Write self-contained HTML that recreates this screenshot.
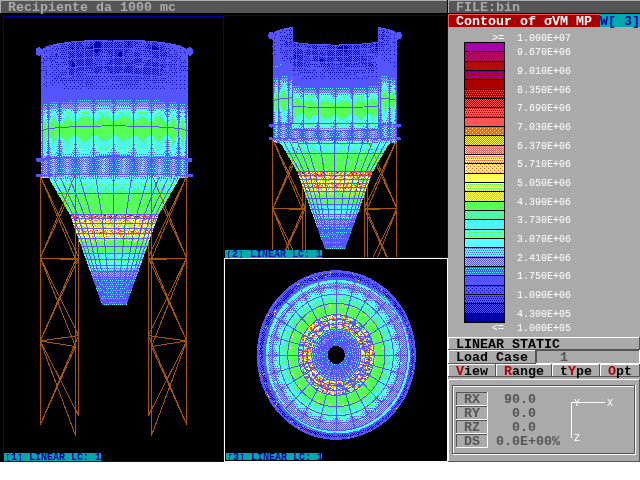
<!DOCTYPE html>
<html lang="it"><head><meta charset="utf-8"><title>Recipiente da 1000 mc</title>
<style>
html,body{margin:0;padding:0;background:#fff}
#s{position:relative;width:640px;height:480px;overflow:hidden;background:#fff}
#s svg{position:absolute;left:0;top:0}
.t,.q{will-change:transform}
.t{position:absolute;font:bold 13.3333px/14px "Liberation Mono",monospace;white-space:pre;letter-spacing:0}
.q{position:absolute;font:10px/8px "Liberation Mono",monospace;white-space:pre}
.v b{font-size:7.5px;display:inline-block;width:6px;text-align:center;position:relative;top:-1px}
.v{height:7px;padding-top:1px;overflow:hidden;font-weight:bold}
</style></head><body>
<div id="s">
<svg width="640" height="480" viewBox="0 0 640 480" shape-rendering="crispEdges">
<defs>
<pattern id="p1" width="4" height="4" patternUnits="userSpaceOnUse"><rect width="4" height="4" fill="#aa00aa"/></pattern>
<pattern id="p2" width="4" height="4" patternUnits="userSpaceOnUse"><rect width="4" height="4" fill="#aa00aa"/><path d="M0 0h1v1h-1zM2 2h1v1h-1z" fill="#aa0000"/></pattern>
<pattern id="p3" width="2" height="2" patternUnits="userSpaceOnUse"><rect width="2" height="2" fill="#aa00aa"/><rect width="1" height="1" fill="#aa0000"/><rect x="1" y="1" width="1" height="1" fill="#aa0000"/></pattern>
<pattern id="p4" width="4" height="4" patternUnits="userSpaceOnUse"><rect width="4" height="4" fill="#aa0000"/><path d="M0 0h1v1h-1zM2 0h1v1h-1zM1 2h1v1h-1zM3 2h1v1h-1z" fill="#aa00aa"/></pattern>
<pattern id="p5" width="4" height="4" patternUnits="userSpaceOnUse"><rect width="4" height="4" fill="#aa0000"/></pattern>
<pattern id="p6" width="4" height="4" patternUnits="userSpaceOnUse"><rect width="4" height="4" fill="#aa0000"/><path d="M0 0h1v1h-1zM2 0h1v1h-1zM1 2h1v1h-1zM3 2h1v1h-1z" fill="#ff5555"/></pattern>
<pattern id="p7" width="2" height="2" patternUnits="userSpaceOnUse"><rect width="2" height="2" fill="#aa0000"/><rect width="1" height="1" fill="#ff5555"/><rect x="1" y="1" width="1" height="1" fill="#ff5555"/></pattern>
<pattern id="p8" width="4" height="4" patternUnits="userSpaceOnUse"><rect width="4" height="4" fill="#ff5555"/><path d="M0 0h1v1h-1zM2 0h1v1h-1zM1 2h1v1h-1zM3 2h1v1h-1z" fill="#aa0000"/></pattern>
<pattern id="p9" width="4" height="4" patternUnits="userSpaceOnUse"><rect width="4" height="4" fill="#ff5555"/></pattern>
<pattern id="p10" width="4" height="4" patternUnits="userSpaceOnUse"><rect width="4" height="4" fill="#ff5555"/><path d="M0 0h1v1h-1zM2 2h1v1h-1z" fill="#ffff55"/></pattern>
<pattern id="p11" width="2" height="2" patternUnits="userSpaceOnUse"><rect width="2" height="2" fill="#ff5555"/><rect width="1" height="1" fill="#ffff55"/><rect x="1" y="1" width="1" height="1" fill="#ffff55"/></pattern>
<pattern id="p12" width="2" height="2" patternUnits="userSpaceOnUse"><rect width="2" height="2" fill="#ffff55"/><rect width="1" height="1" fill="#ff5555"/><rect x="1" y="1" width="1" height="1" fill="#ff5555"/></pattern>
<pattern id="p13" width="4" height="4" patternUnits="userSpaceOnUse"><rect width="4" height="4" fill="#ffff55"/><path d="M0 0h1v1h-1zM2 0h1v1h-1zM1 2h1v1h-1zM3 2h1v1h-1z" fill="#ff5555"/></pattern>
<pattern id="p14" width="4" height="4" patternUnits="userSpaceOnUse"><rect width="4" height="4" fill="#ffff55"/><path d="M0 0h1v1h-1zM2 2h1v1h-1z" fill="#ff5555"/></pattern>
<pattern id="p15" width="4" height="4" patternUnits="userSpaceOnUse"><rect width="4" height="4" fill="#ffff55"/></pattern>
<pattern id="p16" width="4" height="4" patternUnits="userSpaceOnUse"><rect width="4" height="4" fill="#ffff55"/><path d="M0 0h1v1h-1zM2 0h1v1h-1zM1 2h1v1h-1zM3 2h1v1h-1z" fill="#55ff55"/></pattern>
<pattern id="p17" width="2" height="2" patternUnits="userSpaceOnUse"><rect width="2" height="2" fill="#55ff55"/><rect width="1" height="1" fill="#ffff55"/><rect x="1" y="1" width="1" height="1" fill="#ffff55"/></pattern>
<pattern id="p18" width="4" height="4" patternUnits="userSpaceOnUse"><rect width="4" height="4" fill="#55ff55"/></pattern>
<pattern id="p19" width="4" height="4" patternUnits="userSpaceOnUse"><rect width="4" height="4" fill="#55ff55"/><path d="M0 0h1v1h-1zM2 2h1v1h-1z" fill="#55ffff"/></pattern>
<pattern id="p20" width="2" height="2" patternUnits="userSpaceOnUse"><rect width="2" height="2" fill="#55ff55"/><rect width="1" height="1" fill="#55ffff"/><rect x="1" y="1" width="1" height="1" fill="#55ffff"/></pattern>
<pattern id="p21" width="4" height="4" patternUnits="userSpaceOnUse"><rect width="4" height="4" fill="#55ffff"/><path d="M0 0h1v1h-1zM2 0h1v1h-1zM1 2h1v1h-1zM3 2h1v1h-1z" fill="#55ff55"/></pattern>
<pattern id="p22" width="4" height="4" patternUnits="userSpaceOnUse"><rect width="4" height="4" fill="#55ffff"/></pattern>
<pattern id="p23" width="4" height="4" patternUnits="userSpaceOnUse"><rect width="4" height="4" fill="#55ffff"/><path d="M0 0h1v1h-1zM2 0h1v1h-1zM1 2h1v1h-1zM3 2h1v1h-1z" fill="#5555ff"/></pattern>
<pattern id="p24" width="2" height="2" patternUnits="userSpaceOnUse"><rect width="2" height="2" fill="#55ffff"/><rect width="1" height="1" fill="#5555ff"/><rect x="1" y="1" width="1" height="1" fill="#5555ff"/></pattern>
<pattern id="p25" width="4" height="4" patternUnits="userSpaceOnUse"><rect width="4" height="4" fill="#5555ff"/><path d="M0 0h1v1h-1zM2 0h1v1h-1zM1 2h1v1h-1zM3 2h1v1h-1z" fill="#55ffff"/></pattern>
<pattern id="p26" width="4" height="4" patternUnits="userSpaceOnUse"><rect width="4" height="4" fill="#5555ff"/></pattern>
<pattern id="p27" width="4" height="4" patternUnits="userSpaceOnUse"><rect width="4" height="4" fill="#5555ff"/><path d="M0 0h1v1h-1zM2 2h1v1h-1z" fill="#0000aa"/></pattern>
<pattern id="p28" width="4" height="4" patternUnits="userSpaceOnUse"><rect width="4" height="4" fill="#5555ff"/><path d="M0 0h1v1h-1zM2 0h1v1h-1zM1 2h1v1h-1zM3 2h1v1h-1z" fill="#0000aa"/></pattern>
<pattern id="p29" width="2" height="2" patternUnits="userSpaceOnUse"><rect width="2" height="2" fill="#0000aa"/><rect width="1" height="1" fill="#5555ff"/><rect x="1" y="1" width="1" height="1" fill="#5555ff"/></pattern>
<pattern id="p30" width="4" height="4" patternUnits="userSpaceOnUse"><rect width="4" height="4" fill="#0000aa"/></pattern>
</defs>
<rect x="0" y="0" width="448" height="462" fill="#000000"/>
<rect x="0" y="0" width="447" height="13" fill="#555555"/>
<rect x="0" y="0" width="447" height="1" fill="#aaaaaa"/>
<rect x="0" y="0" width="1" height="13" fill="#aaaaaa"/>
<rect x="447" y="0" width="1" height="13" fill="#000000"/>
<rect x="448" y="0" width="192" height="13" fill="#555555"/>
<rect x="448" y="0" width="192" height="1" fill="#aaaaaa"/>
<rect x="448" y="0" width="1" height="13" fill="#aaaaaa"/>
<rect x="448" y="13" width="192" height="1" fill="#000000"/>
<rect x="448" y="14" width="152" height="13" fill="#aa0000"/>
<rect x="448" y="14" width="152" height="1" fill="#ff5555"/>
<rect x="448" y="14" width="1" height="13" fill="#ff5555"/>
<rect x="600" y="14" width="40" height="13" fill="#00aaaa"/>
<rect x="448" y="27" width="192" height="310" fill="#aaaaaa"/>
<!--models-->
<clipPath id="c1"><rect x="4" y="17" width="219" height="444"/></clipPath><g clip-path="url(#c1)">
<path d="M78.6 176.0L78.6 415.6M60.0 259.0L78.6 259.0M40.3 341.0L78.6 335.6M40.3 176.0L78.6 257.0M78.6 176.0L40.3 258.0M40.3 258.0L78.6 335.6M78.6 258.0L40.3 341.0M40.3 341.0L78.6 415.6M78.6 335.6L40.3 424.7M148.4 176.0L148.4 415.6M167.0 259.0L148.4 259.0M186.7 341.0L148.4 335.6M186.7 176.0L148.4 257.0M148.4 176.0L186.7 258.0M186.7 258.0L148.4 335.6M148.4 258.0L186.7 341.0M186.7 341.0L148.4 415.6M148.4 335.6L186.7 424.7" fill="none" stroke="#aa5500" stroke-width="1"/>
<path fill="url(#p3)" d="M0 0m114 216h2v1h-2z"/>
<path fill="url(#p5)" d="M0 0m104 215h2v1h-2zm26 0h2v1h-2z"/>
<path fill="url(#p6)" d="M0 0m156 214h2v1h-2zm-86 1h2v1h-2zm24 1h2v1h-2zm16 0h2v1h-2zm24 0h4v1h-4zm-58 1h2v1h-2zm56 14h2v1h-2z"/>
<path fill="url(#p7)" d="M0 0m116 215h2v1h-2zm-44 1h2v1h-2zm14 0h2v1h-2zm10 0h2v1h-2zm4 0h2v1h-2zm8 0h2v1h-2zm18 0h2v1h-2zm18 0h2v1h-2zm-42 1h2v1h-2zm8 0h2v1h-2zm-38 1h2v1h-2zm4 0h2v1h-2zm66 0h2v1h-2zm-28 1h2v1h-2zm32 11h2v1h-2z"/>
<path fill="url(#p8)" d="M0 0m72 214h2v1h-2zm80 0h2v1h-2zm-62 1h2v1h-2zm38 0h2v2h-2zm12 0h2v1h-2zm-58 1h2v1h-2zm56 0h2v1h-2zm18 0h2v1h-2zm-58 1h2v1h-2zm6 0h2v2h-2zm32 0h4v1h-4zm10 0h2v1h-2zm-54 1h2v1h-2zm20 0h2v1h-2zm26 0h2v1h-2zm-62 2h2v1h-2zm20 10h2v1h-2zm-18 1h2v1h-2zm52 0h2v1h-2zm14 0h2v1h-2zm-44 1h2v1h-2z"/>
<path fill="url(#p9)" d="M0 0m76 214h2v1h-2zm22 0h2v1h-2zm36 0h2v1h-2zm20 0h2v1h-2zm-66 1h2v1h-2zm4 0h2v1h-2zm4 0h2v1h-2zm4 0h2v1h-2zm38 0h2v1h-2zm-48 1h2v1h-2zm14 0h2v1h-2zm14 0h2v1h-2zm28 0h4v1h-4zm-54 1h2v1h-2zm22 0h2v1h-2zm8 0h2v1h-2zm-22 1h2v1h-2zm26 0h2v1h-2zm4 0h2v1h-2zm16 0h2v1h-2zm-72 1h2v1h-2zm70 0h2v1h-2zm-18 1h2v1h-2zm18 9h2v1h-2zm-42 1h2v1h-2zm18 0h2v1h-2zm-28 2h2v1h-2z"/>
<path fill="url(#p10)" d="M0 0m78 214h4v1h-4zm48 0h2v1h-2zm6 0h2v2h-2zm10 0h2v1h-2zm-70 1h2v1h-2zm4 0h2v1h-2zm4 0h2v1h-2zm30 0h2v1h-2zm10 0h2v1h-2zm34 0h2v1h-2zm-83 1h1v1h-1zm13 0h2v1h-2zm38 0h2v1h-2zm18 0h2v1h-2zm10 0h2v1h-2zm-62 1h2v1h-2zm6 0h2v1h-2zm14 0h2v1h-2zm4 0h2v1h-2zm4 0h2v1h-2zm8 0h2v1h-2zm10 0h2v1h-2zm14 0h2v1h-2zm-62 1h2v1h-2zm10 0h2v1h-2zm14 0h2v2h-2zm26 0h2v1h-2zm16 0h2v1h-2zm4 0h1v1h-1zm-58 1h2v1h-2zm4 0h2v1h-2zm52 0h2v1h-2zm-60 1h2v1h-2zm20 0h2v1h-2zm-36 8h2v1h-2zm6 0h2v1h-2zm8 0h2v1h-2zm26 1h2v1h-2zm22 0h2v1h-2zm-54 1h2v1h-2zm8 0h2v1h-2zm-10 1h2v1h-2zm20 0h2v1h-2zm6 0h2v1h-2zm10 0h4v1h-4zm-38 1h2v1h-2zm22 1h2v1h-2zm40 0h2v1h-2zm-24 1h2v1h-2zm14 0h2v1h-2z"/>
<path fill="url(#p11)" d="M0 0m74 214h2v1h-2zm36 0h4v1h-4zm10 0h4v1h-4zm24 0h2v1h-2zm-66 1h2v1h-2zm20 0h2v2h-2zm10 0h2v1h-2zm16 0h2v2h-2zm12 0h2v1h-2zm16 0h2v1h-2zm-72 1h2v1h-2zm8 0h2v1h-2zm14 0h2v1h-2zm4 0h2v1h-2zm6 0h2v1h-2zm8 0h2v1h-2zm12 0h2v1h-2zm-61 1h1v1h-1zm7 0h2v1h-2zm4 0h2v1h-2zm8 0h2v1h-2zm36 0h2v1h-2zm4 0h2v1h-2zm10 0h2v2h-2zm4 0h2v1h-2zm6 0h2v2h-2zm-52 1h2v1h-2zm8 0h2v1h-2zm8 0h4v1h-4zm14 0h2v1h-2zm4 0h2v1h-2zm-56 1h2v1h-2zm10 0h2v1h-2zm6 0h2v1h-2zm26 0h2v1h-2zm8 0h2v1h-2zm10 0h2v1h-2zm10 0h4v1h-4zm-68 1h2v1h-2zm10 0h2v1h-2zm16 0h2v1h-2zm28 0h2v1h-2zm22 0h2v1h-2zm-70 1h2v1h-2zm28 0h2v1h-2zm38 0h2v1h-2zm-72 1h2v1h-2zm-2 6h2v1h-2zm10 0h2v1h-2zm20 0h2v1h-2zm20 0h2v1h-2zm20 0h2v1h-2zm-30 1h2v1h-2zm-36 1h2v1h-2zm24 0h4v1h-4zm6 0h2v1h-2zm22 0h2v1h-2zm8 0h2v1h-2zm8 0h2v2h-2zm-62 1h2v1h-2zm6 0h2v1h-2zm36 0h2v1h-2zm-44 1h2v1h-2zm46 0h2v1h-2zm12 0h2v1h-2zm8 0h2v1h-2zm-50 1h2v1h-2zm30 1h2v1h-2zm14 0h2v1h-2zm6 0h2v1h-2zm-36 1h2v1h-2z"/>
<path fill="url(#p12)" d="M0 0m94 214h4v1h-4zm10 0h2v1h-2zm4 0h2v1h-2zm16 0h2v1h-2zm6 0h2v1h-2zm8 0h2v1h-2zm8 0h2v1h-2zm-64 1h4v1h-4zm20 0h2v1h-2zm12 0h2v1h-2zm8 0h2v1h-2zm20 0h4v1h-4zm6 0h2v1h-2zm-72 1h2v1h-2zm16 0h2v1h-2zm24 0h2v1h-2zm14 0h2v1h-2zm22 0h4v1h-4zm-78 1h2v1h-2zm32 0h2v1h-2zm12 0h4v1h-4zm10 0h2v1h-2zm14 0h2v1h-2zm-60 1h2v1h-2zm8 0h2v3h-2zm4 0h2v1h-2zm28 0h4v1h-4zm12 0h2v1h-2zm-56 1h4v1h-4zm6 0h2v2h-2zm20 0h2v1h-2zm48 0h2v1h-2zm4 0h1v1h-1zm-82 1h2v1h-2zm22 0h2v1h-2zm24 0h2v1h-2zm22 0h2v1h-2zm-20 1h2v1h-2zm16 0h2v1h-2zm-48 1h2v1h-2zm40 0h2v1h-2zm-22 1h2v1h-2zm8 5h4v1h-4zm24 0h2v1h-2zm4 0h2v1h-2zm6 0h2v1h-2zm-72 1h4v1h-4zm22 0h4v1h-4zm28 0h2v1h-2zm-44 1h2v1h-2zm6 0h4v1h-4zm22 0h4v1h-4zm6 0h2v3h-2zm16 0h2v2h-2zm18 0h1v2h-1zm-70 1h2v1h-2zm6 0h2v2h-2zm26 0h2v3h-2zm-36 1h2v1h-2zm24 0h2v1h-2zm26 0h2v1h-2zm10 0h4v1h-4zm10 1h2v2h-2zm-70 1h2v1h-2zm32 0h2v1h-2zm12 0h2v1h-2zm6 0h2v1h-2zm10 0h2v1h-2zm12 2h1v1h-1z"/>
<path fill="url(#p13)" d="M0 0m70 214h2v1h-2zm14 0h2v1h-2zm4 0h4v1h-4zm14 0h2v1h-2zm14 0h2v1h-2zm12 0h2v1h-2zm20 0h2v1h-2zm10 0h1v1h-1zm-72 1h2v1h-2zm20 0h2v1h-2zm20 0h2v1h-2zm24 0h2v1h-2zm6 0h2v1h-2zm-82 1h2v1h-2zm68 0h2v1h-2zm-70 1h2v1h-2zm8 0h2v1h-2zm4 0h2v2h-2zm12 0h2v1h-2zm4 0h2v1h-2zm32 0h2v1h-2zm22 0h2v2h-2zm-83 1h1v1h-1zm3 0h2v1h-2zm44 0h2v1h-2zm26 0h2v1h-2zm-38 1h2v1h-2zm6 0h2v1h-2zm12 0h2v2h-2zm4 0h4v1h-4zm22 0h2v1h-2zm-50 1h2v1h-2zm8 0h4v1h-4zm8 0h2v1h-2zm12 0h2v1h-2zm16 0h2v1h-2zm-72 1h4v1h-4zm16 0h2v1h-2zm10 0h2v1h-2zm16 0h4v1h-4zm20 0h4v1h-4zm6 0h2v1h-2zm8 0h2v1h-2zm-48 1h2v1h-2zm4 0h2v1h-2zm16 0h2v1h-2zm24 0h4v1h-4zm6 0h2v1h-2zm4 0h2v1h-2zm-70 1h2v1h-2zm18 0h2v1h-2zm-29 1h1v1h-1zm43 0h2v1h-2zm-26 1h2v1h-2zm62 0h2v1h-2zm-50 1h2v1h-2zm-22 1h2v1h-2zm14 0h2v1h-2zm20 0h2v1h-2zm12 0h2v1h-2zm-51 1h1v1h-1zm23 0h2v1h-2zm4 0h2v1h-2zm22 0h2v1h-2zm4 0h2v1h-2zm-52 1h2v3h-2zm8 0h2v1h-2zm8 0h4v1h-4zm12 0h2v1h-2zm26 0h2v1h-2zm16 0h2v1h-2zm4 0h3v1h-3zm-42 1h2v2h-2zm8 0h2v1h-2zm8 0h2v1h-2zm4 0h2v1h-2zm8 0h2v3h-2zm14 0h2v1h-2zm-56 1h2v1h-2zm4 0h2v1h-2zm14 0h2v2h-2zm28 0h4v1h-4zm-34 1h2v1h-2zm10 0h2v1h-2zm30 0h2v2h-2zm-66 1h6v1h-6zm10 0h2v1h-2zm6 0h4v1h-4zm32 0h2v1h-2zm4 0h2v2h-2zm18 0h2v1h-2zm-73 1h1v1h-1zm21 0h2v1h-2zm4 0h2v1h-2zm10 0h2v1h-2zm4 0h4v1h-4zm-22 1h2v1h-2zm44 0h2v1h-2zm-32 1h2v1h-2zm26 0h2v1h-2z"/>
<path fill="url(#p14)" d="M0 0m100 214h2v1h-2zm6 0h2v1h-2zm-32 1h2v1h-2zm20 0h2v1h-2zm-16 1h2v1h-2zm74 1h2v1h-2zm4 0h2v1h-2zm-78 1h2v1h-2zm10 0h2v1h-2zm14 0h2v1h-2zm6 0h2v1h-2zm-36 1h2v2h-2zm10 0h2v3h-2zm14 0h2v1h-2zm4 0h2v1h-2zm16 0h2v1h-2zm24 0h2v2h-2zm-18 1h2v1h-2zm8 0h2v1h-2zm4 0h2v1h-2zm16 0h4v1h-4zm-74 1h2v1h-2zm14 0h4v1h-4zm20 0h2v1h-2zm18 0h6v1h-6zm-46 1h4v1h-4zm26 0h4v1h-4zm16 0h2v2h-2zm16 0h2v1h-2zm-67 1h1v1h-1zm39 0h4v1h-4zm6 0h2v1h-2zm12 0h2v1h-2zm12 0h2v1h-2zm-62 1h2v1h-2zm18 0h2v2h-2zm8 0h2v2h-2zm16 0h2v1h-2zm12 0h2v1h-2zm6 0h2v1h-2zm8 0h2v1h-2zm6 0h1v1h-1zm-72 1h2v1h-2zm6 0h2v1h-2zm4 0h2v1h-2zm18 0h2v1h-2zm32 0h2v2h-2zm-68 1h2v1h-2zm44 0h2v1h-2zm-28 1h2v1h-2zm8 0h2v1h-2zm14 0h2v1h-2zm12 0h2v1h-2zm-28 1h2v1h-2zm12 0h2v1h-2zm12 0h2v1h-2zm12 0h4v1h-4zm-57 1h1v1h-1zm31 0h4v1h-4zm14 0h8v1h-8zm12 0h2v1h-2zm-36 2h2v1h-2zm10 0h2v1h-2zm18 0h4v1h-4zm22 0h2v1h-2zm-60 1h2v1h-2zm8 0h4v1h-4zm16 0h2v1h-2zm22 0h4v1h-4zm16 0h2v1h-2zm-22 1h2v2h-2zm14 0h2v1h-2zm-60 1h2v1h-2zm4 0h2v1h-2zm4 0h2v1h-2zm4 0h2v1h-2zm4 0h2v1h-2zm10 0h2v1h-2zm-26 1h4v1h-4zm10 0h4v1h-4zm20 0h2v1h-2zm40 0h1v1h-1zm-60 1h6v1h-6zm30 0h2v1h-2zm10 0h2v1h-2zm-12 1h2v1h-2z"/>
<path fill="url(#p15)" d="M0 0m112 215h2v1h-2zm22 0h2v1h-2zm-48 2h2v1h-2zm22 2h2v1h-2zm24 0h2v1h-2zm6 0h2v1h-2zm-46 1h2v1h-2zm10 0h2v1h-2zm4 0h2v1h-2zm30 0h4v1h-4zm-42 1h2v1h-2zm10 0h2v1h-2zm16 0h2v1h-2zm4 0h2v1h-2zm-51 1h1v1h-1zm7 0h2v1h-2zm6 0h4v2h-4zm8 0h6v1h-6zm12 0h2v1h-2zm8 0h4v1h-4zm8 0h2v1h-2zm10 0h6v1h-6zm20 0h2v1h-2zm-56 1h4v1h-4zm14 0h2v1h-2zm6 0h2v1h-2zm18 0h2v1h-2zm4 0h2v1h-2zm6 0h2v1h-2zm4 0h2v1h-2zm-74 1h2v2h-2zm4 0h2v2h-2zm4 0h2v1h-2zm4 0h2v1h-2zm6 0h2v1h-2zm32 0h2v1h-2zm8 0h2v1h-2zm4 0h2v1h-2zm6 0h4v1h-4zm-40 1h2v1h-2zm28 0h2v1h-2zm18 0h2v1h-2zm-68 1h2v1h-2zm4 0h2v1h-2zm16 0h2v1h-2zm6 0h4v1h-4zm10 0h2v1h-2zm4 0h2v1h-2zm6 0h2v1h-2zm6 0h4v1h-4zm12 0h2v1h-2zm-70 1h2v1h-2zm12 0h2v1h-2zm6 0h2v1h-2zm14 0h2v1h-2zm16 0h2v1h-2zm6 0h2v1h-2zm10 0h2v1h-2zm10 0h2v1h-2zm4 0h2v2h-2zm-72 1h2v1h-2zm14 0h2v1h-2zm10 0h2v1h-2zm26 0h2v1h-2zm6 0h2v1h-2zm6 0h2v2h-2zm-56 1h6v1h-6zm12 0h2v1h-2zm14 0h2v1h-2zm-24 1h2v1h-2zm12 0h2v1h-2zm30 0h2v1h-2zm-14 1h2v1h-2zm-40 1h2v1h-2zm14 0h2v1h-2zm18 0h2v1h-2zm14 0h2v1h-2zm4 0h2v1h-2zm-24 1h2v1h-2zm4 0h6v1h-6zm18 0h2v1h-2zm12 0h2v2h-2zm-42 1h2v1h-2zm14 0h2v1h-2zm6 0h2v1h-2zm32 0h2v1h-2zm-69 1h1v1h-1zm7 0h2v1h-2zm14 0h12v1h-12zm20 0h2v1h-2zm4 0h2v2h-2zm10 0h2v1h-2zm10 0h4v1h-4zm6 0h2v1h-2zm-60 1h2v2h-2zm16 0h2v1h-2zm6 0h2v2h-2zm6 0h2v1h-2zm24 0h4v1h-4zm-58 1h4v1h-4zm12 0h4v1h-4zm6 0h2v1h-2zm20 0h2v1h-2zm20 0h2v1h-2zm6 0h2v1h-2zm-62 1h2v1h-2zm20 0h2v1h-2zm8 0h2v1h-2zm6 0h2v1h-2z"/>
<path fill="url(#p16)" d="M0 0m86 214h2v1h-2zm50 0h2v1h-2zm-16 4h2v1h-2zm-26 1h2v1h-2zm28 0h2v1h-2zm12 0h2v1h-2zm8 0h2v1h-2zm-62 1h2v2h-2zm6 0h2v1h-2zm70 0h1v1h-1zm-54 1h2v2h-2zm6 0h2v1h-2zm10 0h2v2h-2zm24 0h6v1h-6zm10 0h2v1h-2zm-76 1h2v1h-2zm16 0h2v1h-2zm50 0h2v1h-2zm6 0h2v1h-2zm-68 1h2v1h-2zm10 0h4v1h-4zm16 0h2v1h-2zm16 0h2v1h-2zm6 0h2v1h-2zm4 0h2v1h-2zm18 0h4v1h-4zm-56 1h2v1h-2zm6 0h2v2h-2zm4 0h2v3h-2zm4 0h2v1h-2zm4 0h4v1h-4zm8 0h2v1h-2zm6 0h2v1h-2zm26 0h2v1h-2zm-68 1h2v1h-2zm12 0h2v1h-2zm18 0h6v1h-6zm8 0h2v1h-2zm4 0h4v1h-4zm10 0h2v1h-2zm8 0h4v1h-4zm10 0h1v1h-1zm-78 1h2v2h-2zm12 0h6v1h-6zm8 0h4v1h-4zm34 0h2v1h-2zm6 0h4v1h-4zm16 0h2v1h-2zm-70 1h2v1h-2zm26 0h4v1h-4zm12 0h2v1h-2zm26 0h2v1h-2zm4 0h2v1h-2zm-50 1h2v1h-2zm14 0h2v2h-2zm24 0h2v2h-2zm10 0h2v1h-2zm-66 1h2v1h-2zm14 0h2v1h-2zm14 0h2v1h-2zm-32 1h2v1h-2zm44 0h2v1h-2zm20 0h2v1h-2zm-62 1h2v1h-2zm20 0h2v1h-2zm50 0h2v1h-2zm-6 1h2v1h-2zm-66 1h2v1h-2zm14 0h4v1h-4zm20 0h2v1h-2zm-30 1h2v1h-2zm8 0h2v1h-2zm14 0h2v1h-2zm-26 1h2v1h-2zm18 0h2v1h-2zm28 0h2v1h-2zm4 0h4v1h-4zm6 0h2v1h-2zm6 0h2v1h-2zm6 0h2v1h-2zm-68 1h8v1h-8zm20 0h2v4h-2zm10 0h2v1h-2zm4 0h4v2h-4zm6 0h2v1h-2zm8 0h4v1h-4zm8 0h4v1h-4zm10 0h6v1h-6zm-58 1h2v1h-2zm4 0h2v1h-2zm12 0h2v1h-2zm26 0h2v1h-2zm6 0h6v1h-6zm-54 1h2v1h-2zm10 0h6v1h-6zm18 0h2v1h-2zm8 0h2v1h-2zm4 0h2v1h-2zm14 0h2v1h-2zm4 0h2v1h-2zm8 0h4v1h-4zm-40 1h2v1h-2zm6 0h2v1h-2zm32 0h2v1h-2zm4 0h2v1h-2zm-69 1h1v1h-1zm23 0h2v1h-2zm28 0h2v1h-2z"/>
<path fill="url(#p17)" d="M0 0m69 213h1v1h-1zm5 0h2v1h-2zm6 0h4v1h-4zm8 0h4v1h-4zm8 0h2v1h-2zm6 0h8v1h-8zm12 0h2v1h-2zm8 0h2v1h-2zm8 0h2v1h-2zm4 0h4v1h-4zm10 0h2v1h-2zm4 0h4v1h-4zm10 0h1v1h-1zm-66 1h2v1h-2zm26 0h2v2h-2zm22 0h2v1h-2zm10 0h2v1h-2zm-70 4h2v1h-2zm68 0h2v1h-2zm-28 1h2v1h-2zm-22 1h2v1h-2zm48 0h4v1h-4zm-68 1h2v1h-2zm8 0h2v1h-2zm14 0h2v1h-2zm6 0h2v1h-2zm20 0h2v3h-2zm-14 1h2v1h-2zm26 0h2v1h-2zm-62 1h2v1h-2zm18 0h2v1h-2zm6 0h2v1h-2zm20 0h2v1h-2zm16 0h2v1h-2zm10 0h2v2h-2zm8 0h1v1h-1zm-70 1h2v1h-2zm4 0h4v1h-4zm8 0h2v1h-2zm14 0h2v1h-2zm8 0h2v1h-2zm10 0h2v1h-2zm10 0h2v1h-2zm-62 1h2v1h-2zm4 0h2v1h-2zm6 0h2v1h-2zm22 0h2v1h-2zm12 0h2v1h-2zm4 0h2v2h-2zm26 0h2v2h-2zm-72 1h2v1h-2zm16 0h2v1h-2zm16 0h6v1h-6zm30 0h2v1h-2zm6 0h2v1h-2zm-58 1h2v1h-2zm8 0h2v1h-2zm4 0h4v1h-4zm18 0h2v1h-2zm16 0h4v1h-4zm8 0h4v1h-4zm-60 1h2v1h-2zm8 0h2v1h-2zm32 0h2v1h-2zm26 1h2v1h-2zm-66 1h2v1h-2zm16 0h2v1h-2zm40 0h2v1h-2zm6 0h2v1h-2zm-54 1h2v1h-2zm-10 1h2v1h-2zm40 0h2v1h-2zm4 0h2v1h-2zm-38 1h4v1h-4zm30 0h4v1h-4zm6 0h2v1h-2zm8 0h2v1h-2zm4 0h2v1h-2zm4 0h2v1h-2zm-52 1h2v3h-2zm14 0h2v1h-2zm40 0h4v1h-4zm-28 1h2v1h-2zm4 0h2v1h-2zm4 0h2v1h-2zm6 0h2v1h-2zm10 0h2v1h-2zm-34 1h2v1h-2zm-24 1h4v1h-4zm14 0h2v1h-2zm12 0h2v1h-2zm4 0h2v1h-2zm8 0h2v1h-2zm8 0h2v1h-2zm6 0h2v1h-2zm18 0h2v1h-2zm-70 1h2v1h-2zm4 0h2v1h-2zm4 0h2v1h-2zm10 0h2v3h-2zm14 0h2v1h-2zm4 0h2v1h-2zm10 0h10v1h-10zm12 0h2v1h-2zm6 0h4v1h-4zm-62 1h6v1h-6zm10 0h2v1h-2zm10 0h6v1h-6zm8 0h4v1h-4zm6 0h8v1h-8zm12 0h2v1h-2zm8 0h4v3h-4zm8 0h2v2h-2zm4 0h2v1h-2zm-64 1h2v1h-2zm4 0h2v1h-2zm6 0h2v1h-2zm8 0h2v1h-2zm4 0h2v1h-2zm4 0h2v1h-2zm6 0h2v1h-2zm10 0h2v1h-2zm4 0h2v1h-2zm20 0h1v1h-1zm-69 1h1v1h-1zm5 0h2v1h-2zm6 0h4v1h-4zm12 0h4v1h-4zm8 0h4v1h-4zm8 0h2v1h-2zm10 0h4v1h-4zm16 0h2v1h-2zm-52 1h2v1h-2z"/>
<path fill="url(#p18)" d="M0 0m101 117h5v1h-5zm20 0h5v1h-5zm-54 1h2v1h-2zm15 0h6v1h-6zm18 0h8v1h-8zm20 0h7v1h-7zm20 0h5v1h-5zm18 0h3v1h-3zm-93 1h5v1h-5zm16 0h8v1h-8zm18 0h10v1h-10zm19 0h11v1h-11zm20 0h9v1h-9zm19 0h5v1h-5zm15 0h1v1h-1zm-120 1h3v1h-3zm13 0h6v1h-6zm14 0h12v1h-12zm18 0h14v1h-14zm19 0h15v1h-15zm21 0h11v1h-11zm19 0h6v1h-6zm16 0h3v1h-3zm-128 1h2v3h-2zm8 0h4v2h-4zm12 0h8v1h-8zm13 0h16v1h-16zm17 0h39v1h-39zm40 0h16v1h-16zm20 0h9v1h-9zm17 0h4v2h-4zm11 0h1v1h-1zm-119 1h12v1h-12zm13 0h88v1h-88zm105 0h3v3h-3zm-130 1h6v1h-6zm11 0h103v1h-103zm108 0h6v1h-6zm-126 1h3v1h-3zm7 0h7v1h-7zm10 0h106v1h-106zm108 0h8v1h-8zm-126 1h4v1h-4zm7 0h127v1h-127zm130 0h5v1h-5zm-137 1h5v1h-5zm6 0h136v1h-136zm138 0h1v2h-1zm-144 1h143v1h-143zm-2 1h147v6h-147zm0 6h7v1h-7zm8 0h9v1h-9zm12 0h32v1h-32zm33 0h19v1h-19zm21 0h18v1h-18zm19 0h32v1h-32zm35 0h9v1h-9zm10 0h9v1h-9zm-138 1h6v1h-6zm9 0h7v1h-7zm13 0h10v1h-10zm14 0h14v1h-14zm20 0h13v1h-13zm20 0h14v1h-14zm19 0h14v1h-14zm18 0h11v1h-11zm16 0h7v1h-7zm10 0h8v1h-8zm-139 1h1v1h-1zm2 0h4v1h-4zm8 0h6v1h-6zm13 0h8v1h-8zm15 0h10v1h-10zm20 0h10v1h-10zm20 0h10v1h-10zm19 0h10v1h-10zm17 0h8v1h-8zm16 0h5v1h-5zm10 0h4v1h-4zm6 0h1v3h-1zm-144 1h3v1h-3zm9 0h4v2h-4zm13 0h6v1h-6zm16 0h7v1h-7zm19 0h7v1h-7zm20 0h7v1h-7zm19 0h7v1h-7zm17 0h7v1h-7zm15 0h4v1h-4zm10 0h3v2h-3zm-137 1h2v4h-2zm21 0h5v1h-5zm17 0h5v1h-5zm19 0h5v1h-5zm20 0h5v1h-5zm19 0h5v1h-5zm17 0h5v1h-5zm15 0h3v2h-3zm-120 1h3v1h-3zm14 0h3v1h-3zm92 0h3v1h-3zm24 0h2v2h-2zm-129 1h2v1h-2zm119 0h2v1h-2zm10 1h1v1h-1zm-122 51h1v1h-1zm7 0h1v1h-1zm10 0h2v1h-2zm13 0h2v1h-2zm15 0h2v1h-2zm15 0h3v1h-3zm15 0h2v1h-2zm13 0h3v1h-3zm11 0h2v1h-2zm8 0h1v1h-1zm-107 1h2v1h-2zm6 0h3v1h-3zm10 0h5v1h-5zm13 0h5v1h-5zm14 0h6v1h-6zm16 0h5v1h-5zm15 0h5v1h-5zm13 0h4v1h-4zm11 0h3v1h-3zm8 0h2v1h-2zm-108 1h1v1h-1zm2 0h3v1h-3zm6 0h5v1h-5zm9 0h7v1h-7zm13 0h8v1h-8zm14 0h9v1h-9zm15 0h9v1h-9zm15 0h8v1h-8zm13 0h7v1h-7zm12 0h5v1h-5zm8 0h3v1h-3zm-105 1h4v1h-4zm5 0h7v1h-7zm9 0h10v1h-10zm12 0h11v1h-11zm14 0h12v1h-12zm15 0h12v1h-12zm15 0h11v1h-11zm14 0h9v1h-9zm11 0h7v1h-7zm9 0h4v1h-4zm5 0h1v1h-1zm-110 1h110v1h-110zm1 1h109v1h-109zm1 1h107v1h-107zm0 1h106v1h-106zm1 1h105v1h-105zm0 1h104v1h-104zm1 1h103v1h-103zm0 1h102v1h-102zm1 1h100v1h-100zm1 1h99v1h-99zm0 1h98v1h-98zm1 1h97v1h-97zm0 1h96v1h-96zm1 1h95v1h-95zm0 1h94v1h-94zm1 1h92v1h-92zm1 1h91v1h-91zm1 1h4v1h-4zm6 0h4v1h-4zm8 0h4v1h-4zm8 0h4v1h-4zm6 0h4v1h-4zm12 0h4v1h-4zm6 0h6v1h-6zm8 0h6v1h-6zm8 0h2v1h-2zm6 0h6v1h-6zm8 0h2v1h-2zm6 0h6v1h-6zm-70 1h2v1h-2zm6 5h2v1h-2zm8 2h2v1h-2zm-22 1h2v1h-2zm54 0h2v1h-2zm-46 1h2v1h-2zm22 0h2v1h-2zm36 0h2v1h-2zm-38 1h2v1h-2zm48 0h2v1h-2zm-56 1h2v1h-2zm18 0h2v1h-2zm20 0h4v1h-4zm6 0h4v1h-4zm-56 1h2v1h-2zm4 0h2v1h-2zm42 0h2v1h-2zm20 0h2v1h-2zm-64 1h2v1h-2zm32 0h2v1h-2zm16 0h2v1h-2zm8 0h2v1h-2zm-6 2h2v1h-2zm-8 1h2v1h-2zm12 1h2v1h-2zm-34 1h2v1h-2zm-27 1h1v1h-1zm43 0h2v1h-2zm4 1h2v1h-2zm-36 1h2v1h-2zm8 1h2v1h-2zm4 0h2v1h-2zm24 0h2v1h-2zm14 0h2v1h-2zm-32 1h2v2h-2zm16 0h2v2h-2zm4 0h2v1h-2zm6 0h2v1h-2zm10 0h4v1h-4zm-54 1h2v3h-2zm12 0h2v1h-2zm40 0h2v1h-2zm-61 1h1v1h-1zm13 0h2v1h-2zm30 0h4v1h-4zm6 0h4v1h-4zm10 0h4v1h-4zm-58 1h2v1h-2zm4 0h2v1h-2zm10 0h2v1h-2zm4 0h2v1h-2zm8 0h2v1h-2zm6 0h2v1h-2zm4 0h8v1h-8zm10 0h2v1h-2zm6 0h2v1h-2zm8 0h2v1h-2zm4 0h4v1h-4zm-64 1h4v1h-4zm6 0h4v1h-4zm8 0h8v1h-8zm12 0h4v1h-4zm8 0h4v1h-4zm6 0h8v1h-8zm18 0h6v1h-6zm8 0h3v1h-3zm-66 1h12v1h-12zm14 0h55v1h-55zm-14 1h68v1h-68zm1 1h67v2h-67zm0 2h66v1h-66zm1 1h65v2h-65zm0 2h64v1h-64zm1 1h63v1h-63z"/>
<path fill="url(#p19)" d="M0 0m101 115h5v1h-5zm20 0h5v1h-5zm-39 1h6v1h-6zm18 0h8v1h-8zm20 0h7v1h-7zm20 0h5v1h-5zm18 0h2v1h-2zm-93 1h5v1h-5zm16 0h8v1h-8zm18 0h2v1h-2zm7 0h3v1h-3zm13 0h2v1h-2zm7 0h3v1h-3zm12 0h9v1h-9zm19 0h5v1h-5zm-105 1h3v1h-3zm13 0h2v1h-2zm4 0h2v1h-2zm10 0h3v1h-3zm9 0h2v1h-2zm9 0h3v1h-3zm11 0h2v1h-2zm9 0h3v1h-3zm10 0h3v1h-3zm10 0h3v1h-3zm8 0h3v1h-3zm11 0h2v1h-2zm5 0h1v1h-1zm11 0h3v1h-3zm-128 1h2v2h-2zm8 0h4v1h-4zm12 0h1v2h-1zm6 0h2v1h-2zm8 0h3v1h-3zm11 0h2v1h-2zm7 0h3v1h-3zm13 0h3v1h-3zm7 0h2v1h-2zm13 0h3v1h-3zm7 0h2v1h-2zm11 0h2v1h-2zm8 0h2v1h-2zm7 0h1v1h-1zm9 0h1v2h-1zm2 0h2v1h-2zm9 0h1v1h-1zm-127 1h1v1h-1zm16 0h2v1h-2zm6 0h2v1h-2zm14 0h6v1h-6zm20 0h5v1h-5zm20 0h6v1h-6zm17 0h2v1h-2zm5 0h3v1h-3zm9 0h2v1h-2zm19 0h3v1h-3zm-118 1h1v1h-1zm9 0h5v1h-5zm21 0h1v1h-1zm40 0h1v1h-1zm17 0h4v1h-4zm13 0h1v1h-1zm12 0h1v2h-1zm6 0h1v1h-1zm2 0h1v1h-1zm-132 1h1v1h-1zm5 0h1v1h-1zm6 0h1v1h-1zm13 0h1v1h-1zm89 0h1v1h-1zm6 0h1v1h-1zm-124 1h1v1h-1zm11 0h1v1h-1zm4 0h1v1h-1zm104 0h2v1h-2zm4 0h1v1h-1zm7 0h1v1h-1zm-133 1h1v1h-1zm7 0h1v1h-1zm8 0h3v1h-3zm109 0h2v1h-2zm13 0h1v1h-1zm4 0h1v1h-1zm-135 1h1v1h-1zm128 0h1v1h-1zm2 0h1v1h-1zm8 0h1v1h-1zm-139 1h1v1h-1zm137 0h1v1h-1zm-144 1h2v1h-2zm145 0h1v1h-1zm-138 7h1v1h-1zm10 0h3v1h-3zm35 0h1v1h-1zm20 0h2v1h-2zm20 0h1v1h-1zm33 0h3v1h-3zm12 0h1v1h-1zm-131 1h1v1h-1zm2 0h1v1h-1zm8 0h1v1h-1zm4 0h2v1h-2zm12 0h4v1h-4zm18 0h6v1h-6zm19 0h7v1h-7zm21 0h5v1h-5zm19 0h4v1h-4zm15 0h1v1h-1zm4 0h1v1h-1zm8 0h1v1h-1zm2 0h1v1h-1zm-137 1h1v1h-1zm8 0h1v1h-1zm12 0h2v1h-2zm10 0h2v1h-2zm5 0h2v1h-2zm12 0h3v1h-3zm7 0h3v1h-3zm13 0h2v1h-2zm7 0h3v1h-3zm13 0h2v1h-2zm7 0h2v1h-2zm12 0h2v1h-2zm5 0h2v1h-2zm10 0h2v1h-2zm7 0h1v2h-1zm6 0h1v1h-1zm4 0h1v1h-1zm5 0h2v1h-2zm-139 1h1v1h-1zm5 0h1v2h-1zm5 0h1v1h-1zm7 0h2v1h-2zm8 0h1v1h-1zm7 0h3v1h-3zm10 0h2v1h-2zm9 0h3v1h-3zm10 0h3v1h-3zm11 0h2v1h-2zm9 0h3v1h-3zm10 0h2v1h-2zm9 0h3v1h-3zm9 0h1v1h-1zm8 0h1v1h-1zm12 0h1v2h-1zm9 0h1v1h-1zm-141 1h1v1h-1zm21 0h1v1h-1zm6 0h1v1h-1zm9 0h3v1h-3zm8 0h2v1h-2zm11 0h3v1h-3zm8 0h3v1h-3zm13 0h2v1h-2zm7 0h3v1h-3zm12 0h2v1h-2zm7 0h3v1h-3zm11 0h1v1h-1zm6 0h1v1h-1zm9 0h1v3h-1zm-116 1h1v2h-1zm9 0h2v1h-2zm5 0h2v1h-2zm11 0h9v1h-9zm19 0h9v1h-9zm20 0h9v1h-9zm20 0h8v1h-8zm17 0h2v1h-2zm5 0h2v1h-2zm20 0h1v3h-1zm6 0h1v1h-1zm-135 1h1v1h-1zm13 0h5v2h-5zm16 0h7v1h-7zm19 0h7v1h-7zm20 0h7v1h-7zm19 0h7v1h-7zm18 0h5v2h-5zm17 0h1v1h-1zm-122 1h3v2h-3zm30 0h5v1h-5zm19 0h5v1h-5zm20 0h6v1h-6zm19 0h5v1h-5zm32 0h3v3h-3zm11 0h1v1h-1zm-139 1h2v3h-2zm22 0h3v1h-3zm17 0h4v1h-4zm58 0h4v1h-4zm17 0h4v1h-4zm24 0h2v2h-2zm-129 1h2v1h-2zm129 1h1v1h-1zm-125 43h1v1h-1zm7 0h2v1h-2zm11 0h2v1h-2zm14 0h2v1h-2zm15 0h3v1h-3zm17 0h2v1h-2zm15 0h3v1h-3zm14 0h2v1h-2zm12 0h1v1h-1zm8 0h1v1h-1zm-113 1h2v1h-2zm7 0h3v1h-3zm10 0h5v1h-5zm14 0h5v1h-5zm15 0h5v1h-5zm16 0h6v1h-6zm16 0h4v1h-4zm14 0h4v1h-4zm12 0h2v1h-2zm8 0h1v1h-1zm-114 1h1v1h-1zm3 0h2v1h-2zm6 0h4v1h-4zm10 0h6v1h-6zm13 0h7v1h-7zm15 0h8v1h-8zm16 0h8v1h-8zm15 0h8v1h-8zm14 0h7v1h-7zm12 0h5v1h-5zm9 0h2v1h-2zm-110 1h3v1h-3zm5 0h7v1h-7zm10 0h9v1h-9zm13 0h10v1h-10zm14 0h12v1h-12zm16 0h11v1h-11zm16 0h10v1h-10zm14 0h9v1h-9zm12 0h6v1h-6zm8 0h5v1h-5zm6 0h1v1h-1zm-114 1h13v1h-13zm14 0h57v1h-57zm58 0h13v1h-13zm14 0h28v1h-28zm-87 1h3v1h-3zm4 0h6v1h-6zm7 0h9v1h-9zm11 0h11v1h-11zm13 0h13v1h-13zm15 0h13v1h-13zm16 0h12v1h-12zm14 0h11v1h-11zm14 0h8v1h-8zm10 0h6v1h-6zm7 0h3v2h-3zm-110 1h2v1h-2zm4 0h4v1h-4zm7 0h7v1h-7zm12 0h8v1h-8zm13 0h9v1h-9zm15 0h10v1h-10zm15 0h10v1h-10zm15 0h8v1h-8zm12 0h7v1h-7zm10 0h5v1h-5zm-102 1h1v2h-1zm4 0h3v1h-3zm8 0h4v1h-4zm11 0h6v1h-6zm14 0h6v1h-6zm15 0h6v1h-6zm15 0h6v1h-6zm14 0h5v1h-5zm12 0h5v1h-5zm10 0h3v1h-3zm6 0h2v1h-2zm-104 1h1v1h-1zm8 0h2v1h-2zm12 0h2v1h-2zm13 0h3v1h-3zm15 0h3v1h-3zm15 0h3v1h-3zm14 0h3v1h-3zm12 0h2v1h-2zm9 0h2v1h-2zm6 0h1v1h-1zm-54 19h2v1h-2zm4 6h2v1h-2zm36 1h2v1h-2zm-80 2h2v1h-2zm4 0h2v1h-2zm-2 1h2v1h-2zm54 0h2v1h-2zm-8 2h2v1h-2zm-18 1h2v1h-2zm-16 1h2v1h-2zm24 0h2v1h-2zm24 1h2v1h-2zm-38 3h2v1h-2zm4 6h2v1h-2zm-16 1h2v1h-2zm8 0h2v1h-2zm38 0h2v1h-2zm-42 1h2v1h-2zm20 0h2v1h-2zm22 1h2v1h-2zm-49 10h62v2h-62zm1 2h61v1h-61z"/>
<path fill="url(#p20)" d="M0 0m101 112h5v1h-5zm20 0h5v1h-5zm-39 1h6v1h-6zm17 0h9v1h-9zm20 0h9v1h-9zm20 0h7v1h-7zm19 0h1v1h-1zm-93 1h5v1h-5zm15 0h9v1h-9zm18 0h12v1h-12zm20 0h11v1h-11zm20 0h9v1h-9zm19 0h5v1h-5zm-105 1h3v1h-3zm13 0h6v1h-6zm14 0h11v1h-11zm18 0h4v1h-4zm9 0h5v1h-5zm11 0h4v1h-4zm9 0h4v1h-4zm11 0h11v1h-11zm19 0h7v1h-7zm16 0h3v1h-3zm-128 1h2v3h-2zm8 0h4v2h-4zm12 0h8v1h-8zm14 0h4v1h-4zm10 0h3v1h-3zm8 0h4v1h-4zm12 0h4v1h-4zm8 0h4v1h-4zm11 0h4v1h-4zm9 0h4v1h-4zm9 0h4v1h-4zm10 0h3v1h-3zm5 0h3v1h-3zm11 0h4v2h-4zm11 0h1v1h-1zm-119 1h2v2h-2zm7 0h3v1h-3zm7 0h4v1h-4zm12 0h3v1h-3zm6 0h4v1h-4zm14 0h4v1h-4zm6 0h4v1h-4zm14 0h3v1h-3zm6 0h3v1h-3zm12 0h3v1h-3zm7 0h3v1h-3zm8 0h2v2h-2zm19 0h3v2h-3zm-130 1h1v4h-1zm4 0h1v1h-1zm16 0h3v1h-3zm6 0h2v1h-2zm13 0h3v1h-3zm4 0h3v1h-3zm16 0h7v1h-7zm20 0h7v1h-7zm18 0h3v1h-3zm5 0h3v1h-3zm18 0h1v1h-1zm4 0h1v3h-1zm-119 1h1v2h-1zm7 0h1v1h-1zm9 0h3v1h-3zm4 0h2v1h-2zm15 0h5v1h-5zm21 0h4v1h-4zm20 0h4v1h-4zm17 0h6v1h-6zm14 0h2v1h-2zm7 0h1v2h-1zm11 0h1v1h-1zm2 0h1v1h-1zm-121 1h2v1h-2zm11 0h4v1h-4zm77 0h3v1h-3zm14 0h1v1h-1zm-118 1h1v2h-1zm10 0h2v1h-2zm5 0h2v1h-2zm103 0h2v1h-2zm5 0h2v1h-2zm-126 1h1v2h-1zm7 0h1v2h-1zm7 0h2v1h-2zm3 0h2v1h-2zm105 0h2v1h-2zm3 0h2v1h-2zm8 0h1v1h-1zm4 0h1v2h-1zm4 0h1v2h-1zm3 0h1v3h-1zm-129 1h3v1h-3zm109 0h2v1h-2zm10 0h1v2h-1zm-130 1h1v1h-1zm2 0h1v1h-1zm130 0h1v1h-1zm-138 1h1v1h-1zm6 0h2v1h-2zm131 0h1v1h-1zm7 0h1v1h-1zm-144 1h2v1h-2zm145 0h1v1h-1zm-138 9h1v1h-1zm10 0h3v1h-3zm108 0h3v1h-3zm12 0h1v1h-1zm-131 1h1v1h-1zm2 0h1v1h-1zm8 0h2v1h-2zm4 0h1v1h-1zm13 0h3v1h-3zm18 0h4v1h-4zm19 0h5v1h-5zm20 0h5v1h-5zm19 0h3v1h-3zm15 0h2v1h-2zm3 0h2v1h-2zm9 0h1v1h-1zm2 0h1v1h-1zm-138 1h2v1h-2zm9 0h1v2h-1zm7 0h1v1h-1zm5 0h1v1h-1zm10 0h3v1h-3zm4 0h2v1h-2zm14 0h7v1h-7zm20 0h3v1h-3zm4 0h4v1h-4zm16 0h7v1h-7zm19 0h6v1h-6zm15 0h2v1h-2zm5 0h1v1h-1zm7 0h1v2h-1zm4 0h1v2h-1zm5 0h2v1h-2zm-144 1h1v1h-1zm5 0h1v3h-1zm10 0h1v3h-1zm6 0h2v1h-2zm9 0h3v1h-3zm5 0h3v1h-3zm13 0h4v1h-4zm6 0h3v1h-3zm14 0h4v1h-4zm6 0h4v1h-4zm14 0h4v1h-4zm6 0h3v1h-3zm13 0h3v1h-3zm4 0h4v1h-4zm11 0h2v1h-2zm7 0h1v3h-1zm14 0h1v3h-1zm-141 1h1v2h-1zm8 0h1v4h-1zm12 0h1v1h-1zm8 0h2v1h-2zm6 0h3v1h-3zm12 0h3v1h-3zm6 0h4v1h-4zm13 0h4v1h-4zm8 0h3v1h-3zm12 0h4v1h-4zm7 0h4v1h-4zm12 0h3v1h-3zm6 0h3v1h-3zm10 0h1v1h-1zm12 0h1v5h-1zm-112 1h2v2h-2zm7 0h3v2h-3zm7 0h4v1h-4zm11 0h3v1h-3zm8 0h4v1h-4zm11 0h4v1h-4zm9 0h4v1h-4zm11 0h4v2h-4zm9 0h3v1h-3zm10 0h4v1h-4zm8 0h3v2h-3zm8 0h2v3h-2zm25 0h1v4h-1zm-132 1h2v1h-2zm23 0h4v1h-4zm9 0h4v2h-4zm10 0h4v1h-4zm9 0h5v1h-5zm11 0h4v1h-4zm19 0h4v1h-4zm9 0h4v2h-4zm26 0h1v3h-1zm-116 1h1v2h-1zm9 0h2v1h-2zm5 0h3v1h-3zm9 0h5v1h-5zm19 0h13v1h-13zm20 0h13v1h-13zm20 0h4v1h-4zm18 0h3v1h-3zm26 0h1v3h-1zm-130 1h2v1h-2zm13 0h8v1h-8zm15 0h11v2h-11zm19 0h12v1h-12zm20 0h12v1h-12zm19 0h11v1h-11zm18 0h8v2h-8zm-103 1h4v4h-4zm12 0h7v2h-7zm34 0h11v1h-11zm20 0h11v1h-11zm20 0h10v1h-10zm33 0h4v3h-4zm12 0h1v1h-1zm-139 1h2v6h-2zm36 0h9v2h-9zm19 0h10v1h-10zm20 0h10v1h-10zm19 0h9v1h-9zm18 0h7v2h-7zm25 0h3v3h-3zm-116 1h6v1h-6zm34 0h9v1h-9zm21 0h8v1h-8zm19 0h8v1h-8zm-74 1h5v2h-5zm16 0h7v1h-7zm19 0h7v1h-7zm20 0h7v1h-7zm19 0h7v1h-7zm18 0h5v2h-5zm15 0h3v3h-3zm-120 1h3v2h-3zm30 0h5v1h-5zm19 0h5v1h-5zm20 0h5v1h-5zm19 0h5v1h-5zm42 0h2v2h-2zm-116 1h3v1h-3zm92 0h3v1h-3zm24 1h1v1h-1zm-126 34h1v1h-1zm6 0h2v1h-2zm12 0h2v1h-2zm14 0h3v1h-3zm16 0h3v1h-3zm16 0h4v1h-4zm16 0h4v1h-4zm15 0h3v1h-3zm12 0h2v1h-2zm8 0h1v1h-1zm-116 1h3v1h-3zm7 0h4v1h-4zm10 0h7v1h-7zm14 0h7v1h-7zm15 0h9v1h-9zm17 0h8v1h-8zm16 0h8v1h-8zm15 0h6v1h-6zm12 0h5v1h-5zm9 0h3v1h-3zm-115 1h4v1h-4zm6 0h7v1h-7zm10 0h10v1h-10zm13 0h12v1h-12zm15 0h13v1h-13zm17 0h13v1h-13zm16 0h11v1h-11zm14 0h11v1h-11zm13 0h8v1h-8zm9 0h5v1h-5zm6 0h1v1h-1zm-120 1h3v1h-3zm4 0h6v1h-6zm8 0h9v1h-9zm11 0h12v1h-12zm14 0h13v1h-13zm16 0h14v1h-14zm16 0h13v1h-13zm16 0h11v1h-11zm13 0h10v1h-10zm11 0h7v1h-7zm8 0h3v1h-3zm-116 1h2v1h-2zm4 0h5v1h-5zm8 0h7v1h-7zm12 0h9v1h-9zm14 0h10v1h-10zm15 0h11v1h-11zm17 0h10v1h-10zm14 0h10v1h-10zm14 0h8v1h-8zm10 0h6v1h-6zm7 0h4v1h-4zm-114 1h2v2h-2zm4 0h4v1h-4zm8 0h6v1h-6zm12 0h7v1h-7zm14 0h8v1h-8zm16 0h8v1h-8zm16 0h7v1h-7zm15 0h6v1h-6zm13 0h5v1h-5zm10 0h4v1h-4zm6 0h3v1h-3zm-109 1h2v1h-2zm9 0h3v1h-3zm12 0h4v1h-4zm14 0h4v1h-4zm16 0h4v1h-4zm15 0h5v1h-5zm15 0h4v1h-4zm13 0h3v1h-3zm9 0h2v1h-2zm7 0h1v1h-1zm-114 1h1v1h-1zm14 0h1v1h-1zm58 0h1v1h-1zm14 0h1v1h-1zm3 24h2v1h-2zm-68 12h2v1h-2zm52 0h2v1h-2zm8 13h2v1h-2zm-54 14h60v2h-60zm1 2h59v1h-59zm0 1h58v1h-58zm1 1h57v1h-57z"/>
<path fill="url(#p21)" d="M0 0m82 111h5v1h-5zm18 0h8v1h-8zm20 0h8v1h-8zm20 0h5v1h-5zm-74 1h4v1h-4zm14 0h9v1h-9zm18 0h3v1h-3zm8 0h4v1h-4zm12 0h3v1h-3zm8 0h3v1h-3zm12 0h9v1h-9zm19 0h5v1h-5zm-104 1h2v1h-2zm12 0h6v1h-6zm14 0h3v1h-3zm9 0h2v1h-2zm9 0h2v1h-2zm11 0h2v1h-2zm9 0h2v1h-2zm11 0h2v1h-2zm9 0h2v1h-2zm9 0h2v1h-2zm10 0h2v1h-2zm3 0h4v1h-4zm13 0h2v1h-2zm-120 1h4v1h-4zm12 0h1v1h-1zm6 0h2v1h-2zm8 0h2v1h-2zm11 0h2v1h-2zm7 0h2v1h-2zm14 0h1v1h-1zm6 0h2v1h-2zm13 0h2v1h-2zm7 0h2v1h-2zm11 0h2v1h-2zm8 0h2v1h-2zm7 0h1v1h-1zm9 0h4v1h-4zm-127 1h2v1h-2zm11 0h1v1h-1zm8 0h2v1h-2zm8 0h2v1h-2zm7 0h1v1h-1zm12 0h2v1h-2zm5 0h2v1h-2zm16 0h1v1h-1zm4 0h2v1h-2zm15 0h2v1h-2zm5 0h2v1h-2zm13 0h1v1h-1zm6 0h2v1h-2zm9 0h1v2h-1zm8 0h1v1h-1zm10 0h3v1h-3zm-130 1h1v2h-1zm12 0h1v1h-1zm9 0h1v1h-1zm5 0h1v1h-1zm14 0h2v1h-2zm4 0h1v1h-1zm17 0h1v1h-1zm3 0h1v1h-1zm16 0h2v1h-2zm4 0h1v1h-1zm14 0h1v1h-1zm4 0h2v1h-2zm17 0h1v3h-1zm5 0h1v2h-1zm6 0h1v1h-1zm2 0h1v1h-1zm-127 1h1v2h-1zm17 0h1v1h-1zm3 0h1v2h-1zm16 0h3v1h-3zm21 0h2v1h-2zm19 0h3v1h-3zm18 0h1v1h-1zm2 0h2v1h-2zm12 0h1v2h-1zm-102 1h1v2h-1zm12 0h1v1h-1zm19 0h1v1h-1zm58 0h2v1h-2zm-105 1h1v2h-1zm29 0h1v1h-1zm-32 1h1v2h-1zm14 0h1v1h-1zm4 0h1v1h-1zm104 0h1v1h-1zm4 0h1v1h-1zm7 0h1v2h-1zm8 0h1v2h-1zm3 0h1v2h-1zm-137 1h1v1h-1zm116 0h1v1h-1zm14 0h1v1h-1zm-13 1h1v1h-1zm-118 1h1v1h-1zm-1 1h1v1h-1zm130 0h1v1h-1zm7 0h1v1h-1zm-143 1h1v1h-1zm144 0h1v1h-1zm-138 11h1v1h-1zm12 0h1v1h-1zm107 0h1v1h-1zm11 0h1v1h-1zm-131 1h1v1h-1zm2 0h1v1h-1zm12 0h1v1h-1zm14 0h1v1h-1zm38 0h1v1h-1zm64 0h1v1h-1zm-135 1h1v1h-1zm15 0h1v1h-1zm17 0h2v1h-2zm19 0h2v1h-2zm20 0h2v1h-2zm20 0h2v1h-2zm18 0h1v1h-1zm14 0h1v1h-1zm4 0h1v1h-1zm16 0h1v1h-1zm-135 1h1v1h-1zm12 0h1v3h-1zm11 0h2v1h-2zm3 0h1v2h-1zm16 0h1v1h-1zm2 0h1v1h-1zm18 0h1v1h-1zm2 0h2v1h-2zm18 0h1v1h-1zm2 0h1v1h-1zm16 0h1v2h-1zm2 0h1v1h-1zm12 0h1v4h-1zm12 0h1v1h-1zm4 0h1v2h-1zm-107 1h1v2h-1zm18 0h2v1h-2zm3 0h2v1h-2zm17 0h2v1h-2zm4 0h1v1h-1zm16 0h2v1h-2zm3 0h2v1h-2zm18 0h2v1h-2zm-109 1h1v3h-1zm3 0h1v4h-1zm31 0h1v2h-1zm14 0h1v2h-1zm4 0h2v2h-2zm16 0h1v1h-1zm4 0h2v1h-2zm16 0h1v1h-1zm4 0h1v1h-1zm14 0h1v2h-1zm4 0h1v1h-1zm17 0h1v5h-1zm14 0h1v3h-1zm-128 1h1v4h-1zm7 0h1v4h-1zm9 0h1v2h-1zm38 0h2v1h-2zm6 0h1v1h-1zm14 0h2v1h-2zm5 0h2v1h-2zm18 0h2v1h-2zm-76 1h2v1h-2zm13 0h2v1h-2zm6 0h2v2h-2zm14 0h1v1h-1zm6 0h2v1h-2zm14 0h1v1h-1zm6 0h1v1h-1zm12 0h2v1h-2zm6 0h1v2h-1zm9 0h1v4h-1zm-112 1h1v4h-1zm20 0h2v2h-2zm7 0h1v1h-1zm12 0h1v1h-1zm19 0h2v2h-2zm8 0h1v1h-1zm12 0h2v2h-2zm7 0h2v2h-2zm12 0h1v1h-1zm27 0h1v5h-1zm12 0h1v4h-1zm-109 1h2v2h-2zm11 0h2v2h-2zm8 0h2v2h-2zm20 0h2v1h-2zm30 0h2v2h-2zm7 0h2v1h-2zm-91 1h2v1h-2zm8 0h1v1h-1zm37 0h2v1h-2zm9 0h3v1h-3zm11 0h2v1h-2zm9 0h2v2h-2zm18 0h1v1h-1zm-91 1h1v2h-1zm6 0h2v2h-2zm9 0h2v1h-2zm9 0h2v1h-2zm9 0h3v1h-3zm10 0h3v1h-3zm11 0h2v1h-2zm9 0h3v1h-3zm19 0h2v1h-2zm9 0h2v2h-2zm7 0h2v1h-2zm9 0h1v3h-1zm-116 1h1v2h-1zm24 0h3v1h-3zm8 0h3v1h-3zm11 0h3v1h-3zm8 0h4v1h-4zm12 0h3v1h-3zm8 0h4v1h-4zm11 0h3v1h-3zm8 0h3v1h-3zm17 0h1v1h-1zm19 0h1v3h-1zm-117 1h2v1h-2zm5 0h2v1h-2zm11 0h9v1h-9zm19 0h9v1h-9zm20 0h9v1h-9zm19 0h9v1h-9zm18 0h2v1h-2zm5 0h2v1h-2zm-109 1h4v1h-4zm13 0h5v1h-5zm16 0h7v1h-7zm20 0h6v1h-6zm20 0h6v1h-6zm19 0h6v1h-6zm17 0h5v1h-5zm14 0h4v1h-4zm12 0h1v1h-1zm-139 1h2v2h-2zm8 0h3v1h-3zm14 0h3v1h-3zm92 0h3v1h-3zm14 0h3v1h-3zm9 0h3v1h-3zm1 1h2v1h-2zm-128 29h1v1h-1zm7 0h2v1h-2zm12 0h2v1h-2zm14 0h3v1h-3zm16 0h4v1h-4zm18 0h3v1h-3zm16 0h3v1h-3zm15 0h3v1h-3zm12 0h2v1h-2zm9 0h1v1h-1zm-122 1h1v1h-1zm3 0h2v1h-2zm6 0h5v1h-5zm11 0h7v1h-7zm14 0h8v1h-8zm16 0h9v1h-9zm17 0h9v1h-9zm17 0h7v1h-7zm15 0h6v1h-6zm12 0h5v1h-5zm9 0h3v1h-3zm-119 1h1v1h-1zm2 0h4v1h-4zm5 0h8v1h-8zm10 0h11v1h-11zm14 0h12v1h-12zm16 0h13v1h-13zm17 0h13v1h-13zm16 0h12v1h-12zm15 0h11v1h-11zm13 0h8v1h-8zm10 0h5v1h-5zm6 0h1v1h-1zm-124 1h4v1h-4zm5 0h5v1h-5zm7 0h10v1h-10zm12 0h12v1h-12zm15 0h13v1h-13zm16 0h13v1h-13zm17 0h12v1h-12zm16 0h11v1h-11zm14 0h9v1h-9zm11 0h6v1h-6zm7 0h4v1h-4zm-119 1h2v1h-2zm5 0h4v1h-4zm8 0h6v1h-6zm13 0h7v1h-7zm14 0h8v1h-8zm17 0h8v1h-8zm16 0h8v1h-8zm16 0h7v1h-7zm13 0h6v1h-6zm11 0h4v1h-4zm7 0h2v1h-2zm-119 1h1v1h-1zm5 0h2v1h-2zm9 0h3v1h-3zm13 0h3v1h-3zm15 0h3v1h-3zm16 0h4v1h-4zm17 0h3v1h-3zm14 0h3v1h-3zm14 0h2v1h-2zm10 0h1v1h-1zm6 0h1v1h-1zm-61 34h2v1h-2zm-2 8h2v1h-2zm-24 31h57v1h-57zm0 1h56v1h-56zm1 1h55v1h-55z"/>
<path fill="url(#p22)" d="M0 0m100 109h8v1h-8zm20 0h7v1h-7zm21 0h1v1h-1zm-74 1h3v1h-3zm13 0h10v1h-10zm18 0h12v1h-12zm20 0h12v1h-12zm19 0h10v1h-10zm20 0h4v1h-4zm-93 1h8v1h-8zm15 0h3v1h-3zm8 0h4v1h-4zm10 0h3v1h-3zm11 0h3v1h-3zm9 0h3v1h-3zm11 0h3v1h-3zm9 0h3v1h-3zm8 0h3v1h-3zm10 0h8v1h-8zm17 0h1v1h-1zm-120 1h4v1h-4zm12 0h2v1h-2zm6 0h3v1h-3zm8 0h2v1h-2zm11 0h2v1h-2zm7 0h2v1h-2zm14 0h1v1h-1zm6 0h2v1h-2zm13 0h2v1h-2zm7 0h2v1h-2zm11 0h2v1h-2zm7 0h3v1h-3zm8 0h2v1h-2zm9 0h4v1h-4zm-127 1h2v2h-2zm8 0h1v1h-1zm3 0h1v1h-1zm8 0h2v1h-2zm8 0h2v1h-2zm7 0h1v1h-1zm12 0h2v1h-2zm5 0h2v1h-2zm15 0h2v1h-2zm5 0h2v1h-2zm15 0h2v1h-2zm5 0h2v1h-2zm13 0h2v1h-2zm6 0h2v1h-2zm9 0h1v2h-1zm8 0h1v1h-1zm3 0h2v1h-2zm7 0h3v2h-3zm-130 1h1v2h-1zm5 0h1v3h-1zm7 0h1v1h-1zm9 0h2v1h-2zm5 0h1v1h-1zm14 0h2v1h-2zm4 0h1v1h-1zm16 0h2v1h-2zm4 0h1v1h-1zm16 0h2v1h-2zm4 0h1v1h-1zm14 0h1v1h-1zm4 0h2v1h-2zm17 0h1v2h-1zm5 0h1v2h-1zm-113 1h1v3h-1zm11 0h1v1h-1zm3 0h2v1h-2zm16 0h1v1h-1zm2 0h1v1h-1zm18 0h3v1h-3zm20 0h1v1h-1zm2 0h1v1h-1zm15 0h2v1h-2zm3 0h2v1h-2zm12 0h1v2h-1zm-118 1h1v3h-1zm27 0h2v1h-2zm3 0h1v1h-1zm17 0h2v1h-2zm20 0h2v1h-2zm20 0h2v1h-2zm17 0h1v1h-1zm2 0h1v1h-1zm-109 1h1v3h-1zm31 0h2v1h-2zm77 0h1v1h-1zm25 0h1v3h-1zm8 0h1v3h-1zm3 0h1v3h-1zm-137 1h1v3h-1zm7 0h1v2h-1zm18 0h1v1h-1zm90 0h1v2h-1zm4 0h1v2h-1zm11 0h1v3h-1zm-119 1h1v1h-1zm105 1h1v1h-1zm-108 1h1v1h-1zm2 0h1v1h-1zm107 0h2v1h-2zm-118 1h1v1h-1zm10 0h1v1h-1zm118 0h1v1h-1zm-130 1h1v1h-1zm131 0h2v1h-2zm-137 1h2v1h-2zm18 12h1v1h-1zm-11 1h1v1h-1zm10 0h1v1h-1zm2 0h1v1h-1zm106 0h1v1h-1zm2 0h1v1h-1zm11 0h1v1h-1zm-132 1h1v1h-1zm2 0h1v1h-1zm12 0h1v2h-1zm116 0h1v1h-1zm9 0h1v1h-1zm-145 1h1v1h-1zm16 0h1v4h-1zm18 0h1v1h-1zm18 0h1v2h-1zm20 0h1v1h-1zm20 0h1v2h-1zm18 0h1v2h-1zm14 0h1v2h-1zm4 0h1v4h-1zm-119 1h1v5h-1zm24 0h2v1h-2zm39 0h2v1h-2zm63 0h1v6h-1zm-102 1h1v1h-1zm2 0h1v3h-1zm16 0h3v1h-3zm20 0h3v1h-3zm20 0h3v1h-3zm18 0h1v3h-1zm2 0h1v2h-1zm28 0h1v5h-1zm-118 1h1v5h-1zm11 0h2v1h-2zm19 0h1v2h-1zm2 0h1v1h-1zm18 0h1v1h-1zm2 0h2v1h-2zm18 0h1v1h-1zm2 0h1v1h-1zm-61 1h1v3h-1zm21 0h2v1h-2zm17 0h2v2h-2zm4 0h1v1h-1zm16 0h2v2h-2zm3 0h2v1h-2zm18 0h2v1h-2zm12 0h1v5h-1zm-121 1h1v7h-1zm34 0h1v3h-1zm14 0h2v1h-2zm4 0h1v1h-1zm20 0h2v2h-2zm20 0h1v2h-1zm14 0h2v1h-2zm4 0h1v2h-1zm31 0h1v6h-1zm-138 1h1v6h-1zm45 0h1v2h-1zm4 0h2v2h-2zm16 0h1v1h-1zm20 0h1v1h-1zm18 0h1v2h-1zm-93 1h1v5h-1zm16 0h2v1h-2zm38 0h2v2h-2zm6 0h1v1h-1zm14 0h2v2h-2zm5 0h2v2h-2zm18 0h2v2h-2zm17 0h1v5h-1zm-107 1h1v3h-1zm9 0h1v2h-1zm5 0h2v2h-2zm13 0h2v2h-2zm6 0h1v1h-1zm20 0h2v2h-2zm32 0h2v2h-2zm-97 1h1v4h-1zm45 0h2v1h-2zm14 0h1v1h-1zm20 0h1v1h-1zm6 0h1v1h-1zm18 0h1v1h-1zm9 0h2v1h-2zm24 0h1v5h-1zm-116 1h2v1h-2zm7 0h2v1h-2zm11 0h2v1h-2zm7 0h3v1h-3zm12 0h3v1h-3zm9 0h2v1h-2zm11 0h3v1h-3zm8 0h2v1h-2zm11 0h2v1h-2zm7 0h2v1h-2zm9 0h1v1h-1zm12 0h1v3h-1zm-112 1h2v1h-2zm7 0h3v1h-3zm8 0h3v1h-3zm10 0h3v1h-3zm9 0h4v1h-4zm10 0h3v1h-3zm10 0h4v1h-4zm10 0h3v1h-3zm10 0h3v1h-3zm9 0h3v1h-3zm8 0h3v1h-3zm8 0h2v1h-2zm-107 1h1v1h-1zm8 0h3v1h-3zm6 0h3v1h-3zm10 0h11v1h-11zm19 0h12v1h-12zm20 0h12v1h-12zm19 0h11v1h-11zm18 0h3v1h-3zm6 0h3v1h-3zm10 0h1v1h-1zm-120 1h5v1h-5zm13 0h7v1h-7zm16 0h9v1h-9zm19 0h9v1h-9zm20 0h9v1h-9zm19 0h9v1h-9zm18 0h7v1h-7zm15 0h5v1h-5zm10 0h1v1h-1zm-137 1h2v2h-2zm8 0h4v1h-4zm13 0h5v1h-5zm92 0h5v1h-5zm14 0h4v1h-4zm10 0h3v1h-3zm-128 1h2v1h-2zm120 0h1v1h-1zm9 0h2v1h-2zm0 23h1v1h-1zm-130 1h1v1h-1zm8 0h1v1h-1zm12 0h2v1h-2zm15 0h2v1h-2zm16 0h3v1h-3zm18 0h3v1h-3zm17 0h3v1h-3zm15 0h3v1h-3zm13 0h1v1h-1zm8 0h1v1h-1zm-122 1h3v1h-3zm7 0h5v1h-5zm11 0h7v1h-7zm14 0h8v1h-8zm17 0h8v1h-8zm17 0h9v1h-9zm17 0h8v1h-8zm16 0h7v1h-7zm13 0h5v1h-5zm9 0h3v1h-3zm-123 1h1v1h-1zm2 0h4v1h-4zm6 0h8v1h-8zm10 0h11v1h-11zm14 0h13v1h-13zm16 0h14v1h-14zm17 0h15v1h-15zm18 0h12v1h-12zm15 0h11v1h-11zm14 0h8v1h-8zm9 0h5v1h-5zm6 0h1v1h-1zm-126 1h3v1h-3zm4 0h6v1h-6zm8 0h10v1h-10zm12 0h12v1h-12zm15 0h13v1h-13zm17 0h14v1h-14zm17 0h13v1h-13zm16 0h12v1h-12zm15 0h9v1h-9zm11 0h7v1h-7zm8 0h4v1h-4zm-122 1h2v1h-2zm4 0h4v1h-4zm9 0h6v1h-6zm13 0h7v1h-7zm15 0h8v1h-8zm17 0h8v1h-8zm17 0h8v1h-8zm15 0h8v1h-8zm14 0h6v1h-6zm11 0h4v1h-4zm7 0h3v1h-3zm-121 1h1v1h-1zm5 0h1v1h-1zm9 0h2v1h-2zm13 0h3v1h-3zm15 0h4v1h-4zm17 0h4v1h-4zm17 0h3v1h-3zm15 0h3v1h-3zm14 0h2v1h-2zm10 0h2v1h-2zm7 0h1v1h-1zm-73 48h2v1h-2zm40 2h2v1h-2zm-55 29h55v1h-55zm0 1h54v1h-54zm1 1h53v1h-53zm0 1h52v2h-52z"/>
<path fill="url(#p23)" d="M0 0m98 106h12v1h-12zm20 0h12v1h-12zm-39 1h11v1h-11zm18 0h14v1h-14zm20 0h13v1h-13zm20 0h11v1h-11zm18 0h1v1h-1zm-92 1h10v2h-10zm15 0h13v1h-13zm18 0h15v1h-15zm20 0h15v1h-15zm20 0h13v1h-13zm18 0h10v1h-10zm-103 1h6v1h-6zm27 0h14v1h-14zm18 0h4v1h-4zm12 0h4v1h-4zm8 0h4v1h-4zm11 0h5v1h-5zm9 0h5v1h-5zm6 0h7v1h-7zm12 0h11v1h-11zm16 0h7v2h-7zm-124 1h1v1h-1zm4 0h7v2h-7zm12 0h5v1h-5zm8 0h4v1h-4zm7 0h3v1h-3zm13 0h2v1h-2zm5 0h3v1h-3zm15 0h2v1h-2zm5 0h3v1h-3zm15 0h2v1h-2zm5 0h2v2h-2zm12 0h3v1h-3zm6 0h4v1h-4zm8 0h4v1h-4zm19 0h3v1h-3zm-137 1h4v2h-4zm19 0h2v2h-2zm10 0h2v1h-2zm5 0h2v1h-2zm14 0h2v2h-2zm4 0h2v1h-2zm16 0h2v2h-2zm4 0h2v1h-2zm16 0h2v2h-2zm17 0h2v1h-2zm5 0h2v1h-2zm10 0h2v1h-2zm7 0h2v1h-2zm3 0h4v1h-4zm7 0h5v2h-5zm-130 1h2v2h-2zm6 0h2v2h-2zm17 0h1v1h-1zm3 0h2v2h-2zm18 0h2v1h-2zm20 0h2v1h-2zm20 0h2v1h-2zm15 0h2v1h-2zm3 0h2v2h-2zm12 0h1v2h-1zm6 0h1v1h-1zm5 0h2v1h-2zm12 0h1v5h-1zm-144 1h1v4h-1zm3 0h1v3h-1zm16 0h1v2h-1zm11 0h2v1h-2zm19 0h3v1h-3zm20 0h3v1h-3zm20 0h3v1h-3zm18 0h1v2h-1zm19 0h2v1h-2zm7 0h1v4h-1zm4 0h1v5h-1zm4 0h1v4h-1zm-134 1h1v4h-1zm7 0h1v4h-1zm17 0h1v1h-1zm2 0h1v1h-1zm17 0h2v1h-2zm20 0h2v1h-2zm20 0h2v1h-2zm19 0h1v1h-1zm12 0h2v1h-2zm5 0h1v4h-1zm-108 1h1v4h-1zm13 0h2v1h-2zm19 0h1v1h-1zm40 0h1v1h-1zm18 0h1v2h-1zm14 0h1v3h-1zm-90 1h1v1h-1zm91 2h1v2h-1zm2 0h1v2h-1zm-110 1h1v2h-1zm2 0h1v2h-1zm-11 1h1v2h-1zm118 0h2v1h-2zm10 0h1v2h-1zm-130 1h1v1h-1zm12 0h1v1h-1zm-18 1h1v1h-1zm6 0h2v1h-2zm131 0h2v1h-2zm7 0h1v2h-1zm-144 1h2v1h-2zm7 0h1v1h-1zm138 1h1v1h-1zm-127 13h1v1h-1zm108 0h1v1h-1zm11 0h1v1h-1zm-130 1h1v1h-1zm10 0h1v3h-1zm2 0h1v2h-1zm106 0h3v1h-3zm12 0h2v1h-2zm-136 1h1v1h-1zm5 0h1v1h-1zm2 0h1v3h-1zm117 0h1v2h-1zm2 0h1v2h-1zm9 0h1v3h-1zm8 0h2v1h-2zm-144 1h2v1h-2zm19 0h2v1h-2zm125 0h1v1h-1zm-144 1h1v2h-1zm20 0h1v6h-1zm14 0h1v2h-1zm76 0h1v3h-1zm14 0h2v1h-2zm-72 1h1v2h-1zm20 0h1v1h-1zm20 0h1v2h-1zm32 0h1v7h-1zm-108 1h1v8h-1zm17 0h2v1h-2zm39 0h2v2h-2zm56 0h1v8h-1zm-95 1h3v1h-3zm19 0h2v1h-2zm40 0h2v1h-2zm18 0h2v1h-2zm-101 1h1v8h-1zm24 0h1v2h-1zm2 0h1v4h-1zm16 0h3v2h-3zm20 0h3v1h-3zm20 0h3v3h-3zm18 0h3v1h-3zm-38 1h4v2h-4zm38 0h1v3h-1zm2 0h1v2h-1zm24 0h1v7h-1zm4 0h1v8h-1zm-119 1h2v1h-2zm12 0h2v3h-2zm19 0h1v2h-1zm2 0h2v3h-2zm-32 1h1v4h-1zm49 0h2v2h-2zm3 0h2v1h-2zm17 0h2v2h-2zm3 0h2v2h-2zm18 0h2v3h-2zm-76 1h2v2h-2zm15 0h2v2h-2zm23 0h3v1h-3zm35 0h2v2h-2zm15 0h2v1h-2zm-91 1h1v1h-1zm22 0h2v1h-2zm15 0h3v1h-3zm5 0h2v1h-2zm15 0h3v1h-3zm5 0h2v2h-2zm29 0h1v2h-1zm20 0h1v5h-1zm-141 1h1v4h-1zm3 0h1v4h-1zm10 0h2v2h-2zm16 0h2v1h-2zm5 0h2v1h-2zm13 0h2v1h-2zm5 0h3v1h-3zm15 0h2v1h-2zm5 0h3v1h-3zm15 0h2v1h-2zm18 0h2v1h-2zm5 0h2v1h-2zm16 0h2v1h-2zm-107 1h2v1h-2zm9 0h3v1h-3zm6 0h3v1h-3zm12 0h3v1h-3zm6 0h4v1h-4zm13 0h4v1h-4zm8 0h3v1h-3zm12 0h4v1h-4zm7 0h3v1h-3zm12 0h3v1h-3zm6 0h3v1h-3zm10 0h2v1h-2zm7 0h1v2h-1zm-120 1h2v1h-2zm6 0h1v1h-1zm6 0h3v1h-3zm8 0h3v1h-3zm7 0h15v1h-15zm19 0h15v2h-15zm20 0h15v1h-15zm20 0h14v1h-14zm17 0h4v1h-4zm9 0h3v1h-3zm13 0h2v1h-2zm12 0h1v5h-1zm-137 1h3v1h-3zm5 0h2v1h-2zm7 0h11v2h-11zm16 0h13v2h-13zm39 0h14v1h-14zm19 0h13v1h-13zm18 0h11v2h-11zm16 0h3v1h-3zm4 0h3v1h-3zm6 0h2v1h-2zm-137 1h4v2h-4zm7 0h7v2h-7zm47 0h2v1h-2zm40 0h12v1h-12zm33 0h7v2h-7zm10 0h5v2h-5zm-137 2h2v1h-2zm24 0h1v10h-1zm17 0h1v5h-1zm19 0h2v8h-2zm20 0h2v11h-2zm19 0h1v4h-1zm17 0h1v8h-1zm25 0h1v1h-1zm-131 1h1v10h-1zm120 0h1v13h-1zm9 1h1v17h-1zm-40 2h2v6h-2zm-58 1h2v3h-2zm-1 3h3v8h-3zm19 0h3v8h-3zm57 0h2v4h-2zm-92 2h2v1h-2zm74 0h3v6h-3zm-88 1h2v5h-2zm13 0h3v5h-3zm56 0h3v4h-3zm36 1h3v4h-3zm14 2h2v2h-2zm-49 1h2v1h-2zm-70 1h1v1h-1zm14 0h1v2h-1zm17 0h1v2h-1zm19 0h1v2h-1zm20 0h1v2h-1zm19 0h1v2h-1zm17 0h1v2h-1zm14 0h1v2h-1zm-120 2h2v1h-2zm12 0h5v1h-5zm16 0h7v1h-7zm18 0h9v1h-9zm20 0h9v1h-9zm20 0h7v1h-7zm18 0h5v1h-5zm15 0h2v1h-2zm-128 1h2v1h-2zm8 0h1v1h-1zm8 0h1v1h-1zm11 0h3v1h-3zm16 0h2v1h-2zm16 0h3v1h-3zm18 0h3v1h-3zm17 0h3v1h-3zm16 0h2v1h-2zm12 0h2v1h-2zm9 0h1v1h-1zm6 0h3v1h-3zm-140 1h8v1h-8zm10 0h3v1h-3zm6 0h7v1h-7zm11 0h9v1h-9zm15 0h10v1h-10zm16 0h11v1h-11zm18 0h11v1h-11zm18 0h9v1h-9zm15 0h9v1h-9zm14 0h6v1h-6zm9 0h4v1h-4zm6 0h3v1h-3zm4 0h3v1h-3zm4 0h1v1h-1zm-138 1h3v1h-3zm4 0h7v1h-7zm8 0h11v1h-11zm13 0h13v1h-13zm15 0h14v1h-14zm17 0h15v1h-15zm18 0h14v1h-14zm17 0h12v1h-12zm15 0h10v1h-10zm11 0h7v1h-7zm8 0h4v1h-4zm-125 1h2v1h-2zm5 0h4v1h-4zm9 0h6v1h-6zm13 0h7v1h-7zm15 0h9v1h-9zm17 0h9v1h-9zm18 0h8v1h-8zm16 0h8v1h-8zm15 0h6v1h-6zm11 0h4v1h-4zm7 0h3v1h-3zm-125 1h1v1h-1zm5 0h2v1h-2zm10 0h2v1h-2zm13 0h3v1h-3zm16 0h3v1h-3zm17 0h3v1h-3zm18 0h3v1h-3zm15 0h3v1h-3zm14 0h3v1h-3zm11 0h1v1h-1zm6 0h1v1h-1zm-87 87h51v1h-51zm0 1h50v2h-50zm1 2h49v1h-49zm0 1h48v1h-48z"/>
<path fill="url(#p24)" d="M0 0m79 103h11v1h-11zm18 0h14v1h-14zm20 0h13v1h-13zm20 0h11v1h-11zm-73 1h9v1h-9zm14 0h14v1h-14zm18 0h16v1h-16zm20 0h16v1h-16zm20 0h13v1h-13zm18 0h10v1h-10zm-100 1h3v1h-3zm8 0h12v2h-12zm15 0h15v1h-15zm18 0h18v1h-18zm20 0h17v1h-17zm20 0h15v2h-15zm18 0h12v2h-12zm17 0h4v1h-4zm-120 1h8v3h-8zm27 0h16v1h-16zm17 0h4v1h-4zm16 0h3v1h-3zm5 0h3v1h-3zm15 0h3v2h-3zm39 0h8v3h-8zm11 0h1v1h-1zm-136 1h3v1h-3zm18 0h13v1h-13zm14 0h3v1h-3zm14 0h3v1h-3zm4 0h3v1h-3zm17 0h2v1h-2zm3 0h3v1h-3zm20 0h3v1h-3zm14 0h3v1h-3zm4 0h3v1h-3zm4 0h10v1h-10zm24 0h5v3h-5zm-137 1h4v2h-4zm18 0h2v2h-2zm12 0h2v2h-2zm3 0h2v2h-2zm15 0h2v1h-2zm3 0h2v1h-2zm17 0h5v1h-5zm20 0h2v1h-2zm3 0h2v1h-2zm15 0h2v2h-2zm3 0h2v2h-2zm12 0h2v1h-2zm-114 1h1v1h-1zm7 0h1v3h-1zm35 0h4v1h-4zm20 0h4v1h-4zm20 0h4v1h-4zm33 0h1v4h-1zm4 0h1v4h-1zm18 0h1v3h-1zm-144 1h3v1h-3zm18 0h1v4h-1zm13 0h1v2h-1zm2 0h1v2h-1zm16 0h3v1h-3zm20 0h3v1h-3zm20 0h3v1h-3zm18 0h1v1h-1zm2 0h1v1h-1zm25 0h1v10h-1zm6 0h2v1h-2zm-90 1h2v1h-2zm20 0h2v1h-2zm20 0h2v1h-2zm17 0h3v1h-3zm-101 1h1v8h-1zm25 0h2v1h-2zm19 0h1v1h-1zm20 0h1v1h-1zm20 0h1v1h-1zm18 0h1v3h-1zm-93 1h1v6h-1zm17 0h1v2h-1zm90 0h2v1h-2zm3 0h1v5h-1zm-108 1h2v1h-2zm106 0h1v4h-1zm-125 1h1v4h-1zm19 0h1v4h-1zm-13 2h1v4h-1zm138 0h1v4h-1zm-18 1h1v2h-1zm12 0h1v2h-1zm-138 1h2v3h-2zm18 0h1v2h-1zm119 1h2v2h-2zm-130 1h1v1h-1zm137 0h2v1h-2zm-143 1h1v1h-1zm144 0h1v2h-1zm-127 16h1v3h-1zm-11 1h1v1h-1zm119 0h1v2h-1zm11 0h2v2h-2zm-131 1h2v1h-2zm139 0h1v1h-1zm-144 1h1v2h-1zm5 0h1v8h-1zm11 0h1v11h-1zm2 0h1v7h-1zm107 0h2v1h-2zm12 0h1v4h-1zm6 0h2v2h-2zm-136 1h1v14h-1zm117 0h1v8h-1zm2 0h1v10h-1zm9 0h1v15h-1zm-136 1h2v3h-2zm144 0h1v9h-1zm-110 2h1v5h-1zm-34 1h1v9h-1zm110 0h1v5h-1zm-58 1h1v3h-1zm-33 1h2v2h-2zm53 0h1v2h-1zm20 0h1v2h-1zm-72 2h1v6h-1zm13 0h2v1h-2zm19 0h2v1h-2zm20 0h2v1h-2zm20 0h2v1h-2zm32 0h2v1h-2zm-91 1h3v1h-3zm18 0h3v2h-3zm20 0h3v1h-3zm20 0h3v2h-3zm18 0h3v1h-3zm15 0h1v5h-1zm-91 1h1v1h-1zm2 0h1v2h-1zm36 0h4v1h-4zm38 0h1v2h-1zm2 0h1v2h-1zm17 0h1v4h-1zm-112 1h1v4h-1zm16 0h2v3h-2zm19 0h1v1h-1zm2 0h2v2h-2zm17 0h5v1h-5zm20 0h5v1h-5zm-55 1h2v2h-2zm15 0h2v2h-2zm20 0h6v1h-6zm20 0h2v1h-2zm3 0h2v1h-2zm15 0h2v2h-2zm3 0h2v2h-2zm-58 1h3v1h-3zm6 0h7v1h-7zm20 0h7v1h-7zm10 0h3v1h-3zm4 0h3v1h-3zm-70 1h7v1h-7zm17 0h8v1h-8zm18 0h9v1h-9zm20 0h9v1h-9zm20 0h8v1h-8zm17 0h7v1h-7zm-111 1h1v1h-1zm6 0h5v1h-5zm13 0h3v8h-3zm4 0h3v8h-3zm12 0h4v8h-4zm5 0h4v5h-4zm14 0h4v8h-4zm6 0h3v1h-3zm14 0h4v11h-4zm6 0h3v1h-3zm13 0h4v10h-4zm5 0h4v4h-4zm13 0h3v9h-3zm4 0h3v6h-3zm11 0h5v1h-5zm10 0h3v2h-3zm-137 1h2v2h-2zm7 0h2v16h-2zm3 0h2v1h-2zm51 0h4v15h-4zm20 0h4v15h-4zm46 0h2v5h-2zm3 0h2v17h-2zm-120 1h3v9h-3zm127 0h1v16h-1zm2 0h1v11h-1zm4 0h1v17h-1zm-143 1h3v8h-3zm100 1h3v12h-3zm-58 1h3v11h-3zm74 1h4v2h-4zm10 0h3v8h-3zm-107 2h4v3h-4zm5 0h4v2h-4zm12 0h3v8h-3zm19 0h3v3h-3zm62 0h3v8h-3zm-6 1h4v3h-4zm-86 1h3v6h-3zm69 0h3v6h-3zm-95 1h4v8h-4zm12 0h2v5h-2zm8 0h3v5h-3zm35 0h4v5h-4zm21 0h3v4h-3zm36 1h3v4h-3zm28 1h2v6h-2zm-13 1h2v2h-2zm-52 1h5v2h-5zm-64 1h3v1h-3zm9 0h4v2h-4zm5 0h4v2h-4zm12 0h4v1h-4zm5 0h4v1h-4zm13 0h5v1h-5zm6 0h5v1h-5zm20 0h5v1h-5zm14 0h4v1h-4zm5 0h4v1h-4zm12 0h4v2h-4zm5 0h4v2h-4zm10 0h3v2h-3zm-119 1h6v1h-6zm28 0h5v1h-5zm6 0h5v1h-5zm12 0h6v1h-6zm7 0h6v1h-6zm13 0h6v1h-6zm7 0h6v1h-6zm13 0h5v1h-5zm6 0h5v1h-5zm-93 1h3v1h-3zm5 0h4v1h-4zm5 0h5v1h-5zm10 0h11v1h-11zm18 0h11v1h-11zm20 0h11v1h-11zm20 0h11v1h-11zm18 0h11v1h-11zm16 0h5v1h-5zm6 0h4v1h-4zm6 0h3v1h-3zm6 0h2v1h-2zm-139 1h3v1h-3zm5 0h3v1h-3zm4 0h2v1h-2zm3 0h2v1h-2zm3 0h4v1h-4zm5 0h3v1h-3zm6 0h4v1h-4zm7 0h4v1h-4zm7 0h6v1h-6zm8 0h5v1h-5zm9 0h5v1h-5zm8 0h6v1h-6zm10 0h5v1h-5zm8 0h6v1h-6zm9 0h5v1h-5zm8 0h5v1h-5zm8 0h5v1h-5zm7 0h4v1h-4zm7 0h3v1h-3zm5 0h3v1h-3zm5 0h2v1h-2zm3 0h2v1h-2zm3 0h2v1h-2zm5 0h4v1h-4zm-135 1h2v1h-2zm5 0h3v1h-3zm10 0h4v1h-4zm13 0h6v1h-6zm16 0h6v1h-6zm17 0h7v1h-7zm18 0h7v1h-7zm16 0h6v1h-6zm15 0h5v1h-5zm11 0h3v1h-3zm7 0h2v1h-2zm9 0h1v1h-1zm-95 95h47v2h-47zm0 2h46v1h-46zm1 1h45v2h-45zm0 2h44v1h-44zm1 1h43v1h-43z"/>
<path fill="url(#p25)" d="M0 0m88 99h2v1h-2zm9 0h13v1h-13zm20 0h13v1h-13zm20 0h3v1h-3zm-68 1h3v1h-3zm9 0h14v1h-14zm18 0h16v1h-16zm20 0h16v1h-16zm20 0h13v1h-13zm18 0h5v1h-5zm-92 1h12v1h-12zm15 0h16v1h-16zm18 0h18v1h-18zm20 0h18v1h-18zm20 0h15v1h-15zm18 0h12v1h-12zm-102 1h7v1h-7zm11 0h13v1h-13zm14 0h17v1h-17zm18 0h19v1h-19zm20 0h19v1h-19zm20 0h17v1h-17zm18 0h13v1h-13zm17 0h8v3h-8zm-123 1h1v1h-1zm4 0h8v2h-8zm11 0h14v1h-14zm15 0h3v1h-3zm14 0h3v1h-3zm4 0h3v1h-3zm17 0h6v1h-6zm19 0h7v1h-7zm18 0h3v1h-3zm4 0h14v1h-14zm28 0h3v1h-3zm-137 1h4v3h-4zm18 0h3v1h-3zm12 0h2v1h-2zm3 0h2v1h-2zm16 0h4v1h-4zm20 0h4v1h-4zm20 0h4v1h-4zm17 0h2v1h-2zm3 0h2v1h-2zm12 0h2v1h-2zm16 0h5v2h-5zm-131 1h5v1h-5zm8 0h2v1h-2zm4 0h1v2h-1zm13 0h1v2h-1zm2 0h1v2h-1zm16 0h3v1h-3zm21 0h2v2h-2zm19 0h3v1h-3zm18 0h1v1h-1zm2 0h1v1h-1zm13 0h1v1h-1zm4 0h1v1h-1zm5 0h4v1h-4zm13 0h1v4h-1zm-138 1h1v6h-1zm9 0h1v7h-1zm35 0h1v3h-1zm40 0h2v1h-2zm17 0h3v1h-3zm15 0h2v1h-2zm3 0h1v7h-1zm9 0h1v4h-1zm4 0h4v1h-4zm-138 1h1v1h-1zm4 0h1v10h-1zm13 0h2v1h-2zm15 0h1v5h-1zm38 0h1v1h-1zm20 0h1v2h-1zm18 0h1v4h-1zm15 0h1v6h-1zm-125 1h1v2h-1zm19 0h1v6h-1zm125 0h1v9h-1zm-6 1h1v8h-1zm-138 1h2v5h-2zm126 4h1v4h-1zm-125 1h1v4h-1zm17 1h1v3h-1zm-11 1h1v4h-1zm130 0h2v1h-2zm8 0h1v4h-1zm-8 1h1v2h-1zm-130 23h1v6h-1zm11 0h1v5h-1zm119 0h1v4h-1zm-11 1h1v8h-1zm19 1h1v9h-1zm-8 2h2v3h-2zm-136 1h1v9h-1zm137 2h1v9h-1zm-132 1h1v8h-1zm13 1h1v6h-1zm106 1h1v5h-1zm-108 1h1v4h-1zm17 0h1v4h-1zm76 0h1v4h-1zm17 0h1v4h-1zm17 0h1v6h-1zm-92 1h1v3h-1zm40 1h1v2h-1zm-92 1h2v3h-2zm58 0h1v1h-1zm8 0h13v1h-13zm20 0h3v1h-3zm-78 1h1v1h-1zm9 0h6v1h-6zm13 0h10v1h-10zm18 0h10v1h-10zm19 0h11v1h-11zm20 0h11v1h-11zm19 0h9v1h-9zm16 0h7v1h-7zm-117 1h5v1h-5zm10 0h3v2h-3zm4 0h4v1h-4zm11 0h3v5h-3zm6 0h3v10h-3zm12 0h3v6h-3zm6 0h4v11h-4zm13 0h4v1h-4zm7 0h4v15h-4zm13 0h4v1h-4zm7 0h3v15h-3zm12 0h3v8h-3zm6 0h3v6h-3zm10 0h4v1h-4zm5 0h3v6h-3zm8 0h5v1h-5zm-135 1h3v10h-3zm5 0h2v2h-2zm3 0h2v15h-2zm12 0h3v5h-3zm48 0h3v3h-3zm20 0h3v5h-3zm34 0h3v2h-3zm13 0h2v15h-2zm3 0h2v15h-2zm5 0h4v1h-4zm-127 1h2v15h-2zm127 0h2v11h-2zm-137 1h1v13h-1zm116 0h4v3h-4zm-54 1h4v12h-4zm-38 1h4v3h-4zm-11 1h4v2h-4zm29 0h4v10h-4zm40 0h4v10h-4zm23 0h4v3h-4zm12 0h3v11h-3zm4 0h2v11h-2zm-108 2h3v9h-3zm12 0h3v8h-3zm75 0h4v8h-4zm5 1h3v7h-3zm-76 1h4v6h-4zm-35 1h2v8h-2zm54 0h3v3h-3zm90 2h2v6h-2zm-91 1h4v2h-4zm20 1h4v1h-4zm20 0h4v1h-4zm-87 1h4v2h-4zm25 0h8v1h-8zm17 0h9v1h-9zm20 0h9v1h-9zm20 0h9v1h-9zm18 0h8v1h-8zm29 0h5v2h-5zm-119 1h6v1h-6zm15 0h7v1h-7zm18 0h7v1h-7zm20 0h7v1h-7zm20 0h7v1h-7zm18 0h7v1h-7zm16 0h6v1h-6zm-117 1h3v1h-3zm12 0h1v1h-1zm108 0h1v1h-1zm10 0h3v1h-3zm-128 1h1v1h-1zm6 0h1v1h-1zm9 0h3v1h-3zm14 0h3v1h-3zm16 0h4v1h-4zm18 0h4v1h-4zm18 0h3v1h-3zm16 0h3v1h-3zm14 0h3v1h-3zm11 0h2v1h-2zm7 0h1v1h-1zm-85 103h42v2h-42zm1 2h41v1h-41zm0 1h40v2h-40zm1 2h39v1h-39zm0 1h38v1h-38zm1 1h37v2h-37zm0 2h36v1h-36zm1 1h35v2h-35zm0 2h34v1h-34zm1 1h33v1h-33zm0 1h32v2h-32zm1 2h31v1h-31zm0 1h30v2h-30zm1 2h29v1h-29zm0 1h28v1h-28zm1 1h27v2h-27zm0 2h26v1h-26zm1 1h25v2h-25z"/>
<path fill="url(#p26)" d="M0 0m88 41h1v1h-1zm86 4h4v1h-4zm-127 1h3v1h-3zm127 0h5v1h-5zm-129 1h6v1h-6zm129 0h6v1h-6zm-131 1h9v1h-9zm130 0h7v1h-7zm-128 1h6v1h-6zm131 0h2v1h-2zm-128 1h1v1h-1zm130 28h7v1h-7zm5 1h2v1h-2zm-81 4h5v1h-5zm65 0h3v1h-3zm-112 1h9v1h-9zm44 0h11v1h-11zm65 0h7v1h-7zm-111 1h10v1h-10zm47 0h11v1h-11zm65 0h6v1h-6zm-116 1h14v1h-14zm117 0h5v2h-5zm-121 1h17v1h-17zm-3 1h20v1h-20zm125 0h4v1h-4zm-126 1h16v1h-16zm40 0h67v1h-67zm91 0h2v1h-2zm-131 1h139v1h-139zm142 0h2v1h-2zm-142 1h144v1h-144zm1 1h144v1h-144zm-1 1h147v6h-147zm0 6h47v1h-47zm49 0h7v1h-7zm20 0h7v1h-7zm20 0h7v1h-7zm10 0h48v1h-48zm-99 1h28v1h-28zm31 0h6v1h-6zm20 0h4v1h-4zm20 0h4v1h-4zm20 0h4v1h-4zm17 0h5v1h-5zm10 0h29v1h-29zm-118 1h21v1h-21zm33 0h3v1h-3zm19 0h2v1h-2zm20 0h2v1h-2zm20 0h2v1h-2zm17 0h3v1h-3zm15 0h23v1h-23zm-124 1h10v1h-10zm17 0h4v1h-4zm17 0h1v5h-1zm18 0h1v2h-1zm20 0h1v1h-1zm20 0h1v1h-1zm18 0h1v4h-1zm14 0h4v1h-4zm12 0h11v1h-11zm-136 1h5v1h-5zm6 0h3v2h-3zm11 0h3v2h-3zm108 0h3v3h-3zm11 0h3v2h-3zm6 0h5v1h-5zm-142 1h2v4h-2zm144 0h3v1h-3zm-138 1h2v2h-2zm12 0h2v2h-2zm119 0h2v4h-2zm7 0h2v3h-2zm-18 1h1v8h-1zm-119 1h1v10h-1zm11 0h1v9h-1zm-17 1h1v2h-1zm144 0h1v9h-1zm-8 1h1v8h-1zm-119 37h1v10h-1zm-11 1h1v10h-1zm130 1h1v9h-1zm-11 2h1v6h-1zm19 2h1v6h-1zm-127 5h1v1h-1zm15 0h3v5h-3zm18 0h3v6h-3zm20 0h3v4h-3zm20 0h3v6h-3zm18 0h3v6h-3zm17 0h1v1h-1zm-119 1h1v15h-1zm11 0h2v5h-2zm107 0h2v2h-2zm12 0h1v15h-1zm8 1h1v11h-1zm-19 1h1v14h-1zm-54 1h2v11h-2zm-38 1h2v5h-2zm-16 1h1v11h-1zm34 0h2v8h-2zm40 0h2v9h-2zm17 0h2v2h-2zm1 2h1v8h-1zm-76 2h1v6h-1zm18 4h1v2h-1zm20 1h1v1h-1zm20 0h1v1h-1z"/>
<path fill="url(#p27)" d="M0 0m84 41h4v1h-4zm5 0h2v1h-2zm53 0h6v1h-6zm-57 1h6v1h-6zm57 0h5v1h-5zm-82 1h2v1h-2zm27 0h2v1h-2zm57 0h1v1h-1zm21 0h3v1h-3zm-110 1h4v1h-4zm111 0h8v1h-8zm-115 1h6v1h-6zm116 0h7v2h-7zm-117 1h6v1h-6zm129 0h2v1h-2zm-128 1h4v1h-4zm117 0h6v1h-6zm12 0h4v1h-4zm-128 1h3v1h-3zm115 0h6v1h-6zm13 0h6v1h-6zm-139 1h4v1h-4zm10 0h3v1h-3zm117 0h8v1h-8zm10 0h9v1h-9zm-137 1h7v1h-7zm8 0h5v1h-5zm121 0h18v1h-18zm-129 1h12v1h-12zm132 0h15v1h-15zm-132 1h11v1h-11zm135 0h12v1h-12zm-135 1h9v1h-9zm63 0h1v1h-1zm75 0h9v1h-9zm-138 1h5v1h-5zm62 0h3v5h-3zm77 0h8v2h-8zm-139 1h3v1h-3zm0 1h2v1h-2zm140 0h7v3h-7zm-140 1h1v1h-1zm62 2h2v2h-2zm79 0h6v2h-6zm-17 1h4v1h-4zm19 1h4v1h-4zm2 1h2v1h-2zm-138 1h4v1h-4zm13 0h4v1h-4zm126 0h1v1h-1zm-141 1h9v1h-9zm13 0h7v1h-7zm-14 1h10v1h-10zm13 0h8v1h-8zm117 0h4v1h-4zm-130 1h11v1h-11zm12 0h9v1h-9zm117 0h5v2h-5zm-129 1h21v1h-21zm0 1h20v2h-20zm130 0h3v1h-3zm-129 2h18v1h-18zm1 1h15v1h-15zm2 1h13v1h-13zm55 0h1v1h-1zm64 0h3v2h-3zm-122 1h15v1h-15zm57 0h3v2h-3zm-62 1h19v1h-19zm127 0h20v2h-20zm-127 1h18v1h-18zm61 0h5v1h-5zm-61 1h17v1h-17zm59 0h7v1h-7zm69 0h19v2h-19zm-128 1h15v1h-15zm55 0h12v1h-12zm-55 1h14v1h-14zm53 0h16v1h-16zm75 0h9v1h-9zm16 0h3v2h-3zm-144 1h16v1h-16zm52 0h19v1h-19zm74 0h16v1h-16zm-126 1h20v1h-20zm52 0h21v1h-21zm71 0h24v1h-24zm-123 1h40v1h-40zm51 0h24v1h-24zm49 0h6v1h-6zm21 0h26v1h-26zm-121 1h43v1h-43zm51 0h26v1h-26zm47 0h11v1h-11zm18 0h31v1h-31zm-116 1h44v1h-44zm51 0h10v1h-10zm15 0h12v1h-12zm31 0h29v1h-29zm32 0h18v1h-18zm-128 1h13v1h-13zm22 0h22v1h-22zm27 0h8v1h-8zm19 0h10v1h-10zm27 0h27v1h-27zm34 0h5v1h-5zm6 0h11v1h-11zm-136 1h12v1h-12zm22 0h25v1h-25zm26 0h11v1h-11zm22 0h24v1h-24zm26 0h28v1h-28zm34 0h17v4h-17zm-130 1h8v1h-8zm22 0h73v1h-73zm74 0h29v1h-29zm-96 1h4v1h-4zm21 0h104v1h-104zm-21 1h1v1h-1zm21 0h105v1h-105zm-5 1h24v1h-24zm91 0h24v1h-24zm26 0h14v1h-14zm6 1h3v1h-3zm5 0h3v2h-3zm-144 2h1v1h-1zm145 0h2v1h-2z"/>
<path fill="url(#p28)" d="M0 0m92 40h3v1h-3zm8 0h37v1h-37zm-23 1h7v1h-7zm14 0h3v1h-3zm11 0h10v1h-10zm11 0h11v1h-11zm23 0h6v1h-6zm12 0h4v1h-4zm-81 1h9v1h-9zm15 0h3v1h-3zm9 0h2v1h-2zm13 0h5v1h-5zm11 0h8v1h-8zm22 0h5v1h-5zm10 0h14v1h-14zm-85 1h9v1h-9zm20 0h5v1h-5zm7 0h3v1h-3zm30 0h2v1h-2zm18 0h7v1h-7zm8 0h6v1h-6zm12 0h8v1h-8zm-98 1h9v1h-9zm24 0h8v1h-8zm54 0h12v1h-12zm24 0h5v1h-5zm-104 1h10v1h-10zm28 0h4v1h-4zm51 0h11v1h-11zm26 0h5v1h-5zm-106 1h10v1h-10zm24 0h1v1h-1zm54 0h12v1h-12zm29 0h4v1h-4zm-108 1h11v2h-11zm24 0h3v1h-3zm54 0h12v1h-12zm30 0h5v1h-5zm-85 1h5v3h-5zm53 0h13v1h-13zm32 0h4v1h-4zm-109 1h12v1h-12zm76 0h15v1h-15zm34 0h4v1h-4zm-110 1h13v1h-13zm50 0h1v1h-1zm24 0h18v1h-18zm36 0h6v1h-6zm-111 1h14v1h-14zm26 0h3v2h-3zm24 0h5v1h-5zm24 0h20v1h-20zm38 0h8v1h-8zm-113 1h16v1h-16zm49 0h8v1h-8zm25 0h8v1h-8zm13 0h9v1h-9zm27 0h10v1h-10zm-116 1h6v1h-6zm7 0h11v1h-11zm43 0h4v1h-4zm5 0h5v1h-5zm21 0h7v4h-7zm14 0h10v1h-10zm28 0h11v1h-11zm-122 1h9v1h-9zm12 0h13v1h-13zm27 0h4v1h-4zm15 0h3v1h-3zm6 0h5v5h-5zm34 0h13v2h-13zm31 0h9v1h-9zm-127 1h12v1h-12zm13 0h12v1h-12zm42 0h4v2h-4zm69 0h12v1h-12zm-125 1h25v1h-25zm98 0h11v2h-11zm24 0h16v1h-16zm-123 1h26v1h-26zm56 0h5v1h-5zm27 0h8v3h-8zm35 0h21v1h-21zm-119 1h26v4h-26zm54 0h8v1h-8zm46 0h10v1h-10zm13 0h27v1h-27zm-61 1h10v2h-10zm12 0h6v2h-6zm36 0h9v1h-9zm13 0h28v1h-28zm-30 1h9v1h-9zm18 0h7v1h-7zm11 0h12v1h-12zm16 0h13v1h-13zm-76 1h17v1h-17zm33 0h6v1h-6zm16 0h6v1h-6zm12 0h30v1h-30zm-113 1h27v1h-27zm53 0h15v1h-15zm47 0h6v1h-6zm14 0h31v1h-31zm-114 1h7v1h-7zm11 0h9v1h-9zm13 0h3v1h-3zm30 0h13v1h-13zm41 0h10v1h-10zm23 0h28v1h-28zm-118 1h5v1h-5zm14 0h4v1h-4zm11 0h2v1h-2zm30 0h2v1h-2zm39 0h9v1h-9zm27 0h26v1h-26zm-121 1h4v5h-4zm14 0h3v1h-3zm11 0h3v3h-3zm69 0h8v1h-8zm29 0h11v1h-11zm15 0h9v1h-9zm-123 1h1v1h-1zm78 0h9v1h-9zm32 0h8v1h-8zm13 0h5v1h-5zm6 0h3v1h-3zm-50 1h7v1h-7zm30 0h9v1h-9zm14 0h9v1h-9zm-114 1h4v2h-4zm70 0h5v1h-5zm29 0h11v1h-11zm14 0h10v1h-10zm-94 1h7v1h-7zm17 0h7v1h-7zm63 0h24v1h-24zm-123 1h5v1h-5zm23 0h5v1h-5zm15 0h14v1h-14zm21 0h9v1h-9zm20 0h1v1h-1zm43 0h25v1h-25zm-122 1h6v1h-6zm21 0h7v1h-7zm15 0h17v1h-17zm22 0h11v1h-11zm20 0h5v1h-5zm43 0h26v1h-26zm-121 1h8v1h-8zm21 0h6v1h-6zm13 0h19v1h-19zm24 0h5v1h-5zm6 0h6v1h-6zm13 0h11v1h-11zm43 0h7v4h-7zm10 0h17v2h-17zm-130 1h5v1h-5zm20 0h8v1h-8zm13 0h22v1h-22zm23 0h6v1h-6zm9 0h6v1h-6zm10 0h15v1h-15zm-56 1h43v1h-43zm46 0h30v1h-30zm-47 1h43v1h-43zm48 0h36v1h-36zm-49 1h42v1h-42zm49 0h42v1h-42zm53 0h9v1h-9zm-104 1h40v1h-40zm52 0h61v1h-61zm-53 1h39v1h-39zm55 0h59v1h-59zm-53 1h36v1h-36zm55 0h55v1h-55zm-51 1h32v1h-32zm53 0h50v1h-50zm-33 1h11v1h-11zm35 0h25v1h-25zm31 0h15v1h-15zm-63 1h8v1h-8zm34 0h21v1h-21zm32 0h7v1h-7zm-65 1h7v1h-7zm34 0h19v1h-19zm-78 1h1v1h-1zm45 0h5v1h-5zm34 0h17v1h-17zm56 0h1v1h-1zm-88 1h1v1h-1zm47 0h2v1h-2zm1 1h1v1h-1z"/>
<path fill="url(#p29)" d="M0 0m95 40h5v1h-5zm-1 1h2v1h-2zm3 0h5v1h-5zm15 0h1v1h-1zm12 0h12v1h-12zm-48 1h6v1h-6zm17 0h2v1h-2zm6 0h5v1h-5zm10 0h6v1h-6zm14 0h5v1h-5zm7 0h7v1h-7zm-59 1h11v1h-11zm21 0h3v1h-3zm8 0h19v1h-19zm21 0h7v1h-7zm8 0h8v2h-8zm22 0h6v1h-6zm-83 1h15v1h-15zm23 0h3v1h-3zm10 0h27v1h-27zm48 0h12v1h-12zm-82 1h18v1h-18zm22 0h4v1h-4zm12 0h35v1h-35zm46 0h15v1h-15zm-81 1h14v1h-14zm15 0h11v1h-11zm20 0h33v1h-33zm45 0h5v1h-5zm10 0h7v1h-7zm-90 1h6v1h-6zm7 0h6v1h-6zm9 0h9v1h-9zm19 0h32v1h-32zm44 0h5v1h-5zm12 0h6v1h-6zm-91 1h5v1h-5zm7 0h5v1h-5zm10 0h4v1h-4zm18 0h30v1h-30zm43 0h5v1h-5zm15 0h4v1h-4zm-93 1h12v1h-12zm17 0h5v1h-5zm17 0h30v1h-30zm45 0h5v1h-5zm13 0h6v1h-6zm-91 1h11v1h-11zm16 0h8v1h-8zm16 0h5v1h-5zm6 0h23v1h-23zm41 0h6v1h-6zm9 0h9v1h-9zm-88 1h12v1h-12zm15 0h11v1h-11zm16 0h5v1h-5zm10 0h19v1h-19zm39 0h18v1h-18zm-79 1h11v1h-11zm14 0h13v1h-13zm15 0h4v1h-4zm12 0h11v1h-11zm12 0h5v1h-5zm13 0h5v1h-5zm14 0h18v1h-18zm-92 1h1v1h-1zm12 0h28v1h-28zm29 0h3v1h-3zm13 0h8v1h-8zm12 0h4v3h-4zm11 0h7v3h-7zm17 0h18v1h-18zm-95 1h3v1h-3zm16 0h14v1h-14zm18 0h11v1h-11zm22 0h6v1h-6zm42 0h18v1h-18zm-97 1h1v1h-1zm13 0h30v1h-30zm42 0h7v1h-7zm42 0h15v1h-15zm-85 1h31v1h-31zm43 0h9v1h-9zm10 0h5v1h-5zm12 0h8v4h-8zm19 0h13v1h-13zm-84 1h30v1h-30zm43 0h14v3h-14zm41 0h8v1h-8zm-85 1h28v1h-28zm84 0h3v1h-3zm-84 1h26v2h-26zm83 0h4v1h-4zm-39 1h13v1h-13zm22 0h9v1h-9zm16 0h4v1h-4zm-82 1h5v1h-5zm6 0h20v1h-20zm37 0h16v1h-16zm22 0h10v1h-10zm16 0h6v1h-6zm-80 1h4v3h-4zm6 0h20v1h-20zm35 0h32v1h-32zm38 0h8v1h-8zm-73 1h21v1h-21zm34 0h28v1h-28zm38 0h13v1h-13zm-71 1h21v1h-21zm23 0h37v1h-37zm46 0h18v1h-18zm-75 1h3v3h-3zm7 0h59v1h-59zm67 0h21v1h-21zm-67 1h52v1h-52zm53 0h5v1h-5zm14 0h23v1h-23zm41 0h1v1h-1zm-110 1h61v1h-61zm68 0h23v1h-23zm-73 1h66v1h-66zm71 0h24v1h-24zm-71 1h15v1h-15zm22 0h10v1h-10zm17 0h56v1h-56zm-39 1h10v1h-10zm24 0h7v1h-7zm16 0h11v1h-11zm12 0h42v1h-42zm-52 1h8v1h-8zm25 0h5v2h-5zm16 0h9v1h-9zm14 0h38v1h-38zm-56 1h7v1h-7zm43 0h7v1h-7zm18 0h32v1h-32zm-60 1h5v1h-5zm27 0h1v1h-1zm16 0h4v1h-4zm19 0h30v1h-30zm5 1h25v1h-25zm7 1h18v1h-18zm6 1h11v1h-11z"/>
<path fill="url(#p30)" d="M0 0m96 41h1v1h-1zm-1 1h4v1h-4zm33 0h2v1h-2zm-33 1h5v1h-5zm33 0h1v2h-1zm-34 1h7v1h-7zm-1 1h8v1h-8zm-1 1h9v1h-9zm59 0h5v1h-5zm-79 1h1v1h-1zm19 0h10v1h-10zm59 0h7v1h-7zm-79 1h2v1h-2zm16 0h14v1h-14zm62 0h10v1h-10zm-61 1h12v1h-12zm62 0h8v1h-8zm-59 1h8v1h-8zm61 0h3v1h-3zm-59 1h5v1h-5zm2 1h2v1h-2zm25 0h1v1h-1zm-24 1h1v1h-1zm22 0h4v1h-4zm-1 1h5v1h-5zm1 1h4v1h-4zm2 1h1v1h-1zm-48 5h1v1h-1zm0 1h2v2h-2zm0 2h3v1h-3zm0 1h4v2h-4zm56 1h1v1h-1zm-56 1h2v1h-2z"/>
<path d="M40.8 51.0L46.9 46.6L53.0 44.9L59.1 43.7L65.2 42.8L71.4 42.0L77.5 41.5L83.6 41.0L89.8 40.6L95.9 40.3L102.0 40.1L108.1 40.0L114.2 40.0L120.4 40.0L126.5 40.1L132.6 40.3L138.8 40.6L144.9 41.0L151.0 41.5L157.1 42.0L163.2 42.8L169.4 43.7L175.5 44.9L181.6 46.6L187.8 51.0" fill="none" stroke="#5555ff" stroke-width="1" />
<path d="M40.8 131.0L46.9 129.0L53.0 128.2L59.1 127.6L65.2 127.2L71.4 126.9L77.5 126.6L83.6 126.4L89.8 126.2L95.9 126.1L102.0 126.0L108.1 125.9L114.2 125.9L120.4 125.9L126.5 126.0L132.6 126.1L138.8 126.2L144.9 126.4L151.0 126.6L157.1 126.9L163.2 127.2L169.4 127.6L175.5 128.2L181.6 129.0L187.8 131.0" fill="none" stroke="#5555ff" stroke-width="1" />
<path d="M40.8 160.0L46.9 158.8L53.0 158.4L59.1 158.0L65.2 157.8L71.4 157.6L77.5 157.4L83.6 157.3L89.8 157.2L95.9 157.1L102.0 157.1L108.1 157.1L114.2 157.0L120.4 157.1L126.5 157.1L132.6 157.1L138.8 157.2L144.9 157.3L151.0 157.4L157.1 157.6L163.2 157.8L169.4 158.0L175.5 158.4L181.6 158.8L187.8 160.0" fill="none" stroke="#5555ff" stroke-width="1" />
<path d="M40.8 176.0L46.9 175.3L53.0 175.0L59.1 174.8L65.2 174.7L71.4 174.6L77.5 174.5L83.6 174.4L89.8 174.3L95.9 174.3L102.0 174.2L108.1 174.2L114.2 174.2L120.4 174.2L126.5 174.2L132.6 174.3L138.8 174.3L144.9 174.4L151.0 174.5L157.1 174.6L163.2 174.7L169.4 174.8L175.5 175.0L181.6 175.3L187.8 176.0" fill="none" stroke="#5555ff" stroke-width="1" />
<path d="M40.8 59.0L46.9 54.8L53.0 53.2L59.1 52.1L65.2 51.2L71.4 50.5L77.5 50.0L83.6 49.5L89.8 49.2L95.9 48.9L102.0 48.7L108.1 48.6L114.2 48.6L120.4 48.6L126.5 48.7L132.6 48.9L138.8 49.2L144.9 49.5L151.0 50.0L157.1 50.5L163.2 51.2L169.4 52.1L175.5 53.2L181.6 54.8L187.8 59.0" fill="none" stroke="#5555ff" stroke-width="1" />
<path d="M40.8 67.0L46.9 63.1L53.0 61.6L59.1 60.5L65.2 59.7L71.4 59.0L77.5 58.5L83.6 58.1L89.8 57.7L95.9 57.5L102.0 57.3L108.1 57.2L114.2 57.2L120.4 57.2L126.5 57.3L132.6 57.5L138.8 57.7L144.9 58.1L151.0 58.5L157.1 59.0L163.2 59.7L169.4 60.5L175.5 61.6L181.6 63.1L187.8 67.0" fill="none" stroke="#5555ff" stroke-width="1" />
<path d="M40.8 75.0L46.9 71.3L53.0 69.9L59.1 68.9L65.2 68.1L71.4 67.5L77.5 67.0L83.6 66.6L89.8 66.3L95.9 66.0L102.0 65.9L108.1 65.8L114.2 65.8L120.4 65.8L126.5 65.9L132.6 66.0L138.8 66.3L144.9 66.6L151.0 67.0L157.1 67.5L163.2 68.1L169.4 68.9L175.5 69.9L181.6 71.3L187.8 75.0" fill="none" stroke="#5555ff" stroke-width="1" />
<path d="M40.8 83.0L46.9 79.5L53.0 78.2L59.1 77.3L65.2 76.5L71.4 76.0L77.5 75.5L83.6 75.1L89.8 74.8L95.9 74.6L102.0 74.5L108.1 74.4L114.2 74.3L120.4 74.4L126.5 74.5L132.6 74.6L138.8 74.8L144.9 75.1L151.0 75.5L157.1 76.0L163.2 76.5L169.4 77.3L175.5 78.2L181.6 79.5L187.8 83.0" fill="none" stroke="#5555ff" stroke-width="1" />
<path d="M40.8 91.0L46.9 87.8L53.0 86.5L59.1 85.7L65.2 85.0L71.4 84.4L77.5 84.0L83.6 83.7L89.8 83.4L95.9 83.2L102.0 83.0L108.1 83.0L114.2 82.9L120.4 83.0L126.5 83.0L132.6 83.2L138.8 83.4L144.9 83.7L151.0 84.0L157.1 84.4L163.2 85.0L169.4 85.7L175.5 86.5L181.6 87.8L187.8 91.0" fill="none" stroke="#5555ff" stroke-width="1" />
<path d="M36.2 160.0L42.8 158.7L49.2 158.3L55.8 157.9L62.2 157.7L68.8 157.4L75.2 157.3L81.8 157.1L88.2 157.0L94.8 157.0L101.2 156.9L107.8 156.9L114.2 156.9L120.8 156.9L127.2 156.9L133.8 157.0L140.2 157.0L146.8 157.1L153.2 157.3L159.8 157.4L166.2 157.7L172.8 157.9L179.2 158.3L185.8 158.7L192.2 160.0" fill="none" stroke="#5555ff" stroke-width="1" />
<path d="M36.2 176.0L42.8 175.2L49.2 175.0L55.8 174.8L62.2 174.6L68.8 174.5L75.2 174.4L81.8 174.3L88.2 174.2L94.8 174.2L101.2 174.1L107.8 174.1L114.2 174.1L120.8 174.1L127.2 174.1L133.8 174.2L140.2 174.2L146.8 174.3L153.2 174.4L159.8 174.5L166.2 174.6L172.8 174.8L179.2 175.0L185.8 175.2L192.2 176.0" fill="none" stroke="#5555ff" stroke-width="1" />
<path d="M53.3 178.0L73.1 214.8L102.8 304.5" fill="none" stroke="#5555ff" stroke-width="1" />
<path d="M60.5 178.0L77.9 214.8L104.2 304.5" fill="none" stroke="#5555ff" stroke-width="1" />
<path d="M69.7 178.0L84.1 214.8L105.9 304.5" fill="none" stroke="#5555ff" stroke-width="1" />
<path d="M79.7 178.0L90.9 214.8L107.8 304.5" fill="none" stroke="#5555ff" stroke-width="1" />
<path d="M95.8 178.0L101.8 214.8L110.8 304.5" fill="none" stroke="#5555ff" stroke-width="1" />
<path d="M113.9 178.0L114.0 214.8L114.2 304.5" fill="none" stroke="#5555ff" stroke-width="1" />
<path d="M131.6 178.0L126.0 214.8L117.5 304.5" fill="none" stroke="#5555ff" stroke-width="1" />
<path d="M147.5 178.0L136.7 214.8L120.5 304.5" fill="none" stroke="#5555ff" stroke-width="1" />
<path d="M158.8 178.0L144.4 214.8L122.6 304.5" fill="none" stroke="#5555ff" stroke-width="1" />
<path d="M168.0 178.0L150.6 214.8L124.3 304.5" fill="none" stroke="#5555ff" stroke-width="1" />
<path d="M175.2 178.0L155.4 214.8L125.7 304.5" fill="none" stroke="#5555ff" stroke-width="1" />
<path d="M42.0 49.0L42.0 175.7M48.1 46.2L48.1 175.2M59.5 43.6L59.5 174.8M75.5 41.6L75.5 174.5M93.6 40.4L93.6 174.3M113.8 40.0L113.8 174.2M133.7 40.4L133.7 174.3M151.5 41.5L151.5 174.5M167.6 43.4L167.6 174.8M178.9 45.8L178.9 175.2M186.3 48.8L186.3 175.6M45.0 47.3L45.0 94.4M53.8 44.7L53.8 92.7M67.5 42.5L67.5 91.1M84.6 40.9L84.6 90.0M103.7 40.1L103.7 89.5M123.8 40.1L123.8 89.4M142.6 40.8L142.6 90.0M159.6 42.3L159.6 91.0M173.3 44.4L173.3 92.5M182.6 46.9L182.6 94.2M57.4 193.0L171.1 193.0M69.5 214.0L159.0 214.0M71.3 218.5L157.2 218.5M72.9 223.0L155.6 223.0M74.7 228.0L153.8 228.0M76.4 233.0L152.1 233.0M78.2 238.0L150.3 238.0M81.1 246.0L147.4 246.0M83.6 253.0L144.9 253.0M85.7 259.0L142.8 259.0M87.9 265.0L140.6 265.0M90.0 271.0L138.5 271.0M92.1 277.0L136.4 277.0M94.3 283.0L134.2 283.0M96.4 289.0L132.1 289.0M98.6 295.0L129.9 295.0M100.3 300.0L128.2 300.0" fill="none" stroke="#5555ff" stroke-width="1"/>
<ellipse cx="38.8" cy="51.5" rx="3.2" ry="4.2" fill="#5555ff"/>
<ellipse cx="39.2" cy="160.0" rx="3.4" ry="2.2" fill="#5555ff"/>
<ellipse cx="38.8" cy="175.5" rx="3.2" ry="2.0" fill="#5555ff"/>
<ellipse cx="189.8" cy="51.5" rx="3.2" ry="4.2" fill="#5555ff"/>
<ellipse cx="189.2" cy="160.0" rx="3.4" ry="2.2" fill="#5555ff"/>
<ellipse cx="189.8" cy="175.5" rx="3.2" ry="2.0" fill="#5555ff"/>
<path d="M40.3 176.0L40.3 424.7M75.5 174.0L75.5 435.6M40.3 258.0L78.6 258.0M40.3 341.0L75.5 346.5M40.3 176.0L75.5 259.0M75.5 174.0L40.3 258.0M40.3 258.0L75.5 346.5M75.5 260.0L40.3 341.0M40.3 341.0L75.5 435.6M75.5 346.5L40.3 424.7M186.7 176.0L186.7 424.7M151.5 174.0L151.5 435.6M186.7 258.0L148.4 258.0M186.7 341.0L151.5 346.5M186.7 176.0L151.5 259.0M151.5 174.0L186.7 258.0M186.7 258.0L151.5 346.5M151.5 260.0L186.7 341.0M186.7 341.0L151.5 435.6M151.5 346.5L186.7 424.7" fill="none" stroke="#aa5500" stroke-width="1"/>
</g>
<clipPath id="c2"><rect x="224" y="16" width="223" height="241"/></clipPath><g clip-path="url(#c2)">
<path d="M305.2 139.3L305.2 342.5M289.4 209.7L305.2 209.7M272.7 279.2L305.2 274.6M272.7 139.3L305.2 208.0M305.2 139.3L272.7 208.8M272.7 208.8L305.2 274.6M305.2 208.8L272.7 279.2M272.7 279.2L305.2 342.5M305.2 274.6L272.7 350.2M364.4 139.3L364.4 342.5M380.2 209.7L364.4 209.7M396.9 279.2L364.4 274.6M396.9 139.3L364.4 208.0M364.4 139.3L396.9 208.8M396.9 208.8L364.4 274.6M364.4 208.8L396.9 279.2M396.9 279.2L364.4 342.5M364.4 274.6L396.9 350.2M272.7 139.3L272.7 350.2M302.6 137.6L302.6 359.4M272.7 208.8L305.2 208.8M272.7 279.2L302.6 283.9M272.7 139.3L302.6 209.7M302.6 137.6L272.7 208.8M272.7 208.8L302.6 283.9M302.6 210.5L272.7 279.2M272.7 279.2L302.6 359.4M302.6 283.9L272.7 350.2M396.9 139.3L396.9 350.2M367.0 137.6L367.0 359.4M396.9 208.8L364.4 208.8M396.9 279.2L367.0 283.9M396.9 139.3L367.0 209.7M367.0 137.6L396.9 208.8M396.9 208.8L367.0 283.9M367.0 210.5L396.9 279.2M396.9 279.2L367.0 359.4M367.0 283.9L396.9 350.2" fill="none" stroke="#aa5500" stroke-width="1"/>
<path fill="url(#p5)" d="M0 0m314 173h2v1h-2zm54 1h2v1h-2zm-56 1h2v1h-2z"/>
<path fill="url(#p6)" d="M0 0m302 173h2v1h-2zm50 1h2v1h-2zm6 10h2v1h-2zm-24 1h2v1h-2z"/>
<path fill="url(#p7)" d="M0 0m322 172h2v1h-2zm14 0h2v1h-2zm14 0h2v1h-2zm-42 1h2v1h-2zm48 0h2v1h-2zm0 2h2v1h-2zm-22 1h2v1h-2zm36 0h1v1h-1zm-26 12h2v1h-2z"/>
<path fill="url(#p8)" d="M0 0m302 172h2v1h-2zm58 0h2v1h-2zm-10 1h2v1h-2zm12 0h2v1h-2zm-46 1h2v1h-2zm4 0h2v1h-2zm4 0h2v1h-2zm36 0h2v1h-2zm-38 1h2v1h-2zm4 10h2v1h-2zm34 1h2v1h-2z"/>
<path fill="url(#p9)" d="M0 0m320 172h2v1h-2zm32 0h4v1h-4zm14 0h2v1h-2zm4 0h2v1h-2zm-72 1h2v1h-2zm18 0h2v1h-2zm6 0h2v1h-2zm8 0h2v1h-2zm14 0h2v1h-2zm24 0h4v1h-4zm-64 1h2v1h-2zm8 0h2v1h-2zm36 0h2v1h-2zm-20 1h4v1h-4zm12 0h2v1h-2zm14 0h2v1h-2zm14 1h2v1h-2zm-28 1h2v1h-2zm2 6h2v1h-2zm-6 1h2v1h-2zm-18 1h2v1h-2zm28 0h2v1h-2zm-10 1h2v1h-2zm-30 1h2v1h-2zm40 0h2v1h-2z"/>
<path fill="url(#p10)" d="M0 0m298 172h2v1h-2zm28 0h2v1h-2zm18 0h2v1h-2zm14 0h2v1h-2zm-58 1h2v1h-2zm10 0h2v1h-2zm24 0h4v1h-4zm6 0h2v1h-2zm-42 1h2v1h-2zm28 0h2v1h-2zm4 0h2v1h-2zm20 0h2v1h-2zm4 0h2v1h-2zm10 0h2v1h-2zm-64 1h4v1h-4zm8 0h2v1h-2zm6 0h2v2h-2zm6 0h2v1h-2zm-2 1h2v1h-2zm22 0h2v1h-2zm16 1h2v1h-2zm10 1h2v1h-2zm-48 5h2v1h-2zm28 1h2v1h-2zm-42 1h2v1h-2zm50 0h4v1h-4zm-48 1h2v1h-2zm48 0h2v1h-2zm12 0h1v1h-1zm-63 1h1v1h-1zm25 0h2v1h-2z"/>
<path fill="url(#p11)" d="M0 0m304 172h2v1h-2zm12 0h2v1h-2zm14 0h2v1h-2zm34 0h2v1h-2zm-58 1h2v1h-2zm26 0h2v2h-2zm14 0h2v1h-2zm6 0h2v1h-2zm-30 1h2v1h-2zm16 0h2v2h-2zm6 0h4v1h-4zm14 0h2v1h-2zm-52 1h2v1h-2zm4 0h2v1h-2zm16 0h2v1h-2zm8 0h2v1h-2zm18 0h2v1h-2zm14 0h2v1h-2zm-10 1h2v1h-2zm-2 1h2v2h-2zm4 0h2v1h-2zm12 0h1v1h-1zm-6 1h2v1h-2zm-60 5h2v1h-2zm24 0h2v1h-2zm22 0h2v1h-2zm14 0h2v1h-2zm-62 1h2v1h-2zm12 0h2v2h-2zm4 0h2v1h-2zm34 0h2v2h-2zm-46 1h2v1h-2zm16 0h2v1h-2zm14 0h2v1h-2zm4 0h2v1h-2zm24 0h2v1h-2zm-54 1h2v1h-2zm18 0h2v1h-2zm14 0h2v1h-2zm-30 1h2v1h-2zm8 0h2v1h-2zm6 0h2v1h-2zm4 0h2v1h-2zm24 0h2v1h-2zm12 0h1v1h-1zm-58 1h2v1h-2zm2 1h2v1h-2zm18 0h2v1h-2zm34 1h2v1h-2z"/>
<path fill="url(#p12)" d="M0 0m338 171h2v2h-2zm30 0h2v1h-2zm-56 1h2v1h-2zm30 0h2v1h-2zm-22 1h2v1h-2zm8 0h2v1h-2zm20 0h2v1h-2zm16 0h4v1h-4zm-58 1h2v1h-2zm4 0h2v1h-2zm24 0h2v1h-2zm6 0h2v1h-2zm16 0h2v1h-2zm14 0h2v1h-2zm-34 1h2v1h-2zm14 0h2v1h-2zm12 0h2v2h-2zm6 0h3v1h-3zm-46 1h2v1h-2zm8 0h4v1h-4zm12 0h2v1h-2zm-18 1h2v1h-2zm6 0h2v1h-2zm28 1h2v1h-2zm-40 1h2v1h-2zm30 3h2v1h-2zm-47 1h1v1h-1zm5 0h2v1h-2zm16 0h2v1h-2zm16 0h2v2h-2zm20 0h2v1h-2zm-46 1h2v2h-2zm12 0h2v1h-2zm4 0h2v1h-2zm-8 1h2v1h-2zm30 0h2v2h-2zm10 0h4v1h-4zm6 0h2v1h-2zm-54 1h8v1h-8zm44 0h2v1h-2zm-48 1h2v1h-2zm10 0h2v2h-2zm14 0h2v1h-2zm6 0h2v1h-2zm4 0h4v1h-4zm10 0h2v1h-2zm-4 1h2v1h-2zm-28 1h2v1h-2zm30 0h2v1h-2zm-6 1h2v1h-2z"/>
<path fill="url(#p13)" d="M0 0m298 171h2v1h-2zm50 0h2v1h-2zm-40 1h2v1h-2zm16 0h2v1h-2zm10 0h2v1h-2zm22 0h2v1h-2zm12 0h2v1h-2zm-56 1h2v1h-2zm26 0h2v1h-2zm20 0h4v1h-4zm-30 1h2v1h-2zm38 0h2v1h-2zm-50 1h4v1h-4zm8 0h2v2h-2zm20 0h2v1h-2zm14 0h2v1h-2zm-58 1h2v1h-2zm4 0h4v1h-4zm6 0h2v1h-2zm6 0h2v1h-2zm34 0h2v2h-2zm-40 1h4v1h-4zm50 0h4v1h-4zm6 0h4v1h-4zm-54 1h2v1h-2zm10 0h2v1h-2zm10 0h2v1h-2zm10 0h4v1h-4zm18 0h2v1h-2zm-30 1h2v1h-2zm14 0h4v1h-4zm18 0h2v1h-2zm-34 1h2v2h-2zm2 2h2v1h-2zm-20 1h2v1h-2zm20 0h8v1h-8zm26 0h2v1h-2zm12 0h1v1h-1zm-48 1h2v1h-2zm12 0h2v1h-2zm12 0h2v1h-2zm16 0h4v1h-4zm6 0h2v1h-2zm-50 1h2v1h-2zm8 0h2v1h-2zm18 0h2v1h-2zm-18 1h4v1h-4zm10 0h2v1h-2zm10 0h2v1h-2zm14 0h2v1h-2zm-18 1h2v1h-2zm20 0h4v1h-4zm-40 1h2v1h-2zm12 0h2v1h-2zm34 0h1v1h-1zm-48 1h2v1h-2zm24 0h2v1h-2zm6 0h2v1h-2zm-42 1h2v1h-2zm48 0h2v1h-2z"/>
<path fill="url(#p14)" d="M0 0m302 171h2v1h-2zm10 0h2v1h-2zm14 0h2v1h-2zm30 0h4v1h-4zm10 0h2v1h-2zm-60 1h2v1h-2zm12 0h2v1h-2zm-14 1h2v1h-2zm38 0h2v1h-2zm-34 1h2v1h-2zm10 0h2v1h-2zm18 0h2v1h-2zm26 0h2v1h-2zm-20 1h2v1h-2zm4 0h2v1h-2zm-38 1h2v1h-2zm12 0h2v1h-2zm16 0h2v1h-2zm10 0h4v1h-4zm14 0h2v1h-2zm6 0h2v1h-2zm-66 1h2v3h-2zm6 0h2v1h-2zm8 0h2v3h-2zm18 0h2v1h-2zm10 0h8v1h-8zm-32 1h2v1h-2zm20 0h2v1h-2zm10 0h2v1h-2zm28 0h2v2h-2zm-60 1h2v1h-2zm16 0h2v1h-2zm14 0h2v1h-2zm18 0h2v1h-2zm8 0h2v1h-2zm-58 1h4v1h-4zm34 0h2v1h-2zm10 0h2v1h-2zm-48 1h2v1h-2zm28 0h2v1h-2zm-24 1h2v1h-2zm38 0h2v1h-2zm8 0h2v1h-2zm4 0h2v1h-2zm4 0h2v1h-2zm-52 1h2v1h-2zm4 0h4v1h-4zm36 0h2v1h-2zm4 0h4v1h-4zm8 0h4v1h-4zm-44 1h2v1h-2zm24 0h4v1h-4zm10 0h2v1h-2zm-48 1h2v1h-2zm6 0h2v1h-2zm22 0h2v1h-2zm14 0h2v1h-2zm4 0h2v1h-2zm10 0h2v1h-2zm-36 1h2v1h-2zm24 0h2v1h-2zm-42 1h2v1h-2zm60 0h2v1h-2zm-50 1h4v2h-4zm16 0h2v1h-2zm6 0h2v1h-2zm4 0h2v1h-2zm6 0h2v2h-2zm4 0h2v1h-2zm6 0h2v1h-2zm4 0h2v1h-2zm-52 1h2v1h-2zm16 0h4v1h-4zm14 0h2v1h-2zm18 0h4v1h-4zm-30 1h4v1h-4zm24 0h4v1h-4zm10 0h2v1h-2zm4 0h2v1h-2zm-36 1h2v1h-2zm36 1h1v1h-1z"/>
<path fill="url(#p15)" d="M0 0m297 171h1v1h-1zm13 0h2v2h-2zm4 0h2v2h-2zm14 0h6v1h-6zm34 0h4v1h-4zm10 0h1v1h-1zm-72 1h2v1h-2zm28 0h2v1h-2zm20 0h2v1h-2zm-30 1h2v1h-2zm6 0h4v1h-4zm30 0h2v1h-2zm-54 1h4v1h-4zm-1 1h1v3h-1zm5 0h2v1h-2zm28 0h2v1h-2zm16 0h2v1h-2zm16 0h2v1h-2zm-62 1h2v1h-2zm10 0h2v1h-2zm14 0h4v1h-4zm26 0h2v2h-2zm6 0h2v1h-2zm-56 1h4v1h-4zm16 0h4v1h-4zm16 0h4v1h-4zm-32 1h6v1h-6zm16 0h2v1h-2zm6 0h4v1h-4zm10 0h2v1h-2zm12 0h4v1h-4zm-44 1h2v1h-2zm10 0h2v1h-2zm4 0h2v1h-2zm16 0h2v1h-2zm4 0h2v2h-2zm4 0h2v1h-2zm8 0h2v1h-2zm4 0h4v1h-4zm-42 1h4v1h-4zm8 0h4v1h-4zm12 0h4v1h-4zm12 0h2v1h-2zm4 0h2v1h-2zm8 0h4v1h-4zm-53 1h1v1h-1zm3 0h4v1h-4zm8 0h2v1h-2zm6 0h2v1h-2zm4 0h2v1h-2zm22 0h2v1h-2zm4 0h2v1h-2zm8 0h2v1h-2zm8 0h2v2h-2zm-62 1h4v1h-4zm18 0h2v1h-2zm4 0h6v1h-6zm12 0h2v1h-2zm4 0h4v1h-4zm-24 1h2v1h-2zm30 0h2v1h-2zm20 0h2v1h-2zm-62 1h2v1h-2zm30 0h2v1h-2zm30 0h2v1h-2zm-36 1h2v1h-2zm-24 1h2v1h-2zm16 0h2v1h-2zm18 0h4v1h-4zm14 0h2v1h-2zm-38 1h2v1h-2zm22 0h2v1h-2zm12 0h4v1h-4zm8 0h4v1h-4zm-53 1h5v1h-5zm7 0h2v1h-2zm12 0h2v1h-2zm12 0h2v1h-2zm20 0h2v1h-2zm-18 1h2v1h-2zm8 0h2v1h-2zm8 0h2v1h-2zm-44 1h2v1h-2zm4 0h8v1h-8zm46 0h2v1h-2zm-48 1h2v1h-2zm8 0h4v1h-4zm6 0h2v1h-2zm16 0h2v1h-2zm6 0h2v1h-2zm14 0h2v1h-2zm-10 1h2v1h-2z"/>
<path fill="url(#p16)" d="M0 0m300 171h2v1h-2zm6 0h4v1h-4zm12 0h2v1h-2zm4 0h4v1h-4zm12 0h4v1h-4zm6 0h8v1h-8zm10 0h6v1h-6zm10 0h2v1h-2zm-14 1h2v1h-2zm-32 2h2v1h-2zm46 1h2v1h-2zm-22 1h2v2h-2zm-22 1h2v1h-2zm4 1h2v1h-2zm16 0h4v1h-4zm14 0h2v2h-2zm6 0h2v1h-2zm-52 1h4v1h-4zm6 0h2v1h-2zm18 0h2v1h-2zm6 0h2v2h-2zm26 0h2v1h-2zm6 0h2v1h-2zm-66 1h4v1h-4zm22 0h6v1h-6zm22 0h2v1h-2zm18 0h6v1h-6zm-54 1h2v2h-2zm8 0h2v2h-2zm8 0h4v1h-4zm8 0h2v1h-2zm6 0h2v2h-2zm4 0h2v1h-2zm4 0h2v2h-2zm4 0h2v1h-2zm4 0h2v1h-2zm14 0h1v2h-1zm-56 1h2v1h-2zm10 0h2v1h-2zm36 0h2v1h-2zm-56 1h2v1h-2zm18 0h2v1h-2zm4 0h4v1h-4zm16 0h2v1h-2zm-32 1h4v1h-4zm14 0h2v1h-2zm4 0h2v1h-2zm22 0h2v1h-2zm8 0h2v1h-2zm-46 1h2v1h-2zm-7 1h1v1h-1zm27 0h2v1h-2zm18 0h2v1h-2zm16 0h2v1h-2zm-54 1h2v1h-2zm2 1h2v2h-2zm14 0h2v1h-2zm-22 1h2v1h-2zm18 0h2v1h-2zm8 0h2v2h-2zm10 0h2v1h-2zm20 0h4v1h-4zm-40 1h2v1h-2zm18 0h4v1h-4zm-22 1h2v1h-2zm6 0h2v1h-2zm4 0h2v1h-2zm6 0h2v1h-2zm10 0h4v1h-4zm6 0h2v1h-2zm4 0h2v1h-2zm6 0h2v1h-2zm-50 1h2v1h-2zm4 0h8v1h-8zm12 0h2v1h-2zm16 0h2v1h-2zm6 0h4v1h-4zm6 0h4v1h-4zm8 0h4v1h-4zm-50 1h2v1h-2zm4 0h2v1h-2zm8 0h2v1h-2zm22 0h2v1h-2zm16 0h2v1h-2zm-12 1h2v1h-2zm8 0h2v1h-2z"/>
<path fill="url(#p17)" d="M0 0m304 171h2v1h-2zm16 0h2v1h-2zm50 0h2v1h-2zm-28 3h2v1h-2zm2 2h2v1h-2zm10 0h2v1h-2zm10 0h2v1h-2zm-38 1h4v1h-4zm2 1h2v1h-2zm-2 1h2v1h-2zm16 0h2v1h-2zm16 0h2v1h-2zm-42 1h2v1h-2zm22 0h2v1h-2zm10 0h2v1h-2zm20 0h2v1h-2zm-58 1h2v2h-2zm10 0h2v1h-2zm14 0h4v1h-4zm6 0h2v1h-2zm12 0h2v1h-2zm6 0h2v1h-2zm4 0h2v1h-2zm4 0h2v1h-2zm-65 1h1v1h-1zm13 0h2v1h-2zm4 0h2v1h-2zm-12 2h2v1h-2zm24 0h2v1h-2zm2 1h2v2h-2zm6 0h2v1h-2zm-30 1h2v1h-2zm54 0h2v1h-2zm-38 1h2v2h-2zm14 1h2v1h-2zm14 0h2v1h-2zm6 0h2v1h-2zm-52 1h2v1h-2zm26 0h2v1h-2zm32 0h2v1h-2zm-54 1h2v1h-2zm12 0h4v1h-4zm10 0h4v1h-4zm10 0h2v1h-2zm6 0h2v1h-2zm-44 1h4v1h-4zm30 0h6v1h-6zm28 0h4v1h-4zm-56 1h2v1h-2zm14 0h2v1h-2zm6 0h2v1h-2zm4 0h2v1h-2zm4 0h2v1h-2zm8 0h2v1h-2zm14 0h4v1h-4zm-44 1h2v2h-2zm4 0h6v1h-6zm10 0h8v1h-8zm12 0h6v1h-6zm16 0h2v1h-2zm8 0h2v1h-2zm-57 1h3v1h-3zm13 0h2v2h-2zm4 0h2v1h-2zm8 0h4v1h-4zm12 0h2v1h-2zm4 0h2v2h-2zm4 0h4v1h-4zm10 0h2v1h-2zm-36 1h2v1h-2z"/>
<path fill="url(#p18)" d="M0 0m283 91h2v1h-2zm101 0h2v2h-2zm-108 1h1v3h-1zm6 0h3v1h-3zm110 0h2v3h-2zm-110 1h4v2h-4zm101 0h4v1h-4zm-92 1h1v1h-1zm91 0h5v1h-5zm-107 1h3v2h-3zm6 0h7v1h-7zm8 0h3v1h-3zm89 0h2v1h-2zm3 0h7v1h-7zm10 0h3v1h-3zm-111 1h12v1h-12zm98 0h11v1h-11zm13 0h4v1h-4zm-116 1h17v1h-17zm103 0h17v1h-17zm-105 1h19v3h-19zm105 0h19v4h-19zm-85 2h4v1h-4zm78 0h4v1h-4zm-98 1h25v1h-25zm34 0h5v1h-5zm17 0h4v1h-4zm17 0h4v1h-4zm16 0h5v1h-5zm14 0h5v1h-5zm-98 1h27v1h-27zm32 0h9v1h-9zm17 0h8v1h-8zm17 0h8v1h-8zm16 0h9v1h-9zm14 0h28v1h-28zm-96 1h15v1h-15zm16 0h27v1h-27zm31 0h12v1h-12zm17 0h12v1h-12zm16 0h27v1h-27zm28 0h16v1h-16zm-108 1h5v1h-5zm7 0h7v1h-7zm11 0h87v1h-87zm91 0h6v1h-6zm9 0h6v1h-6zm-117 1h4v1h-4zm7 0h5v1h-5zm11 0h86v7h-86zm91 0h5v1h-5zm8 0h4v1h-4zm5 0h1v1h-1zm-121 1h3v1h-3zm7 0h4v1h-4zm101 0h4v1h-4zm9 0h3v1h-3zm-117 1h2v1h-2zm7 0h3v1h-3zm102 0h2v2h-2zm8 0h2v3h-2zm-116 1h1v2h-1zm7 0h2v1h-2zm9 4h85v1h-85zm1 1h7v1h-7zm11 0h62v1h-62zm65 0h7v1h-7zm-76 1h5v1h-5zm12 0h10v1h-10zm15 0h13v1h-13zm16 0h13v1h-13zm18 0h9v1h-9zm17 0h5v1h-5zm-77 1h3v1h-3zm13 0h6v1h-6zm15 0h8v1h-8zm17 0h8v1h-8zm17 0h6v1h-6zm16 0h3v1h-3zm-64 1h4v1h-4zm15 0h6v1h-6zm17 0h6v1h-6zm17 0h4v1h-4zm-68 37h1v1h-1zm5 0h2v1h-2zm9 0h2v1h-2zm11 0h3v1h-3zm13 0h3v1h-3zm13 0h3v1h-3zm12 0h3v1h-3zm12 0h2v1h-2zm9 0h2v1h-2zm6 0h1v1h-1zm-90 1h2v1h-2zm5 0h3v1h-3zm8 0h5v1h-5zm11 0h5v1h-5zm12 0h6v1h-6zm13 0h6v1h-6zm13 0h5v1h-5zm11 0h5v1h-5zm10 0h3v1h-3zm6 0h2v1h-2zm-89 1h3v1h-3zm5 0h5v1h-5zm7 0h8v1h-8zm11 0h8v1h-8zm12 0h9v1h-9zm13 0h9v1h-9zm12 0h8v1h-8zm11 0h8v1h-8zm10 0h5v1h-5zm7 0h4v1h-4zm-89 1h22v1h-22zm23 0h71v1h-71zm-22 1h92v1h-92zm1 1h90v2h-90zm1 2h88v2h-88zm1 2h86v2h-86zm1 2h84v1h-84zm1 1h82v2h-82zm1 2h80v2h-80zm1 2h78v2h-78zm20 2h2v1h-2zm16 1h2v1h-2zm8 0h2v1h-2zm22 0h2v1h-2zm-54 5h2v2h-2zm56 0h2v1h-2zm-48 1h2v1h-2zm46 0h2v1h-2zm-40 1h2v1h-2zm-18 1h2v1h-2zm48 0h2v1h-2zm6 0h4v1h-4zm-44 1h2v1h-2zm46 0h2v1h-2zm-28 1h2v1h-2zm18 0h2v1h-2zm12 0h2v1h-2zm4 0h2v1h-2zm-22 1h2v1h-2zm10 1h2v1h-2zm-20 3h2v1h-2zm28 1h2v1h-2zm-28 1h2v1h-2zm20 0h2v1h-2zm-50 1h2v1h-2zm32 0h2v1h-2zm20 0h2v1h-2zm-42 1h2v1h-2zm16 0h2v1h-2zm20 0h2v1h-2zm4 0h4v1h-4zm-44 1h2v1h-2zm12 0h2v1h-2zm6 0h2v1h-2zm8 0h4v1h-4zm8 0h2v1h-2zm-39 1h1v1h-1zm3 0h2v1h-2zm16 0h2v1h-2zm10 0h4v1h-4zm12 0h8v1h-8zm-38 1h4v1h-4zm6 0h4v1h-4zm6 0h2v1h-2zm4 0h6v1h-6zm10 0h8v1h-8zm10 0h2v1h-2zm10 0h2v1h-2zm4 0h2v1h-2zm4 0h3v1h-3zm-56 1h12v1h-12zm14 0h4v1h-4zm6 0h20v1h-20zm22 0h16v1h-16zm-42 1h58v2h-58zm1 2h56v2h-56zm1 2h54v3h-54z"/>
<path fill="url(#p19)" d="M0 0m384 89h1v1h-1zm-101 1h2v1h-2zm101 0h2v1h-2zm-108 1h1v1h-1zm6 0h1v1h-1zm101 0h1v2h-1zm3 0h1v2h-1zm6 0h2v1h-2zm-107 1h1v1h-1zm-10 1h1v2h-1zm16 0h1v1h-1zm91 0h1v1h-1zm-105 1h1v1h-1zm4 0h1v1h-1zm5 0h1v1h-1zm4 0h1v1h-1zm88 0h1v1h-1zm3 0h1v1h-1zm6 0h1v1h-1zm4 0h1v1h-1zm-111 1h1v1h-1zm8 0h1v1h-1zm92 0h1v1h-1zm14 0h1v1h-1zm-116 1h2v1h-2zm112 0h1v1h-1zm-116 1h1v1h-1zm121 0h2v1h-2zm-101 1h3v1h-3zm78 0h3v1h-3zm-79 1h5v1h-5zm15 0h4v1h-4zm49 0h4v1h-4zm14 0h5v1h-5zm-79 1h1v1h-1zm5 0h2v1h-2zm9 0h7v1h-7zm17 0h6v1h-6zm17 0h6v1h-6zm16 0h7v1h-7zm14 0h1v1h-1zm5 0h2v1h-2zm-77 1h2v1h-2zm7 0h2v1h-2zm7 0h2v1h-2zm9 0h3v1h-3zm7 0h3v1h-3zm11 0h2v1h-2zm6 0h3v1h-3zm10 0h2v1h-2zm7 0h2v1h-2zm7 0h2v1h-2zm7 0h2v1h-2zm-76 1h2v1h-2zm3 0h2v1h-2zm11 0h2v1h-2zm6 0h2v1h-2zm10 0h2v1h-2zm7 0h2v1h-2zm10 0h2v1h-2zm6 0h2v1h-2zm11 0h2v1h-2zm3 0h2v1h-2zm-79 1h1v1h-1zm28 0h4v1h-4zm16 0h5v1h-5zm17 0h4v1h-4zm31 0h1v1h-1zm-102 1h2v1h-2zm9 0h1v1h-1zm2 0h2v1h-2zm89 0h1v1h-1zm3 0h1v1h-1zm7 0h1v1h-1zm2 0h1v1h-1zm-117 1h1v1h-1zm7 0h1v1h-1zm6 0h1v1h-1zm5 0h1v1h-1zm91 0h1v1h-1zm13 0h1v1h-1zm-114 1h1v1h-1zm110 0h1v1h-1zm-114 1h1v1h-1zm8 0h1v1h-1zm98 0h1v2h-1zm3 0h1v2h-1zm8 0h1v1h-1zm-119 1h1v2h-1zm7 0h1v1h-1zm0 1h3v2h-3zm102 0h2v3h-2zm-108 1h1v3h-1zm116 0h2v3h-2zm-109 1h2v1h-2zm94 1h1v1h-1zm-85 1h1v2h-1zm8 0h4v1h-4zm66 0h3v1h-3zm10 0h1v2h-1zm-78 1h2v1h-2zm6 0h1v1h-1zm11 0h5v1h-5zm18 0h3v1h-3zm16 0h5v1h-5zm14 0h2v1h-2zm6 0h2v1h-2zm-76 1h1v1h-1zm4 0h2v1h-2zm8 0h2v1h-2zm8 0h2v1h-2zm7 0h2v1h-2zm10 0h3v1h-3zm6 0h3v1h-3zm11 0h2v1h-2zm7 0h2v1h-2zm8 0h2v1h-2zm8 0h2v1h-2zm5 0h1v1h-1zm-82 1h5v1h-5zm13 0h2v1h-2zm6 0h2v1h-2zm9 0h2v1h-2zm8 0h2v1h-2zm9 0h2v1h-2zm8 0h2v1h-2zm9 0h2v1h-2zm6 0h2v1h-2zm10 0h5v1h-5zm-77 1h3v2h-3zm13 0h6v1h-6zm15 0h8v1h-8zm17 0h8v1h-8zm17 0h6v1h-6zm15 0h4v1h-4zm-64 1h5v1h-5zm16 0h6v1h-6zm17 0h6v1h-6zm17 0h4v2h-4zm15 0h3v1h-3zm-64 1h3v1h-3zm16 0h4v1h-4zm17 0h4v1h-4zm-39 29h1v1h-1zm25 0h1v1h-1zm14 0h1v1h-1zm25 0h1v1h-1zm-79 1h1v1h-1zm5 0h2v1h-2zm9 0h3v1h-3zm12 0h3v1h-3zm13 0h3v1h-3zm14 0h3v1h-3zm13 0h3v1h-3zm12 0h3v1h-3zm10 0h2v1h-2zm6 0h2v1h-2zm-94 1h2v1h-2zm5 0h4v1h-4zm9 0h5v1h-5zm11 0h6v1h-6zm13 0h6v1h-6zm13 0h7v1h-7zm14 0h5v1h-5zm11 0h5v1h-5zm10 0h4v1h-4zm7 0h3v1h-3zm-93 1h3v1h-3zm5 0h5v1h-5zm8 0h7v1h-7zm11 0h8v1h-8zm12 0h10v1h-10zm14 0h9v1h-9zm13 0h8v1h-8zm12 0h7v1h-7zm10 0h5v1h-5zm7 0h4v1h-4zm-93 1h12v1h-12zm13 0h71v1h-71zm72 0h13v1h-13zm-84 1h2v2h-2zm3 0h4v1h-4zm6 0h7v1h-7zm9 0h9v1h-9zm12 0h10v1h-10zm13 0h10v1h-10zm13 0h9v1h-9zm12 0h9v1h-9zm11 0h7v1h-7zm9 0h4v1h-4zm5 0h3v2h-3zm-89 1h3v1h-3zm6 0h5v1h-5zm10 0h6v1h-6zm11 0h7v1h-7zm13 0h7v1h-7zm13 0h7v1h-7zm12 0h6v1h-6zm11 0h5v1h-5zm8 0h3v1h-3zm-87 1h1v1h-1zm4 0h2v1h-2zm7 0h2v1h-2zm10 0h3v1h-3zm11 0h4v1h-4zm13 0h4v1h-4zm13 0h3v1h-3zm11 0h3v1h-3zm11 0h2v1h-2zm7 0h2v1h-2zm6 0h1v1h-1zm-71 1h1v1h-1zm12 21h2v1h-2zm30 1h2v1h-2zm-32 1h2v1h-2zm-6 1h2v1h-2zm40 2h2v1h-2zm-38 5h2v1h-2zm6 0h2v1h-2zm6 1h2v1h-2zm14 0h2v1h-2zm22 0h2v1h-2zm-56 3h2v1h-2zm4 0h2v1h-2zm-7 1h1v1h-1zm27 0h2v1h-2zm-26 1h2v1h-2zm50 0h4v1h-4zm8 0h1v1h-1zm-55 10h52v3h-52z"/>
<path fill="url(#p20)" d="M0 0m283 87h2v1h-2zm101 0h2v1h-2zm-108 1h1v2h-1zm6 0h3v1h-3zm101 0h4v1h-4zm9 0h2v3h-2zm-110 1h4v1h-4zm101 0h1v2h-1zm2 0h2v1h-2zm-110 1h2v1h-2zm7 0h1v1h-1zm3 0h1v2h-1zm101 0h1v1h-1zm-111 1h1v2h-1zm6 0h1v3h-1zm10 0h1v1h-1zm91 0h1v2h-1zm-105 1h1v2h-1zm9 0h1v1h-1zm4 0h2v1h-2zm88 0h1v1h-1zm9 0h1v2h-1zm4 0h1v2h-1zm-105 1h2v1h-2zm3 0h2v1h-2zm89 0h2v1h-2zm3 0h1v1h-1zm13 0h1v2h-1zm-114 1h1v1h-1zm7 0h3v1h-3zm92 0h2v1h-2zm9 0h1v2h-1zm-110 1h2v1h-2zm112 0h1v1h-1zm-116 1h1v1h-1zm19 0h4v1h-4zm79 0h4v1h-4zm17 0h1v1h-1zm6 0h2v1h-2zm-122 1h1v1h-1zm19 0h6v1h-6zm15 0h5v1h-5zm17 0h4v1h-4zm17 0h4v1h-4zm16 0h5v1h-5zm13 0h6v1h-6zm-78 1h2v1h-2zm5 0h2v1h-2zm8 0h9v1h-9zm17 0h8v1h-8zm17 0h8v1h-8zm16 0h9v1h-9zm14 0h3v1h-3zm6 0h2v1h-2zm-83 1h1v1h-1zm6 0h2v1h-2zm6 0h4v1h-4zm8 0h3v1h-3zm9 0h10v1h-10zm17 0h11v1h-11zm16 0h3v1h-3zm7 0h4v1h-4zm8 0h2v1h-2zm7 0h1v1h-1zm-77 1h2v1h-2zm4 0h3v1h-3zm10 0h3v1h-3zm6 0h4v1h-4zm10 0h3v1h-3zm8 0h3v1h-3zm9 0h4v1h-4zm7 0h3v1h-3zm10 0h3v1h-3zm5 0h2v1h-2zm9 0h1v1h-1zm-77 1h5v1h-5zm14 0h3v1h-3zm4 0h3v1h-3zm13 0h3v1h-3zm4 0h4v1h-4zm13 0h3v1h-3zm4 0h3v1h-3zm12 0h5v1h-5zm-62 1h1v1h-1zm14 0h4v1h-4zm16 0h5v1h-5zm17 0h4v1h-4zm17 0h1v1h-1zm-78 2h1v1h-1zm91 0h2v1h-2zm10 0h1v1h-1zm-111 1h2v1h-2zm9 0h1v1h-1zm2 0h2v1h-2zm89 0h2v1h-2zm3 0h1v1h-1zm7 0h1v1h-1zm2 0h1v1h-1zm-117 1h2v1h-2zm7 0h1v1h-1zm6 0h1v2h-1zm4 0h2v1h-2zm88 0h1v1h-1zm4 0h1v3h-1zm5 0h1v2h-1zm8 0h2v1h-2zm-121 1h1v1h-1zm7 0h1v3h-1zm10 0h1v2h-1zm100 0h1v3h-1zm5 0h1v1h-1zm-119 1h1v3h-1zm8 0h1v4h-1zm109 0h1v2h-1zm-11 1h1v3h-1zm3 0h1v3h-1zm-111 1h1v3h-1zm7 1h1v1h-1zm0 1h4v2h-4zm101 0h4v3h-4zm-108 1h2v2h-2zm102 0h1v2h-1zm15 0h2v5h-2zm-110 1h3v3h-3zm18 0h4v1h-4zm65 0h4v1h-4zm-89 1h1v3h-1zm16 0h1v2h-1zm7 0h2v1h-2zm4 0h2v1h-2zm12 0h5v1h-5zm18 0h3v1h-3zm16 0h5v1h-5zm15 0h2v1h-2zm3 0h3v1h-3zm9 0h2v1h-2zm8 0h2v2h-2zm-86 1h2v1h-2zm5 0h3v1h-3zm11 0h3v1h-3zm4 0h3v1h-3zm13 0h3v1h-3zm4 0h3v1h-3zm13 0h3v1h-3zm4 0h3v1h-3zm11 0h3v1h-3zm5 0h3v1h-3zm8 0h1v1h-1zm-93 1h1v1h-1zm9 0h2v2h-2zm5 0h3v1h-3zm7 0h3v2h-3zm9 0h3v1h-3zm6 0h3v1h-3zm11 0h3v1h-3zm6 0h3v1h-3zm11 0h3v1h-3zm6 0h3v1h-3zm9 0h3v1h-3zm7 0h2v1h-2zm6 0h2v2h-2zm-78 1h2v1h-2zm15 0h4v1h-4zm8 0h3v1h-3zm9 0h4v1h-4zm8 0h3v1h-3zm9 0h3v1h-3zm7 0h4v1h-4zm8 0h3v2h-3zm8 0h3v1h-3zm-76 1h6v1h-6zm12 0h3v1h-3zm6 0h4v1h-4zm9 0h4v1h-4zm8 0h4v1h-4zm9 0h4v1h-4zm8 0h4v1h-4zm9 0h3v1h-3zm16 0h6v2h-6zm-77 1h5v3h-5zm12 0h10v1h-10zm16 0h10v2h-10zm17 0h10v2h-10zm16 0h10v1h-10zm-48 1h8v1h-8zm49 0h8v1h-8zm16 0h5v1h-5zm-64 1h6v2h-6zm15 0h8v1h-8zm17 0h8v1h-8zm17 0h6v2h-6zm15 0h4v1h-4zm-77 1h3v1h-3zm29 0h6v1h-6zm17 0h6v1h-6zm32 0h3v1h-3zm-48 1h4v1h-4zm17 0h4v1h-4zm-56 22h1v1h-1zm6 0h2v1h-2zm10 0h2v1h-2zm11 0h3v1h-3zm14 0h3v1h-3zm14 0h3v1h-3zm14 0h3v1h-3zm12 0h2v1h-2zm10 0h2v1h-2zm7 0h1v1h-1zm-98 1h2v1h-2zm5 0h5v1h-5zm9 0h6v1h-6zm12 0h7v1h-7zm13 0h7v1h-7zm14 0h8v1h-8zm14 0h6v1h-6zm12 0h6v1h-6zm10 0h5v1h-5zm8 0h3v1h-3zm4 0h1v1h-1zm-102 1h12v1h-12zm13 0h5v1h-5zm6 0h4v1h-4zm6 0h11v1h-11zm12 0h6v1h-6zm7 0h6v1h-6zm7 0h6v1h-6zm7 0h6v1h-6zm7 0h11v1h-11zm13 0h4v1h-4zm5 0h5v1h-5zm6 0h13v1h-13zm-89 1h3v1h-3zm4 0h4v1h-4zm6 0h7v1h-7zm10 0h9v1h-9zm12 0h10v1h-10zm13 0h11v1h-11zm14 0h10v1h-10zm13 0h9v1h-9zm12 0h7v1h-7zm9 0h4v1h-4zm6 0h3v1h-3zm-98 1h2v1h-2zm4 0h3v1h-3zm7 0h5v1h-5zm10 0h6v1h-6zm12 0h7v1h-7zm13 0h7v1h-7zm14 0h7v1h-7zm12 0h6v1h-6zm11 0h5v1h-5zm9 0h3v1h-3zm6 0h2v1h-2zm-97 1h1v1h-1zm4 0h2v1h-2zm7 0h3v1h-3zm10 0h4v1h-4zm12 0h4v1h-4zm14 0h4v1h-4zm13 0h4v1h-4zm12 0h4v1h-4zm11 0h3v1h-3zm8 0h2v1h-2zm6 0h1v1h-1zm-85 1h1v1h-1zm72 0h1v1h-1zm-36 30h2v1h-2zm12 8h2v1h-2zm-36 16h50v3h-50z"/>
<path fill="url(#p21)" d="M0 0m283 86h2v1h-2zm101 0h2v1h-2zm-108 1h1v1h-1zm6 0h1v1h-1zm3 0h1v2h-1zm98 0h1v1h-1zm3 0h1v1h-1zm6 0h2v1h-2zm-117 2h1v1h-1zm16 0h1v2h-1zm91 0h1v2h-1zm-105 1h1v2h-1zm4 0h1v1h-1zm5 0h1v2h-1zm101 0h1v2h-1zm4 0h1v2h-1zm-10 2h1v1h-1zm13 0h1v1h-1zm-14 1h1v1h-1zm10 1h1v1h-1zm-116 1h1v1h-1zm19 0h5v1h-5zm78 0h5v1h-5zm18 0h1v1h-1zm-116 1h1v1h-1zm19 0h1v1h-1zm5 0h2v1h-2zm9 0h7v1h-7zm18 0h4v1h-4zm17 0h5v1h-5zm15 0h7v1h-7zm14 0h2v1h-2zm6 0h1v2h-1zm-78 1h2v1h-2zm7 0h2v1h-2zm7 0h3v1h-3zm9 0h3v1h-3zm7 0h3v1h-3zm10 0h3v1h-3zm7 0h3v1h-3zm9 0h3v1h-3zm8 0h2v1h-2zm7 0h1v1h-1zm-70 1h1v1h-1zm5 0h1v1h-1zm10 0h1v1h-1zm6 0h2v1h-2zm10 0h2v1h-2zm7 0h2v1h-2zm10 0h2v1h-2zm7 0h1v1h-1zm10 0h1v1h-1zm4 0h1v2h-1zm9 0h1v2h-1zm-77 1h1v1h-1zm3 0h1v1h-1zm12 0h1v1h-1zm4 0h2v1h-2zm12 0h2v1h-2zm5 0h2v1h-2zm13 0h1v1h-1zm4 0h1v1h-1zm12 0h1v1h-1zm-64 1h2v1h-2zm15 0h1v1h-1zm2 0h1v1h-1zm14 0h2v1h-2zm3 0h2v1h-2zm15 0h1v1h-1zm2 0h1v1h-1zm14 0h2v1h-2zm-49 1h1v1h-1zm17 0h1v1h-1zm17 0h1v1h-1zm-63 4h1v1h-1zm92 0h1v1h-1zm9 0h1v1h-1zm-111 1h1v1h-1zm9 0h1v1h-1zm94 0h1v1h-1zm7 0h1v1h-1zm2 0h1v1h-1zm-117 1h1v1h-1zm17 0h1v1h-1zm-4 1h1v2h-1zm101 0h1v3h-1zm-96 1h1v3h-1zm91 0h1v3h-1zm-101 1h1v3h-1zm110 0h1v4h-1zm3 0h1v2h-1zm-117 1h1v3h-1zm8 3h1v3h-1zm-10 1h1v3h-1zm26 0h2v1h-2zm65 0h1v1h-1zm17 0h1v2h-1zm3 0h1v2h-1zm-86 1h2v1h-2zm17 0h1v1h-1zm17 0h1v1h-1zm17 0h1v1h-1zm15 0h2v1h-2zm11 0h1v2h-1zm-95 1h1v1h-1zm2 0h1v1h-1zm16 0h1v1h-1zm3 0h1v2h-1zm13 0h1v2h-1zm2 0h1v1h-1zm15 0h3v1h-3zm17 0h1v1h-1zm2 0h1v2h-1zm13 0h1v1h-1zm2 0h2v1h-2zm16 0h4v1h-4zm-108 1h2v1h-2zm7 0h3v1h-3zm17 0h1v2h-1zm19 0h2v1h-2zm15 0h1v1h-1zm2 0h2v1h-2zm14 0h2v1h-2zm15 0h2v1h-2zm4 0h1v1h-1zm16 0h2v1h-2zm8 0h2v2h-2zm-116 1h1v1h-1zm16 0h1v4h-1zm12 0h1v2h-1zm11 0h1v2h-1zm4 0h1v1h-1zm13 0h1v1h-1zm4 0h1v1h-1zm13 0h1v1h-1zm4 0h1v2h-1zm11 0h1v2h-1zm4 0h2v1h-2zm8 0h1v3h-1zm-78 1h2v2h-2zm21 0h2v1h-2zm12 0h2v1h-2zm5 0h2v1h-2zm12 0h2v1h-2zm21 0h1v1h-1zm-65 1h2v1h-2zm10 0h1v1h-1zm6 0h1v1h-1zm11 0h1v1h-1zm6 0h1v1h-1zm11 0h1v1h-1zm6 0h1v1h-1zm9 0h1v1h-1zm6 0h2v2h-2zm-71 1h1v1h-1zm7 0h2v2h-2zm8 0h2v2h-2zm7 0h2v1h-2zm10 0h2v1h-2zm7 0h2v1h-2zm10 0h2v1h-2zm7 0h2v2h-2zm8 0h2v2h-2zm13 0h2v1h-2zm-82 1h1v1h-1zm4 0h2v1h-2zm24 0h2v1h-2zm8 0h3v1h-3zm9 0h2v1h-2zm8 0h2v1h-2zm24 0h2v1h-2zm5 0h1v1h-1zm-82 1h5v1h-5zm13 0h8v1h-8zm15 0h3v1h-3zm7 0h3v1h-3zm10 0h3v1h-3zm7 0h3v1h-3zm10 0h8v1h-8zm16 0h4v1h-4zm-63 1h5v1h-5zm15 0h7v1h-7zm16 0h8v1h-8zm17 0h5v1h-5zm-66 18h1v1h-1zm10 0h1v1h-1zm78 0h1v1h-1zm-94 1h1v1h-1zm5 0h4v1h-4zm10 0h4v1h-4zm12 0h5v1h-5zm13 0h6v1h-6zm15 0h6v1h-6zm14 0h5v1h-5zm13 0h4v1h-4zm10 0h4v1h-4zm8 0h2v1h-2zm4 0h1v1h-1zm-106 1h1v1h-1zm2 0h3v1h-3zm4 0h6v1h-6zm9 0h9v1h-9zm12 0h9v1h-9zm13 0h11v1h-11zm15 0h10v1h-10zm14 0h9v1h-9zm12 0h9v1h-9zm11 0h7v1h-7zm8 0h4v1h-4zm5 0h1v1h-1zm-104 1h2v2h-2zm3 0h5v1h-5zm7 0h8v1h-8zm10 0h9v1h-9zm12 0h11v1h-11zm14 0h11v1h-11zm14 0h11v1h-11zm14 0h9v1h-9zm11 0h8v1h-8zm10 0h5v1h-5zm6 0h3v1h-3zm-97 1h3v1h-3zm8 0h4v1h-4zm10 0h6v1h-6zm13 0h6v1h-6zm13 0h7v1h-7zm15 0h6v1h-6zm12 0h6v1h-6zm12 0h4v1h-4zm9 0h3v1h-3zm6 0h1v1h-1zm-89 1h1v1h-1zm11 0h2v1h-2zm13 0h1v1h-1zm14 0h1v1h-1zm14 0h1v1h-1zm12 0h2v1h-2zm12 0h1v1h-1zm-61 61h48v3h-48z"/>
<path fill="url(#p22)" d="M0 0m284 84h1v1h-1zm100 0h2v1h-2zm-102 1h4v1h-4zm101 0h4v1h-4zm-107 1h1v1h-1zm6 0h1v1h-1zm3 0h1v1h-1zm6 0h1v3h-1zm92 0h1v1h-1zm3 0h1v1h-1zm6 0h2v1h-2zm-117 1h1v2h-1zm2 0h1v3h-1zm4 0h1v3h-1zm101 0h1v2h-1zm-96 1h1v2h-1zm101 0h1v2h-1zm4 0h1v2h-1zm3 1h1v3h-1zm-104 1h1v2h-1zm88 0h1v2h-1zm3 1h1v1h-1zm-101 1h1v2h-1zm7 0h1v1h-1zm2 0h1v1h-1zm90 0h1v1h-1zm-91 1h1v1h-1zm5 0h3v1h-3zm81 0h1v1h-1zm14 0h1v1h-1zm-114 1h1v1h-1zm4 0h2v1h-2zm14 0h7v1h-7zm16 0h2v1h-2zm52 0h1v1h-1zm10 0h7v1h-7zm19 0h1v1h-1zm-97 1h1v1h-1zm6 0h2v1h-2zm7 0h9v1h-9zm17 0h8v1h-8zm17 0h8v1h-8zm16 0h9v1h-9zm14 0h2v1h-2zm7 0h1v1h-1zm19 0h2v1h-2zm-96 1h1v1h-1zm5 0h2v1h-2zm9 0h2v1h-2zm7 0h4v1h-4zm8 0h4v1h-4zm10 0h3v1h-3zm8 0h3v1h-3zm8 0h2v1h-2zm9 0h2v1h-2zm6 0h1v1h-1zm8 0h1v2h-1zm-77 1h1v2h-1zm3 0h2v1h-2zm12 0h1v1h-1zm4 0h2v1h-2zm12 0h1v1h-1zm6 0h1v1h-1zm11 0h2v1h-2zm5 0h1v1h-1zm11 0h1v1h-1zm4 0h1v1h-1zm-65 1h1v1h-1zm12 0h2v1h-2zm4 0h1v1h-1zm13 0h1v1h-1zm4 0h1v1h-1zm13 0h1v1h-1zm3 0h2v1h-2zm13 0h1v1h-1zm2 0h1v1h-1zm-66 1h2v1h-2zm15 0h1v1h-1zm2 0h1v1h-1zm15 0h1v1h-1zm2 0h1v1h-1zm15 0h1v1h-1zm2 0h1v1h-1zm14 0h2v1h-2zm-49 1h1v1h-1zm17 0h1v1h-1zm17 0h1v1h-1zm-72 6h1v1h-1zm10 0h1v1h-1zm90 0h2v1h-2zm10 0h1v1h-1zm-109 1h1v2h-1zm7 0h1v1h-1zm91 0h1v3h-1zm3 0h1v2h-1zm7 0h1v1h-1zm2 0h1v1h-1zm5 0h1v1h-1zm-121 1h1v1h-1zm16 0h1v2h-1zm106 0h1v1h-1zm-110 2h1v6h-1zm101 1h1v6h-1zm-96 1h1v6h-1zm91 0h1v6h-1zm12 0h1v6h-1zm-113 1h1v5h-1zm-4 1h1v5h-1zm114 0h1v5h-1zm-89 2h1v1h-1zm-17 1h1v2h-1zm16 0h2v1h-2zm16 0h1v2h-1zm34 0h1v2h-1zm15 0h1v1h-1zm-66 1h2v1h-2zm34 0h1v1h-1zm33 0h1v2h-1zm10 0h1v5h-1zm6 0h1v1h-1zm3 0h1v1h-1zm-111 1h1v1h-1zm7 0h4v1h-4zm18 0h1v3h-1zm3 0h1v3h-1zm13 0h1v2h-1zm2 0h1v2h-1zm15 0h3v1h-3zm17 0h1v2h-1zm2 0h1v2h-1zm13 0h1v2h-1zm18 0h4v1h-4zm-108 1h2v1h-2zm7 0h3v1h-3zm51 0h1v1h-1zm2 0h1v1h-1zm33 0h1v3h-1zm16 0h2v1h-2zm8 0h2v2h-2zm-116 1h1v1h-1zm39 0h2v1h-2zm3 0h2v1h-2zm14 0h2v1h-2zm4 0h1v2h-1zm13 0h2v1h-2zm3 0h2v1h-2zm12 0h2v1h-2zm-65 1h1v2h-1zm5 0h1v2h-1zm11 0h1v2h-1zm4 0h1v1h-1zm13 0h1v2h-1zm17 0h1v1h-1zm4 0h1v2h-1zm11 0h1v2h-1zm-72 1h1v2h-1zm27 0h2v1h-2zm17 0h2v1h-2zm12 0h2v2h-2zm20 0h2v1h-2zm8 0h1v1h-1zm-78 1h2v1h-2zm6 0h2v1h-2zm10 0h2v1h-2zm6 0h1v1h-1zm11 0h2v1h-2zm6 0h1v1h-1zm16 0h2v1h-2zm10 0h2v1h-2zm6 0h2v1h-2zm6 0h2v1h-2zm-83 1h7v1h-7zm13 0h3v1h-3zm8 0h2v1h-2zm7 0h3v1h-3zm10 0h2v1h-2zm7 0h2v1h-2zm10 0h2v1h-2zm7 0h2v1h-2zm7 0h3v1h-3zm8 0h7v1h-7zm-75 1h4v1h-4zm11 0h9v1h-9zm16 0h10v1h-10zm17 0h10v1h-10zm16 0h9v1h-9zm17 0h4v1h-4zm-63 1h4v1h-4zm14 0h8v1h-8zm17 0h8v1h-8zm17 0h5v1h-5zm-67 14h1v1h-1zm10 0h2v1h-2zm12 0h3v1h-3zm15 0h3v1h-3zm15 0h3v1h-3zm14 0h3v1h-3zm13 0h2v1h-2zm10 0h2v1h-2zm8 0h1v1h-1zm-106 1h1v1h-1zm2 0h3v1h-3zm6 0h5v1h-5zm9 0h7v1h-7zm12 0h8v1h-8zm14 0h9v1h-9zm15 0h8v1h-8zm14 0h8v1h-8zm13 0h7v1h-7zm11 0h5v1h-5zm8 0h3v1h-3zm5 0h1v1h-1zm-108 1h5v1h-5zm6 0h3v1h-3zm4 0h9v1h-9zm10 0h5v1h-5zm6 0h12v1h-12zm13 0h14v1h-14zm15 0h14v1h-14zm15 0h12v1h-12zm13 0h15v1h-15zm16 0h3v1h-3zm4 0h6v1h-6zm-102 1h3v1h-3zm4 0h4v1h-4zm8 0h6v1h-6zm10 0h8v1h-8zm13 0h8v1h-8zm14 0h9v1h-9zm15 0h8v1h-8zm13 0h8v1h-8zm12 0h6v1h-6zm10 0h4v1h-4zm6 0h2v1h-2zm-103 1h1v1h-1zm4 0h1v1h-1zm7 0h3v1h-3zm12 0h3v1h-3zm12 0h4v1h-4zm15 0h4v1h-4zm14 0h4v1h-4zm13 0h3v1h-3zm12 0h2v1h-2zm9 0h1v1h-1zm5 0h1v1h-1zm-74 67h46v2h-46zm1 2h44v2h-44z"/>
<path fill="url(#p23)" d="M0 0m291 81h1v5h-1zm-9 1h5v1h-5zm100 0h6v2h-6zm-105 1h1v1h-1zm4 0h6v1h-6zm110 0h2v1h-2zm-116 1h3v2h-3zm6 0h3v1h-3zm4 0h2v1h-2zm97 0h2v1h-2zm4 0h2v1h-2zm5 0h4v2h-4zm-110 1h1v2h-1zm5 0h1v3h-1zm96 0h1v2h-1zm5 0h1v3h-1zm-112 1h1v1h-1zm2 0h1v1h-1zm13 0h1v4h-1zm101 0h1v2h-1zm3 0h1v3h-1zm-16 1h1v3h-1zm3 1h1v3h-1zm-101 1h1v3h-1zm7 0h1v3h-1zm2 1h1v2h-1zm90 0h1v1h-1zm-87 1h4v1h-4zm82 0h3v1h-3zm5 0h2v1h-2zm9 0h1v2h-1zm-114 1h1v2h-1zm14 0h1v1h-1zm4 0h8v1h-8zm13 0h6v1h-6zm54 0h5v1h-5zm10 0h9v1h-9zm11 0h1v1h-1zm10 0h1v2h-1zm-112 1h2v1h-2zm14 0h1v1h-1zm4 0h4v1h-4zm8 0h11v1h-11zm16 0h11v1h-11zm18 0h11v1h-11zm16 0h10v1h-10zm15 0h5v1h-5zm6 0h3v1h-3zm21 0h1v1h-1zm-97 1h2v1h-2zm5 0h4v1h-4zm6 0h6v1h-6zm10 0h12v1h-12zm17 0h12v1h-12zm16 0h7v1h-7zm8 0h4v1h-4zm7 0h2v1h-2zm9 0h1v2h-1zm18 0h2v1h-2zm-122 1h1v1h-1zm27 0h1v1h-1zm3 0h2v1h-2zm11 0h2v1h-2zm5 0h3v1h-3zm11 0h3v1h-3zm6 0h3v1h-3zm11 0h3v1h-3zm6 0h2v1h-2zm11 0h2v1h-2zm4 0h1v1h-1zm-68 1h2v1h-2zm3 0h1v1h-1zm12 0h2v1h-2zm3 0h2v1h-2zm14 0h2v2h-2zm4 0h2v1h-2zm13 0h2v1h-2zm3 0h2v1h-2zm13 0h1v1h-1zm2 0h2v1h-2zm-66 1h2v2h-2zm15 0h1v1h-1zm2 0h1v1h-1zm17 0h2v1h-2zm15 0h1v1h-1zm2 0h1v1h-1zm13 0h3v1h-3zm-48 1h2v1h-2zm16 0h3v1h-3zm17 0h2v1h-2zm16 0h1v1h-1zm-49 1h1v1h-1zm17 0h1v1h-1zm17 0h1v1h-1zm-63 7h1v1h-1zm-10 1h2v1h-2zm11 0h1v2h-1zm90 0h2v1h-2zm-106 1h1v1h-1zm14 0h1v4h-1zm92 0h1v1h-1zm9 0h1v3h-1zm2 0h1v1h-1zm5 0h1v1h-1zm-121 1h1v4h-1zm6 0h1v6h-1zm101 0h1v6h-1zm15 0h1v2h-1zm-106 1h1v7h-1zm88 0h1v7h-1zm-92 6h1v4h-1zm101 1h1v3h-1zm-106 1h1v3h-1zm10 0h1v5h-1zm11 0h1v1h-1zm64 0h1v2h-1zm16 0h1v2h-1zm12 0h1v4h-1zm-117 1h1v3h-1zm24 0h2v3h-2zm16 0h1v3h-1zm34 0h1v3h-1zm40 0h1v3h-1zm-106 1h2v1h-2zm49 0h1v1h-1zm32 0h2v2h-2zm16 0h2v1h-2zm4 0h2v1h-2zm-111 1h1v1h-1zm6 0h6v2h-6zm53 0h2v1h-2zm48 0h6v2h-6zm-107 1h3v1h-3zm25 0h4v1h-4zm16 0h3v1h-3zm17 0h3v2h-3zm17 0h3v1h-3zm15 0h3v1h-3zm26 0h4v1h-4zm-116 1h2v1h-2zm25 0h2v1h-2zm3 0h1v2h-1zm13 0h1v2h-1zm2 0h1v1h-1zm32 0h1v2h-1zm2 0h1v2h-1zm13 0h1v2h-1zm2 0h1v1h-1zm10 0h1v2h-1zm16 0h2v1h-2zm-110 1h1v14h-1zm17 0h1v1h-1zm18 0h2v2h-2zm15 0h1v1h-1zm2 0h2v2h-2zm32 0h2v1h-2zm-91 1h1v13h-1zm23 0h2v1h-2zm4 0h2v1h-2zm12 0h2v1h-2zm17 0h2v1h-2zm17 0h2v1h-2zm3 0h2v1h-2zm12 0h2v1h-2zm4 0h1v1h-1zm8 0h2v1h-2zm-84 1h2v1h-2zm6 0h3v1h-3zm6 0h1v1h-1zm10 0h2v1h-2zm5 0h2v1h-2zm12 0h3v1h-3zm5 0h2v1h-2zm12 0h2v1h-2zm5 0h1v1h-1zm10 0h2v1h-2zm5 0h3v1h-3zm7 0h3v1h-3zm-83 1h8v1h-8zm12 0h4v1h-4zm8 0h4v1h-4zm7 0h3v1h-3zm11 0h3v1h-3zm6 0h3v1h-3zm11 0h3v1h-3zm6 0h3v1h-3zm8 0h4v1h-4zm7 0h10v1h-10zm17 0h1v2h-1zm-91 1h6v1h-6zm10 0h12v1h-12zm16 0h13v1h-13zm17 0h12v2h-12zm16 0h11v1h-11zm16 0h7v1h-7zm-55 1h1v1h-1zm6 0h12v1h-12zm34 0h2v1h-2zm30 0h2v8h-2zm-89 1h1v8h-1zm14 0h1v1h-1zm64 0h1v9h-1zm-64 1h2v8h-2zm16 0h2v8h-2zm17 0h2v8h-2zm16 0h2v8h-2zm34 5h1v1h-1zm-7 1h1v1h-1zm-91 1h2v1h-2zm-18 1h1v1h-1zm13 0h1v1h-1zm10 0h1v1h-1zm13 0h1v1h-1zm15 0h1v1h-1zm15 0h1v1h-1zm14 0h1v1h-1zm13 0h1v1h-1zm10 0h1v1h-1zm7 0h1v1h-1zm6 0h2v1h-2zm-118 1h6v1h-6zm7 0h3v1h-3zm6 0h5v1h-5zm9 0h7v1h-7zm13 0h7v1h-7zm14 0h8v1h-8zm15 0h9v1h-9zm15 0h7v1h-7zm13 0h7v1h-7zm11 0h5v1h-5zm8 0h3v1h-3zm5 0h5v1h-5zm-115 1h2v1h-2zm5 0h9v1h-9zm10 0h9v1h-9zm11 0h10v1h-10zm13 0h12v1h-12zm15 0h12v1h-12zm15 0h11v1h-11zm14 0h10v1h-10zm12 0h8v1h-8zm10 0h6v1h-6zm7 0h3v1h-3zm5 0h2v1h-2zm4 0h1v1h-1zm-121 1h3v1h-3zm6 0h1v1h-1zm4 0h3v1h-3zm8 0h4v1h-4zm11 0h5v1h-5zm13 0h6v1h-6zm15 0h6v1h-6zm14 0h6v1h-6zm14 0h5v1h-5zm12 0h4v1h-4zm9 0h3v1h-3zm6 0h2v1h-2zm4 0h4v1h-4zm-111 1h1v1h-1zm6 0h1v1h-1zm20 0h1v1h-1zm13 0h1v1h-1zm15 0h1v1h-1zm15 0h1v1h-1zm13 0h1v1h-1zm20 0h1v1h-1zm7 0h1v1h-1zm-76 73h44v1h-44zm1 1h42v3h-42zm1 3h40v1h-40z"/>
<path fill="url(#p24)" d="M0 0m291 78h1v2h-1zm-9 1h5v1h-5zm100 0h6v2h-6zm-105 1h1v1h-1zm4 0h6v1h-6zm9 0h2v1h-2zm101 0h2v1h-2zm-116 1h3v2h-3zm5 0h7v1h-7zm10 0h1v5h-1zm88 0h1v6h-1zm3 0h7v1h-7zm10 0h4v2h-4zm-111 1h2v1h-2zm7 0h1v7h-1zm94 0h1v6h-1zm7 0h1v9h-1zm-113 1h2v1h-2zm5 0h1v6h-1zm113 0h2v1h-2zm-119 1h1v8h-1zm15 2h1v4h-1zm90 1h1v2h-1zm11 0h1v5h-1zm6 0h1v4h-1zm-104 1h2v1h-2zm84 0h2v1h-2zm-84 1h8v1h-8zm13 0h1v1h-1zm64 0h9v1h-9zm10 0h2v1h-2zm-101 1h1v1h-1zm10 0h1v2h-1zm4 0h9v1h-9zm12 0h11v1h-11zm16 0h11v1h-11zm18 0h11v1h-11zm16 0h11v1h-11zm14 0h10v1h-10zm12 0h1v1h-1zm-102 1h2v2h-2zm18 0h5v1h-5zm7 0h13v1h-13zm16 0h14v1h-14zm18 0h13v1h-13zm16 0h13v1h-13zm15 0h6v1h-6zm9 0h1v1h-1zm18 0h2v2h-2zm-122 1h1v3h-1zm27 0h2v1h-2zm3 0h2v1h-2zm8 0h6v1h-6zm7 0h16v1h-16zm18 0h15v1h-15zm16 0h7v1h-7zm12 0h2v2h-2zm3 0h2v2h-2zm22 0h1v2h-1zm-89 1h4v1h-4zm15 0h2v1h-2zm3 0h2v2h-2zm13 0h3v1h-3zm4 0h3v1h-3zm14 0h2v2h-2zm3 0h2v1h-2zm43 0h1v1h-1zm-94 1h3v1h-3zm15 0h1v1h-1zm16 0h2v1h-2zm3 0h2v1h-2zm17 0h1v1h-1zm13 0h3v1h-3zm-64 1h2v1h-2zm15 0h3v1h-3zm17 0h3v1h-3zm17 0h3v1h-3zm16 0h2v1h-2zm-64 1h1v1h-1zm15 0h1v2h-1zm17 0h2v1h-2zm17 0h1v2h-1zm15 0h1v1h-1zm-32 1h1v1h-1zm-46 10h1v2h-1zm101 0h1v2h-1zm-111 1h2v3h-2zm102 0h1v1h-1zm-107 1h1v4h-1zm15 0h2v1h-2zm91 0h2v3h-2zm11 0h1v9h-1zm5 0h1v2h-1zm-106 1h1v7h-1zm-11 1h1v2h-1zm110 0h1v12h-1zm7 0h2v4h-2zm-108 1h1v11h-1zm92 0h1v5h-1zm-105 1h1v11h-1zm6 2h1v8h-1zm101 0h1v8h-1zm15 0h1v7h-1zm-106 2h1v6h-1zm88 0h1v6h-1zm-96 6h4v1h-4zm20 0h1v1h-1zm15 0h1v3h-1zm34 0h1v3h-1zm15 0h1v2h-1zm17 0h4v4h-4zm9 0h1v1h-1zm-117 1h3v1h-3zm6 0h2v14h-2zm3 0h2v14h-2zm17 0h2v2h-2zm33 0h1v2h-1zm57 0h3v7h-3zm-116 1h1v13h-1zm2 0h1v13h-1zm89 0h2v1h-2zm-65 1h3v1h-3zm15 0h3v1h-3zm18 0h2v1h-2zm16 0h3v1h-3zm15 0h3v1h-3zm-65 1h4v1h-4zm16 0h1v2h-1zm2 0h1v1h-1zm15 0h3v1h-3zm17 0h1v1h-1zm2 0h1v2h-1zm13 0h1v1h-1zm2 0h1v1h-1zm16 0h2v2h-2zm3 0h1v7h-1zm-93 1h1v1h-1zm7 0h2v1h-2zm3 0h1v1h-1zm15 0h2v2h-2zm15 0h1v1h-1zm2 0h2v2h-2zm14 0h2v2h-2zm15 0h2v1h-2zm3 0h2v1h-2zm-75 1h6v1h-6zm15 0h6v1h-6zm8 0h2v1h-2zm17 0h2v1h-2zm20 0h2v1h-2zm4 0h6v1h-6zm14 0h7v1h-7zm13 0h1v7h-1zm-91 1h3v8h-3zm4 0h3v10h-3zm10 0h3v9h-3zm4 0h3v1h-3zm12 0h8v1h-8zm17 0h8v1h-8zm17 0h7v1h-7zm14 0h3v10h-3zm4 0h3v9h-3zm-63 1h2v1h-2zm11 0h3v8h-3zm5 0h3v8h-3zm12 0h3v8h-3zm5 0h3v8h-3zm11 0h3v8h-3zm5 0h3v8h-3zm31 0h4v5h-4zm-80 1h3v7h-3zm75 2h2v4h-2zm-4 2h2v1h-2zm9 0h1v1h-1zm2 0h2v1h-2zm-11 1h3v1h-3zm9 0h4v2h-4zm-116 1h3v1h-3zm6 0h5v1h-5zm10 0h3v1h-3zm91 0h6v1h-6zm-108 1h2v1h-2zm3 0h3v1h-3zm4 0h3v1h-3zm6 0h2v1h-2zm3 0h2v1h-2zm10 0h4v1h-4zm8 0h4v1h-4zm5 0h4v1h-4zm9 0h5v1h-5zm6 0h4v1h-4zm9 0h5v1h-5zm6 0h4v1h-4zm9 0h4v1h-4zm5 0h4v1h-4zm8 0h4v1h-4zm12 0h2v1h-2zm3 0h2v1h-2zm5 0h1v1h-1zm2 0h1v1h-1zm3 0h2v1h-2zm4 0h1v1h-1zm2 0h1v1h-1zm-123 1h1v1h-1zm7 0h1v1h-1zm4 0h3v1h-3zm8 0h4v1h-4zm11 0h6v1h-6zm13 0h7v1h-7zm15 0h7v1h-7zm16 0h6v1h-6zm13 0h6v1h-6zm13 0h4v1h-4zm9 0h3v1h-3zm6 0h2v1h-2zm7 0h2v1h-2zm-122 1h2v1h-2zm4 0h1v1h-1zm114 0h1v1h-1zm3 0h2v1h-2zm-116 1h2v1h-2zm112 0h1v1h-1zm-75 79h40v2h-40zm1 2h38v3h-38z"/>
<path fill="url(#p25)" d="M0 0m280 63h1v1h-1zm-4 1h5v1h-5zm-3 1h9v1h-9zm0 1h6v1h-6zm0 1h3v1h-3zm0 1h1v1h-1zm18 7h1v2h-1zm-9 1h5v1h-5zm100 0h6v1h-6zm-105 1h1v1h-1zm4 0h6v1h-6zm9 0h2v1h-2zm88 0h1v3h-1zm3 0h7v1h-7zm10 0h2v1h-2zm-116 1h3v2h-3zm5 0h8v1h-8zm10 0h1v2h-1zm91 0h8v1h-8zm10 0h4v2h-4zm-111 1h2v1h-2zm7 0h1v3h-1zm94 0h1v2h-1zm7 0h1v3h-1zm-114 1h3v1h-3zm6 0h1v1h-1zm9 0h1v6h-1zm89 0h2v1h-2zm12 0h1v7h-1zm3 0h2v1h-2zm-119 1h1v3h-1zm105 0h1v3h-1zm17 0h1v2h-1zm-118 1h1v4h-1zm117 1h2v4h-2zm-122 1h1v8h-1zm106 0h2v3h-2zm-101 2h2v4h-2zm14 0h8v1h-8zm77 0h9v1h-9zm-81 1h1v3h-1zm4 0h9v1h-9zm12 0h11v1h-11zm17 0h3v1h-3zm25 0h2v1h-2zm8 0h11v1h-11zm14 0h10v1h-10zm12 0h1v2h-1zm15 0h1v4h-1zm-101 1h8v1h-8zm9 0h13v1h-13zm16 0h14v1h-14zm17 0h14v1h-14zm17 0h13v1h-13zm14 0h9v1h-9zm-67 1h5v1h-5zm6 0h11v1h-11zm12 0h16v1h-16zm17 0h16v1h-16zm17 0h14v1h-14zm15 0h2v1h-2zm22 0h1v3h-1zm-110 1h1v1h-1zm22 0h3v1h-3zm14 0h2v1h-2zm3 0h2v1h-2zm13 0h3v1h-3zm4 0h3v1h-3zm14 0h2v1h-2zm3 0h2v1h-2zm13 0h3v1h-3zm-64 1h2v1h-2zm15 0h1v1h-1zm2 0h1v1h-1zm15 0h4v1h-4zm17 0h1v1h-1zm2 0h1v1h-1zm14 0h2v1h-2zm-64 1h1v1h-1zm15 0h1v3h-1zm17 0h2v1h-2zm17 0h1v3h-1zm15 0h1v2h-1zm-32 1h1v2h-1zm55 16h1v6h-1zm-101 1h1v6h-1zm-9 1h1v2h-1zm101 1h1v5h-1zm-107 1h1v11h-1zm5 0h2v7h-2zm117 2h1v7h-1zm-106 2h1v6h-1zm90 0h2v3h-2zm11 1h1v5h-1zm-112 2h1v3h-1zm101 0h1v3h-1zm16 2h2v2h-2zm-118 1h5v1h-5zm9 0h6v1h-6zm92 0h5v1h-5zm9 0h5v1h-5zm-114 1h2v15h-2zm5 0h1v6h-1zm2 0h1v6h-1zm6 0h2v13h-2zm4 0h2v2h-2zm88 0h1v4h-1zm3 0h2v12h-2zm6 0h2v10h-2zm3 0h1v13h-1zm4 0h3v7h-3zm-105 2h3v2h-3zm28 1h1v3h-1zm34 0h1v3h-1zm15 0h1v2h-1zm-77 1h4v1h-4zm13 0h1v1h-1zm32 0h1v2h-1zm42 0h3v1h-3zm-87 1h3v8h-3zm9 0h9v1h-9zm15 0h1v1h-1zm49 0h8v1h-8zm15 0h2v3h-2zm-99 1h3v9h-3zm21 0h2v9h-2zm4 0h3v9h-3zm10 0h4v1h-4zm5 0h4v1h-4zm12 0h9v1h-9zm17 0h4v1h-4zm5 0h4v1h-4zm11 0h2v1h-2zm5 0h2v2h-2zm-55 1h3v1h-3zm6 0h3v5h-3zm11 0h3v3h-3zm6 0h3v8h-3zm11 0h3v5h-3zm6 0h2v2h-2zm10 0h3v8h-3zm32 0h2v8h-2zm-81 1h2v2h-2zm53 0h3v7h-3zm10 0h3v5h-3zm-25 1h3v6h-3zm-38 1h3v5h-3zm16 0h4v5h-4zm58 0h1v3h-1zm-70 2h4v3h-4zm29 0h4v3h-4zm34 0h1v1h-1zm-95 1h6v1h-6zm91 0h5v2h-5zm11 0h3v2h-3zm-102 1h5v1h-5zm-13 1h1v1h-1zm7 0h1v1h-1zm4 0h3v1h-3zm8 0h4v1h-4zm12 0h4v1h-4zm13 0h5v1h-5zm15 0h5v1h-5zm15 0h5v1h-5zm14 0h4v1h-4zm12 0h4v1h-4zm9 0h3v1h-3zm6 0h2v1h-2zm7 0h1v1h-1zm-117 2h2v1h-2zm112 0h1v1h-1zm-73 85h36v2h-36zm1 2h34v3h-34zm1 3h32v3h-32zm1 3h30v3h-30zm1 3h28v3h-28zm1 3h26v2h-26zm1 2h24v3h-24zm1 3h22v3h-22zm1 3h20v1h-20z"/>
<path fill="url(#p26)" d="M0 0m392 31h1v1h-1zm-14 27h1v1h-1zm-100 1h4v1h-4zm100 0h2v1h-2zm-102 1h7v1h-7zm102 0h3v2h-3zm-105 1h10v1h-10zm0 1h11v1h-11zm105 0h4v1h-4zm-105 1h7v1h-7zm8 0h4v2h-4zm97 0h5v1h-5zm-105 1h3v1h-3zm106 0h10v1h-10zm-97 1h4v1h-4zm102 0h6v1h-6zm-105 1h13v1h-13zm99 0h13v1h-13zm-102 1h16v1h-16zm102 0h16v1h-16zm-104 1h18v1h-18zm104 0h18v1h-18zm-105 1h19v6h-19zm105 0h19v5h-19zm-82 5h1v1h-1zm80 0h21v1h-21zm-103 1h18v1h-18zm19 0h7v1h-7zm83 0h22v1h-22zm-102 1h9v1h-9zm14 0h4v1h-4zm12 0h4v1h-4zm79 0h4v1h-4zm10 0h9v1h-9zm-115 1h4v1h-4zm5 0h3v1h-3zm9 0h3v1h-3zm5 0h2v1h-2zm28 0h21v1h-21zm56 0h2v1h-2zm3 0h2v3h-2zm9 0h3v1h-3zm5 0h4v1h-4zm-120 1h2v2h-2zm5 0h2v4h-2zm10 0h2v2h-2zm4 0h9v1h-9zm77 0h9v1h-9zm20 0h2v2h-2zm6 0h2v3h-2zm-103 1h25v1h-25zm61 0h25v1h-25zm-80 1h1v4h-1zm15 0h1v7h-1zm4 0h86v6h-86zm88 0h1v4h-1zm9 0h1v9h-1zm6 1h1v2h-1zm-116 1h1v4h-1zm21 4h69v1h-69zm1 1h3v1h-3zm14 0h6v1h-6zm9 0h22v1h-22zm24 0h6v1h-6zm17 0h3v1h-3zm-63 1h1v1h-1zm14 0h3v1h-3zm17 0h3v1h-3zm17 0h3v1h-3zm16 0h1v2h-1zm-49 1h1v3h-1zm17 0h1v2h-1zm17 0h1v3h-1zm38 26h1v8h-1zm-101 1h1v7h-1zm-9 4h1v3h-1zm101 0h1v3h-1zm-101 4h1v6h-1zm9 0h2v2h-2zm91 0h2v8h-2zm10 0h1v13h-1zm-101 2h1v11h-1zm13 4h2v9h-2zm16 0h1v1h-1zm34 0h1v1h-1zm14 0h3v1h-3zm-49 1h3v3h-3zm17 0h3v3h-3zm17 0h3v2h-3zm16 0h2v1h-2zm0 1h1v7h-1zm14 0h1v5h-1zm-30 1h2v3h-2zm-33 1h2v2h-2zm17 0h2v5h-2zm-17 2h1v3h-1zm34 0h1v3h-1z"/>
<path fill="url(#p27)" d="M0 0m286 28h3v1h-3zm-4 1h6v1h-6zm-3 1h10v1h-10zm109 0h3v1h-3zm-110 1h10v1h-10zm110 0h4v1h-4zm5 0h1v1h-1zm-115 1h9v1h-9zm110 0h7v1h-7zm-110 1h8v1h-8zm110 0h9v4h-9zm-111 1h7v1h-7zm-4 1h9v1h-9zm0 1h6v1h-6zm0 1h7v1h-7zm116 0h8v4h-8zm-116 1h8v3h-8zm0 3h9v3h-9zm118 0h6v1h-6zm3 1h3v1h-3zm-5 1h8v1h-8zm-116 1h8v3h-8zm115 0h9v1h-9zm-1 1h10v2h-10zm-114 2h7v1h-7zm113 0h11v1h-11zm-113 1h6v2h-6zm10 0h7v1h-7zm102 0h12v2h-12zm-98 1h2v1h-2zm-14 1h7v1h-7zm111 0h13v1h-13zm-111 1h8v2h-8zm110 0h14v1h-14zm-1 1h15v1h-15zm-109 1h9v2h-9zm108 0h16v1h-16zm-13 1h1v1h-1zm10 0h19v4h-19zm-105 1h10v1h-10zm0 1h11v1h-11zm0 1h12v1h-12zm0 1h13v1h-13zm102 0h3v2h-3zm4 0h18v1h-18zm-106 1h5v1h-5zm9 0h5v1h-5zm98 0h16v1h-16zm-107 1h3v1h-3zm10 0h5v2h-5zm91 0h4v1h-4zm7 0h15v2h-15zm-6 1h3v1h-3zm-91 1h4v1h-4zm6 0h2v1h-2zm86 0h2v1h-2zm6 0h15v1h-15zm-97 1h7v2h-7zm92 0h1v1h-1zm6 0h14v1h-14zm-5 1h1v1h-1zm11 0h8v1h-8zm-103 1h6v1h-6zm26 0h1v1h-1zm66 0h6v1h-6zm12 0h7v1h-7zm-79 1h5v1h-5zm80 0h6v1h-6zm-79 1h4v1h-4zm82 0h3v1h-3zm-82 1h7v1h-7zm84 0h1v1h-1zm-83 1h9v1h-9zm64 0h1v1h-1zm-83 1h3v1h-3zm20 0h10v1h-10zm61 0h3v1h-3zm-83 1h7v1h-7zm22 0h11v1h-11zm53 0h11v1h-11zm-75 1h8v1h-8zm22 0h12v1h-12zm38 0h1v1h-1zm12 0h14v1h-14zm-72 1h9v1h-9zm21 0h15v1h-15zm19 0h6v1h-6zm20 0h5v1h-5zm10 0h16v1h-16zm-70 1h4v1h-4zm5 0h7v1h-7zm11 0h34v1h-34zm41 0h27v1h-27zm-50 1h69v1h-69zm70 0h6v1h-6zm-77 1h7v1h-7zm11 0h64v1h-64zm66 0h9v1h-9zm-75 1h26v1h-26zm47 0h35v1h-35zm-40 1h68v1h-68zm16 1h36v1h-36z"/>
<path fill="url(#p28)" d="M0 0m289 28h3v1h-3zm89 0h6v1h-6zm-90 1h4v1h-4zm90 0h10v1h-10zm-89 1h3v1h-3zm89 0h6v2h-6zm7 0h3v7h-3zm-109 1h2v1h-2zm12 0h4v1h-4zm-13 1h3v1h-3zm12 0h5v1h-5zm91 0h5v1h-5zm-105 1h5v1h-5zm13 0h6v1h-6zm92 0h3v1h-3zm-105 1h4v1h-4zm11 0h8v1h-8zm-2 1h10v1h-10zm-3 1h13v1h-13zm1 1h12v1h-12zm104 0h5v1h-5zm-103 1h9v1h-9zm102 0h6v2h-6zm-102 1h7v1h-7zm0 1h6v1h-6zm101 0h7v1h-7zm-100 1h4v1h-4zm100 0h9v1h-9zm-100 1h3v1h-3zm100 0h12v1h-12zm-100 1h4v1h-4zm14 0h6v1h-6zm72 0h4v1h-4zm14 0h7v1h-7zm-101 1h6v1h-6zm17 0h13v1h-13zm66 0h6v1h-6zm18 0h6v1h-6zm-101 1h10v1h-10zm18 0h10v1h-10zm19 0h8v1h-8zm49 0h2v1h-2zm15 0h5v1h-5zm-101 1h12v1h-12zm19 0h8v2h-8zm18 0h6v1h-6zm50 0h1v1h-1zm13 0h6v1h-6zm-101 1h14v1h-14zm37 0h8v1h-8zm64 0h5v1h-5zm-102 1h4v1h-4zm11 0h4v1h-4zm11 0h7v2h-7zm15 0h10v2h-10zm36 0h10v1h-10zm29 0h4v1h-4zm-102 1h8v1h-8zm10 0h4v1h-4zm67 0h13v1h-13zm24 0h5v1h-5zm-100 1h12v1h-12zm22 0h6v1h-6zm15 0h9v1h-9zm42 0h11v1h-11zm20 0h5v1h-5zm-98 1h11v2h-11zm22 0h5v1h-5zm15 0h7v1h-7zm42 0h11v1h-11zm18 0h5v1h-5zm-75 1h4v2h-4zm16 0h5v1h-5zm41 0h13v1h-13zm18 0h4v1h-4zm-96 1h9v1h-9zm78 0h21v1h-21zm-78 1h8v1h-8zm22 0h3v1h-3zm56 0h8v1h-8zm9 0h9v1h-9zm-86 1h9v1h-9zm21 0h4v1h-4zm57 0h17v1h-17zm-77 1h8v1h-8zm20 0h6v1h-6zm58 0h16v1h-16zm-77 1h7v1h-7zm19 0h9v1h-9zm60 0h14v1h-14zm-78 1h6v1h-6zm17 0h11v2h-11zm32 0h2v1h-2zm30 0h10v1h-10zm-78 1h5v1h-5zm47 0h4v1h-4zm33 0h8v1h-8zm29 0h1v3h-1zm-108 1h4v2h-4zm15 0h12v1h-12zm30 0h6v2h-6zm35 0h6v1h-6zm-64 1h11v1h-11zm65 0h6v1h-6zm-81 1h2v1h-2zm17 0h11v1h-11zm29 0h5v1h-5zm36 0h6v1h-6zm-65 1h12v1h-12zm28 0h7v1h-7zm38 0h6v1h-6zm-66 1h15v1h-15zm26 0h10v1h-10zm23 0h10v1h-10zm18 0h6v1h-6zm-67 1h7v1h-7zm8 0h14v1h-14zm17 0h13v1h-13zm19 0h16v1h-16zm24 0h5v1h-5zm-81 1h8v1h-8zm14 0h5v1h-5zm10 0h50v1h-50zm58 0h4v1h-4zm-82 1h10v1h-10zm13 0h7v2h-7zm11 0h51v1h-51zm54 0h8v1h-8zm-78 1h11v1h-11zm27 0h59v1h-59zm-27 1h12v1h-12zm13 0h8v1h-8zm17 0h55v1h-55zm-30 1h2v1h-2zm5 0h7v1h-7zm8 0h9v1h-9zm19 0h51v1h-51zm-25 1h15v1h-15zm26 0h42v1h-42zm-25 1h14v1h-14zm26 0h26v1h-26zm27 0h11v1h-11zm-52 1h12v1h-12zm27 0h4v1h-4zm10 0h14v1h-14zm19 0h5v1h-5zm-53 1h4v1h-4zm38 0h7v1h-7zm26 1h1v1h-1zm-1 1h2v1h-2z"/>
<path fill="url(#p29)" d="M0 0m384 30h1v2h-1zm-1 2h2v1h-2zm-2 1h4v1h-4zm-3 1h7v3h-7zm0 3h6v1h-6zm-88 1h2v1h-2zm88 0h5v2h-5zm-90 1h4v1h-4zm-1 1h5v1h-5zm91 0h4v2h-4zm-92 1h6v1h-6zm-1 1h9v1h-9zm91 0h6v1h-6zm-90 1h10v1h-10zm86 0h10v1h-10zm-85 1h11v1h-11zm24 0h4v1h-4zm44 0h9v1h-9zm15 0h6v1h-6zm7 0h5v2h-5zm-86 1h8v1h-8zm18 0h9v1h-9zm17 0h41v1h-41zm43 0h7v1h-7zm-76 1h7v1h-7zm15 0h10v1h-10zm16 0h17v1h-17zm24 0h20v1h-20zm21 0h6v1h-6zm8 0h4v2h-4zm-83 1h6v1h-6zm14 0h9v1h-9zm17 0h14v1h-14zm23 0h26v1h-26zm-54 1h7v1h-7zm14 0h8v2h-8zm18 0h12v1h-12zm22 0h4v1h-4zm14 0h11v1h-11zm16 0h3v1h-3zm-85 1h8v1h-8zm33 0h13v1h-13zm22 0h8v1h-8zm21 0h7v1h-7zm8 0h3v1h-3zm-85 1h10v1h-10zm16 0h9v1h-9zm18 0h14v1h-14zm22 0h11v1h-11zm22 0h9v1h-9zm-78 1h11v1h-11zm16 0h10v1h-10zm17 0h17v1h-17zm22 0h13v1h-13zm24 0h7v1h-7zm-79 1h4v1h-4zm5 0h6v1h-6zm10 0h12v1h-12zm17 0h36v1h-36zm49 0h5v1h-5zm-82 1h4v1h-4zm7 0h5v1h-5zm9 0h53v2h-53zm-17 1h3v1h-3zm8 0h6v3h-6zm-6 1h2v1h-2zm16 0h53v1h-53zm-16 1h3v2h-3zm18 0h52v1h-52zm-13 1h7v1h-7zm16 0h51v1h-51zm-21 1h4v1h-4zm5 0h6v1h-6zm17 0h21v1h-21zm23 0h28v1h-28zm-45 1h11v2h-11zm22 0h6v1h-6zm8 0h12v1h-12zm16 0h29v1h-29zm-23 1h4v1h-4zm8 0h10v1h-10zm16 0h29v1h-29zm-47 1h12v1h-12zm23 0h5v1h-5zm6 0h12v1h-12zm18 0h30v1h-30zm-47 1h13v4h-13zm24 0h18v1h-18zm23 0h31v1h-31zm-22 1h16v1h-16zm23 0h31v1h-31zm-20 1h11v1h-11zm21 0h13v1h-13zm23 0h8v1h-8zm-37 1h3v1h-3zm16 0h6v1h-6zm22 0h8v1h-8zm-65 1h6v1h-6zm66 0h8v1h-8zm-64 1h3v1h-3zm65 0h3v1h-3zm-64 1h2v1h-2zm1 1h1v2h-1z"/>
<path fill="url(#p30)" d="M0 0m376 44h1v2h-1zm-35 2h7v1h-7zm34 0h2v1h-2zm-36 1h9v1h-9zm35 0h3v1h-3zm-36 1h10v1h-10zm35 0h5v1h-5zm-34 1h9v1h-9zm37 0h1v1h-1zm-36 1h8v1h-8zm2 1h5v1h-5zm-46 1h1v1h-1zm-1 1h3v1h-3zm-2 1h5v1h-5zm1 1h4v1h-4zm1 1h3v1h-3zm0 1h2v1h-2zm1 1h1v1h-1zm24 1h2v1h-2zm-1 1h4v1h-4zm1 1h1v1h-1z"/>
<path d="M292.0 42.2L295.6 42.7L299.2 43.2L302.8 43.6L306.3 43.9L309.9 44.2L313.5 44.4L317.1 44.6L320.7 44.7L324.3 44.9L327.8 44.9L331.4 45.0L335.0 45.0L338.6 45.0L342.2 44.9L345.7 44.9L349.3 44.7L352.9 44.6L356.5 44.4L360.1 44.2L363.7 43.9L367.2 43.6L370.8 43.2L374.4 42.7L378.0 42.2" fill="none" stroke="#5555ff" stroke-width="1" />
<path d="M272.7 35.0L273.5 33.3L274.3 32.6L275.1 32.1L275.9 31.7L276.7 31.3L277.5 31.0L278.3 30.7L279.1 30.4L279.9 30.1L280.7 29.9L281.6 29.6L282.4 29.4L283.2 29.2L284.0 29.0L284.8 28.8L285.6 28.6L286.4 28.5L287.2 28.3L288.0 28.1L288.8 28.0L289.6 27.8L290.4 27.7L291.2 27.6L292.0 27.4" fill="none" stroke="#5555ff" stroke-width="1" />
<path d="M378.0 27.4L378.8 27.6L379.6 27.7L380.4 27.8L381.2 28.0L382.0 28.1L382.8 28.3L383.6 28.5L384.4 28.6L385.2 28.8L386.0 29.0L386.8 29.2L387.6 29.4L388.4 29.6L389.3 29.9L390.1 30.1L390.9 30.4L391.7 30.7L392.5 31.0L393.3 31.3L394.1 31.7L394.9 32.1L395.7 32.6L396.5 33.3L397.3 35.0" fill="none" stroke="#5555ff" stroke-width="1" />
<path d="M292.0 105.9L295.6 106.2L299.2 106.5L302.8 106.8L306.3 107.0L309.9 107.2L313.5 107.3L317.1 107.4L320.7 107.5L324.3 107.6L327.8 107.7L331.4 107.7L335.0 107.7L338.6 107.7L342.2 107.7L345.7 107.6L349.3 107.5L352.9 107.4L356.5 107.3L360.1 107.2L363.7 107.0L367.2 106.8L370.8 106.5L374.4 106.2L378.0 105.9" fill="none" stroke="#5555ff" stroke-width="1" />
<path d="M272.7 101.1L273.5 100.4L274.3 100.1L275.1 99.9L275.9 99.7L276.7 99.5L277.5 99.4L278.3 99.2L279.1 99.1L279.9 99.0L280.7 98.9L281.6 98.8L282.4 98.7L283.2 98.6L284.0 98.5L284.8 98.4L285.6 98.3L286.4 98.3L287.2 98.2L288.0 98.1L288.8 98.0L289.6 98.0L290.4 97.9L291.2 97.9L292.0 97.8" fill="none" stroke="#5555ff" stroke-width="1" />
<path d="M378.0 97.8L378.8 97.9L379.6 97.9L380.4 98.0L381.2 98.0L382.0 98.1L382.8 98.2L383.6 98.3L384.4 98.3L385.2 98.4L386.0 98.5L386.8 98.6L387.6 98.7L388.4 98.8L389.3 98.9L390.1 99.0L390.9 99.1L391.7 99.2L392.5 99.4L393.3 99.5L394.1 99.7L394.9 99.9L395.7 100.1L396.5 100.4L397.3 101.1" fill="none" stroke="#5555ff" stroke-width="1" />
<path d="M292.0 129.6L295.6 129.8L299.2 130.1L302.8 130.3L306.3 130.4L309.9 130.6L313.5 130.7L317.1 130.8L320.7 130.9L324.3 130.9L327.8 131.0L331.4 131.0L335.0 131.0L338.6 131.0L342.2 131.0L345.7 130.9L349.3 130.9L352.9 130.8L356.5 130.7L360.1 130.6L363.7 130.4L367.2 130.3L370.8 130.1L374.4 129.8L378.0 129.6" fill="none" stroke="#5555ff" stroke-width="1" />
<path d="M272.7 125.7L273.5 125.3L274.3 125.2L275.1 125.1L275.9 125.0L276.7 124.9L277.5 124.8L278.3 124.7L279.1 124.6L279.9 124.6L280.7 124.5L281.6 124.5L282.4 124.4L283.2 124.4L284.0 124.3L284.8 124.3L285.6 124.2L286.4 124.2L287.2 124.2L288.0 124.1L288.8 124.1L289.6 124.1L290.4 124.0L291.2 124.0L292.0 124.0" fill="none" stroke="#5555ff" stroke-width="1" />
<path d="M378.0 124.0L378.8 124.0L379.6 124.0L380.4 124.1L381.2 124.1L382.0 124.1L382.8 124.2L383.6 124.2L384.4 124.2L385.2 124.3L386.0 124.3L386.8 124.4L387.6 124.4L388.4 124.5L389.3 124.5L390.1 124.6L390.9 124.6L391.7 124.7L392.5 124.8L393.3 124.9L394.1 125.0L394.9 125.1L395.7 125.2L396.5 125.3L397.3 125.7" fill="none" stroke="#5555ff" stroke-width="1" />
<path d="M292.0 142.6L295.6 142.9L299.2 143.1L302.8 143.2L306.3 143.4L309.9 143.5L313.5 143.6L317.1 143.7L320.7 143.8L324.3 143.8L327.8 143.9L331.4 143.9L335.0 143.9L338.6 143.9L342.2 143.9L345.7 143.8L349.3 143.8L352.9 143.7L356.5 143.6L360.1 143.5L363.7 143.4L367.2 143.2L370.8 143.1L374.4 142.9L378.0 142.6" fill="none" stroke="#5555ff" stroke-width="1" />
<path d="M272.7 139.3L273.5 139.1L274.3 139.0L275.1 139.0L275.9 138.9L276.7 138.9L277.5 138.8L278.3 138.8L279.1 138.7L279.9 138.7L280.7 138.7L281.6 138.7L282.4 138.6L283.2 138.6L284.0 138.6L284.8 138.6L285.6 138.5L286.4 138.5L287.2 138.5L288.0 138.5L288.8 138.5L289.6 138.4L290.4 138.4L291.2 138.4L292.0 138.4" fill="none" stroke="#5555ff" stroke-width="1" />
<path d="M378.0 138.4L378.8 138.4L379.6 138.4L380.4 138.4L381.2 138.5L382.0 138.5L382.8 138.5L383.6 138.5L384.4 138.5L385.2 138.6L386.0 138.6L386.8 138.6L387.6 138.6L388.4 138.7L389.3 138.7L390.1 138.7L390.9 138.7L391.7 138.8L392.5 138.8L393.3 138.9L394.1 138.9L394.9 139.0L395.7 139.0L396.5 139.1L397.3 139.3" fill="none" stroke="#5555ff" stroke-width="1" />
<path d="M292.0 47.1L295.6 47.6L299.2 48.1L302.8 48.4L306.3 48.7L309.9 49.0L313.5 49.2L317.1 49.4L320.7 49.6L324.3 49.7L327.8 49.8L331.4 49.8L335.0 49.8L338.6 49.8L342.2 49.8L345.7 49.7L349.3 49.6L352.9 49.4L356.5 49.2L360.1 49.0L363.7 48.7L367.2 48.4L370.8 48.1L374.4 47.6L378.0 47.1" fill="none" stroke="#5555ff" stroke-width="1" />
<path d="M272.7 40.1L273.5 38.5L274.3 37.8L275.1 37.3L275.9 36.9L276.7 36.6L277.5 36.2L278.3 35.9L279.1 35.7L279.9 35.4L280.7 35.2L281.6 35.0L282.4 34.7L283.2 34.5L284.0 34.4L284.8 34.2L285.6 34.0L286.4 33.8L287.2 33.7L288.0 33.5L288.8 33.4L289.6 33.2L290.4 33.1L291.2 33.0L292.0 32.9" fill="none" stroke="#5555ff" stroke-width="1" />
<path d="M378.0 32.9L378.8 33.0L379.6 33.1L380.4 33.2L381.2 33.4L382.0 33.5L382.8 33.7L383.6 33.8L384.4 34.0L385.2 34.2L386.0 34.4L386.8 34.5L387.6 34.7L388.4 35.0L389.3 35.2L390.1 35.4L390.9 35.7L391.7 35.9L392.5 36.2L393.3 36.6L394.1 36.9L394.9 37.3L395.7 37.8L396.5 38.5L397.3 40.1" fill="none" stroke="#5555ff" stroke-width="1" />
<path d="M292.0 53.7L295.6 54.1L299.2 54.6L302.8 54.9L306.3 55.2L309.9 55.5L313.5 55.7L317.1 55.9L320.7 56.0L324.3 56.1L327.8 56.2L331.4 56.2L335.0 56.3L338.6 56.2L342.2 56.2L345.7 56.1L349.3 56.0L352.9 55.9L356.5 55.7L360.1 55.5L363.7 55.2L367.2 54.9L370.8 54.6L374.4 54.1L378.0 53.7" fill="none" stroke="#5555ff" stroke-width="1" />
<path d="M272.7 46.9L273.5 45.4L274.3 44.7L275.1 44.3L275.9 43.9L276.7 43.5L277.5 43.2L278.3 43.0L279.1 42.7L279.9 42.5L280.7 42.3L281.6 42.0L282.4 41.8L283.2 41.7L284.0 41.5L284.8 41.3L285.6 41.2L286.4 41.0L287.2 40.8L288.0 40.7L288.8 40.6L289.6 40.4L290.4 40.3L291.2 40.2L292.0 40.1" fill="none" stroke="#5555ff" stroke-width="1" />
<path d="M378.0 40.1L378.8 40.2L379.6 40.3L380.4 40.4L381.2 40.6L382.0 40.7L382.8 40.8L383.6 41.0L384.4 41.2L385.2 41.3L386.0 41.5L386.8 41.7L387.6 41.8L388.4 42.0L389.3 42.3L390.1 42.5L390.9 42.7L391.7 43.0L392.5 43.2L393.3 43.5L394.1 43.9L394.9 44.3L395.7 44.7L396.5 45.4L397.3 46.9" fill="none" stroke="#5555ff" stroke-width="1" />
<path d="M292.0 60.2L295.6 60.7L299.2 61.0L302.8 61.4L306.3 61.7L309.9 61.9L313.5 62.1L317.1 62.3L320.7 62.4L324.3 62.6L327.8 62.6L331.4 62.7L335.0 62.7L338.6 62.7L342.2 62.6L345.7 62.6L349.3 62.4L352.9 62.3L356.5 62.1L360.1 61.9L363.7 61.7L367.2 61.4L370.8 61.0L374.4 60.7L378.0 60.2" fill="none" stroke="#5555ff" stroke-width="1" />
<path d="M272.7 53.7L273.5 52.2L274.3 51.7L275.1 51.2L275.9 50.9L276.7 50.5L277.5 50.3L278.3 50.0L279.1 49.8L279.9 49.5L280.7 49.3L281.6 49.1L282.4 48.9L283.2 48.8L284.0 48.6L284.8 48.4L285.6 48.3L286.4 48.2L287.2 48.0L288.0 47.9L288.8 47.8L289.6 47.6L290.4 47.5L291.2 47.4L292.0 47.3" fill="none" stroke="#5555ff" stroke-width="1" />
<path d="M378.0 47.3L378.8 47.4L379.6 47.5L380.4 47.6L381.2 47.8L382.0 47.9L382.8 48.0L383.6 48.2L384.4 48.3L385.2 48.4L386.0 48.6L386.8 48.8L387.6 48.9L388.4 49.1L389.3 49.3L390.1 49.5L390.9 49.8L391.7 50.0L392.5 50.3L393.3 50.5L394.1 50.9L394.9 51.2L395.7 51.7L396.5 52.2L397.3 53.7" fill="none" stroke="#5555ff" stroke-width="1" />
<path d="M292.0 66.7L295.6 67.2L299.2 67.5L302.8 67.9L306.3 68.1L309.9 68.4L313.5 68.6L317.1 68.8L320.7 68.9L324.3 69.0L327.8 69.1L331.4 69.1L335.0 69.1L338.6 69.1L342.2 69.1L345.7 69.0L349.3 68.9L352.9 68.8L356.5 68.6L360.1 68.4L363.7 68.1L367.2 67.9L370.8 67.5L374.4 67.2L378.0 66.7" fill="none" stroke="#5555ff" stroke-width="1" />
<path d="M272.7 60.4L273.5 59.1L274.3 58.6L275.1 58.2L275.9 57.8L276.7 57.5L277.5 57.3L278.3 57.0L279.1 56.8L279.9 56.6L280.7 56.4L281.6 56.2L282.4 56.1L283.2 55.9L284.0 55.7L284.8 55.6L285.6 55.4L286.4 55.3L287.2 55.2L288.0 55.1L288.8 54.9L289.6 54.8L290.4 54.7L291.2 54.6L292.0 54.5" fill="none" stroke="#5555ff" stroke-width="1" />
<path d="M378.0 54.5L378.8 54.6L379.6 54.7L380.4 54.8L381.2 54.9L382.0 55.1L382.8 55.2L383.6 55.3L384.4 55.4L385.2 55.6L386.0 55.7L386.8 55.9L387.6 56.1L388.4 56.2L389.3 56.4L390.1 56.6L390.9 56.8L391.7 57.0L392.5 57.3L393.3 57.5L394.1 57.8L394.9 58.2L395.7 58.6L396.5 59.1L397.3 60.4" fill="none" stroke="#5555ff" stroke-width="1" />
<path d="M292.0 73.3L295.6 73.7L299.2 74.0L302.8 74.4L306.3 74.6L309.9 74.8L313.5 75.0L317.1 75.2L320.7 75.3L324.3 75.4L327.8 75.5L331.4 75.5L335.0 75.6L338.6 75.5L342.2 75.5L345.7 75.4L349.3 75.3L352.9 75.2L356.5 75.0L360.1 74.8L363.7 74.6L367.2 74.4L370.8 74.0L374.4 73.7L378.0 73.3" fill="none" stroke="#5555ff" stroke-width="1" />
<path d="M272.7 67.2L273.5 66.0L274.3 65.5L275.1 65.1L275.9 64.8L276.7 64.5L277.5 64.3L278.3 64.1L279.1 63.9L279.9 63.7L280.7 63.5L281.6 63.3L282.4 63.2L283.2 63.0L284.0 62.9L284.8 62.7L285.6 62.6L286.4 62.5L287.2 62.3L288.0 62.2L288.8 62.1L289.6 62.0L290.4 61.9L291.2 61.8L292.0 61.7" fill="none" stroke="#5555ff" stroke-width="1" />
<path d="M378.0 61.7L378.8 61.8L379.6 61.9L380.4 62.0L381.2 62.1L382.0 62.2L382.8 62.3L383.6 62.5L384.4 62.6L385.2 62.7L386.0 62.9L386.8 63.0L387.6 63.2L388.4 63.3L389.3 63.5L390.1 63.7L390.9 63.9L391.7 64.1L392.5 64.3L393.3 64.5L394.1 64.8L394.9 65.1L395.7 65.5L396.5 66.0L397.3 67.2" fill="none" stroke="#5555ff" stroke-width="1" />
<path d="M268.9 125.7L274.4 124.7L279.9 124.3L285.4 124.0L290.9 123.8L296.4 123.6L301.9 123.5L307.5 123.4L313.0 123.3L318.5 123.2L324.0 123.2L329.5 123.1L335.0 123.1L340.5 123.1L346.0 123.2L351.5 123.2L357.0 123.3L362.5 123.4L368.1 123.5L373.6 123.6L379.1 123.8L384.6 124.0L390.1 124.3L395.6 124.7L401.1 125.7" fill="none" stroke="#5555ff" stroke-width="1" />
<path d="M268.9 139.3L274.4 138.8L279.9 138.6L285.4 138.4L290.9 138.3L296.4 138.2L301.9 138.1L307.5 138.1L313.0 138.0L318.5 138.0L324.0 138.0L329.5 138.0L335.0 138.0L340.5 138.0L346.0 138.0L351.5 138.0L357.0 138.0L362.5 138.1L368.1 138.1L373.6 138.2L379.1 138.3L384.6 138.4L390.1 138.6L395.6 138.8L401.1 139.3" fill="none" stroke="#5555ff" stroke-width="1" />
<path d="M283.4 141.0L300.1 172.2L325.3 248.3" fill="none" stroke="#5555ff" stroke-width="1" />
<path d="M289.5 141.0L304.2 172.2L326.5 248.3" fill="none" stroke="#5555ff" stroke-width="1" />
<path d="M297.2 141.0L309.5 172.2L327.9 248.3" fill="none" stroke="#5555ff" stroke-width="1" />
<path d="M305.7 141.0L315.2 172.2L329.5 248.3" fill="none" stroke="#5555ff" stroke-width="1" />
<path d="M319.4 141.0L324.4 172.2L332.1 248.3" fill="none" stroke="#5555ff" stroke-width="1" />
<path d="M334.7 141.0L334.8 172.2L334.9 248.3" fill="none" stroke="#5555ff" stroke-width="1" />
<path d="M349.7 141.0L345.0 172.2L337.8 248.3" fill="none" stroke="#5555ff" stroke-width="1" />
<path d="M363.1 141.0L354.0 172.2L340.3 248.3" fill="none" stroke="#5555ff" stroke-width="1" />
<path d="M372.8 141.0L360.5 172.2L342.1 248.3" fill="none" stroke="#5555ff" stroke-width="1" />
<path d="M380.5 141.0L365.8 172.2L343.5 248.3" fill="none" stroke="#5555ff" stroke-width="1" />
<path d="M386.6 141.0L369.9 172.2L344.7 248.3" fill="none" stroke="#5555ff" stroke-width="1" />
<path d="M273.8 33.1L273.8 139.1M278.9 30.4L278.9 138.8M288.6 28.0L288.6 138.5M367.8 43.5L367.8 143.2M352.5 44.6L352.5 143.7M335.4 45.0L335.4 143.9M318.5 44.6L318.5 143.7M303.4 43.6L303.4 143.3M380.2 27.8L380.2 138.4M389.8 30.0L389.8 138.7M396.1 32.9L396.1 139.0M276.3 31.5L276.3 69.9M283.8 29.1L283.8 68.2M374.6 42.7L374.6 78.5M360.2 44.2L360.2 79.7M343.9 44.9L343.9 80.3M326.9 44.9L326.9 80.3M311.0 44.2L311.0 79.8M296.6 42.9L296.6 78.7M385.0 28.8L385.0 68.0M392.9 31.2L392.9 69.7M292.0 27.4L292.0 124.0M378.0 27.4L378.0 124.0M286.8 153.7L383.2 153.7M297.1 171.5L372.9 171.5M298.6 175.3L371.4 175.3M299.9 179.2L370.1 179.2M301.4 183.4L368.6 183.4M303.0 187.6L367.0 187.6M304.5 191.9L365.5 191.9M306.9 198.7L363.1 198.7M309.0 204.6L361.0 204.6M310.8 209.7L359.2 209.7M312.6 214.8L357.4 214.8M314.4 219.9L355.6 219.9M316.3 224.9L353.7 224.9M318.1 230.0L351.9 230.0M319.9 235.1L350.1 235.1M321.7 240.2L348.3 240.2M323.2 244.5L346.8 244.5" fill="none" stroke="#5555ff" stroke-width="1"/>
<ellipse cx="271.0" cy="35.5" rx="2.7" ry="3.6" fill="#5555ff"/>
<ellipse cx="271.5" cy="125.7" rx="2.9" ry="1.9" fill="#5555ff"/>
<ellipse cx="271.0" cy="138.9" rx="2.7" ry="1.7" fill="#5555ff"/>
<ellipse cx="399.0" cy="35.5" rx="2.7" ry="3.6" fill="#5555ff"/>
<ellipse cx="398.5" cy="125.7" rx="2.9" ry="1.9" fill="#5555ff"/>
<ellipse cx="399.0" cy="138.9" rx="2.7" ry="1.7" fill="#5555ff"/>
<path d="M367.0 137.6L396.9 208.8M302.6 137.6L272.7 208.8" fill="none" stroke="#aa5500" stroke-width="1" stroke-dasharray="1.5 1.5"/>
</g>
<clipPath id="c3"><rect x="225" y="259" width="222" height="202"/></clipPath><g clip-path="url(#c3)">
<path fill="url(#p6)" d="M0 0m310 347h1v1h-1zm-4 9h1v1h-1zm62 3h1v1h-1zm-6 19h2v1h-2zm-9 3h1v1h-1z"/>
<path fill="url(#p7)" d="M0 0m328 320h2v1h-2zm34 23h2v1h-2zm-51 4h1v1h-1zm-4 9h1v1h-1zm-4 1h1v1h-1zm66 2h1v1h-1zm-66 10h1v1h-1zm7 1h2v1h-2zm42 11h1v1h-1z"/>
<path fill="url(#p8)" d="M0 0m316 325h2v1h-2zm8 1h2v1h-2zm28 0h2v1h-2zm-42 3h2v1h-2zm2 2h2v1h-2zm54 15h1v1h-1zm-65 6h1v1h-1zm67 0h2v1h-2zm-66 5h1v1h-1zm6 5h2v1h-2zm54 6h2v1h-2zm-60 1h1v1h-1zm49 7h1v1h-1zm-31 4h2v1h-2zm34 1h2v1h-2zm-28 6h2v1h-2z"/>
<path fill="url(#p9)" d="M0 0m338 319h2v1h-2zm18 4h1v1h-1zm-8 1h2v1h-2zm0 4h2v1h-2zm-36 2h2v1h-2zm48 0h2v1h-2zm4 4h1v1h-1zm2 3h2v1h-2zm-6 2h2v1h-2zm2 1h2v1h-2zm5 6h1v1h-1zm3 0h1v1h-1zm-6 2h2v1h-2zm-54 1h1v1h-1zm53 0h1v1h-1zm3 2h2v2h-2zm-66 1h1v1h-1zm70 5h2v1h-2zm-2 7h2v1h-2zm-66 2h2v1h-2zm6 10h2v1h-2zm52 2h1v1h-1zm-16 5h2v1h-2zm8 0h2v1h-2zm-5 1h1v1h-1zm-23 1h2v1h-2zm30 1h2v1h-2zm-8 1h2v1h-2zm-25 2h1v1h-1zm27 1h2v1h-2z"/>
<path fill="url(#p10)" d="M0 0m339 271h1v1h-1zm0 3h1v2h-1zm14 1h1v1h-1zm-16 2h1v1h-1zm-20 1h1v1h-1zm38 0h1v1h-1zm16 4h1v1h-1zm4 2h1v1h-1zm6 6h1v1h-1zm10 11h1v1h-1zm-121 8h1v1h-1zm131 2h1v1h-1zm-127 1h1v1h-1zm-6 2h1v1h-1zm6 0h1v1h-1zm62 3h1v1h-1zm-4 1h2v1h-2zm71 0h1v1h-1zm-81 4h2v1h-2zm35 1h1v1h-1zm-5 1h2v1h-2zm-34 1h2v1h-2zm22 3h2v1h-2zm18 0h1v1h-1zm47 0h1v1h-1zm-57 1h2v1h-2zm6 0h2v1h-2zm8 0h2v1h-2zm47 0h1v1h-1zm-95 1h2v1h-2zm38 0h2v1h-2zm-89 1h1v1h-1zm91 1h2v1h-2zm6 0h2v1h-2zm46 0h1v2h-1zm-41 2h1v1h-1zm-1 1h2v1h-2zm-103 1h1v1h-1zm97 0h2v1h-2zm-50 1h2v1h-2zm56 0h1v1h-1zm-59 1h1v1h-1zm53 0h2v1h-2zm6 0h2v1h-2zm6 1h1v1h-1zm40 0h1v1h-1zm-44 1h2v1h-2zm42 2h1v1h-1zm-98 1h2v1h-2zm54 0h2v1h-2zm-58 1h2v1h-2zm56 0h2v1h-2zm6 0h3v1h-3zm-66 1h2v1h-2zm111 0h1v1h-1zm-42 1h1v1h-1zm-3 1h1v1h-1zm43 0h1v1h-1zm-149 2h1v1h-1zm46 0h2v1h-2zm54 0h1v1h-1zm-58 1h2v1h-2zm1 2h1v1h-1zm5 1h1v1h-1zm56 1h2v1h-2zm-60 1h2v1h-2zm60 3h2v1h-2zm-61 3h1v1h-1zm59 3h2v1h-2zm2 2h2v1h-2zm-105 2h1v1h-1zm103 0h1v1h-1zm-4 5h2v1h-2zm-52 2h2v1h-2zm8 0h2v1h-2zm-54 1h1v1h-1zm94 0h2v1h-2zm-45 1h1v1h-1zm9 1h1v1h-1zm41 0h1v1h-1zm-45 1h2v1h-2zm-4 1h2v1h-2zm44 0h2v1h-2zm-34 2h2v1h-2zm4 1h1v1h-1zm14 0h2v1h-2zm-6 1h2v1h-2zm12 0h1v1h-1zm2 0h2v1h-2zm-32 1h4v1h-4zm14 1h2v1h-2zm-8 2h4v1h-4zm26 0h2v1h-2zm-28 1h1v1h-1zm7 2h1v1h-1zm-57 1h1v1h-1zm4 9h1v1h-1zm2 2h1v2h-1zm120 5h1v1h-1zm-113 2h1v1h-1zm102 4h1v1h-1zm-99 1h1v1h-1zm95 2h1v2h-1zm-84 3h1v1h-1zm3 7h1v1h-1zm67 0h1v1h-1zm-63 3h1v1h-1zm9 0h1v1h-1zm5 1h1v1h-1zm23 2h1v1h-1zm8 1h1v1h-1zm-28 1h1v1h-1zm26 2h1v1h-1z"/>
<path fill="url(#p11)" d="M0 0m337 317h1v1h-1zm5 0h2v2h-2zm-12 1h2v1h-2zm-8 3h2v1h-2zm20 0h4v1h-4zm10 0h1v1h-1zm-18 1h2v1h-2zm-14 1h4v1h-4zm18 0h2v1h-2zm22 2h1v1h-1zm-45 1h1v1h-1zm25 0h2v1h-2zm14 0h2v1h-2zm-30 1h2v2h-2zm19 0h1v1h-1zm-32 1h1v1h-1zm7 0h2v1h-2zm41 0h1v1h-1zm-50 1h1v1h-1zm7 0h2v1h-2zm34 1h2v1h-2zm15 7h1v1h-1zm3 0h1v1h-1zm-64 1h1v1h-1zm3 0h1v1h-1zm59 0h2v1h-2zm-7 1h1v1h-1zm-56 1h3v1h-3zm9 0h1v2h-1zm-4 1h2v1h-2zm-7 1h1v1h-1zm69 1h1v1h-1zm-11 1h1v1h-1zm12 0h1v1h-1zm-65 1h4v1h-4zm60 0h2v1h-2zm-58 1h2v1h-2zm61 1h1v1h-1zm-8 1h1v1h-1zm-50 1h1v1h-1zm-3 2h2v1h-2zm-4 1h1v1h-1zm2 0h2v1h-2zm4 2h1v1h-1zm54 1h2v1h-2zm-1 1h1v1h-1zm-62 1h1v1h-1zm2 1h3v1h-3zm59 1h2v1h-2zm-56 1h2v1h-2zm60 0h1v1h-1zm-62 1h1v1h-1zm56 0h1v1h-1zm2 0h2v1h-2zm6 0h2v1h-2zm-64 1h2v1h-2zm6 1h1v1h-1zm-7 1h1v1h-1zm5 4h1v1h-1zm51 0h1v1h-1zm6 0h1v1h-1zm-3 2h2v1h-2zm-48 3h2v1h-2zm36 3h1v1h-1zm-40 1h1v1h-1zm11 1h1v1h-1zm30 0h1v1h-1zm1 1h2v1h-2zm6 0h2v1h-2zm-36 1h2v1h-2zm40 0h1v1h-1zm-49 1h3v1h-3zm7 0h2v1h-2zm7 2h1v1h-1zm7 0h1v1h-1zm-18 1h2v1h-2zm3 0h1v1h-1zm3 0h2v1h-2zm4 0h2v1h-2zm18 0h2v1h-2zm-12 1h2v1h-2zm18 0h2v1h-2zm8 0h1v1h-1zm-33 1h1v1h-1zm-10 1h1v1h-1zm15 0h2v1h-2zm12 0h1v1h-1zm-10 1h2v1h-2zm24 0h1v1h-1zm-14 1h2v1h-2zm-16 2h1v1h-1zm8 0h2v1h-2zm6 0h2v1h-2zm-12 1h2v1h-2z"/>
<path fill="url(#p12)" d="M0 0m332 315h2v3h-2zm2 3h2v1h-2zm-2 1h4v1h-4zm12 1h2v1h-2zm9 1h1v1h-1zm-11 1h2v1h-2zm12 0h1v1h-1zm-20 1h2v2h-2zm-19 1h1v1h-1zm27 0h2v1h-2zm-28 1h2v1h-2zm8 0h2v1h-2zm22 0h2v1h-2zm14 0h2v1h-2zm-44 1h1v1h-1zm12 0h2v1h-2zm4 1h2v1h-2zm12 0h1v1h-1zm10 0h4v1h-4zm-42 1h1v1h-1zm-2 1h1v1h-1zm42 0h2v1h-2zm-34 1h2v1h-2zm40 0h2v1h-2zm2 1h2v1h-2zm-40 1h2v1h-2zm34 1h2v1h-2zm-36 2h1v1h-1zm-4 1h3v1h-3zm57 1h1v1h-1zm-63 1h1v1h-1zm6 1h2v1h-2zm46 0h1v1h-1zm-56 1h1v1h-1zm11 0h1v1h-1zm53 2h2v2h-2zm-64 1h2v1h-2zm10 0h1v1h-1zm59 0h1v1h-1zm-6 3h1v1h-1zm-3 1h2v1h-2zm-52 1h1v1h-1zm60 0h1v1h-1zm-66 1h2v1h-2zm2 1h2v1h-2zm4 0h1v1h-1zm1 3h1v1h-1zm57 0h2v1h-2zm-66 1h2v1h-2zm8 1h1v1h-1zm60 0h2v1h-2zm-66 1h2v1h-2zm58 0h1v1h-1zm-62 1h1v1h-1zm2 1h1v1h-1zm68 0h1v1h-1zm0 1h3v1h-3zm-8 1h2v1h-2zm5 0h1v1h-1zm-56 3h1v1h-1zm55 0h1v1h-1zm-64 1h1v1h-1zm8 0h1v1h-1zm-5 2h1v1h-1zm-4 1h1v1h-1zm3 0h2v1h-2zm4 0h2v1h-2zm54 0h2v1h-2zm-53 1h1v1h-1zm1 1h2v1h-2zm47 0h1v1h-1zm5 0h2v1h-2zm6 1h1v2h-1zm-9 1h1v1h-1zm-43 1h1v1h-1zm44 0h2v1h-2zm4 0h2v2h-2zm-56 1h2v1h-2zm47 0h1v1h-1zm-45 1h2v1h-2zm56 0h1v1h-1zm-6 2h2v2h-2zm-44 1h4v1h-4zm-4 1h2v1h-2zm38 0h1v1h-1zm6 0h2v2h-2zm-42 1h2v1h-2zm6 0h1v1h-1zm43 1h1v1h-1zm-51 1h1v1h-1zm10 0h2v1h-2zm42 0h1v1h-1zm-44 1h2v1h-2zm8 0h2v1h-2zm12 0h2v1h-2zm-25 1h1v1h-1zm20 0h1v1h-1zm15 0h2v1h-2zm-32 1h1v1h-1zm12 0h2v1h-2zm-4 1h2v1h-2zm12 0h2v1h-2zm6 0h2v1h-2zm15 0h1v1h-1zm-39 1h2v1h-2zm4 0h1v1h-1zm4 0h2v1h-2zm24 0h2v1h-2zm-14 1h2v1h-2zm5 0h1v1h-1zm5 0h2v1h-2zm-22 1h2v1h-2zm-2 1h2v1h-2zm2 1h2v1h-2zm16 1h2v1h-2zm-12 1h2v1h-2zm10 0h2v1h-2zm-7 2h1v1h-1z"/>
<path fill="url(#p13)" d="M0 0m328 316h2v1h-2zm0 2h2v1h-2zm-2 1h4v1h-4zm24 0h1v2h-1zm-24 1h2v1h-2zm4 1h2v1h-2zm4 0h2v1h-2zm4 0h2v1h-2zm-19 1h1v1h-1zm7 0h2v2h-2zm29 0h1v1h-1zm-39 1h2v2h-2zm24 0h2v1h-2zm-26 1h1v1h-1zm-2 1h2v1h-2zm18 0h2v1h-2zm8 0h2v1h-2zm18 0h1v1h-1zm5 0h1v1h-1zm-41 1h2v1h-2zm27 2h1v1h-1zm-33 1h2v1h-2zm4 0h2v1h-2zm-8 1h2v1h-2zm12 0h2v1h-2zm25 0h1v1h-1zm2 0h1v1h-1zm-42 1h1v1h-1zm53 0h1v1h-1zm-44 1h2v1h-2zm2 1h1v2h-1zm39 0h1v1h-1zm5 1h1v1h-1zm-45 1h1v1h-1zm38 0h1v1h-1zm-50 1h1v1h-1zm10 0h2v1h-2zm-1 1h1v1h-1zm-9 2h1v1h-1zm9 0h1v1h-1zm54 0h1v1h-1zm-62 2h2v1h-2zm7 0h1v1h-1zm-3 1h2v1h-2zm52 0h2v1h-2zm-56 1h2v1h-2zm62 0h2v1h-2zm-7 2h1v1h-1zm7 0h2v1h-2zm-64 1h2v2h-2zm60 0h1v1h-1zm-63 1h1v1h-1zm63 0h2v1h-2zm-58 1h2v1h-2zm54 0h1v1h-1zm6 0h2v1h-2zm5 0h1v1h-1zm-60 2h1v1h-1zm51 0h2v1h-2zm1 1h1v2h-1zm5 0h4v1h-4zm-66 1h2v1h-2zm59 0h1v1h-1zm-62 1h1v1h-1zm2 0h1v1h-1zm65 0h2v1h-2zm-55 1h1v1h-1zm53 0h2v1h-2zm2 1h2v1h-2zm-2 2h2v1h-2zm-63 1h1v1h-1zm5 0h2v1h-2zm65 0h1v1h-1zm-68 1h1v1h-1zm8 1h1v1h-1zm53 0h2v1h-2zm4 0h2v1h-2zm2 2h1v1h-1zm-3 1h1v1h-1zm-56 1h1v1h-1zm51 0h2v1h-2zm4 0h2v1h-2zm-62 2h1v1h-1zm-1 1h1v1h-1zm63 0h1v1h-1zm-54 1h1v2h-1zm46 0h1v1h-1zm2 1h2v1h-2zm9 1h1v2h-1zm-57 1h2v1h-2zm46 0h1v1h-1zm8 0h2v1h-2zm-49 1h1v1h-1zm40 0h1v1h-1zm-47 1h2v1h-2zm44 0h1v1h-1zm13 1h1v1h-1zm-60 1h1v1h-1zm49 0h2v1h-2zm-42 1h2v1h-2zm42 1h2v1h-2zm-49 1h1v2h-1zm11 0h2v1h-2zm36 0h2v1h-2zm4 0h2v1h-2zm-49 1h1v1h-1zm9 0h1v1h-1zm3 0h1v1h-1zm-3 1h2v1h-2zm-8 1h2v1h-2zm16 0h1v1h-1zm2 0h1v1h-1zm32 0h1v1h-1zm-34 1h2v1h-2zm4 0h2v1h-2zm18 0h2v2h-2zm4 0h2v1h-2zm-38 1h1v1h-1zm4 0h2v1h-2zm6 1h2v1h-2zm22 1h2v1h-2zm-29 1h1v2h-1zm9 0h2v1h-2zm6 0h4v1h-4zm-18 1h1v1h-1zm9 0h1v1h-1zm11 2h2v1h-2zm16 0h2v1h-2zm-22 1h4v1h-4zm10 1h2v1h-2zm-12 1h2v2h-2zm8 0h6v1h-6zm6 1h2v1h-2zm-8 1h1v1h-1z"/>
<path fill="url(#p14)" d="M0 0m342 315h1v1h-1zm-4 1h2v1h-2zm6 0h2v1h-2zm-15 1h1v1h-1zm11 0h2v1h-2zm-19 1h1v1h-1zm23 0h1v1h-1zm-8 1h2v1h-2zm12 0h2v1h-2zm3 0h1v2h-1zm-21 1h2v1h-2zm8 0h2v1h-2zm8 0h2v1h-2zm10 1h1v1h-1zm-38 1h1v1h-1zm18 0h2v1h-2zm-6 1h2v1h-2zm-12 1h4v1h-4zm6 0h2v1h-2zm6 0h1v1h-1zm14 0h4v1h-4zm16 0h1v1h-1zm-24 1h2v1h-2zm18 0h2v1h-2zm3 0h1v1h-1zm-25 1h1v1h-1zm6 0h2v1h-2zm4 0h2v1h-2zm-26 1h4v1h-4zm24 0h2v1h-2zm6 0h4v1h-4zm14 0h2v1h-2zm-47 1h1v1h-1zm33 0h1v1h-1zm-34 1h2v1h-2zm12 0h1v1h-1zm4 0h1v1h-1zm32 0h2v1h-2zm4 0h1v1h-1zm-56 1h2v1h-2zm10 0h2v1h-2zm8 0h1v1h-1zm19 0h2v1h-2zm3 0h1v1h-1zm7 0h1v1h-1zm-49 1h1v1h-1zm41 0h1v1h-1zm7 0h2v1h-2zm7 0h1v1h-1zm-49 2h2v2h-2zm7 0h1v3h-1zm37 0h1v1h-1zm2 0h2v1h-2zm8 0h1v1h-1zm-50 1h2v1h-2zm47 0h1v1h-1zm-9 1h1v1h-1zm4 0h2v1h-2zm-54 1h1v1h-1zm13 0h1v1h-1zm-2 1h1v1h-1zm-11 2h1v1h-1zm11 0h1v1h-1zm49 0h2v1h-2zm5 0h1v1h-1zm-68 1h1v1h-1zm58 0h1v2h-1zm-49 1h2v1h-2zm-10 1h1v1h-1zm13 1h1v1h-1zm59 2h1v2h-1zm-73 1h1v1h-1zm1 1h1v1h-1zm60 0h1v1h-1zm-49 1h1v1h-1zm-9 1h2v1h-2zm6 1h2v1h-2zm-9 1h1v1h-1zm63 0h1v2h-1zm-54 1h2v1h-2zm62 0h1v1h-1zm2 0h1v1h-1zm-72 1h1v1h-1zm-1 1h1v1h-1zm5 0h2v1h-2zm-3 1h1v1h-1zm7 0h2v1h-2zm3 0h1v1h-1zm61 0h1v1h-1zm-72 1h2v1h-2zm10 0h1v1h-1zm51 0h1v1h-1zm-53 1h1v1h-1zm-8 1h1v1h-1zm8 0h2v1h-2zm-6 1h1v1h-1zm71 0h1v1h-1zm-65 1h2v2h-2zm-7 1h1v1h-1zm63 0h2v1h-2zm-3 1h1v1h-1zm10 0h1v1h-1zm-65 2h1v1h-1zm-5 1h1v1h-1zm9 0h1v1h-1zm51 0h1v2h-1zm-51 1h2v1h-2zm-10 1h1v1h-1zm2 0h1v1h-1zm65 0h2v1h-2zm-54 1h1v2h-1zm53 0h2v1h-2zm4 0h1v1h-1zm-62 1h2v1h-2zm-7 1h1v1h-1zm13 0h1v1h-1zm50 1h1v1h-1zm-54 1h2v1h-2zm46 0h1v1h-1zm1 1h1v1h-1zm5 0h1v1h-1zm-54 1h2v1h-2zm-2 1h1v1h-1zm14 0h1v1h-1zm38 1h2v1h-2zm8 0h1v1h-1zm-60 2h1v1h-1zm10 0h1v1h-1zm-8 1h1v1h-1zm11 0h1v1h-1zm6 0h1v1h-1zm33 1h4v1h-4zm-34 1h2v2h-2zm3 0h1v1h-1zm2 0h5v1h-5zm7 0h2v1h-2zm25 0h1v1h-1zm-45 1h4v1h-4zm16 0h2v1h-2zm6 0h2v1h-2zm-16 1h2v1h-2zm38 0h1v1h-1zm-18 1h2v1h-2zm12 0h2v1h-2zm-41 1h1v1h-1zm15 0h2v1h-2zm-12 1h1v2h-1zm32 0h2v1h-2zm-28 1h3v1h-3zm34 0h2v2h-2zm3 1h1v1h-1zm-34 1h1v1h-1zm2 1h1v1h-1zm19 0h2v2h-2zm8 0h1v1h-1zm-24 1h4v1h-4zm8 0h2v1h-2zm-12 1h2v1h-2z"/>
<path fill="url(#p15)" d="M0 0m330 272h1v1h-1zm-8 2h1v1h-1zm7 1h1v1h-1zm-4 1h1v1h-1zm-17 1h1v1h-1zm51 0h1v1h-1zm-46 1h1v1h-1zm45 2h1v1h-1zm-53 3h1v1h-1zm-7 1h1v1h-1zm83 4h1v1h-1zm3 8h1v1h-1zm-109 6h1v1h-1zm120 5h1v1h-1zm-120 3h1v1h-1zm-1 1h2v1h-2zm-6 4h1v1h-1zm70 0h2v1h-2zm5 0h2v1h-2zm-21 2h2v1h-2zm6 0h1v1h-1zm2 0h2v1h-2zm71 0h1v1h-1zm-81 1h1v1h-1zm5 0h1v1h-1zm20 0h1v1h-1zm-24 2h3v1h-3zm4 0h1v1h-1zm-8 1h3v1h-3zm11 0h2v2h-2zm8 0h2v1h-2zm4 0h2v1h-2zm6 0h2v1h-2zm2 1h2v1h-2zm-37 2h1v1h-1zm17 0h2v1h-2zm3 0h3v1h-3zm7 0h2v1h-2zm18 0h1v1h-1zm-22 1h2v1h-2zm-23 1h1v1h-1zm22 0h1v1h-1zm3 0h2v1h-2zm8 0h2v1h-2zm4 0h2v1h-2zm-83 1h1v1h-1zm55 0h2v1h-2zm30 0h2v1h-2zm59 0h1v1h-1zm-142 1h1v1h-1zm45 0h1v1h-1zm2 0h4v1h-4zm14 0h2v1h-2zm6 0h2v1h-2zm-27 1h1v1h-1zm18 0h1v2h-1zm4 0h1v1h-1zm14 0h1v1h-1zm13 0h2v1h-2zm-2 1h1v1h-1zm8 0h1v1h-1zm4 0h1v1h-1zm-2 1h2v1h-2zm-44 1h1v1h-1zm36 0h2v1h-2zm6 0h2v1h-2zm5 0h1v2h-1zm-62 1h1v1h-1zm46 0h1v2h-1zm-44 1h1v1h-1zm49 0h4v1h-4zm10 0h1v1h-1zm-52 1h2v1h-2zm48 0h2v1h-2zm45 0h1v1h-1zm-97 1h2v1h-2zm-45 1h1v1h-1zm40 0h1v1h-1zm2 0h1v1h-1zm9 0h1v1h-1zm46 0h2v1h-2zm8 0h1v1h-1zm-14 1h1v1h-1zm-46 1h2v2h-2zm61 0h1v1h-1zm-13 1h1v1h-1zm-94 1h1v1h-1zm36 0h1v1h-1zm8 1h2v1h-2zm53 0h1v1h-1zm11 1h1v1h-1zm-12 2h1v1h-1zm10 2h3v1h-3zm2 1h1v2h-1zm-60 1h1v1h-1zm56 0h2v1h-2zm-7 1h1v2h-1zm9 0h1v1h-1zm39 0h1v1h-1zm-37 1h1v1h-1zm-62 1h1v1h-1zm61 0h1v1h-1zm2 0h1v1h-1zm-75 1h1v1h-1zm6 0h2v1h-2zm57 0h1v1h-1zm9 0h1v2h-1zm-62 1h2v1h-2zm105 0h1v1h-1zm-153 1h1v1h-1zm38 0h1v2h-1zm2 0h1v1h-1zm4 0h2v1h-2zm69 0h1v1h-1zm-7 1h2v1h-2zm4 0h1v1h-1zm-61 1h1v1h-1zm52 0h1v1h-1zm2 0h1v1h-1zm9 0h1v1h-1zm-74 1h1v1h-1zm6 1h2v2h-2zm61 0h1v1h-1zm8 1h1v1h-1zm-73 1h1v1h-1zm70 0h1v1h-1zm2 0h1v2h-1zm-73 1h1v1h-1zm61 0h1v1h-1zm-54 1h2v1h-2zm55 0h1v1h-1zm-54 1h1v1h-1zm-7 1h1v1h-1zm11 0h1v1h-1zm2 0h1v1h-1zm47 0h1v2h-1zm50 0h2v1h-2zm-52 2h1v1h-1zm11 0h1v1h-1zm-68 1h1v1h-1zm5 0h2v1h-2zm65 0h1v1h-1zm-66 2h1v1h-1zm7 0h2v1h-2zm45 0h1v1h-1zm-47 1h2v1h-2zm4 0h1v1h-1zm2 0h1v1h-1zm39 0h1v1h-1zm10 0h1v1h-1zm47 0h1v1h-1zm-103 1h1v1h-1zm3 0h3v1h-3zm4 1h1v1h-1zm40 0h1v1h-1zm7 0h1v1h-1zm-100 1h1v1h-1zm51 0h2v2h-2zm92 0h1v1h-1zm-101 1h1v1h-1zm6 0h1v1h-1zm7 0h1v1h-1zm34 0h1v1h-1zm1 1h1v1h-1zm14 0h1v1h-1zm-55 1h2v1h-2zm5 1h1v1h-1zm49 0h1v1h-1zm-60 1h1v1h-1zm6 0h2v1h-2zm10 0h1v1h-1zm26 0h2v1h-2zm14 0h2v1h-2zm-48 1h2v1h-2zm14 0h1v1h-1zm2 0h1v1h-1zm8 1h4v1h-4zm8 0h2v1h-2zm12 0h2v1h-2zm-24 1h4v1h-4zm8 0h2v2h-2zm-77 1h1v1h-1zm55 0h2v1h-2zm38 0h2v1h-2zm3 0h1v1h-1zm-49 2h1v1h-1zm32 1h2v2h-2zm6 0h2v1h-2zm9 0h1v1h-1zm48 1h1v1h-1zm-73 1h2v1h-2zm12 0h2v1h-2zm-76 1h1v1h-1zm47 0h3v1h-3zm5 0h1v1h-1zm4 0h2v1h-2zm10 0h2v1h-2zm19 0h1v1h-1zm-36 1h1v1h-1zm5 0h1v1h-1zm8 0h2v1h-2zm21 0h1v1h-1zm48 0h1v1h-1zm-80 1h1v1h-1zm29 0h1v2h-1zm-83 3h1v1h-1zm1 2h1v1h-1zm9 5h1v1h-1zm-2 4h1v1h-1zm115 4h1v1h-1zm-100 12h1v1h-1zm13 5h1v1h-1zm-5 1h1v1h-1zm7 0h1v1h-1zm3 1h1v1h-1zm49 5h1v1h-1zm-9 4h1v1h-1z"/>
<path fill="url(#p16)" d="M0 0m336 314h2v1h-2zm-8 1h2v1h-2zm17 0h1v1h-1zm-21 1h4v1h-4zm12 0h2v1h-2zm6 0h2v1h-2zm-21 1h1v1h-1zm23 0h1v1h-1zm6 0h1v1h-1zm-26 1h1v1h-1zm28 0h1v1h-1zm-34 1h1v1h-1zm34 0h2v1h-2zm-32 1h1v1h-1zm4 0h1v1h-1zm32 0h1v1h-1zm-41 1h2v1h-2zm17 0h2v1h-2zm25 0h1v1h-1zm-32 1h1v1h-1zm33 0h1v1h-1zm-46 1h1v1h-1zm40 0h1v1h-1zm5 1h1v1h-1zm4 0h1v1h-1zm-21 1h2v1h-2zm10 0h2v1h-2zm-41 1h2v1h-2zm37 0h2v1h-2zm-37 1h1v1h-1zm3 0h2v1h-2zm44 0h2v1h-2zm-49 1h1v1h-1zm23 0h2v1h-2zm34 0h1v1h-1zm-37 1h1v2h-1zm15 0h1v1h-1zm10 0h2v1h-2zm13 0h1v1h-1zm-21 1h1v1h-1zm19 0h3v1h-3zm-40 1h2v1h-2zm23 0h1v1h-1zm6 0h2v1h-2zm-31 1h2v1h-2zm37 0h2v1h-2zm-54 1h1v1h-1zm46 0h1v1h-1zm10 0h5v1h-5zm-57 1h4v1h-4zm50 0h1v1h-1zm14 0h2v1h-2zm-57 1h2v1h-2zm58 0h1v1h-1zm-60 1h2v1h-2zm-4 1h1v1h-1zm2 0h1v1h-1zm6 0h2v1h-2zm5 0h1v1h-1zm38 0h1v1h-1zm2 0h1v1h-1zm-56 1h1v1h-1zm69 0h1v1h-1zm-13 1h1v2h-1zm3 1h2v1h-2zm4 0h2v1h-2zm7 0h1v1h-1zm-68 1h1v1h-1zm55 0h1v1h-1zm4 0h2v1h-2zm-2 1h1v1h-1zm4 0h2v1h-2zm-63 1h1v1h-1zm3 0h2v1h-2zm54 0h1v2h-1zm-59 2h1v1h-1zm13 0h1v1h-1zm58 0h1v1h-1zm-60 1h1v1h-1zm51 0h1v1h-1zm7 0h2v1h-2zm5 0h1v4h-1zm-74 1h1v1h-1zm13 1h1v1h-1zm-14 1h1v1h-1zm63 0h1v1h-1zm10 1h1v1h-1zm-73 1h1v1h-1zm3 0h1v1h-1zm10 0h1v1h-1zm62 0h1v1h-1zm-10 2h1v2h-1zm8 0h1v2h-1zm3 0h1v1h-1zm-76 1h1v1h-1zm63 0h1v1h-1zm7 0h2v1h-2zm-66 1h2v1h-2zm9 1h1v1h-1zm60 0h1v1h-1zm-72 1h1v1h-1zm11 0h1v1h-1zm52 0h1v1h-1zm11 0h1v1h-1zm-63 2h1v1h-1zm54 0h1v1h-1zm7 2h1v1h-1zm2 0h1v2h-1zm-71 1h2v1h-2zm58 1h1v1h-1zm10 0h1v1h-1zm-58 1h1v1h-1zm-6 1h2v1h-2zm6 1h1v1h-1zm-12 2h1v1h-1zm14 0h1v1h-1zm43 0h1v1h-1zm-56 1h1v1h-1zm3 0h2v1h-2zm52 0h1v3h-1zm-52 1h1v1h-1zm11 0h1v3h-1zm-14 1h1v1h-1zm59 0h2v1h-2zm10 0h1v2h-1zm-68 1h1v1h-1zm6 0h1v1h-1zm47 0h1v1h-1zm-50 1h1v1h-1zm12 0h1v1h-1zm1 1h1v1h-1zm50 0h1v1h-1zm-65 1h2v1h-2zm7 0h1v1h-1zm9 0h1v1h-1zm36 0h1v1h-1zm4 0h1v1h-1zm-41 1h1v1h-1zm2 0h1v1h-1zm2 0h1v3h-1zm30 0h1v1h-1zm10 0h2v1h-2zm6 0h1v1h-1zm-10 1h2v1h-2zm6 0h1v1h-1zm-59 1h1v1h-1zm19 0h1v1h-1zm23 0h1v1h-1zm5 0h2v1h-2zm-29 1h1v1h-1zm23 0h2v1h-2zm-17 1h1v1h-1zm2 0h1v1h-1zm13 0h1v1h-1zm8 0h2v1h-2zm-45 1h1v1h-1zm58 0h1v1h-1zm-9 3h2v1h-2zm-22 1h2v1h-2zm26 0h1v1h-1zm-4 1h1v1h-1zm-43 1h1v1h-1zm2 1h1v1h-1zm4 0h1v1h-1zm33 0h2v1h-2zm-36 1h1v1h-1zm24 0h2v1h-2zm4 0h2v1h-2zm4 0h2v1h-2zm-30 1h1v1h-1zm36 0h1v1h-1zm-35 1h2v1h-2zm32 0h2v1h-2zm-28 1h1v1h-1zm10 0h1v1h-1zm11 0h1v1h-1zm4 0h2v1h-2zm3 0h1v1h-1zm-19 1h2v1h-2zm-5 1h1v1h-1zm2 0h1v1h-1zm15 0h1v1h-1z"/>
<path fill="url(#p17)" d="M0 0m329 304h2v2h-2zm13 0h2v1h-2zm0 1h1v2h-1zm-12 1h1v1h-1zm-12 1h1v1h-1zm36 0h1v2h-1zm-37 1h2v1h-2zm1 1h1v1h-1zm-11 5h1v2h-1zm22 0h3v1h-3zm5 0h2v1h-2zm4 0h2v1h-2zm4 0h1v1h-1zm22 0h2v2h-2zm-39 1h3v1h-3zm5 0h2v1h-2zm16 0h1v1h-1zm-23 1h1v1h-1zm25 0h2v1h-2zm-28 1h1v1h-1zm7 0h1v1h-1zm11 0h2v1h-2zm7 0h1v1h-1zm6 0h1v1h-1zm-33 1h2v1h-2zm28 0h2v1h-2zm4 0h2v1h-2zm3 0h1v1h-1zm-36 1h1v1h-1zm3 0h2v1h-2zm35 0h1v1h-1zm-40 1h2v1h-2zm33 0h1v1h-1zm6 0h2v1h-2zm-40 1h1v1h-1zm44 0h1v1h-1zm-45 1h1v1h-1zm11 0h1v1h-1zm35 0h1v1h-1zm-61 1h1v1h-1zm13 0h1v1h-1zm3 0h2v1h-2zm39 0h1v1h-1zm5 0h3v1h-3zm15 0h2v2h-2zm-75 1h2v1h-2zm12 0h1v1h-1zm2 0h2v1h-2zm-3 1h1v1h-1zm53 0h1v1h-1zm-54 1h1v2h-1zm4 0h2v1h-2zm18 0h2v1h-2zm32 0h2v1h-2zm2 1h1v1h-1zm-56 1h2v1h-2zm28 0h2v1h-2zm9 0h1v1h-1zm20 0h1v1h-1zm-59 1h1v1h-1zm35 0h1v1h-1zm3 0h1v1h-1zm22 0h1v1h-1zm-61 1h3v1h-3zm0 1h1v1h-1zm20 0h1v1h-1zm23 0h1v1h-1zm14 0h2v1h-2zm5 0h1v1h-1zm-63 1h1v1h-1zm5 0h1v1h-1zm14 0h1v1h-1zm26 0h1v1h-1zm2 0h1v1h-1zm17 0h1v1h-1zm-65 1h1v1h-1zm3 0h2v1h-2zm15 0h1v1h-1zm44 0h1v1h-1zm-73 1h1v1h-1zm22 0h2v1h-2zm6 0h1v1h-1zm32 0h1v1h-1zm3 0h1v1h-1zm14 0h1v2h-1zm-77 1h2v2h-2zm10 0h2v1h-2zm77 0h2v2h-2zm-77 1h1v1h-1zm4 0h2v1h-2zm64 0h1v1h-1zm-69 1h2v1h-2zm55 0h1v1h-1zm-54 1h2v1h-2zm53 0h1v1h-1zm16 0h1v1h-1zm-71 2h1v1h-1zm7 0h1v1h-1zm-5 1h1v1h-1zm2 0h2v1h-2zm68 0h1v2h-1zm-73 1h1v1h-1zm15 0h1v1h-1zm43 0h2v1h-2zm-58 1h2v1h-2zm0 1h1v1h-1zm13 0h1v1h-1zm61 0h1v2h-1zm-14 1h1v1h-1zm12 0h1v1h-1zm-59 1h1v2h-1zm47 0h2v1h-2zm-70 1h1v1h-1zm9 0h1v1h-1zm85 0h1v1h-1zm-95 1h3v1h-3zm10 0h2v1h-2zm84 0h2v1h-2zm-8 1h1v4h-1zm-62 1h1v1h-1zm-12 1h1v1h-1zm11 1h1v1h-1zm49 0h1v1h-1zm2 1h1v2h-1zm-1 2h1v1h-1zm2 0h1v1h-1zm11 0h1v6h-1zm-2 1h1v1h-1zm-74 1h1v1h-1zm13 0h1v1h-1zm57 0h2v1h-2zm-58 1h1v1h-1zm54 0h2v1h-2zm-66 1h1v1h-1zm14 0h1v1h-1zm49 0h1v1h-1zm-60 1h1v1h-1zm59 0h1v1h-1zm-72 1h3v1h-3zm22 0h1v2h-1zm72 0h2v1h-2zm-93 1h1v1h-1zm9 0h1v1h-1zm85 0h1v1h-1zm-84 1h1v5h-1zm2 0h1v1h-1zm3 0h2v1h-2zm67 0h1v1h-1zm1 1h2v2h-2zm0 2h1v3h-1zm-72 3h1v1h-1zm14 0h1v1h-1zm57 0h1v1h-1zm-68 1h1v1h-1zm52 0h1v1h-1zm-47 1h2v1h-2zm63 0h1v1h-1zm-70 1h1v1h-1zm57 0h2v1h-2zm-66 1h2v2h-2zm10 0h1v2h-1zm2 0h1v1h-1zm66 0h1v1h-1zm9 0h2v2h-2zm-72 1h1v1h-1zm12 0h1v1h-1zm50 0h1v2h-1zm-77 1h1v1h-1zm29 0h1v2h-1zm30 0h1v1h-1zm3 0h1v1h-1zm4 0h1v1h-1zm6 0h2v1h-2zm-61 1h1v1h-1zm16 0h1v1h-1zm-15 1h1v1h-1zm16 0h2v1h-2zm3 0h1v2h-1zm39 0h2v1h-2zm3 0h1v1h-1zm3 0h1v1h-1zm-59 1h1v1h-1zm58 0h1v1h-1zm-62 1h1v1h-1zm23 0h1v1h-1zm38 0h1v2h-1zm-23 1h1v1h-1zm-35 1h2v1h-2zm54 1h3v1h-3zm-54 1h2v1h-2zm28 0h2v1h-2zm-27 1h1v1h-1zm53 0h1v1h-1zm-64 1h2v1h-2zm12 0h2v1h-2zm32 0h2v1h-2zm14 0h1v1h-1zm5 0h1v1h-1zm12 0h2v2h-2zm-75 1h1v1h-1zm13 0h1v1h-1zm35 0h2v1h-2zm11 0h1v1h-1zm3 0h1v1h-1zm-42 1h2v1h-2zm16 0h2v1h-2zm22 0h1v1h-1zm-42 1h1v1h-1zm4 0h1v1h-1zm40 0h1v1h-1zm-43 1h1v1h-1zm15 0h2v1h-2zm-13 1h1v1h-1zm3 0h2v1h-2zm22 0h1v1h-1zm13 0h1v1h-1zm-37 1h1v1h-1zm35 0h1v1h-1zm-33 1h1v1h-1zm2 0h1v1h-1zm10 0h1v1h-1zm13 0h1v1h-1zm-22 1h1v1h-1zm7 0h2v2h-2zm4 0h2v1h-2zm14 0h2v1h-2zm-41 1h1v2h-1zm18 0h2v1h-2zm3 0h1v1h-1zm8 0h2v1h-2zm6 0h2v1h-2zm3 0h2v1h-2zm19 0h2v2h-2zm-35 1h2v1h-2zm3 0h2v1h-2zm4 0h4v1h-4zm6 0h1v1h-1zm-24 5h1v1h-1zm-1 1h2v1h-2zm37 0h1v2h-1zm-36 1h1v1h-1zm12 1h1v1h-1zm12 0h1v2h-1zm-13 1h2v2h-2zm13 1h2v1h-2z"/>
<path fill="url(#p18)" d="M0 0m329 301h2v1h-2zm13 0h2v1h-2zm-14 1h5v1h-5zm12 0h4v1h-4zm-13 1h9v1h-9zm10 0h9v1h-9zm-12 1h4v1h-4zm6 0h11v3h-11zm13 0h3v1h-3zm-28 1h13v1h-13zm27 0h13v1h-13zm-27 1h14v1h-14zm27 0h14v1h-14zm-28 1h3v1h-3zm4 0h35v2h-35zm36 0h3v1h-3zm-41 1h3v1h-3zm41 0h4v1h-4zm-42 1h5v1h-5zm6 0h40v1h-40zm-7 1h48v1h-48zm-4 1h56v1h-56zm-3 1h63v2h-63zm-1 2h3v2h-3zm4 0h21v1h-21zm24 0h2v1h-2zm8 0h2v1h-2zm3 0h21v1h-21zm23 0h2v1h-2zm-58 1h17v1h-17zm39 0h17v1h-17zm19 0h3v1h-3zm-63 1h20v1h-20zm43 0h2v1h-2zm4 0h19v1h-19zm-47 1h17v1h-17zm23 0h1v1h-1zm22 0h2v1h-2zm4 0h18v1h-18zm-50 1h16v1h-16zm24 0h2v1h-2zm28 0h16v1h-16zm-53 1h16v1h-16zm53 0h1v1h-1zm2 0h16v1h-16zm-57 1h16v1h-16zm41 0h2v1h-2zm9 0h1v1h-1zm8 0h17v1h-17zm-60 1h17v1h-17zm62 0h17v1h-17zm-63 1h17v1h-17zm36 0h2v1h-2zm24 0h2v1h-2zm4 0h17v1h-17zm-64 1h2v2h-2zm3 0h12v1h-12zm62 0h12v1h-12zm14 0h2v2h-2zm-75 1h10v1h-10zm62 0h11v1h-11zm-67 1h14v1h-14zm15 0h1v1h-1zm38 0h2v1h-2zm15 0h14v1h-14zm-68 1h13v2h-13zm63 0h2v1h-2zm6 0h13v1h-13zm1 1h13v1h-13zm-70 1h12v1h-12zm37 0h2v1h-2zm12 0h1v1h-1zm22 0h12v1h-12zm-71 1h11v1h-11zm27 0h2v1h-2zm16 0h3v1h-3zm29 0h11v1h-11zm-74 1h12v1h-12zm74 0h12v1h-12zm-75 1h13v1h-13zm18 0h2v1h-2zm58 0h12v1h-12zm-77 1h13v1h-13zm17 0h1v1h-1zm39 0h2v1h-2zm3 0h1v1h-1zm19 0h12v1h-12zm-79 1h13v1h-13zm59 0h1v1h-1zm19 0h14v1h-14zm-79 1h3v2h-3zm4 0h10v1h-10zm57 0h1v1h-1zm4 0h1v1h-1zm16 0h14v1h-14zm-76 1h8v2h-8zm26 0h1v1h-1zm50 0h9v1h-9zm11 0h2v2h-2zm-91 1h2v1h-2zm28 0h1v1h-1zm37 0h1v1h-1zm16 0h8v1h-8zm-81 1h11v2h-11zm64 0h1v1h-1zm17 0h12v1h-12zm1 1h11v3h-11zm-82 1h12v1h-12zm26 0h1v2h-1zm40 0h1v2h-1zm-66 1h10v2h-10zm16 0h1v1h-1zm51 1h1v1h-1zm16 0h10v2h-10zm-84 1h10v2h-10zm84 1h11v1h-11zm-85 1h11v2h-11zm84 0h1v1h-1zm2 0h10v1h-10zm-61 1h1v1h-1zm61 0h11v1h-11zm-87 1h12v1h-12zm24 0h1v1h-1zm63 0h12v1h-12zm-88 1h3v1h-3zm4 0h8v1h-8zm69 0h1v1h-1zm15 0h9v1h-9zm10 0h3v2h-3zm-98 1h2v1h-2zm5 0h7v1h-7zm12 0h1v1h-1zm71 0h8v1h-8zm-87 1h11v1h-11zm73 0h1v3h-1zm15 0h11v2h-11zm-88 1h12v1h-12zm0 1h11v1h-11zm88 0h10v3h-10zm-88 1h12v1h-12zm1 1h10v4h-10zm72 0h1v1h-1zm14 1h11v1h-11zm-12 1h1v1h-1zm13 0h10v4h-10zm-67 1h2v1h-2zm52 0h1v2h-1zm13 0h1v1h-1zm-86 1h11v3h-11zm24 1h1v2h-1zm64 1h11v2h-11zm-88 1h14v1h-14zm-1 1h2v1h-2zm5 0h8v1h-8zm83 0h8v1h-8zm10 0h3v2h-3zm-98 1h3v1h-3zm4 0h8v1h-8zm84 0h9v1h-9zm-87 1h12v1h-12zm13 0h1v1h-1zm12 0h1v1h-1zm47 0h1v1h-1zm14 0h13v1h-13zm-85 1h11v2h-11zm20 0h1v1h-1zm5 0h1v1h-1zm61 0h11v1h-11zm0 1h10v1h-10zm-85 1h10v2h-10zm24 0h1v1h-1zm57 0h1v1h-1zm3 0h11v1h-11zm-16 1h1v1h-1zm16 0h10v2h-10zm-83 1h10v2h-10zm25 0h1v1h-1zm57 1h11v1h-11zm-82 1h11v3h-11zm12 0h1v1h-1zm14 0h1v1h-1zm55 0h12v1h-12zm-54 1h1v1h-1zm55 0h11v1h-11zm-54 1h1v1h-1zm36 0h1v1h-1zm12 0h1v1h-1zm2 0h1v1h-1zm3 0h12v1h-12zm-81 1h2v1h-2zm4 0h8v2h-8zm59 0h1v2h-1zm18 0h8v1h-8zm10 0h2v2h-2zm-92 1h3v2h-3zm17 0h1v1h-1zm14 0h1v1h-1zm50 0h9v1h-9zm-77 1h10v1h-10zm75 0h1v1h-1zm2 0h14v1h-14zm-80 1h13v1h-13zm14 0h2v1h-2zm65 0h13v1h-13zm-78 1h13v1h-13zm60 0h1v1h-1zm3 0h2v1h-2zm12 0h2v1h-2zm3 0h12v1h-12zm-77 1h13v1h-13zm16 0h1v1h-1zm17 0h1v1h-1zm21 0h1v1h-1zm3 0h1v1h-1zm19 0h12v1h-12zm-75 1h12v1h-12zm52 0h1v1h-1zm22 0h12v1h-12zm-72 1h11v1h-11zm42 0h1v1h-1zm4 0h2v1h-2zm26 0h11v1h-11zm-72 1h12v1h-12zm39 0h2v1h-2zm28 0h1v1h-1zm4 0h12v1h-12zm-71 1h14v1h-14zm49 0h2v1h-2zm21 0h13v1h-13zm-70 1h13v1h-13zm67 0h15v1h-15zm-67 1h14v1h-14zm68 0h14v1h-14zm-67 1h2v2h-2zm4 0h10v1h-10zm57 0h1v1h-1zm5 0h11v1h-11zm13 0h2v2h-2zm-76 1h12v1h-12zm13 0h1v1h-1zm2 0h2v1h-2zm47 0h12v1h-12zm-65 1h17v1h-17zm61 0h1v1h-1zm2 0h18v1h-18zm-62 1h17v1h-17zm62 0h17v1h-17zm-60 1h16v1h-16zm57 0h18v1h-18zm-55 1h16v1h-16zm42 0h1v1h-1zm13 0h16v1h-16zm-54 1h16v1h-16zm30 0h2v1h-2zm22 0h16v1h-16zm-51 1h17v1h-17zm18 0h1v1h-1zm31 0h18v1h-18zm-49 1h20v1h-20zm21 0h2v1h-2zm12 0h2v1h-2zm10 0h2v1h-2zm4 0h19v1h-19zm-46 1h3v2h-3zm4 0h17v1h-17zm31 0h1v1h-1zm8 0h17v1h-17zm19 0h3v1h-3zm-58 1h21v1h-21zm23 0h1v1h-1zm3 0h2v1h-2zm6 0h2v1h-2zm3 0h21v1h-21zm23 0h2v1h-2zm-61 1h63v2h-63zm3 2h56v1h-56zm4 1h48v1h-48zm1 1h5v1h-5zm6 0h40v1h-40zm-5 1h3v1h-3zm5 0h35v2h-35zm36 0h4v1h-4zm-40 1h3v1h-3zm40 0h3v1h-3zm-39 1h14v1h-14zm15 0h11v3h-11zm12 0h14v1h-14zm-27 1h13v1h-13zm27 0h13v1h-13zm-18 1h4v1h-4zm19 0h3v1h-3zm-17 1h9v1h-9zm10 0h9v1h-9zm-9 1h5v1h-5zm12 0h4v1h-4zm-11 1h2v1h-2zm13 0h2v1h-2z"/>
<path fill="url(#p19)" d="M0 0m328 297h3v1h-3zm14 0h2v1h-2zm-15 1h5v1h-5zm13 0h5v1h-5zm-14 1h7v1h-7zm13 0h7v1h-7zm-13 1h9v1h-9zm12 0h9v1h-9zm-23 1h3v1h-3zm10 0h4v1h-4zm6 0h5v1h-5zm6 0h5v1h-5zm7 0h4v2h-4zm10 0h4v1h-4zm-40 1h7v1h-7zm10 0h4v1h-4zm9 0h7v1h-7zm19 0h7v1h-7zm-38 1h13v1h-13zm22 0h1v1h-1zm10 0h13v1h-13zm-33 1h12v1h-12zm34 0h12v1h-12zm-34 1h3v1h-3zm43 0h4v1h-4zm-44 1h4v1h-4zm45 0h3v1h-3zm-45 1h3v1h-3zm46 0h3v1h-3zm-55 1h5v1h-5zm9 0h2v1h-2zm47 0h2v1h-2zm6 0h4v1h-4zm-63 1h11v1h-11zm57 0h11v1h-11zm-57 1h10v1h-10zm58 0h11v1h-11zm-58 1h6v1h-6zm62 0h7v1h-7zm-62 1h3v2h-3zm66 0h3v3h-3zm-67 2h3v2h-3zm35 1h2v1h-2zm33 0h2v2h-2zm-68 1h2v1h-2zm33 0h2v1h-2zm-34 1h3v1h-3zm70 0h2v1h-2zm-76 1h8v1h-8zm76 0h8v1h-8zm-77 1h8v1h-8zm79 0h8v1h-8zm-79 1h6v1h-6zm81 0h6v1h-6zm-82 1h5v1h-5zm84 0h4v1h-4zm-84 1h4v1h-4zm85 0h3v5h-3zm-84 1h3v2h-3zm65 1h1v1h-1zm-65 1h2v4h-2zm57 1h2v1h-2zm28 1h2v2h-2zm-87 2h4v1h-4zm87 0h4v1h-4zm-89 1h4v1h-4zm54 0h1v1h-1zm36 0h5v1h-5zm-92 1h5v1h-5zm39 0h1v1h-1zm54 0h6v1h-6zm-94 1h5v1h-5zm95 0h6v1h-6zm-95 1h4v1h-4zm96 0h5v1h-5zm-96 1h3v2h-3zm35 0h1v1h-1zm63 0h3v1h-3zm-77 1h1v1h-1zm46 0h1v1h-1zm30 0h4v1h-4zm-97 1h4v1h-4zm33 0h1v1h-1zm34 0h2v1h-2zm30 0h3v3h-3zm-96 1h3v3h-3zm31 0h1v1h-1zm37 2h1v1h-1zm28 0h2v3h-2zm-95 1h2v2h-2zm-1 2h2v1h-2zm96 0h3v1h-3zm-98 1h4v1h-4zm72 0h1v1h-1zm27 0h3v1h-3zm-100 1h4v1h-4zm29 0h1v1h-1zm71 0h4v1h-4zm-101 1h5v1h-5zm81 0h2v1h-2zm21 0h5v1h-5zm-103 1h5v1h-5zm19 0h1v1h-1zm12 0h1v1h-1zm73 0h4v1h-4zm-104 1h4v2h-4zm26 0h2v1h-2zm79 0h4v1h-4zm-85 1h1v1h-1zm85 0h3v1h-3zm-104 1h4v2h-4zm103 0h4v1h-4zm0 1h3v1h-3zm-102 1h3v1h-3zm101 0h4v1h-4zm-100 1h2v1h-2zm100 0h3v1h-3zm-100 1h3v1h-3zm100 0h2v4h-2zm-99 1h2v2h-2zm26 0h1v2h-1zm48 0h1v2h-1zm-75 2h3v1h-3zm0 1h2v1h-2zm27 0h1v1h-1zm73 0h3v1h-3zm-101 1h3v1h-3zm101 0h4v1h-4zm-102 1h4v2h-4zm77 0h1v1h-1zm26 0h3v1h-3zm0 1h4v1h-4zm-104 1h4v2h-4zm17 0h1v1h-1zm12 0h1v2h-1zm76 0h3v1h-3zm0 1h4v1h-4zm-105 1h5v1h-5zm104 0h4v1h-4zm-103 1h5v1h-5zm26 0h1v1h-1zm76 0h5v1h-5zm-101 1h4v1h-4zm75 0h1v1h-1zm25 0h4v1h-4zm-99 1h4v1h-4zm29 0h1v2h-1zm57 0h1v1h-1zm13 0h3v1h-3zm-97 1h2v1h-2zm77 0h2v1h-2zm19 0h3v1h-3zm-95 1h2v2h-2zm68 0h1v1h-1zm27 0h2v3h-2zm-68 1h2v1h-2zm-28 1h3v3h-3zm83 0h1v1h-1zm-16 1h1v1h-1zm29 0h3v3h-3zm-77 1h2v1h-2zm61 0h1v1h-1zm2 0h1v1h-1zm-83 1h4v1h-4zm0 1h3v2h-3zm17 0h1v1h-1zm48 0h2v1h-2zm32 0h4v1h-4zm1 1h3v1h-3zm-98 1h4v1h-4zm37 0h1v1h-1zm59 0h5v1h-5zm-96 1h5v1h-5zm64 0h1v1h-1zm31 0h6v1h-6zm-94 1h5v1h-5zm39 0h1v1h-1zm19 0h1v1h-1zm3 0h1v1h-1zm32 0h6v1h-6zm-91 1h4v1h-4zm40 0h1v1h-1zm14 0h2v1h-2zm36 0h5v1h-5zm-88 1h4v1h-4zm15 0h1v1h-1zm26 0h3v1h-3zm4 0h1v1h-1zm2 0h3v1h-3zm27 0h1v1h-1zm13 0h4v1h-4zm-85 1h2v4h-2zm70 0h1v1h-1zm15 0h2v2h-2zm-50 2h2v1h-2zm49 0h3v5h-3zm-67 1h1v1h-1zm50 0h2v1h-2zm-67 1h3v2h-3zm20 1h1v1h-1zm-21 1h4v1h-4zm66 0h1v1h-1zm-66 1h5v1h-5zm84 0h4v1h-4zm-83 1h6v1h-6zm81 0h6v1h-6zm-81 1h8v1h-8zm57 0h1v1h-1zm22 0h8v1h-8zm-78 1h8v1h-8zm76 0h8v1h-8zm-70 1h3v1h-3zm70 0h2v1h-2zm-69 1h2v1h-2zm68 0h2v2h-2zm-68 1h3v2h-3zm37 0h1v1h-1zm30 1h3v3h-3zm-66 1h3v2h-3zm0 2h6v1h-6zm62 0h7v1h-7zm-62 1h10v1h-10zm58 0h11v1h-11zm-58 1h11v1h-11zm57 0h11v1h-11zm-56 1h5v1h-5zm9 0h2v1h-2zm47 0h2v1h-2zm6 0h4v1h-4zm-53 1h3v1h-3zm46 0h3v1h-3zm-46 1h4v1h-4zm45 0h3v1h-3zm-44 1h3v1h-3zm43 0h4v1h-4zm-43 1h12v1h-12zm34 0h12v1h-12zm-33 1h13v1h-13zm22 0h1v1h-1zm10 0h13v1h-13zm-32 1h7v1h-7zm10 0h4v1h-4zm9 0h7v1h-7zm11 0h4v2h-4zm8 0h7v1h-7zm-37 1h3v1h-3zm10 0h4v1h-4zm6 0h5v1h-5zm6 0h5v1h-5zm17 0h4v1h-4zm-28 1h9v1h-9zm12 0h9v1h-9zm-12 1h7v1h-7zm13 0h7v1h-7zm-12 1h5v1h-5zm13 0h5v1h-5zm-12 1h3v1h-3zm14 0h2v1h-2z"/>
<path fill="url(#p20)" d="M0 0m332 279h10v1h-10zm-7 1h25v1h-25zm-5 1h7v1h-7zm28 0h7v1h-7zm-31 1h5v1h-5zm36 0h5v1h-5zm-39 1h5v1h-5zm43 0h4v1h-4zm-46 1h4v1h-4zm49 0h4v1h-4zm-51 1h4v1h-4zm54 0h3v1h-3zm-56 1h3v1h-3zm58 0h3v1h-3zm-60 1h3v1h-3zm62 0h3v1h-3zm-64 1h3v1h-3zm66 0h3v1h-3zm-67 1h2v1h-2zm69 0h2v1h-2zm-71 1h3v1h-3zm73 0h2v1h-2zm-75 1h3v1h-3zm76 0h2v1h-2zm-77 1h3v1h-3zm79 0h2v1h-2zm-80 1h2v1h-2zm81 0h2v1h-2zm-83 1h3v1h-3zm85 0h1v1h-1zm-86 1h2v1h-2zm35 0h3v1h-3zm14 0h3v1h-3zm38 0h2v1h-2zm-88 1h2v1h-2zm34 0h8v1h-8zm13 0h7v1h-7zm42 0h2v1h-2zm-90 1h2v1h-2zm34 0h3v1h-3zm6 0h5v1h-5zm6 0h5v1h-5zm7 0h4v1h-4zm38 0h2v1h-2zm-92 1h2v1h-2zm34 0h3v1h-3zm8 0h8v1h-8zm13 0h4v1h-4zm38 0h2v1h-2zm-94 1h2v1h-2zm25 0h8v1h-8zm9 0h3v1h-3zm10 0h6v1h-6zm13 0h4v1h-4zm5 0h8v1h-8zm33 0h2v1h-2zm-96 1h2v1h-2zm25 0h13v1h-13zm22 0h3v1h-3zm12 0h12v1h-12zm39 0h1v1h-1zm-99 1h2v1h-2zm25 0h3v1h-3zm6 0h7v1h-7zm18 0h1v1h-1zm12 0h6v1h-6zm10 0h2v1h-2zm29 0h1v1h-1zm-101 1h2v1h-2zm26 0h2v1h-2zm9 0h3v1h-3zm27 0h4v1h-4zm11 0h2v1h-2zm28 0h2v1h-2zm-102 1h2v1h-2zm26 0h3v1h-3zm48 0h3v1h-3zm29 0h2v1h-2zm-104 1h2v1h-2zm26 0h3v1h-3zm49 0h4v1h-4zm30 0h2v1h-2zm-106 1h2v1h-2zm25 0h5v1h-5zm52 0h4v1h-4zm30 0h2v1h-2zm-108 1h2v1h-2zm21 0h9v1h-9zm57 0h10v1h-10zm31 0h1v1h-1zm-109 1h1v1h-1zm19 0h11v1h-11zm60 0h10v1h-10zm31 0h1v1h-1zm-111 1h2v1h-2zm20 0h2v1h-2zm7 0h4v1h-4zm53 0h4v1h-4zm8 0h3v1h-3zm24 0h1v1h-1zm-113 1h2v1h-2zm20 0h2v2h-2zm70 0h2v1h-2zm23 0h2v1h-2zm-114 1h2v1h-2zm92 0h2v2h-2zm23 0h1v1h-1zm-115 1h1v1h-1zm20 0h3v3h-3zm96 0h1v1h-1zm-117 1h2v1h-2zm93 0h3v3h-3zm24 0h2v1h-2zm-118 1h2v1h-2zm119 0h1v1h-1zm-119 1h1v1h-1zm21 0h3v1h-3zm99 0h1v1h-1zm-121 1h2v1h-2zm20 0h5v1h-5zm75 0h6v1h-6zm26 0h2v1h-2zm-121 1h1v1h-1zm18 0h7v1h-7zm77 0h8v1h-8zm27 0h1v1h-1zm-123 1h2v1h-2zm17 0h8v1h-8zm80 0h9v1h-9zm27 0h1v2h-1zm-124 1h1v1h-1zm16 0h3v1h-3zm57 0h2v1h-2zm30 0h4v1h-4zm-104 1h2v1h-2zm17 0h2v2h-2zm89 0h2v5h-2zm20 0h1v2h-1zm-126 1h1v1h-1zm78 0h2v1h-2zm-79 1h2v1h-2zm17 0h2v2h-2zm111 0h1v2h-1zm-128 1h1v1h-1zm-1 1h2v1h-2zm18 0h3v4h-3zm112 0h1v2h-1zm-130 1h1v1h-1zm87 0h1v1h-1zm21 0h3v3h-3zm-109 1h2v1h-2zm131 0h2v1h-2zm-131 1h1v2h-1zm132 0h1v2h-1zm-115 1h5v1h-5zm92 0h4v1h-4zm-110 1h2v1h-2zm17 0h6v1h-6zm51 0h2v1h-2zm24 0h1v1h-1zm18 0h5v1h-5zm24 0h1v3h-1zm-134 1h1v1h-1zm16 0h5v1h-5zm44 0h4v1h-4zm28 0h2v1h-2zm24 0h5v1h-5zm-113 1h2v2h-2zm16 0h4v1h-4zm45 0h1v1h-1zm12 0h1v1h-1zm42 0h4v1h-4zm-100 1h3v1h-3zm43 0h1v1h-1zm59 0h3v1h-3zm19 0h1v3h-1zm-136 1h1v2h-1zm15 0h2v5h-2zm103 0h2v4h-2zm-119 2h2v1h-2zm54 0h1v1h-1zm84 0h1v4h-1zm-138 1h1v2h-1zm38 0h1v1h-1zm45 0h2v1h-2zm1 1h1v1h-1zm34 0h3v2h-3zm-119 1h2v2h-2zm17 0h3v3h-3zm69 0h1v1h-1zm1 1h1v1h-1zm32 0h2v1h-2zm21 0h1v5h-1zm-140 1h1v3h-1zm50 0h1v1h-1zm68 0h3v2h-3zm-101 1h4v1h-4zm-1 1h5v1h-5zm73 0h1v1h-1zm29 0h4v1h-4zm-119 1h2v2h-2zm17 0h4v1h-4zm32 0h1v1h-1zm71 0h4v1h-4zm-104 1h3v1h-3zm32 0h1v2h-1zm73 0h4v1h-4zm21 0h1v9h-1zm-142 1h1v7h-1zm15 0h3v1h-3zm107 0h3v1h-3zm-107 1h2v1h-2zm77 0h1v1h-1zm32 0h2v2h-2zm-110 1h2v3h-2zm20 0h1v1h-1zm13 1h1v2h-1zm78 0h2v1h-2zm-32 1h1v2h-1zm31 0h2v2h-2zm-109 1h2v2h-2zm108 1h3v1h-3zm-124 1h2v11h-2zm16 0h3v1h-3zm31 0h1v3h-1zm77 0h2v1h-2zm-107 1h3v2h-3zm106 0h3v1h-3zm21 0h1v5h-1zm-22 1h4v1h-4zm-105 1h4v2h-4zm105 0h3v2h-3zm-105 2h3v2h-3zm30 0h1v1h-1zm75 0h4v1h-4zm1 1h3v1h-3zm-107 1h3v1h-3zm108 0h2v1h-2zm20 0h1v2h-1zm-128 1h2v2h-2zm108 0h3v1h-3zm-77 1h1v3h-1zm47 0h1v3h-1zm31 0h2v2h-2zm-110 1h2v3h-2zm128 0h1v9h-1zm-142 1h1v6h-1zm125 0h2v1h-2zm-78 1h1v1h-1zm77 0h2v2h-2zm-109 1h2v1h-2zm78 0h1v1h-1zm-78 1h3v1h-3zm33 0h1v1h-1zm44 0h1v1h-1zm30 0h3v1h-3zm-106 1h3v1h-3zm75 0h1v1h-1zm2 0h1v1h-1zm28 0h4v1h-4zm-104 1h4v1h-4zm32 0h1v1h-1zm71 0h4v1h-4zm-120 1h2v2h-2zm17 0h5v1h-5zm102 0h4v1h-4zm-101 1h4v1h-4zm101 0h3v2h-3zm-118 1h1v4h-1zm17 0h3v3h-3zm33 0h1v1h-1zm90 0h1v5h-1zm-21 1h2v1h-2zm-33 1h1v1h-1zm33 0h3v2h-3zm-102 1h2v5h-2zm34 0h1v1h-1zm34 0h1v1h-1zm-85 1h2v1h-2zm120 0h2v4h-2zm-119 1h1v3h-1zm54 0h1v1h-1zm28 0h1v1h-1zm56 0h1v3h-1zm-57 1h1v2h-1zm-25 1h1v1h-1zm23 0h1v1h-1zm-79 1h2v1h-2zm16 0h3v1h-3zm43 0h1v1h-1zm59 0h3v1h-3zm-117 1h1v2h-1zm16 0h4v1h-4zm41 0h2v1h-2zm16 0h1v1h-1zm42 0h4v1h-4zm21 0h1v3h-1zm-119 1h5v1h-5zm49 0h1v1h-1zm47 0h5v1h-5zm-113 1h2v1h-2zm18 0h6v1h-6zm93 0h5v1h-5zm-110 1h1v2h-1zm18 0h5v1h-5zm92 0h4v1h-4zm24 0h1v3h-1zm-114 1h3v4h-3zm90 0h3v3h-3zm-110 1h2v1h-2zm1 1h1v2h-1zm132 0h1v2h-1zm-23 1h2v5h-2zm-108 1h1v2h-1zm18 0h2v2h-2zm112 0h1v2h-1zm-130 2h2v1h-2zm19 0h2v2h-2zm110 0h1v1h-1zm-128 1h1v1h-1zm78 0h1v1h-1zm-78 1h2v1h-2zm18 0h3v1h-3zm87 0h4v1h-4zm23 0h1v1h-1zm-127 1h1v1h-1zm18 0h8v1h-8zm80 0h9v1h-9zm28 0h1v2h-1zm-126 1h2v1h-2zm20 0h7v1h-7zm77 0h8v1h-8zm-96 1h1v1h-1zm21 0h5v1h-5zm75 0h6v1h-6zm28 0h1v1h-1zm-124 1h2v1h-2zm23 0h3v1h-3zm73 0h3v3h-3zm27 0h1v2h-1zm-122 1h1v1h-1zm23 0h3v3h-3zm-22 1h1v1h-1zm120 0h1v2h-1zm-120 1h2v1h-2zm94 0h2v2h-2zm-93 1h1v1h-1zm22 0h2v2h-2zm96 0h1v1h-1zm-118 1h2v1h-2zm92 0h2v1h-2zm25 0h1v2h-1zm-116 1h2v1h-2zm22 0h2v1h-2zm7 0h4v1h-4zm53 0h4v1h-4zm8 0h3v1h-3zm-89 1h1v1h-1zm21 0h11v1h-11zm60 0h10v1h-10zm33 0h1v1h-1zm-113 1h1v1h-1zm22 0h9v1h-9zm57 0h10v1h-10zm33 0h1v1h-1zm-112 1h2v1h-2zm27 0h5v1h-5zm52 0h4v1h-4zm32 0h1v2h-1zm-110 1h2v1h-2zm28 0h3v1h-3zm49 0h4v1h-4zm-76 1h1v1h-1zm28 0h3v1h-3zm48 0h3v1h-3zm32 0h1v1h-1zm-107 1h1v1h-1zm28 0h2v1h-2zm9 0h3v1h-3zm27 0h4v1h-4zm11 0h2v1h-2zm31 0h1v1h-1zm-105 1h1v1h-1zm27 0h3v1h-3zm6 0h7v1h-7zm18 0h1v1h-1zm12 0h6v1h-6zm10 0h2v1h-2zm31 0h1v1h-1zm-104 1h2v1h-2zm28 0h13v1h-13zm22 0h3v1h-3zm12 0h12v1h-12zm41 0h1v1h-1zm-102 1h2v1h-2zm28 0h8v1h-8zm9 0h3v1h-3zm10 0h6v1h-6zm13 0h4v1h-4zm5 0h8v1h-8zm36 0h2v1h-2zm-100 1h2v1h-2zm37 0h3v1h-3zm8 0h8v1h-8zm13 0h4v1h-4zm41 0h2v1h-2zm-98 1h2v1h-2zm37 0h3v1h-3zm6 0h5v1h-5zm6 0h5v1h-5zm7 0h4v1h-4zm41 0h2v1h-2zm-96 1h2v1h-2zm37 0h8v1h-8zm13 0h7v1h-7zm45 0h2v1h-2zm-94 1h2v1h-2zm38 0h3v1h-3zm14 0h3v1h-3zm41 0h2v1h-2zm-92 1h2v1h-2zm91 0h1v1h-1zm-89 1h1v1h-1zm88 0h1v1h-1zm-87 1h2v1h-2zm86 0h1v1h-1zm-85 1h2v1h-2zm83 0h2v1h-2zm-82 1h2v1h-2zm81 0h1v1h-1zm-79 1h2v1h-2zm77 0h2v1h-2zm-76 1h2v1h-2zm75 0h2v1h-2zm-73 1h2v1h-2zm71 0h2v1h-2zm-69 1h2v1h-2zm67 0h2v1h-2zm-66 1h3v1h-3zm65 0h2v1h-2zm-63 1h3v1h-3zm61 0h2v1h-2zm-59 1h3v1h-3zm56 0h3v1h-3zm-54 1h3v1h-3zm52 0h3v1h-3zm-49 1h3v1h-3zm46 0h3v1h-3zm-43 1h3v1h-3zm40 0h3v1h-3zm-37 1h4v1h-4zm33 0h4v1h-4zm-29 1h6v1h-6zm24 0h5v1h-5zm-19 1h6v1h-6zm7 0h2v1h-2zm3 0h5v1h-5zm6 0h3v1h-3z"/>
<path fill="url(#p21)" d="M0 0m331 279h1v1h-1zm11 0h1v1h-1zm-18 1h1v1h-1zm26 0h1v1h-1zm-23 1h2v1h-2zm19 0h2v1h-2zm-24 1h1v1h-1zm30 0h1v1h-1zm4 1h1v1h-1zm-41 1h1v1h-1zm44 0h1v1h-1zm3 1h1v1h-1zm-52 1h1v1h-1zm54 0h1v1h-1zm-56 1h1v1h-1zm-2 1h1v1h-1zm-5 1h1v1h-1zm3 0h1v1h-1zm66 0h1v1h-1zm2 1h1v1h-1zm-71 1h1v1h-1zm75 0h1v1h-1zm-1 1h1v1h-1zm-77 1h1v1h-1zm29 0h4v1h-4zm14 0h4v1h-4zm-15 1h8v1h-8zm13 0h8v1h-8zm39 0h1v1h-1zm2 0h1v1h-1zm-85 1h1v1h-1zm30 0h3v1h-3zm6 0h5v1h-5zm6 0h5v1h-5zm8 0h3v1h-3zm34 0h1v1h-1zm-85 1h1v1h-1zm29 0h3v1h-3zm11 0h5v1h-5zm12 0h3v1h-3zm-33 1h8v1h-8zm9 0h3v1h-3zm14 0h1v1h-1zm12 0h3v1h-3zm4 0h8v1h-8zm-40 1h12v1h-12zm37 0h11v1h-11zm-38 1h3v1h-3zm11 0h1v1h-1zm28 0h1v1h-1zm9 0h2v1h-2zm-48 1h2v1h-2zm48 0h3v1h-3zm26 0h1v1h-1zm-75 1h2v1h-2zm50 0h3v1h-3zm26 0h1v1h-1zm-77 1h3v1h-3zm52 0h2v1h-2zm-53 1h3v1h-3zm54 0h2v1h-2zm-59 1h7v1h-7zm60 0h7v1h-7zm-63 1h8v1h-8zm64 0h9v1h-9zm-80 1h1v1h-1zm16 0h3v1h-3zm70 0h3v1h-3zm22 0h1v1h-1zm-109 1h1v1h-1zm16 0h2v2h-2zm72 0h2v1h-2zm1 1h2v2h-2zm20 0h1v1h-1zm-94 1h2v2h-2zm75 1h2v2h-2zm22 0h1v1h-1zm-115 1h1v1h-1zm17 0h2v2h-2zm77 1h2v1h-2zm-78 1h3v1h-3zm78 0h3v1h-3zm23 0h1v1h-1zm-119 1h1v1h-1zm16 0h4v1h-4zm80 0h5v1h-5zm-82 1h4v1h-4zm85 0h4v1h-4zm-100 1h1v1h-1zm13 0h4v1h-4zm89 0h4v1h-4zm-90 1h3v1h-3zm92 0h2v1h-2zm17 0h1v1h-1zm-124 1h1v1h-1zm15 0h2v3h-2zm93 0h2v6h-2zm17 1h1v1h-1zm-126 1h1v1h-1zm16 1h1v1h-1zm111 0h1v1h-1zm-112 1h2v4h-2zm113 1h1v1h-1zm-128 1h1v1h-1zm110 0h1v1h-1zm0 1h2v1h-2zm-111 1h1v1h-1zm15 0h3v1h-3zm96 0h3v1h-3zm-113 1h1v1h-1zm15 0h3v1h-3zm99 0h3v1h-3zm-100 1h3v1h-3zm79 0h1v1h-1zm22 0h3v1h-3zm18 0h1v1h-1zm-132 1h1v1h-1zm12 0h3v1h-3zm51 0h4v1h-4zm53 0h2v1h-2zm-105 1h3v1h-3zm46 0h2v1h-2zm3 0h1v1h-1zm9 0h2v1h-2zm48 0h2v1h-2zm17 0h1v1h-1zm-123 1h2v10h-2zm46 0h1v1h-1zm16 0h2v1h-2zm45 0h2v5h-2zm15 0h1v1h-1zm-134 1h1v1h-1zm54 0h2v1h-2zm22 0h1v1h-1zm-78 1h1v1h-1zm55 0h2v1h-2zm25 0h1v1h-1zm1 1h1v1h-1zm56 0h1v1h-1zm-136 1h1v1h-1zm52 0h1v1h-1zm-1 1h1v1h-1zm69 0h1v2h-1zm-70 1h1v1h-1zm-3 1h3v1h-3zm72 0h2v2h-2zm18 0h1v1h-1zm-138 1h1v1h-1zm46 1h1v1h-1zm41 0h1v1h-1zm33 0h3v1h-3zm-107 1h2v1h-2zm35 0h1v1h-1zm73 0h2v1h-2zm-109 1h3v1h-3zm76 0h1v1h-1zm34 0h2v1h-2zm-110 1h2v1h-2zm35 0h1v1h-1zm76 0h2v2h-2zm16 0h1v1h-1zm-140 1h1v2h-1zm12 0h2v1h-2zm78 0h1v1h-1zm-79 1h3v1h-3zm36 0h1v1h-1zm78 0h2v1h-2zm-114 1h2v3h-2zm80 0h1v1h-1zm34 0h3v1h-3zm1 1h2v1h-2zm-1 1h2v3h-2zm-113 1h2v3h-2zm34 0h1v1h-1zm-48 1h1v1h-1zm94 0h1v3h-1zm32 1h2v3h-2zm18 0h1v1h-1zm-129 1h2v6h-2zm128 0h1v8h-1zm-44 1h2v1h-2zm26 1h2v2h-2zm1 2h2v3h-2zm-32 1h1v3h-1zm-80 1h2v3h-2zm33 0h1v1h-1zm80 1h2v3h-2zm-79 1h1v3h-1zm95 0h2v1h-2zm-130 1h2v3h-2zm-13 1h1v1h-1zm128 0h2v1h-2zm-35 1h1v2h-1zm34 0h3v1h-3zm-114 1h3v1h-3zm36 0h1v1h-1zm78 0h2v1h-2zm-113 1h2v1h-2zm78 0h1v1h-1zm34 0h2v2h-2zm-111 1h2v1h-2zm35 0h1v1h-1zm43 0h1v1h-1zm-91 1h1v1h-1zm13 0h3v1h-3zm76 0h1v1h-1zm34 0h2v1h-2zm-109 1h2v1h-2zm35 0h1v1h-1zm73 0h2v1h-2zm-107 1h2v10h-2zm73 0h1v1h-1zm33 0h3v1h-3zm19 0h1v1h-1zm-141 1h1v1h-1zm122 0h2v2h-2zm-70 1h1v1h-1zm1 1h1v1h-1zm70 0h1v2h-1zm-121 1h1v1h-1zm51 0h2v1h-2zm2 1h1v1h-1zm68 0h2v5h-2zm-40 1h1v1h-1zm-25 1h1v1h-1zm24 0h1v2h-1zm-79 1h1v1h-1zm56 0h1v1h-1zm21 0h1v1h-1zm-18 1h1v1h-1zm16 0h1v1h-1zm61 0h2v1h-2zm-123 1h3v1h-3zm48 0h2v1h-2zm10 0h2v1h-2zm48 0h2v1h-2zm-118 1h1v1h-1zm13 0h3v1h-3zm44 0h1v1h-1zm37 0h1v1h-1zm23 0h2v1h-2zm-103 1h3v1h-3zm101 0h3v1h-3zm19 0h1v1h-1zm-119 1h3v1h-3zm99 0h3v1h-3zm-113 1h1v1h-1zm16 0h3v1h-3zm96 0h3v1h-3zm-95 1h2v4h-2zm95 0h2v1h-2zm20 0h1v1h-1zm-20 1h1v1h-1zm-111 1h1v1h-1zm110 0h2v6h-2zm-111 1h1v1h-1zm2 1h1v1h-1zm16 0h1v1h-1zm0 1h2v3h-2zm113 0h1v1h-1zm-2 2h1v1h-1zm-111 1h3v1h-3zm92 0h2v1h-2zm-91 1h4v1h-4zm89 0h4v1h-4zm20 0h1v1h-1zm-107 1h4v1h-4zm85 0h4v1h-4zm-83 1h4v1h-4zm80 0h5v1h-5zm25 0h1v1h-1zm-122 1h1v1h-1zm19 0h3v1h-3zm78 0h3v1h-3zm-98 1h1v1h-1zm21 0h2v2h-2zm77 0h2v1h-2zm-1 1h2v2h-2zm23 0h1v1h-1zm-98 1h2v2h-2zm74 1h2v2h-2zm-73 1h2v2h-2zm95 0h1v1h-1zm-113 1h1v1h-1zm90 0h2v1h-2zm-91 1h1v1h-1zm20 0h3v1h-3zm70 0h3v1h-3zm-70 1h8v1h-8zm64 0h9v1h-9zm-61 1h7v1h-7zm60 0h7v1h-7zm28 0h1v1h-1zm-107 1h1v1h-1zm24 0h3v1h-3zm54 0h2v1h-2zm-53 1h3v1h-3zm52 0h2v1h-2zm-77 1h1v1h-1zm26 0h2v1h-2zm50 0h3v1h-3zm-49 1h2v1h-2zm48 0h3v1h-3zm30 0h1v1h-1zm-78 1h3v1h-3zm11 0h1v1h-1zm28 0h1v1h-1zm9 0h2v1h-2zm-47 1h12v1h-12zm37 0h11v1h-11zm-36 1h8v1h-8zm9 0h3v1h-3zm14 0h1v1h-1zm12 0h3v1h-3zm4 0h8v1h-8zm-29 1h3v1h-3zm11 0h5v1h-5zm12 0h3v1h-3zm-21 1h3v1h-3zm6 0h5v1h-5zm6 0h5v1h-5zm8 0h3v1h-3zm-52 1h1v1h-1zm33 0h8v1h-8zm13 0h8v1h-8zm-45 1h1v1h-1zm33 0h4v1h-4zm14 0h4v1h-4zm38 1h1v1h-1zm-81 2h1v1h-1zm80 0h1v1h-1zm-77 2h1v1h-1zm67 3h1v1h-1zm-2 1h1v1h-1zm-53 2h1v1h-1zm3 1h1v1h-1zm-1 1h1v1h-1zm4 0h1v1h-1zm36 0h1v1h-1zm-32 1h1v1h-1zm28 0h1v1h-1zm-29 1h1v1h-1zm7 0h1v1h-1zm16 0h2v1h-2z"/>
<path fill="url(#p22)" d="M0 0m343 279h1v1h-1zm-14 2h17v1h-17zm-13 1h1v1h-1zm7 0h10v1h-10zm20 0h9v1h-9zm15 0h1v1h-1zm-39 1h6v1h-6zm31 0h6v1h-6zm-34 1h5v1h-5zm39 0h4v1h-4zm-42 1h5v1h-5zm45 0h4v1h-4zm-47 1h4v1h-4zm50 0h3v1h-3zm-52 1h3v1h-3zm54 0h4v1h-4zm-56 1h3v1h-3zm59 0h3v1h-3zm-61 1h3v1h-3zm23 0h1v1h-1zm16 0h1v1h-1zm24 0h2v1h-2zm5 0h1v1h-1zm-70 1h3v1h-3zm24 0h3v1h-3zm16 0h3v1h-3zm27 0h2v1h-2zm-68 1h2v1h-2zm24 0h6v1h-6zm15 0h5v1h-5zm30 0h3v1h-3zm-71 1h3v1h-3zm25 0h9v1h-9zm14 0h8v1h-8zm34 0h2v1h-2zm-78 1h1v1h-1zm4 0h2v1h-2zm25 0h3v1h-3zm7 0h10v1h-10zm14 0h4v1h-4zm30 0h2v1h-2zm-78 1h3v1h-3zm15 0h3v1h-3zm11 0h3v1h-3zm11 0h5v1h-5zm13 0h3v1h-3zm11 0h3v1h-3zm18 0h2v1h-2zm-80 1h2v1h-2zm16 0h8v1h-8zm10 0h3v1h-3zm14 0h1v1h-1zm12 0h3v1h-3zm4 0h9v1h-9zm26 0h1v1h-1zm-83 1h2v1h-2zm16 0h12v1h-12zm38 0h12v1h-12zm30 0h2v1h-2zm-86 1h3v1h-3zm18 0h2v1h-2zm10 0h1v1h-1zm30 0h1v1h-1zm9 0h2v1h-2zm20 0h2v1h-2zm-88 1h2v1h-2zm18 0h2v1h-2zm50 0h3v1h-3zm21 0h2v1h-2zm-90 1h2v1h-2zm18 0h2v1h-2zm52 0h2v1h-2zm21 0h2v1h-2zm-92 1h2v1h-2zm18 0h3v1h-3zm54 0h2v1h-2zm22 0h1v1h-1zm-95 1h2v1h-2zm19 0h2v1h-2zm55 0h2v1h-2zm22 0h1v1h-1zm-97 1h2v1h-2zm10 0h3v1h-3zm5 0h6v1h-6zm60 0h7v1h-7zm9 0h2v1h-2zm14 0h1v1h-1zm-99 1h2v1h-2zm11 0h10v1h-10zm66 0h10v1h-10zm23 0h1v1h-1zm-101 1h2v1h-2zm12 0h5v1h-5zm72 0h5v1h-5zm18 0h1v1h-1zm-103 1h2v1h-2zm13 0h2v2h-2zm75 0h2v3h-2zm15 0h2v1h-2zm-103 1h1v1h-1zm104 0h2v1h-2zm-108 1h1v1h-1zm3 0h2v1h-2zm13 0h2v2h-2zm93 0h2v1h-2zm-107 1h2v1h-2zm91 0h2v2h-2zm17 0h1v1h-1zm-109 1h2v1h-2zm14 0h2v2h-2zm96 0h1v1h-1zm-111 1h2v1h-2zm94 0h2v2h-2zm18 0h1v1h-1zm-112 1h1v1h-1zm15 0h1v1h-1zm97 0h2v1h-2zm-113 1h2v1h-2zm13 0h4v1h-4zm83 0h3v1h-3zm18 0h1v1h-1zm-115 1h2v1h-2zm12 0h5v1h-5zm86 0h4v1h-4zm18 0h1v1h-1zm-116 1h1v1h-1zm8 0h7v1h-7zm92 0h6v1h-6zm16 0h2v1h-2zm-117 1h2v1h-2zm9 0h5v1h-5zm94 0h5v1h-5zm15 0h1v1h-1zm-121 1h1v1h-1zm3 0h1v1h-1zm9 0h3v1h-3zm43 0h2v1h-2zm53 0h3v2h-3zm14 0h1v2h-1zm-120 1h2v1h-2zm10 0h2v5h-2zm47 0h2v1h-2zm-58 1h2v1h-2zm108 0h1v1h-1zm14 0h1v2h-1zm-122 1h1v1h-1zm46 0h2v1h-2zm18 0h2v1h-2zm44 0h2v5h-2zm-109 1h2v1h-2zm124 0h1v2h-1zm-124 1h1v1h-1zm49 0h2v1h-2zm-52 1h1v1h-1zm2 0h2v1h-2zm13 0h1v1h-1zm27 0h2v1h-2zm16 0h2v1h-2zm16 0h2v1h-2zm54 0h1v2h-1zm-126 1h1v2h-1zm12 0h2v2h-2zm50 0h2v1h-2zm14 1h2v1h-2zm34 0h3v1h-3zm17 0h1v2h-1zm-128 1h2v1h-2zm12 0h3v1h-3zm35 0h2v1h-2zm6 0h2v1h-2zm20 0h2v1h-2zm39 0h3v1h-3zm-112 1h1v1h-1zm11 0h3v1h-3zm34 0h2v1h-2zm68 0h3v1h-3zm16 0h1v3h-1zm-130 1h2v1h-2zm11 0h2v1h-2zm43 0h4v1h-4zm12 0h2v1h-2zm49 0h3v1h-3zm17 0h1v1h-1zm-132 1h1v2h-1zm9 0h3v1h-3zm39 0h2v1h-2zm6 0h2v1h-2zm34 0h2v1h-2zm28 0h4v1h-4zm-109 1h4v1h-4zm47 0h1v1h-1zm63 0h5v1h-5zm14 0h1v3h-1zm-132 1h2v1h-2zm8 0h3v2h-3zm53 0h3v1h-3zm5 0h3v1h-3zm21 0h2v1h-2zm32 0h4v1h-4zm-119 1h1v2h-1zm51 0h1v1h-1zm7 0h1v1h-1zm14 0h1v1h-1zm6 0h3v1h-3zm42 0h2v4h-2zm-111 1h2v6h-2zm26 0h2v1h-2zm4 0h2v1h-2zm4 0h2v1h-2zm12 0h1v1h-1zm19 0h1v1h-1zm59 0h1v3h-1zm-134 1h2v1h-2zm44 0h4v1h-4zm6 0h1v1h-1zm2 0h1v1h-1zm25 0h1v1h-1zm-77 1h1v2h-1zm40 0h2v1h-2zm13 0h1v1h-1zm27 1h1v1h-1zm6 0h2v1h-2zm4 0h2v1h-2zm6 0h2v1h-2zm25 0h1v1h-1zm14 0h1v4h-1zm-136 1h2v1h-2zm82 0h1v1h-1zm39 0h2v4h-2zm-121 1h1v3h-1zm83 0h1v1h-1zm8 0h2v1h-2zm47 0h1v1h-1zm-126 1h1v1h-1zm27 0h2v2h-2zm6 0h2v1h-2zm39 0h1v1h-1zm4 0h1v1h-1zm5 0h2v1h-2zm6 0h2v1h-2zm-88 1h2v2h-2zm74 0h1v1h-1zm52 0h1v5h-1zm-138 1h2v2h-2zm47 0h1v2h-1zm2 0h1v1h-1zm74 0h2v1h-2zm-125 1h1v1h-1zm13 0h2v1h-2zm22 0h1v1h-1zm54 0h1v1h-1zm36 0h3v1h-3zm-123 1h1v4h-1zm10 0h2v2h-2zm38 0h1v1h-1zm76 0h2v1h-2zm1 1h2v1h-2zm-116 1h2v1h-2zm27 0h2v1h-2zm4 0h2v1h-2zm7 0h1v1h-1zm51 0h2v1h-2zm27 0h3v1h-3zm14 0h1v10h-1zm-132 1h3v3h-3zm119 0h3v1h-3zm-127 1h2v3h-2zm47 0h1v1h-1zm81 0h3v1h-3zm-93 1h2v1h-2zm4 0h2v1h-2zm52 0h1v2h-1zm37 0h2v1h-2zm-119 1h2v1h-2zm24 0h2v1h-2zm4 0h2v1h-2zm90 0h3v1h-3zm-129 1h1v1h-1zm2 0h1v16h-1zm10 0h2v3h-2zm29 0h2v1h-2zm58 0h2v1h-2zm30 0h2v2h-2zm-81 1h1v2h-1zm80 1h2v3h-2zm-115 1h2v6h-2zm86 0h2v1h-2zm-56 1h2v1h-2zm51 0h1v4h-1zm33 1h2v2h-2zm-28 2h2v1h-2zm29 0h2v3h-2zm-89 1h2v1h-2zm-27 1h2v3h-2zm36 0h1v2h-1zm47 0h4v1h-4zm12 0h2v1h-2zm-72 1h2v1h-2zm94 0h2v2h-2zm13 0h1v10h-1zm-46 1h1v1h-1zm11 0h1v1h-1zm-96 1h2v1h-2zm82 0h1v2h-1zm36 0h3v1h-3zm15 0h1v1h-1zm-134 1h3v3h-3zm120 0h2v1h-2zm-130 1h1v1h-1zm49 0h1v1h-1zm48 0h2v1h-2zm33 0h3v1h-3zm-1 1h3v1h-3zm-127 1h2v2h-2zm10 0h2v1h-2zm27 0h2v1h-2zm11 0h1v1h-1zm53 0h2v1h-2zm25 0h3v1h-3zm-115 1h2v2h-2zm30 0h2v1h-2zm85 0h2v1h-2zm-125 1h1v4h-1zm48 0h1v1h-1zm43 0h1v1h-1zm33 0h2v1h-2zm-113 1h2v1h-2zm23 0h2v1h-2zm53 0h1v1h-1zm36 0h3v1h-3zm-111 1h2v2h-2zm37 0h1v1h-1zm49 0h2v1h-2zm25 0h2v1h-2zm15 0h1v5h-1zm-52 1h1v1h-1zm36 0h2v4h-2zm-122 1h2v2h-2zm13 0h1v1h-1zm23 0h4v1h-4zm49 0h1v1h-1zm-73 1h2v6h-2zm72 0h1v1h-1zm-83 1h1v3h-1zm82 0h1v1h-1zm-1 1h1v1h-1zm41 0h1v1h-1zm14 0h1v4h-1zm-138 1h1v1h-1zm56 0h1v1h-1zm68 0h2v4h-2zm-122 1h2v1h-2zm41 0h4v1h-4zm6 0h2v1h-2zm31 0h1v1h-1zm-77 1h1v3h-1zm56 0h1v1h-1zm19 0h1v1h-1zm-66 1h3v2h-3zm50 0h1v1h-1zm14 0h1v1h-1zm61 0h1v3h-1zm-72 1h3v1h-3zm5 0h3v1h-3zm53 0h4v1h-4zm-119 1h1v3h-1zm8 0h4v1h-4zm28 0h3v1h-3zm19 0h1v1h-1zm63 0h5v1h-5zm-108 1h3v1h-3zm35 0h2v1h-2zm72 0h4v1h-4zm-119 1h1v1h-1zm14 0h2v1h-2zm27 0h2v2h-2zm46 0h2v2h-2zm4 0h2v1h-2zm27 0h3v1h-3zm16 0h1v2h-1zm-131 1h1v2h-1zm12 0h3v1h-3zm40 0h2v1h-2zm62 0h3v1h-3zm-101 1h3v1h-3zm29 0h2v1h-2zm18 0h2v1h-2zm53 0h3v1h-3zm17 0h1v3h-1zm-130 1h2v1h-2zm14 0h2v2h-2zm68 0h2v1h-2zm30 0h3v1h-3zm-111 1h1v2h-1zm45 0h2v1h-2zm66 0h2v5h-2zm-97 1h1v1h-1zm41 0h2v1h-2zm4 0h2v1h-2zm4 0h2v1h-2zm4 0h2v1h-2zm10 0h2v2h-2zm51 0h1v2h-1zm-127 1h1v2h-1zm13 0h2v5h-2zm33 0h2v1h-2zm18 0h2v1h-2zm14 1h2v1h-2zm48 0h1v2h-1zm-126 1h2v1h-2zm60 0h2v1h-2zm4 0h2v1h-2zm-63 1h1v1h-1zm49 0h2v1h-2zm60 0h1v1h-1zm15 0h1v2h-1zm-124 1h2v1h-2zm71 0h2v1h-2zm37 0h3v2h-3zm-107 1h1v1h-1zm11 0h3v1h-3zm111 0h1v2h-1zm-122 1h2v1h-2zm11 0h5v1h-5zm94 0h5v1h-5zm-104 1h1v1h-1zm10 0h7v1h-7zm92 0h6v1h-6zm18 0h1v2h-1zm-119 1h1v1h-1zm13 0h5v1h-5zm86 0h4v1h-4zm-99 1h2v1h-2zm15 0h4v1h-4zm83 0h3v1h-3zm20 0h1v1h-1zm-117 1h1v1h-1zm17 0h1v1h-1zm79 0h2v2h-2zm20 0h1v2h-1zm-116 1h2v1h-2zm17 0h2v2h-2zm-16 1h2v1h-2zm94 0h2v2h-2zm20 0h1v1h-1zm2 0h1v1h-1zm-115 1h1v1h-1zm16 0h2v2h-2zm96 0h1v2h-1zm-111 1h1v1h-1zm91 0h2v3h-2zm-91 1h2v1h-2zm16 0h2v2h-2zm94 0h1v1h-1zm-109 1h1v1h-1zm108 0h1v1h-1zm-107 1h1v1h-1zm14 0h5v1h-5zm72 0h5v1h-5zm20 0h1v1h-1zm-105 1h1v1h-1zm13 0h10v1h-10zm66 0h10v1h-10zm25 0h2v1h-2zm-106 1h1v1h-1zm2 0h2v1h-2zm13 0h3v1h-3zm5 0h6v1h-6zm60 0h7v1h-7zm9 0h2v1h-2zm17 0h1v1h-1zm-103 1h2v1h-2zm22 0h2v1h-2zm55 0h2v1h-2zm25 0h1v1h-1zm-101 1h2v1h-2zm21 0h3v1h-3zm54 0h2v1h-2zm25 0h1v1h-1zm-99 1h2v1h-2zm21 0h2v1h-2zm52 0h2v1h-2zm25 0h1v1h-1zm-97 1h2v1h-2zm21 0h2v1h-2zm50 0h3v1h-3zm25 0h1v1h-1zm-95 1h2v1h-2zm21 0h2v1h-2zm10 0h1v1h-1zm30 0h1v1h-1zm9 0h2v1h-2zm24 0h1v1h-1zm-93 1h2v1h-2zm20 0h12v1h-12zm38 0h12v1h-12zm34 0h1v1h-1zm-91 1h2v1h-2zm20 0h8v1h-8zm10 0h3v1h-3zm14 0h1v1h-1zm12 0h3v1h-3zm4 0h9v1h-9zm30 0h1v1h-1zm-88 1h1v1h-1zm18 0h3v1h-3zm11 0h3v1h-3zm11 0h5v1h-5zm13 0h3v1h-3zm11 0h3v1h-3zm22 0h2v1h-2zm3 0h1v1h-1zm-91 1h1v1h-1zm3 0h1v1h-1zm29 0h3v1h-3zm7 0h10v1h-10zm14 0h4v1h-4zm34 0h2v1h-2zm-83 1h2v1h-2zm29 0h9v1h-9zm14 0h8v1h-8zm39 0h1v1h-1zm-81 1h2v1h-2zm29 0h6v1h-6zm15 0h5v1h-5zm35 0h2v1h-2zm-77 1h2v1h-2zm28 0h3v1h-3zm16 0h3v1h-3zm32 0h2v1h-2zm-75 1h2v1h-2zm28 0h1v1h-1zm16 0h1v1h-1zm29 0h2v1h-2zm-71 1h2v1h-2zm70 0h2v1h-2zm-69 1h3v1h-3zm67 0h2v1h-2zm-65 1h2v1h-2zm63 0h2v1h-2zm4 0h1v1h-1zm-65 1h2v1h-2zm59 0h2v1h-2zm-57 1h3v1h-3zm55 0h2v1h-2zm-53 1h3v1h-3zm51 0h2v1h-2zm-48 1h3v1h-3zm45 0h3v1h-3zm-47 1h1v1h-1zm5 0h3v1h-3zm39 0h3v1h-3zm-36 1h4v1h-4zm31 0h4v1h-4zm-33 1h1v1h-1zm6 0h6v1h-6zm21 0h6v1h-6zm11 0h1v1h-1zm-26 1h15v1h-15zm22 0h1v1h-1zm-25 1h1v1h-1z"/>
<path fill="url(#p23)" d="M0 0m346 272h1v1h-1zm6 1h1v1h-1zm5 1h1v1h-1zm-41 3h1v1h-1zm49 1h1v1h-1zm-51 1h1v1h-1zm16 0h1v1h-1zm14 0h1v1h-1zm-25 2h1v1h-1zm14 1h10v1h-10zm-20 1h1v1h-1zm12 0h2v1h-2zm24 0h1v1h-1zm12 0h1v1h-1zm-64 1h1v1h-1zm24 0h1v1h-1zm33 0h1v1h-1zm16 0h1v1h-1zm-43 1h2v1h-2zm17 0h2v1h-2zm13 0h1v1h-1zm-55 1h1v1h-1zm4 0h1v1h-1zm20 0h4v1h-4zm16 0h4v1h-4zm18 0h1v1h-1zm-48 1h1v1h-1zm13 0h7v1h-7zm16 0h6v1h-6zm-31 1h1v1h-1zm14 0h9v1h-9zm16 0h8v1h-8zm25 0h1v1h-1zm-41 1h4v1h-4zm5 0h5v1h-5zm10 0h5v1h-5zm6 0h4v1h-4zm22 0h1v1h-1zm14 0h1v1h-1zm-75 1h1v1h-1zm4 0h4v1h-4zm13 0h4v1h-4zm7 0h5v1h-5zm8 0h5v1h-5zm8 0h4v2h-4zm13 0h3v1h-3zm10 0h1v1h-1zm-65 1h1v1h-1zm6 0h7v1h-7zm12 0h4v1h-4zm10 0h9v1h-9zm24 0h7v1h-7zm-47 1h9v1h-9zm13 0h3v1h-3zm12 0h5v1h-5zm13 0h4v1h-4zm7 0h9v1h-9zm34 0h1v1h-1zm-87 1h1v1h-1zm8 0h11v1h-11zm12 0h3v1h-3zm28 0h3v1h-3zm4 0h11v1h-11zm21 0h1v1h-1zm5 0h1v1h-1zm7 0h1v1h-1zm-78 1h4v2h-4zm7 0h8v1h-8zm35 0h8v1h-8zm11 0h3v1h-3zm-63 1h1v1h-1zm22 0h2v1h-2zm31 0h1v1h-1zm10 0h4v2h-4zm16 0h1v1h-1zm-69 1h3v1h-3zm70 0h1v1h-1zm-88 1h1v1h-1zm17 0h4v1h-4zm55 0h3v1h-3zm-73 1h1v1h-1zm5 0h1v1h-1zm13 0h3v1h-3zm56 0h2v1h-2zm-75 1h1v1h-1zm5 0h1v1h-1zm3 0h8v1h-8zm11 0h2v1h-2zm56 0h3v1h-3zm6 0h8v1h-8zm-82 1h1v1h-1zm5 0h1v1h-1zm3 0h13v2h-13zm69 0h13v1h-13zm19 0h1v1h-1zm-97 1h1v1h-1zm79 0h12v1h-12zm19 0h1v1h-1zm-99 1h1v1h-1zm10 0h3v3h-3zm6 0h2v1h-2zm69 0h2v1h-2zm4 0h4v2h-4zm11 0h1v1h-1zm1 1h1v1h-1zm-11 1h3v4h-3zm12 0h1v1h-1zm-100 1h1v1h-1zm7 0h4v2h-4zm-8 1h1v1h-1zm8 1h3v2h-3zm99 0h1v1h-1zm-17 1h2v2h-2zm18 0h1v1h-1zm-100 1h2v1h-2zm-5 1h7v1h-7zm88 0h6v1h-6zm15 0h1v1h-1zm-114 1h1v1h-1zm4 0h1v1h-1zm3 0h11v1h-11zm92 0h10v1h-10zm-93 1h9v1h-9zm95 0h10v1h-10zm-95 1h7v1h-7zm97 0h8v1h-8zm13 0h1v1h-1zm-114 1h1v1h-1zm4 0h3v7h-3zm101 0h4v1h-4zm1 1h3v3h-3zm10 1h1v1h-1zm-11 2h4v1h-4zm12 0h1v1h-1zm3 0h1v1h-1zm-129 1h1v1h-1zm6 0h1v1h-1zm109 0h3v1h-3zm0 1h2v4h-2zm15 0h1v1h-1zm-125 1h1v1h-1zm9 0h2v2h-2zm-10 2h1v1h-1zm9 0h2v1h-2zm122 0h1v1h-1zm-135 1h1v1h-1zm10 0h5v1h-5zm106 0h4v1h-4zm-108 1h6v1h-6zm109 0h6v1h-6zm-122 1h1v1h-1zm11 0h7v1h-7zm112 0h6v1h-6zm12 0h1v1h-1zm-125 1h7v1h-7zm114 0h7v1h-7zm15 0h1v1h-1zm-132 1h1v1h-1zm2 0h6v1h-6zm117 0h5v1h-5zm-117 1h4v1h-4zm119 0h3v2h-3zm-118 1h3v2h-3zm59 0h2v1h-2zm-5 1h13v1h-13zm63 0h4v1h-4zm-117 1h4v2h-4zm51 0h18v1h-18zm66 0h3v3h-3zm-68 1h5v1h-5zm17 0h5v1h-5zm-71 1h1v1h-1zm6 0h3v2h-3zm47 0h4v1h-4zm21 0h4v1h-4zm-23 1h4v1h-4zm25 0h3v1h-3zm45 0h3v2h-3zm12 0h1v1h-1zm-137 1h1v1h-1zm11 0h2v1h-2zm43 0h3v1h-3zm27 0h3v1h-3zm-78 1h1v1h-1zm9 0h1v1h-1zm41 0h3v1h-3zm29 0h3v1h-3zm43 0h2v2h-2zm-113 1h2v1h-2zm40 0h3v1h-3zm31 0h3v1h-3zm-72 1h2v1h-2zm40 0h3v1h-3zm33 0h3v1h-3zm41 0h3v1h-3zm13 0h1v1h-1zm-129 1h4v1h-4zm42 0h2v1h-2zm34 0h3v1h-3zm41 0h3v1h-3zm-134 1h1v1h-1zm16 0h4v1h-4zm39 0h1v1h-1zm3 0h3v1h-3zm36 0h2v1h-2zm41 0h4v1h-4zm-125 1h1v1h-1zm5 0h4v1h-4zm43 0h2v1h-2zm37 0h2v1h-2zm40 0h5v1h-5zm-121 1h5v1h-5zm43 0h2v2h-2zm38 0h3v1h-3zm41 0h5v1h-5zm-123 1h5v1h-5zm83 0h2v1h-2zm41 0h5v1h-5zm10 0h1v1h-1zm-135 1h4v3h-4zm44 0h2v2h-2zm40 0h3v1h-3zm42 0h5v1h-5zm-41 1h2v3h-2zm42 0h4v1h-4zm-84 1h3v1h-3zm83 0h4v2h-4zm-132 1h1v1h-1zm7 0h4v1h-4zm42 0h2v4h-2zm-55 1h1v1h-1zm9 0h1v3h-1zm5 0h4v2h-4zm84 0h2v12h-2zm39 0h4v1h-4zm0 1h3v1h-3zm-122 1h3v1h-3zm121 0h4v1h-4zm-120 1h3v1h-3zm38 0h2v6h-2zm82 0h3v1h-3zm-119 1h2v1h-2zm119 0h2v1h-2zm-118 1h1v2h-1zm117 0h2v2h-2zm13 0h1v5h-1zm4 1h1v1h-1zm-135 1h2v1h-2zm119 0h2v1h-2zm-120 1h3v1h-3zm120 0h3v1h-3zm14 0h1v1h-1zm-150 1h1v1h-1zm15 0h3v1h-3zm40 0h2v4h-2zm81 0h4v1h-4zm-122 1h4v2h-4zm123 0h3v1h-3zm0 1h4v1h-4zm-124 1h4v1h-4zm84 0h2v3h-2zm41 0h4v2h-4zm-129 1h1v3h-1zm3 0h4v3h-4zm43 0h3v1h-3zm95 0h1v1h-1zm-94 1h2v2h-2zm83 0h4v1h-4zm-133 1h1v1h-1zm90 0h3v1h-3zm42 0h5v1h-5zm-125 1h5v1h-5zm44 0h2v2h-2zm39 0h2v1h-2zm41 0h5v1h-5zm-123 1h5v1h-5zm81 0h3v1h-3zm41 0h5v1h-5zm-121 1h4v1h-4zm43 0h2v1h-2zm37 0h2v1h-2zm40 0h5v1h-5zm-119 1h4v1h-4zm42 0h3v1h-3zm36 0h2v1h-2zm41 0h4v1h-4zm12 0h1v1h-1zm-130 1h4v1h-4zm42 0h2v1h-2zm34 0h3v1h-3zm41 0h3v1h-3zm-124 1h1v1h-1zm9 0h2v1h-2zm40 0h3v1h-3zm33 0h3v1h-3zm41 0h3v1h-3zm-130 1h1v1h-1zm17 0h2v1h-2zm40 0h3v1h-3zm31 0h3v1h-3zm42 0h2v2h-2zm-113 1h1v1h-1zm41 0h3v1h-3zm29 0h3v1h-3zm-85 1h1v1h-1zm14 0h2v1h-2zm43 0h3v1h-3zm27 0h3v1h-3zm44 0h3v2h-3zm-132 1h1v1h-1zm17 0h3v2h-3zm45 0h4v1h-4zm25 0h3v1h-3zm-77 1h1v1h-1zm54 0h4v1h-4zm21 0h4v1h-4zm48 0h3v3h-3zm-117 1h4v2h-4zm49 0h5v1h-5zm17 0h5v1h-5zm-15 1h18v1h-18zm-66 1h1v1h-1zm15 0h3v2h-3zm54 0h13v1h-13zm63 0h4v1h-4zm-125 1h1v1h-1zm3 0h1v1h-1zm64 0h2v1h-2zm59 0h3v2h-3zm-119 1h4v1h-4zm0 1h6v1h-6zm117 0h5v1h-5zm11 0h1v1h-1zm-131 1h1v1h-1zm4 0h7v1h-7zm114 0h7v1h-7zm-113 1h7v1h-7zm112 0h6v1h-6zm-110 1h6v1h-6zm109 0h6v1h-6zm-118 1h1v1h-1zm11 0h5v1h-5zm106 0h4v1h-4zm-103 1h2v1h-2zm102 0h2v4h-2zm15 0h1v1h-1zm-127 1h1v1h-1zm11 0h2v2h-2zm118 0h1v1h-1zm-128 2h1v1h-1zm9 0h3v7h-3zm-13 1h1v1h-1zm115 0h3v1h-3zm-1 1h4v1h-4zm1 1h3v3h-3zm-109 1h1v1h-1zm1 2h1v1h-1zm107 0h4v1h-4zm16 0h1v1h-1zm-117 1h7v1h-7zm97 0h8v1h-8zm15 0h1v1h-1zm-112 1h9v1h-9zm95 0h10v1h-10zm-94 1h11v1h-11zm92 0h10v1h-10zm-88 1h7v1h-7zm88 0h6v1h-6zm-103 1h1v1h-1zm20 0h2v1h-2zm82 0h2v2h-2zm-103 1h1v1h-1zm21 0h3v2h-3zm81 1h3v4h-3zm17 0h1v1h-1zm-98 1h4v2h-4zm100 0h1v1h-1zm-110 1h1v1h-1zm109 0h1v1h-1zm-108 1h1v1h-1zm10 0h3v3h-3zm79 1h4v2h-4zm-73 1h2v1h-2zm69 0h2v1h-2zm18 0h1v1h-1zm-93 1h13v2h-13zm70 0h12v1h-12zm25 0h1v1h-1zm-26 1h13v1h-13zm-68 1h8v1h-8zm11 0h2v1h-2zm56 0h3v1h-3zm6 0h8v1h-8zm-62 1h3v1h-3zm56 0h2v1h-2zm-56 1h4v1h-4zm55 0h3v1h-3zm-54 1h3v1h-3zm53 0h4v2h-4zm21 0h1v1h-1zm-74 1h4v2h-4zm12 0h2v1h-2zm31 0h1v1h-1zm30 0h1v1h-1zm-86 1h1v1h-1zm20 0h8v1h-8zm35 0h8v1h-8zm11 0h3v1h-3zm-65 1h1v1h-1zm13 0h11v1h-11zm12 0h3v1h-3zm28 0h3v1h-3zm4 0h11v1h-11zm-44 1h9v1h-9zm13 0h3v1h-3zm12 0h5v1h-5zm13 0h4v1h-4zm7 0h9v1h-9zm-55 1h1v1h-1zm11 0h7v1h-7zm12 0h4v1h-4zm10 0h9v1h-9zm14 0h4v2h-4zm10 0h7v1h-7zm-46 1h4v1h-4zm13 0h4v1h-4zm7 0h5v1h-5zm8 0h5v1h-5zm21 0h3v1h-3zm-57 1h1v1h-1zm22 0h4v1h-4zm5 0h5v1h-5zm10 0h5v1h-5zm6 0h4v1h-4zm-53 1h1v1h-1zm32 0h9v1h-9zm16 0h8v1h-8zm31 0h1v1h-1zm-71 1h1v1h-1zm25 0h7v1h-7zm16 0h6v1h-6zm-39 1h1v1h-1zm5 0h1v1h-1zm19 0h4v1h-4zm16 0h4v1h-4zm-33 1h1v1h-1zm18 0h2v1h-2zm17 0h2v1h-2zm30 0h1v1h-1zm-60 2h1v1h-1zm47 0h1v1h-1zm-3 1h1v1h-1zm-38 1h1v1h-1zm35 0h1v1h-1zm7 0h1v1h-1zm-51 1h1v1h-1zm13 0h1v1h-1zm35 0h1v1h-1zm-29 1h2v1h-2zm14 0h1v1h-1zm14 0h1v1h-1zm-24 2h1v1h-1zm3 0h1v1h-1zm6 0h1v1h-1zm4 0h1v1h-1zm-30 1h1v1h-1zm30 1h1v1h-1zm6 2h1v1h-1z"/>
<path fill="url(#p24)" d="M0 0m329 279h1v1h-1zm16 0h1v1h-1zm-22 1h1v1h-1zm28 0h1v1h-1zm4 1h1v1h-1zm-28 2h22v1h-22zm-5 1h32v1h-32zm-14 1h1v1h-1zm10 0h9v1h-9zm11 0h15v1h-15zm17 0h11v1h-11zm20 0h1v1h-1zm-51 1h11v1h-11zm15 0h12v1h-12zm16 0h14v1h-14zm22 0h1v1h-1zm-64 1h1v1h-1zm9 0h12v1h-12zm19 0h9v1h-9zm15 0h16v1h-16zm-36 1h13v1h-13zm22 0h7v1h-7zm15 0h17v1h-17zm-40 1h16v1h-16zm26 0h5v1h-5zm15 0h18v1h-18zm-50 1h1v1h-1zm8 0h3v1h-3zm7 0h9v1h-9zm21 0h3v1h-3zm15 0h9v1h-9zm12 0h7v1h-7zm-57 1h5v1h-5zm12 0h5v1h-5zm33 0h6v1h-6zm13 0h8v1h-8zm-67 1h1v1h-1zm7 0h6v1h-6zm15 0h4v1h-4zm33 0h3v1h-3zm12 0h10v1h-10zm-61 1h7v1h-7zm18 0h1v1h-1zm32 0h1v1h-1zm12 0h10v1h-10zm-64 1h8v1h-8zm64 0h12v1h-12zm-65 1h9v1h-9zm66 0h12v1h-12zm-74 1h1v1h-1zm6 0h11v1h-11zm68 0h13v1h-13zm-69 1h11v1h-11zm69 0h15v1h-15zm-70 1h12v1h-12zm70 0h16v1h-16zm20 0h1v1h-1zm-91 1h2v1h-2zm10 0h3v1h-3zm62 0h3v1h-3zm11 0h5v1h-5zm9 0h1v1h-1zm-93 1h2v1h-2zm84 0h6v1h-6zm10 0h1v1h-1zm-96 1h4v1h-4zm86 0h7v1h-7zm11 0h1v1h-1zm-98 1h5v1h-5zm88 0h7v1h-7zm-94 1h1v1h-1zm5 0h6v1h-6zm89 0h8v1h-8zm-90 1h7v1h-7zm90 0h9v1h-9zm-90 1h6v1h-6zm90 0h10v1h-10zm-91 1h7v1h-7zm91 0h11v1h-11zm-92 1h8v1h-8zm92 0h12v1h-12zm-98 1h1v1h-1zm5 0h9v1h-9zm93 0h13v1h-13zm-94 1h10v1h-10zm94 0h14v1h-14zm-95 1h6v1h-6zm100 0h9v1h-9zm-100 1h2v1h-2zm104 0h6v1h-6zm-105 1h2v1h-2zm107 0h5v2h-5zm-108 1h3v2h-3zm-5 1h1v1h-1zm113 0h6v1h-6zm-109 1h4v1h-4zm109 0h7v2h-7zm-110 1h5v2h-5zm120 0h1v1h-1zm-10 1h8v2h-8zm-111 1h6v2h-6zm111 1h9v1h-9zm-112 1h7v1h-7zm111 0h11v2h-11zm-111 1h8v1h-8zm-1 1h9v1h-9zm112 0h12v2h-12zm14 0h1v1h-1zm-126 1h8v1h-8zm-1 1h6v1h-6zm116 0h10v1h-10zm-116 1h4v1h-4zm119 0h7v1h-7zm-120 1h3v1h-3zm121 0h6v1h-6zm-121 1h2v1h-2zm123 0h5v2h-5zm-123 1h1v1h-1zm-5 1h1v1h-1zm4 0h2v1h-2zm124 0h6v3h-6zm-124 1h3v1h-3zm-1 1h4v3h-4zm-4 1h1v1h-1zm128 0h8v3h-8zm-66 1h12v1h-12zm-58 1h5v1h-5zm56 0h17v1h-17zm-57 1h6v1h-6zm55 0h21v1h-21zm69 0h9v1h-9zm-124 1h7v1h-7zm53 0h24v1h-24zm71 0h10v1h-10zm-124 1h8v1h-8zm52 0h26v1h-26zm71 0h11v2h-11zm-124 1h9v1h-9zm52 0h28v1h-28zm-52 1h8v1h-8zm51 0h12v1h-12zm19 0h11v1h-11zm55 0h10v1h-10zm-125 1h6v1h-6zm50 0h10v1h-10zm23 0h9v1h-9zm53 0h10v1h-10zm-126 1h5v1h-5zm50 0h8v1h-8zm24 0h9v1h-9zm54 0h8v1h-8zm-128 1h4v1h-4zm49 0h8v1h-8zm27 0h8v1h-8zm53 0h7v1h-7zm-130 1h4v1h-4zm49 0h8v1h-8zm29 0h7v1h-7zm53 0h6v1h-6zm-131 1h3v1h-3zm49 0h7v1h-7zm30 0h7v2h-7zm53 0h5v1h-5zm-132 1h2v3h-2zm48 0h7v2h-7zm85 0h5v2h-5zm-53 1h7v1h-7zm-84 1h1v1h-1zm52 0h6v1h-6zm33 0h6v2h-6zm51 0h6v2h-6zm-132 1h3v1h-3zm47 0h7v1h-7zm-47 1h4v2h-4zm47 0h6v3h-6zm34 0h7v1h-7zm50 0h7v1h-7zm9 0h1v1h-1zm-58 1h6v10h-6zm48 0h8v2h-8zm-130 1h5v1h-5zm-1 1h7v1h-7zm47 0h6v6h-6zm83 0h9v1h-9zm-130 1h8v1h-8zm129 0h10v1h-10zm-129 1h9v2h-9zm128 0h11v2h-11zm-128 2h8v1h-8zm129 0h10v1h-10zm-129 1h7v1h-7zm130 0h9v1h-9zm-130 1h6v1h-6zm48 0h6v3h-6zm83 0h8v2h-8zm-131 1h5v2h-5zm82 1h7v1h-7zm50 0h7v1h-7zm-132 1h4v1h-4zm48 0h7v1h-7zm34 0h6v2h-6zm51 0h6v2h-6zm-132 1h2v3h-2zm48 0h6v1h-6zm0 1h7v2h-7zm32 0h7v1h-7zm53 0h5v2h-5zm-54 1h7v2h-7zm-79 1h3v1h-3zm49 0h7v1h-7zm83 0h6v1h-6zm-132 1h4v1h-4zm49 0h8v1h-8zm29 0h7v1h-7zm53 0h7v1h-7zm-131 1h5v1h-5zm50 0h8v1h-8zm27 0h8v1h-8zm53 0h8v1h-8zm-130 1h6v1h-6zm51 0h8v1h-8zm24 0h9v1h-9zm54 0h8v1h-8zm-129 1h7v1h-7zm51 0h10v1h-10zm23 0h9v1h-9zm53 0h10v1h-10zm-126 1h8v1h-8zm51 0h12v1h-12zm19 0h11v1h-11zm55 0h11v1h-11zm13 0h1v1h-1zm-142 1h1v1h-1zm4 0h9v2h-9zm52 0h28v1h-28zm72 0h12v2h-12zm-71 1h26v1h-26zm-53 1h8v1h-8zm54 0h24v1h-24zm71 0h11v1h-11zm-125 1h7v1h-7zm56 0h21v1h-21zm69 0h10v1h-10zm-124 1h6v1h-6zm57 0h17v1h-17zm68 0h9v3h-9zm11 0h1v1h-1zm-136 1h5v3h-5zm59 0h12v1h-12zm67 2h7v3h-7zm-125 1h4v1h-4zm0 1h3v2h-3zm125 1h6v2h-6zm-124 1h3v1h-3zm0 1h4v1h-4zm122 0h8v1h-8zm-122 1h6v1h-6zm121 0h8v1h-8zm-120 1h7v1h-7zm117 0h11v1h-11zm-117 1h10v1h-10zm114 0h13v3h-13zm-113 1h10v2h-10zm1 2h8v3h-8zm112 0h12v1h-12zm1 1h11v1h-11zm0 1h10v2h-10zm-112 1h7v1h-7zm1 1h6v2h-6zm111 0h9v2h-9zm-110 2h5v2h-5zm110 0h8v1h-8zm0 1h7v2h-7zm-109 1h4v1h-4zm118 0h1v1h-1zm-118 1h5v1h-5zm107 0h8v1h-8zm-110 1h1v1h-1zm4 0h8v1h-8zm102 0h12v1h-12zm-101 1h12v2h-12zm96 0h16v1h-16zm0 1h15v1h-15zm-99 1h1v1h-1zm4 0h11v1h-11zm95 0h14v2h-14zm-94 1h10v1h-10zm1 1h9v1h-9zm93 0h13v1h-13zm-92 1h9v2h-9zm92 0h12v1h-12zm-96 1h1v1h-1zm96 0h11v1h-11zm-91 1h8v1h-8zm91 0h10v1h-10zm-90 1h7v1h-7zm89 0h11v1h-11zm-88 1h6v1h-6zm88 0h10v1h-10zm-87 1h6v1h-6zm14 0h3v1h-3zm62 0h3v1h-3zm11 0h9v1h-9zm-86 1h16v1h-16zm74 0h20v1h-20zm-73 1h15v1h-15zm73 0h19v1h-19zm-72 1h15v1h-15zm72 0h17v1h-17zm-71 1h14v1h-14zm71 0h16v1h-16zm-69 1h12v1h-12zm68 0h16v1h-16zm-67 1h12v1h-12zm23 0h1v1h-1zm32 0h1v1h-1zm12 0h15v1h-15zm18 0h1v1h-1zm-89 1h1v1h-1zm5 0h11v1h-11zm20 0h4v1h-4zm33 0h3v1h-3zm12 0h15v1h-15zm-63 1h10v1h-10zm17 0h5v1h-5zm33 0h6v1h-6zm13 0h13v1h-13zm-62 1h9v1h-9zm13 0h9v1h-9zm21 0h3v1h-3zm15 0h9v1h-9zm12 0h13v1h-13zm-59 1h21v1h-21zm31 0h5v1h-5zm15 0h24v1h-24zm-45 1h20v1h-20zm29 0h7v1h-7zm15 0h23v1h-23zm-42 1h19v1h-19zm26 0h9v1h-9zm15 0h23v1h-23zm-39 1h18v1h-18zm22 0h12v1h-12zm16 0h22v1h-22zm-36 1h17v1h-17zm19 0h15v1h-15zm17 0h20v1h-20zm-34 1h52v1h-52zm3 1h46v1h-46zm2 1h41v1h-41zm4 1h34v1h-34zm4 1h26v1h-26zm7 1h12v1h-12z"/>
<path fill="url(#p25)" d="M0 0m328 279h1v1h-1zm-18 5h1v1h-1zm60 3h1v1h-1zm-68 1h1v1h-1zm74 1h1v1h-1zm-80 1h1v1h-1zm79 0h1v1h-1zm9 7h1v1h-1zm5 3h1v1h-1zm0 2h1v1h-1zm-113 9h1v1h-1zm120 0h1v1h-1zm7 13h1v1h-1zm-133 2h1v1h-1zm63 13h7v1h-7zm-67 1h1v1h-1zm64 0h13v1h-13zm-2 1h16v1h-16zm80 0h1v1h-1zm-81 1h19v1h-19zm-1 1h21v1h-21zm-1 1h23v1h-23zm-1 1h24v1h-24zm-59 1h1v1h-1zm59 0h9v1h-9zm15 0h10v1h-10zm-16 1h9v1h-9zm18 0h9v1h-9zm-18 1h7v1h-7zm19 0h8v1h-8zm67 0h1v1h-1zm-87 1h8v1h-8zm21 0h7v1h-7zm-21 1h7v1h-7zm22 0h7v3h-7zm-22 1h6v1h-6zm-1 1h7v6h-7zm24 1h6v4h-6zm-1 4h7v3h-7zm-22 1h6v1h-6zm0 1h7v1h-7zm0 1h8v1h-8zm21 0h7v1h-7zm-20 1h7v1h-7zm19 0h8v1h-8zm-19 1h9v1h-9zm18 0h9v1h-9zm-17 1h9v1h-9zm15 0h10v1h-10zm70 0h1v1h-1zm-85 1h24v1h-24zm-59 1h1v1h-1zm60 0h23v1h-23zm1 1h21v1h-21zm1 1h19v1h-19zm1 1h16v1h-16zm2 1h13v1h-13zm3 1h7v1h-7zm-66 6h1v1h-1zm140 3h1v1h-1zm-2 3h2v1h-2zm-133 8h1v1h-1zm1 2h1v1h-1zm1 2h1v1h-1zm117 13h1v1h-1zm-14 13h1v1h-1zm-3 2h1v1h-1zm-69 3h1v1h-1zm2 1h1v1h-1zm58 2h1v1h-1zm-44 3h1v1h-1zm5 1h1v1h-1zm22 0h1v1h-1z"/>
<path fill="url(#p26)" d="M0 0m330 270h12v1h-12zm-7 1h16v1h-16zm17 0h10v1h-10zm-22 1h12v1h-12zm13 0h15v1h-15zm16 0h7v1h-7zm-33 1h11v1h-11zm34 0h4v1h-4zm5 0h5v1h-5zm-42 1h9v1h-9zm42 0h4v1h-4zm5 0h3v1h-3zm-49 1h7v1h-7zm48 0h7v1h-7zm-51 1h8v1h-8zm54 0h6v1h-6zm-56 1h4v1h-4zm5 0h1v1h-1zm23 0h5v1h-5zm6 0h4v1h-4zm25 0h5v1h-5zm-61 1h6v1h-6zm22 0h27v1h-27zm42 0h5v1h-5zm-66 1h6v1h-6zm20 0h8v1h-8zm26 0h8v1h-8zm22 0h4v1h-4zm-70 1h6v1h-6zm19 0h6v1h-6zm35 0h6v1h-6zm18 0h4v1h-4zm-73 1h5v1h-5zm16 0h6v1h-6zm43 0h5v1h-5zm16 0h4v1h-4zm-77 1h5v1h-5zm15 0h6v1h-6zm49 0h5v1h-5zm14 0h4v1h-4zm-79 1h4v1h-4zm14 0h5v1h-5zm54 0h4v1h-4zm13 0h4v1h-4zm-83 1h5v1h-5zm14 0h4v1h-4zm58 0h4v1h-4zm13 0h3v1h-3zm-86 1h4v1h-4zm13 0h4v1h-4zm63 0h4v1h-4zm11 0h4v1h-4zm-89 1h5v1h-5zm14 0h3v1h-3zm66 0h3v1h-3zm11 0h3v1h-3zm-92 1h4v1h-4zm12 0h4v1h-4zm71 0h3v1h-3zm10 0h3v1h-3zm-94 1h4v1h-4zm12 0h3v1h-3zm73 0h4v1h-4zm10 0h4v1h-4zm-96 1h4v1h-4zm11 0h4v1h-4zm77 0h2v1h-2zm10 0h3v1h-3zm-99 1h3v1h-3zm12 0h2v1h-2zm79 0h3v1h-3zm9 0h3v1h-3zm-101 1h3v1h-3zm10 0h4v1h-4zm83 0h3v1h-3zm9 0h3v1h-3zm-103 1h3v1h-3zm10 0h3v1h-3zm85 0h3v1h-3zm9 0h1v1h-1zm2 0h1v1h-1zm-107 1h3v1h-3zm10 0h3v1h-3zm88 0h2v1h-2zm8 0h3v1h-3zm-107 1h3v1h-3zm10 0h3v1h-3zm90 0h2v1h-2zm8 0h3v1h-3zm-109 1h3v1h-3zm10 0h3v1h-3zm92 0h2v1h-2zm8 0h3v1h-3zm-111 1h3v1h-3zm10 0h2v1h-2zm94 0h1v1h-1zm2 0h1v1h-1zm6 0h3v1h-3zm-113 1h3v1h-3zm10 0h2v1h-2zm97 0h2v1h-2zm7 0h3v1h-3zm-115 1h4v1h-4zm10 0h2v1h-2zm99 0h2v1h-2zm7 0h3v1h-3zm-117 1h4v1h-4zm10 0h2v1h-2zm101 0h2v1h-2zm7 0h2v1h-2zm-119 1h4v1h-4zm10 0h2v1h-2zm103 0h1v1h-1zm7 0h2v1h-2zm-120 1h3v1h-3zm9 0h2v1h-2zm105 0h2v1h-2zm6 0h3v1h-3zm-121 1h1v1h-1zm2 0h1v1h-1zm7 0h2v1h-2zm107 0h1v1h-1zm6 0h3v1h-3zm-123 1h3v1h-3zm9 0h2v1h-2zm108 0h2v1h-2zm7 0h2v1h-2zm-125 1h3v2h-3zm9 0h3v1h-3zm110 0h2v1h-2zm7 0h2v1h-2zm-117 1h2v1h-2zm111 0h1v1h-1zm7 0h2v2h-2zm-128 1h3v1h-3zm9 0h2v1h-2zm113 0h1v1h-1zm-123 1h3v2h-3zm9 0h2v1h-2zm115 0h1v1h-1zm6 0h2v1h-2zm-122 1h2v1h-2zm117 0h1v1h-1zm6 0h2v2h-2zm-132 1h1v1h-1zm2 0h1v1h-1zm6 0h3v1h-3zm118 0h2v1h-2zm-126 1h2v1h-2zm8 0h2v1h-2zm119 0h1v1h-1zm6 0h2v1h-2zm-134 1h3v1h-3zm9 0h1v1h-1zm120 0h1v1h-1zm5 0h3v1h-3zm-134 1h2v1h-2zm7 0h3v1h-3zm122 0h2v1h-2zm6 0h2v1h-2zm-136 1h3v1h-3zm8 0h2v1h-2zm123 0h1v1h-1zm6 0h2v2h-2zm-138 1h2v2h-2zm9 0h1v1h-1zm123 0h2v1h-2zm-124 1h2v1h-2zm60 0h2v1h-2zm6 0h2v2h-2zm59 0h1v1h-1zm6 0h2v2h-2zm-140 1h3v2h-3zm8 0h2v2h-2zm127 0h1v2h-1zm-76 1h2v1h-2zm22 0h2v1h-2zm60 0h2v2h-2zm-141 1h2v1h-2zm7 0h2v2h-2zm50 0h2v1h-2zm14 0h6v1h-6zm65 0h1v1h-1zm-137 1h3v1h-3zm55 0h1v1h-1zm5 0h2v1h-2zm6 0h2v1h-2zm12 0h6v1h-6zm59 0h2v1h-2zm6 0h1v1h-1zm-143 1h2v1h-2zm7 0h2v2h-2zm46 0h3v1h-3zm15 0h6v1h-6zm10 0h2v1h-2zm60 0h1v1h-1zm5 0h2v2h-2zm-144 1h3v1h-3zm57 0h2v2h-2zm6 0h2v1h-2zm22 0h4v1h-4zm6 0h2v1h-2zm48 0h2v1h-2zm-139 1h2v1h-2zm7 0h2v2h-2zm46 0h2v1h-2zm22 0h4v1h-4zm6 0h2v1h-2zm6 0h4v1h-4zm53 0h1v1h-1zm5 0h2v2h-2zm-146 1h3v2h-3zm51 0h1v1h-1zm5 0h2v1h-2zm6 0h2v1h-2zm4 0h2v1h-2zm4 0h2v1h-2zm10 0h10v1h-10zm12 0h2v2h-2zm49 0h2v1h-2zm-134 1h2v2h-2zm53 0h2v1h-2zm4 0h2v1h-2zm10 0h2v1h-2zm4 0h2v1h-2zm64 0h1v2h-1zm5 0h1v1h-1zm-147 1h2v1h-2zm49 0h1v1h-1zm13 0h2v1h-2zm4 0h2v2h-2zm4 0h2v1h-2zm10 0h2v1h-2zm10 0h2v1h-2zm57 0h2v2h-2zm-148 1h3v2h-3zm8 0h1v1h-1zm47 0h2v1h-2zm6 0h2v3h-2zm12 0h2v1h-2zm22 0h2v1h-2zm4 0h2v1h-2zm44 0h2v1h-2zm-136 1h2v2h-2zm42 0h2v1h-2zm4 0h2v1h-2zm18 0h6v1h-6zm12 0h2v1h-2zm14 0h2v1h-2zm4 0h2v1h-2zm48 0h1v1h-1zm-149 1h2v1h-2zm81 0h2v1h-2zm8 0h8v1h-8zm60 0h2v3h-2zm-150 1h3v2h-3zm7 0h2v3h-2zm53 0h2v2h-2zm25 0h3v1h-3zm60 0h2v1h-2zm-81 1h1v1h-1zm82 0h1v2h-1zm-146 1h2v2h-2zm48 0h2v1h-2zm6 0h8v1h-8zm42 0h2v1h-2zm10 0h1v1h-1zm45 0h2v3h-2zm-144 1h1v1h-1zm38 0h1v1h-1zm7 0h2v1h-2zm40 0h2v1h-2zm12 0h3v1h-3zm43 0h1v3h-1zm-148 1h3v2h-3zm7 0h2v3h-2zm42 0h4v1h-4zm46 0h2v1h-2zm-46 1h2v2h-2zm52 0h2v1h-2zm52 0h1v1h-1zm-153 1h2v3h-2zm45 0h2v1h-2zm8 0h2v1h-2zm6 0h1v1h-1zm94 0h2v3h-2zm-146 1h1v2h-1zm37 0h1v2h-1zm53 0h2v1h-2zm4 0h10v1h-10zm47 0h2v1h-2zm-97 1h2v1h-2zm48 0h2v1h-2zm50 0h1v3h-1zm-150 1h3v1h-3zm7 0h2v2h-2zm45 0h4v1h-4zm50 0h2v1h-2zm53 0h1v2h-1zm-155 1h2v2h-2zm44 0h2v1h-2zm4 0h2v1h-2zm56 0h2v1h-2zm4 0h2v1h-2zm-101 1h1v2h-1zm43 0h2v1h-2zm60 0h3v1h-3zm40 0h2v1h-2zm5 0h2v4h-2zm-155 1h1v1h-1zm102 0h2v1h-2zm4 0h8v1h-8zm45 0h1v4h-1zm-151 1h2v2h-2zm6 0h2v4h-2zm38 0h6v1h-6zm10 0h2v1h-2zm47 0h1v1h-1zm9 0h4v1h-4zm-60 1h2v1h-2zm51 0h3v1h-3zm-102 1h3v2h-3zm43 0h4v1h-4zm10 0h2v2h-2zm50 0h2v1h-2zm4 0h2v1h-2zm50 0h1v4h-1zm-114 1h2v1h-2zm4 0h2v1h-2zm58 0h2v2h-2zm47 0h2v3h-2zm-152 1h2v18h-2zm7 0h1v8h-1zm38 0h2v1h-2zm4 0h2v1h-2zm55 1h1v1h-1zm5 0h2v1h-2zm-58 1h2v1h-2zm54 0h2v1h-2zm6 0h2v1h-2zm42 0h1v16h-1zm4 0h2v14h-2zm-115 1h3v1h-3zm67 0h2v1h-2zm4 0h2v1h-2zm-71 1h5v1h-5zm65 0h6v1h-6zm8 0h2v1h-2zm-70 1h6v1h-6zm8 0h1v1h-1zm54 0h2v1h-2zm-65 1h1v1h-1zm3 1h2v1h-2zm4 0h2v2h-2zm66 0h2v2h-2zm-109 1h2v8h-2zm37 0h2v1h-2zm-1 1h1v2h-1zm69 0h2v2h-2zm-66 1h2v1h-2zm4 1h2v1h-2zm60 0h2v1h-2zm-67 1h1v2h-1zm69 0h2v1h-2zm-62 1h4v1h-4zm60 0h2v1h-2zm-64 1h2v2h-2zm8 0h1v1h-1zm60 0h2v1h-2zm-64 1h2v2h-2zm55 0h1v1h-1zm5 0h2v1h-2zm-102 1h1v4h-1zm36 0h2v1h-2zm62 0h8v1h-8zm52 0h1v4h-1zm-112 1h2v1h-2zm6 0h2v1h-2zm56 0h2v1h-2zm4 0h2v1h-2zm4 0h1v1h-1zm-115 1h3v2h-3zm43 0h2v1h-2zm4 0h2v1h-2zm56 0h2v1h-2zm10 0h2v2h-2zm39 0h1v7h-1zm-107 1h2v1h-2zm6 0h2v1h-2zm4 0h1v1h-1zm50 0h6v1h-6zm-104 1h2v5h-2zm6 0h2v4h-2zm36 0h2v1h-2zm6 0h2v2h-2zm56 0h4v1h-4zm6 0h2v1h-2zm45 0h2v4h-2zm-103 1h4v1h-4zm50 0h2v2h-2zm10 0h2v1h-2zm-66 1h2v1h-2zm6 0h2v1h-2zm58 0h2v1h-2zm-62 1h2v1h-2zm52 0h2v1h-2zm6 0h2v1h-2zm4 0h3v1h-3zm-103 1h1v2h-1zm41 0h4v1h-4zm52 0h4v1h-4zm6 0h4v1h-4zm49 0h1v2h-1zm-155 1h3v1h-3zm44 0h2v1h-2zm55 0h1v1h-1zm5 0h2v2h-2zm46 0h1v5h-1zm-149 1h2v2h-2zm6 0h2v2h-2zm38 0h3v1h-3zm109 0h2v3h-2zm-109 1h1v1h-1zm3 0h2v1h-2zm6 0h2v3h-2zm46 0h2v1h-2zm8 0h4v1h-4zm-107 1h1v1h-1zm7 0h1v3h-1zm38 0h2v1h-2zm12 0h2v1h-2zm38 0h12v1h-12zm-95 1h2v1h-2zm94 0h1v1h-1zm7 0h4v1h-4zm6 0h2v1h-2zm46 0h1v2h-1zm-153 1h3v1h-3zm47 0h2v1h-2zm48 0h2v1h-2zm10 0h2v1h-2zm43 0h2v1h-2zm-147 1h2v1h-2zm7 0h1v3h-1zm38 0h5v1h-5zm9 0h2v2h-2zm38 0h2v1h-2zm55 0h1v2h-1zm4 0h2v2h-2zm-151 1h1v1h-1zm50 0h2v3h-2zm54 0h2v2h-2zm-104 1h2v1h-2zm64 0h1v1h-1zm26 0h2v1h-2zm4 0h2v2h-2zm6 0h2v1h-2zm46 0h1v1h-1zm5 0h1v1h-1zm-151 1h3v1h-3zm7 0h2v2h-2zm49 0h2v1h-2zm8 0h2v1h-2zm21 0h7v1h-7zm61 0h2v1h-2zm4 0h2v2h-2zm-149 1h2v2h-2zm57 0h2v1h-2zm24 0h4v1h-4zm6 0h4v1h-4zm8 0h2v1h-2zm50 0h1v1h-1zm-138 1h1v1h-1zm41 0h1v1h-1zm3 0h4v1h-4zm34 0h2v2h-2zm4 0h2v1h-2zm4 0h2v2h-2zm4 0h2v1h-2zm52 0h1v2h-1zm-149 1h3v1h-3zm7 0h2v3h-2zm44 0h2v1h-2zm4 0h2v1h-2zm14 0h4v1h-4zm8 0h2v1h-2zm67 0h1v2h-1zm-143 1h2v1h-2zm49 0h3v1h-3zm9 0h2v1h-2zm8 0h2v1h-2zm8 0h6v1h-6zm14 0h4v1h-4zm8 0h2v1h-2zm51 0h2v1h-2zm-147 1h3v2h-3zm52 0h2v1h-2zm6 0h4v1h-4zm10 0h2v1h-2zm6 0h2v1h-2zm4 0h2v1h-2zm8 0h2v1h-2zm4 0h2v1h-2zm52 0h2v1h-2zm5 0h1v1h-1zm-140 1h2v1h-2zm53 0h2v1h-2zm14 0h8v1h-8zm22 0h1v1h-1zm46 0h1v2h-1zm4 0h2v2h-2zm-145 1h2v1h-2zm7 0h1v1h-1zm54 0h2v1h-2zm28 0h2v1h-2zm-89 1h3v1h-3zm7 0h2v1h-2zm46 0h2v1h-2zm12 0h4v1h-4zm8 0h2v1h-2zm4 0h6v1h-6zm63 0h1v2h-1zm5 0h1v1h-1zm-144 1h2v2h-2zm7 0h1v1h-1zm57 0h2v1h-2zm4 0h2v1h-2zm6 0h2v1h-2zm8 0h2v2h-2zm8 0h1v1h-1zm53 0h2v1h-2zm-85 1h2v2h-2zm14 0h2v1h-2zm4 0h2v1h-2zm62 0h1v2h-1zm5 0h1v1h-1zm-142 1h2v2h-2zm6 0h2v1h-2zm75 0h4v1h-4zm60 0h2v2h-2zm-134 1h1v1h-1zm70 0h2v1h-2zm59 0h2v1h-2zm-136 1h3v1h-3zm7 0h2v1h-2zm56 0h2v1h-2zm10 0h2v1h-2zm4 0h4v1h-4zm59 0h1v1h-1zm4 0h2v2h-2zm-139 1h1v1h-1zm7 0h1v1h-1zm61 0h2v1h-2zm6 0h2v1h-2zm60 0h2v1h-2zm-134 1h3v1h-3zm8 0h1v1h-1zm126 0h1v1h-1zm4 0h2v2h-2zm-137 1h1v1h-1zm7 0h2v1h-2zm125 0h1v2h-1zm-131 1h2v2h-2zm7 0h1v1h-1zm128 0h2v2h-2zm-128 1h2v1h-2zm123 0h1v1h-1zm-129 1h2v1h-2zm7 0h1v1h-1zm121 0h2v1h-2zm5 0h2v1h-2zm-133 1h3v1h-3zm7 0h2v1h-2zm121 0h1v1h-1zm5 0h1v1h-1zm-132 1h2v1h-2zm8 0h1v2h-1zm118 0h1v1h-1zm5 0h2v1h-2zm-131 1h3v1h-3zm125 0h2v1h-2zm5 0h2v1h-2zm-129 1h3v1h-3zm7 0h2v1h-2zm117 0h1v1h-1zm5 0h1v1h-1zm-128 1h2v1h-2zm7 0h2v1h-2zm115 0h1v1h-1zm5 0h2v1h-2zm-127 1h3v1h-3zm8 0h2v2h-2zm113 0h1v1h-1zm5 0h2v1h-2zm-125 1h3v1h-3zm119 0h2v1h-2zm6 0h1v1h-1zm-124 1h2v1h-2zm7 0h2v1h-2zm111 0h1v1h-1zm5 0h2v1h-2zm-122 1h2v1h-2zm7 0h2v1h-2zm109 0h1v1h-1zm6 0h1v1h-1zm-122 1h3v1h-3zm8 0h2v1h-2zm112 0h2v1h-2zm-119 1h3v1h-3zm8 0h2v1h-2zm105 0h2v1h-2zm5 0h2v2h-2zm-117 1h3v1h-3zm8 0h2v1h-2zm103 0h2v1h-2zm-110 1h3v1h-3zm8 0h2v1h-2zm101 0h2v1h-2zm6 0h2v1h-2zm-114 1h2v1h-2zm8 0h2v1h-2zm99 0h2v1h-2zm6 0h2v1h-2zm-112 1h2v1h-2zm8 0h2v1h-2zm98 0h1v1h-1zm5 0h2v1h-2zm-110 1h2v1h-2zm8 0h2v1h-2zm95 0h2v1h-2zm6 0h2v1h-2zm-108 1h2v1h-2zm8 0h2v1h-2zm93 0h2v1h-2zm6 0h2v1h-2zm-106 1h2v1h-2zm8 0h2v1h-2zm91 0h1v1h-1zm6 0h2v1h-2zm-104 1h3v1h-3zm8 0h3v1h-3zm88 0h1v1h-1zm7 0h2v1h-2zm-102 1h3v1h-3zm9 0h2v1h-2zm85 0h2v1h-2zm7 0h2v1h-2zm-100 1h3v1h-3zm9 0h2v1h-2zm83 0h1v1h-1zm6 0h3v1h-3zm-97 1h3v1h-3zm9 0h3v1h-3zm80 0h2v1h-2zm7 0h3v1h-3zm-95 1h3v1h-3zm10 0h2v1h-2zm77 0h2v1h-2zm7 0h2v1h-2zm-93 1h4v1h-4zm10 0h3v1h-3zm74 0h2v1h-2zm7 0h3v1h-3zm-89 1h3v1h-3zm10 0h3v1h-3zm70 0h3v1h-3zm8 0h3v1h-3zm-87 1h4v1h-4zm10 0h3v1h-3zm67 0h3v1h-3zm9 0h2v1h-2zm-84 1h3v1h-3zm10 0h3v1h-3zm63 0h3v1h-3zm9 0h3v1h-3zm-81 1h3v1h-3zm11 0h4v1h-4zm59 0h2v1h-2zm9 0h3v1h-3zm-77 1h3v1h-3zm12 0h3v1h-3zm54 0h2v1h-2zm10 0h3v1h-3zm-75 1h4v1h-4zm14 0h3v1h-3zm48 0h4v1h-4zm11 0h3v1h-3zm-71 1h4v1h-4zm14 0h4v1h-4zm43 0h1v1h-1zm2 0h2v1h-2zm10 0h3v1h-3zm-67 1h4v1h-4zm15 0h1v1h-1zm2 0h2v1h-2zm34 0h5v1h-5zm14 0h4v1h-4zm-63 1h5v1h-5zm16 0h6v1h-6zm29 0h5v1h-5zm15 0h4v1h-4zm-58 1h5v1h-5zm20 0h15v1h-15zm16 0h8v1h-8zm20 0h4v1h-4zm-53 1h5v1h-5zm24 0h8v1h-8zm26 0h5v1h-5zm-48 1h7v1h-7zm45 0h5v1h-5zm-42 1h8v1h-8zm37 0h2v1h-2zm3 0h4v1h-4zm-36 1h10v1h-10zm27 0h2v1h-2zm4 0h5v1h-5zm-26 1h27v1h-27zm7 1h12v1h-12z"/>
<path fill="url(#p27)" d="M0 0m325 273h4v1h-4zm21 0h2v1h-2zm-26 1h2v1h-2zm32 0h1v1h-1zm-36 1h2v1h-2zm40 0h1v1h-1zm-42 1h1v1h-1zm45 0h1v1h-1zm-49 1h2v1h-2zm18 0h4v1h-4zm14 0h5v1h-5zm20 0h1v1h-1zm-54 1h1v1h-1zm14 0h2v1h-2zm29 0h1v1h-1zm13 0h1v1h-1zm-58 1h1v1h-1zm12 0h2v1h-2zm36 0h2v1h-2zm13 0h1v1h-1zm-63 1h1v1h-1zm11 0h2v1h-2zm54 0h1v1h-1zm-67 1h1v1h-1zm10 0h1v1h-1zm49 0h1v1h-1zm10 0h1v1h-1zm-71 1h1v1h-1zm9 0h1v1h-1zm55 0h1v1h-1zm-66 1h1v1h-1zm9 0h1v1h-1zm59 0h1v1h-1zm8 0h1v1h-1zm-69 1h1v1h-1zm63 0h1v1h-1zm8 0h1v1h-1zm-73 1h1v1h-1zm-2 1h1v1h-1zm71 0h1v1h-1zm7 0h1v1h-1zm-87 1h1v1h-1zm82 0h1v1h-1zm-76 1h1v1h-1zm-2 1h1v1h-1zm81 0h1v1h-1zm6 0h1v1h-1zm-95 1h1v1h-1zm7 0h1v1h-1zm89 0h1v1h-1zm-97 1h1v1h-1zm98 0h1v1h-1zm-99 1h1v1h-1zm96 1h1v1h-1zm1 1h1v1h-1zm-100 1h1v1h-1zm101 0h1v1h-1zm-102 1h1v1h-1zm6 0h1v1h-1zm-7 1h1v1h-1zm6 0h1v1h-1zm-1 1h1v1h-1zm-1 1h1v1h-1zm108 0h1v1h-1zm-109 1h1v1h-1zm110 0h1v1h-1zm-111 1h1v1h-1zm-1 1h1v1h-1zm109 0h1v1h-1zm-115 1h1v1h-1zm116 0h1v1h-1zm-117 1h1v1h-1zm5 1h1v1h-1zm113 0h1v1h-1zm5 0h1v1h-1zm-119 1h1v1h-1zm115 0h1v1h-1zm-121 1h1v1h-1zm127 1h1v1h-1zm-128 1h1v1h-1zm-1 1h1v1h-1zm5 0h1v1h-1zm121 0h1v1h-1zm-127 2h1v1h-1zm4 1h1v1h-1zm125 0h1v1h-1zm4 0h1v1h-1zm-130 2h1v1h-1zm127 0h1v1h-1zm4 0h1v1h-1zm-132 2h1v1h-1zm133 0h1v1h-1zm-3 1h1v1h-1zm4 1h1v1h-1zm-3 1h1v1h-1zm-133 1h1v1h-1zm-5 1h1v1h-1zm142 0h1v1h-1zm-138 1h1v1h-1zm139 1h1v1h-1zm-144 1h1v1h-1zm141 0h1v1h-1zm-137 1h1v1h-1zm-5 2h1v1h-1zm143 0h1v1h-1zm-144 3h1v1h-1zm4 0h1v2h-1zm141 0h1v1h-1zm3 0h1v1h-1zm1 3h1v1h-1zm-146 1h1v2h-1zm143 0h1v1h-1zm4 3h1v2h-1zm-152 1h1v1h-1zm149 0h1v1h-1zm-145 1h1v1h-1zm146 3h1v2h-1zm3 1h1v1h-1zm-154 2h1v3h-1zm4 0h1v8h-1zm150 0h1v2h-1zm-154 14h1v4h-1zm4 2h1v3h-1zm147 2h1v1h-1zm3 1h1v1h-1zm-3 1h1v1h-1zm-150 3h1v2h-1zm4 1h1v2h-1zm145 1h1v2h-1zm-144 3h1v2h-1zm-4 1h1v1h-1zm150 1h1v1h-1zm-145 1h1v3h-1zm142 0h1v1h-1zm-146 2h1v1h-1zm148 0h1v1h-1zm-147 3h1v1h-1zm4 0h1v1h-1zm142 0h1v2h-1zm-3 1h1v1h-1zm-142 1h1v1h-1zm1 1h1v1h-1zm0 2h1v1h-1zm4 0h1v1h-1zm135 1h1v1h-1zm3 0h1v1h-1zm-141 2h1v1h-1zm137 0h1v1h-1zm-136 2h1v1h-1zm1 2h1v1h-1zm5 1h1v1h-1zm-4 1h1v1h-1zm131 0h1v1h-1zm-126 1h1v1h-1zm-4 1h1v1h-1zm129 0h1v1h-1zm3 0h1v1h-1zm-127 1h1v1h-1zm126 1h1v1h-1zm-129 1h1v1h-1zm125 0h1v1h-1zm-120 1h1v1h-1zm122 1h1v1h-1zm-125 1h1v1h-1zm121 0h1v1h-1zm-116 1h1v1h-1zm115 0h1v1h-1zm3 1h1v1h-1zm-121 1h1v1h-1zm116 1h1v1h-1zm-1 1h1v1h-1zm2 2h1v1h-1zm-1 1h1v1h-1zm-111 1h1v1h-1zm5 0h1v1h-1zm105 0h1v1h-1zm-109 1h1v1h-1zm5 0h1v1h-1zm-4 1h1v1h-1zm5 0h1v1h-1zm-4 1h1v1h-1zm5 0h1v1h-1zm99 0h1v1h-1zm-103 1h1v1h-1zm98 0h1v1h-1zm4 0h1v1h-1zm-5 1h1v1h-1zm4 0h1v1h-1zm-93 1h1v1h-1zm92 0h1v1h-1zm-91 1h1v1h-1zm85 0h1v1h-1zm-88 2h1v1h-1zm6 0h1v1h-1zm84 0h1v1h-1zm-6 1h1v1h-1zm-81 1h1v1h-1zm6 0h1v1h-1zm77 1h1v1h-1zm-80 1h1v1h-1zm71 1h1v1h-1zm-68 1h1v1h-1zm66 0h1v1h-1zm6 0h1v1h-1zm-70 1h1v1h-1zm8 0h1v1h-1zm51 1h1v1h-1zm-55 1h1v1h-1zm10 0h1v1h-1zm42 0h1v1h-1zm8 0h1v1h-1zm-57 1h1v1h-1zm10 0h1v1h-1zm35 0h1v1h-1zm-43 1h1v1h-1zm13 0h2v1h-2zm26 0h1v1h-1zm11 0h1v1h-1zm-30 1h2v1h-2zm10 0h4v1h-4zm17 0h1v1h-1zm-3 1h1v1h-1zm-33 1h1v1h-1zm6 1h2v1h-2zm15 0h2v1h-2z"/>
<path fill="url(#p28)" d="M0 0m329 273h3v1h-3zm14 0h3v1h-3zm-20 1h1v1h-1zm2 0h7v1h-7zm25 0h2v1h-2zm-32 1h1v1h-1zm9 0h2v1h-2zm3 0h2v1h-2zm24 0h2v1h-2zm-39 1h3v1h-3zm43 0h1v1h-1zm-46 1h4v1h-4zm13 0h3v1h-3zm22 0h2v1h-2zm14 0h1v1h-1zm-52 1h4v1h-4zm11 0h2v1h-2zm32 0h2v1h-2zm9 0h3v1h-3zm-52 1h2v1h-2zm8 0h1v1h-1zm39 0h1v1h-1zm5 0h6v1h-6zm-51 1h1v1h-1zm4 0h1v1h-1zm45 0h10v1h-10zm-56 1h9v1h-9zm59 0h1v1h-1zm2 0h7v1h-7zm-63 1h8v1h-8zm64 0h6v1h-6zm7 0h1v1h-1zm-73 1h6v2h-6zm7 0h1v1h-1zm61 0h7v1h-7zm2 1h1v1h-1zm2 0h4v1h-4zm-76 1h1v1h-1zm5 0h3v1h-3zm71 0h7v1h-7zm-77 1h1v1h-1zm4 0h3v1h-3zm75 0h5v1h-5zm-77 1h4v1h-4zm79 0h4v1h-4zm5 0h1v1h-1zm-89 1h1v1h-1zm4 0h3v1h-3zm81 0h5v1h-5zm-82 1h2v1h-2zm84 0h3v1h-3zm4 0h1v1h-1zm-89 1h2v1h-2zm86 0h2v1h-2zm3 0h2v1h-2zm-89 1h1v1h-1zm87 0h5v1h-5zm-88 1h1v1h-1zm89 0h1v1h-1zm5 0h1v1h-1zm-101 1h1v1h-1zm6 0h1v1h-1zm96 0h1v1h-1zm-103 1h1v1h-1zm6 0h1v1h-1zm-1 1h1v1h-1zm97 1h1v1h-1zm-104 1h1v1h-1zm105 0h1v1h-1zm4 0h1v1h-1zm-110 1h2v1h-2zm107 0h5v1h-5zm-108 1h3v1h-3zm109 0h4v1h-4zm-110 1h4v1h-4zm111 0h4v1h-4zm-112 1h5v1h-5zm114 0h1v1h-1zm-115 1h1v1h-1zm2 0h3v1h-3zm2 1h1v1h-1zm-1 1h1v1h-1zm113 0h1v1h-1zm4 0h1v1h-1zm-123 2h1v1h-1zm4 1h1v1h-1zm121 0h1v1h-1zm-126 1h5v1h-5zm123 0h1v1h-1zm-123 1h4v1h-4zm-1 1h3v1h-3zm129 0h1v1h-1zm-130 1h3v2h-3zm127 0h1v1h-1zm4 1h1v1h-1zm-130 1h2v1h-2zm-3 1h1v1h-1zm4 0h1v1h-1zm127 0h1v1h-1zm-132 2h1v1h-1zm4 0h1v1h-1zm129 0h1v1h-1zm-134 2h1v1h-1zm4 0h1v1h-1zm134 0h1v1h-1zm-2 1h3v1h-3zm-137 1h1v1h-1zm138 0h3v3h-3zm-139 3h1v1h-1zm140 0h1v2h-1zm2 0h1v2h-1zm-139 1h1v1h-1zm-2 1h3v1h-3zm142 0h1v3h-1zm-144 1h2v1h-2zm3 0h1v1h-1zm-3 1h1v1h-1zm2 0h2v1h-2zm140 0h1v1h-1zm-142 1h3v1h-3zm144 0h2v1h-2zm-145 1h4v2h-4zm145 0h1v1h-1zm-1 1h3v1h-3zm-143 1h2v4h-2zm144 0h2v1h-2zm-146 1h1v1h-1zm147 0h2v1h-2zm-1 1h3v1h-3zm0 1h1v1h-1zm2 0h1v1h-1zm-149 1h1v1h-1zm150 0h1v1h-1zm-2 2h1v2h-1zm-145 1h1v2h-1zm-4 2h1v3h-1zm152 0h1v1h-1zm-2 1h3v2h-3zm1 2h2v4h-2zm-151 1h4v2h-4zm0 2h2v1h-2zm0 1h1v2h-1zm152 0h1v1h-1zm-1 1h3v1h-3zm-152 2h1v8h-1zm152 4h1v1h-1zm0 2h1v1h-1zm-152 3h1v1h-1zm3 0h1v1h-1zm-1 1h2v2h-2zm-1 2h3v2h-3zm153 0h1v3h-1zm-153 2h2v4h-2zm3 1h1v3h-1zm147 2h1v2h-1zm-150 1h1v1h-1zm1 1h1v1h-1zm151 1h1v1h-1zm-148 2h1v1h-1zm145 1h1v1h-1zm-148 1h1v1h-1zm150 1h1v1h-1zm-146 1h1v1h-1zm144 0h2v2h-2zm-147 2h1v1h-1zm146 0h3v1h-3zm0 1h2v2h-2zm-142 1h1v1h-1zm-3 1h1v1h-1zm144 0h3v1h-3zm-142 1h2v1h-2zm142 0h2v2h-2zm-143 1h1v1h-1zm2 0h2v1h-2zm-1 1h3v1h-3zm141 0h2v1h-2zm-140 1h2v1h-2zm142 0h1v1h-1zm-143 1h4v1h-4zm140 0h1v1h-1zm-139 1h3v1h-3zm0 1h1v2h-1zm3 0h1v1h-1zm1 2h1v1h-1zm136 0h1v1h-1zm-3 1h1v1h-1zm-132 1h1v1h-1zm134 0h1v1h-1zm-3 1h3v2h-3zm-130 1h1v1h-1zm-3 1h2v1h-2zm133 0h2v2h-2zm-132 1h1v2h-1zm3 0h1v1h-1zm129 1h1v1h-1zm-128 1h1v1h-1zm-3 1h1v1h-1zm4 1h1v1h-1zm123 0h1v1h-1zm-123 1h2v1h-2zm-2 1h1v1h-1zm2 0h1v1h-1zm121 1h1v1h-1zm-118 1h1v2h-1zm1 2h1v1h-1zm1 1h1v1h-1zm113 0h1v2h-1zm3 0h1v1h-1zm-119 1h1v1h-1zm4 0h1v1h-1zm114 0h1v1h-1zm-117 1h1v1h-1zm4 0h1v1h-1zm110 0h3v1h-3zm-113 1h1v1h-1zm112 0h3v1h-3zm-107 1h1v1h-1zm106 0h3v1h-3zm-109 1h1v1h-1zm4 0h1v1h-1zm104 0h3v1h-3zm1 2h1v1h-1zm-4 1h1v1h-1zm3 0h1v1h-1zm-101 1h1v1h-1zm97 0h3v1h-3zm-97 1h3v1h-3zm96 0h3v1h-3zm-93 1h1v1h-1zm92 0h3v1h-3zm-95 1h1v1h-1zm93 0h4v1h-4zm-92 1h1v1h-1zm92 0h3v1h-3zm-86 1h1v1h-1zm83 0h1v1h-1zm4 0h1v1h-1zm-89 2h1v1h-1zm4 0h2v1h-2zm0 1h3v1h-3zm81 0h1v1h-1zm-82 1h6v1h-6zm76 0h5v1h-5zm-74 1h5v1h-5zm72 0h1v1h-1zm5 0h1v1h-1zm-76 1h1v1h-1zm8 1h1v1h-1zm2 1h1v1h-1zm55 0h3v1h-3zm6 0h1v1h-1zm-58 1h1v1h-1zm50 0h5v1h-5zm6 0h1v1h-1zm-61 1h1v1h-1zm8 0h1v1h-1zm44 0h1v1h-1zm3 0h4v1h-4zm-52 1h1v1h-1zm8 0h1v1h-1zm37 0h1v1h-1zm7 0h2v1h-2zm-50 1h1v1h-1zm10 0h2v1h-2zm29 0h1v1h-1zm9 0h1v1h-1zm-46 1h1v1h-1zm15 0h2v1h-2zm16 0h2v1h-2zm-27 1h1v1h-1zm16 0h4v2h-4zm20 0h1v1h-1zm-31 1h1v1h-1zm26 0h2v1h-2zm-19 1h13v1h-13z"/>
<path fill="url(#p29)" d="M0 0m332 273h11v1h-11zm-8 1h1v1h-1zm8 0h7v2h-7zm8 0h10v1h-10zm-21 1h8v1h-8zm21 0h13v1h-13zm-22 1h7v1h-7zm8 0h32v1h-32zm-9 1h8v1h-8zm32 0h10v1h-10zm11 0h1v1h-1zm-46 1h3v1h-3zm4 0h2v1h-2zm36 0h1v1h-1zm2 0h5v1h-5zm-49 1h2v1h-2zm4 0h3v2h-3zm4 0h2v1h-2zm42 0h4v1h-4zm-52 1h5v1h-5zm58 1h1v1h-1zm-67 4h4v1h-4zm-1 1h3v1h-3zm83 0h1v1h-1zm-85 1h3v1h-3zm86 0h1v1h-1zm-87 1h3v1h-3zm-2 1h4v1h-4zm-1 1h4v1h-4zm-1 1h5v1h-5zm-1 1h5v1h-5zm95 0h4v1h-4zm-96 1h5v1h-5zm97 0h3v1h-3zm-98 1h5v1h-5zm99 0h5v1h-5zm-100 1h5v1h-5zm101 0h5v1h-5zm-102 1h5v1h-5zm104 0h4v1h-4zm-104 1h4v1h-4zm105 0h3v1h-3zm-105 1h3v1h-3zm0 1h2v1h-2zm0 1h1v1h-1zm110 1h2v1h-2zm-115 1h1v1h-1zm114 0h4v1h-4zm-115 1h4v1h-4zm116 0h4v1h-4zm-117 1h4v1h-4zm118 0h1v2h-1zm2 0h1v1h-1zm-121 1h5v1h-5zm122 0h1v1h-1zm-122 1h4v1h-4zm121 0h3v2h-3zm-122 1h4v1h-4zm123 1h3v1h-3zm0 1h4v1h-4zm1 1h3v1h-3zm1 1h2v1h-2zm0 1h3v1h-3zm-129 1h2v1h-2zm130 0h3v1h-3zm-130 1h3v1h-3zm131 0h3v2h-3zm-132 1h4v1h-4zm0 1h3v1h-3zm133 0h3v2h-3zm-134 1h4v1h-4zm0 1h3v1h-3zm136 0h1v1h-1zm-137 1h4v2h-4zm-1 2h4v2h-4zm0 2h3v1h-3zm-1 1h3v1h-3zm141 0h1v1h-1zm-141 1h1v1h-1zm141 0h2v2h-2zm1 2h1v3h-1zm-144 5h1v1h-1zm145 0h1v1h-1zm-146 1h2v2h-2zm147 1h1v1h-1zm-147 1h3v2h-3zm147 0h2v1h-2zm0 1h3v1h-3zm-148 1h4v1h-4zm149 0h2v2h-2zm-149 1h3v5h-3zm150 1h1v1h-1zm-1 1h2v1h-2zm-150 3h4v1h-4zm2 3h1v1h-1zm-1 1h2v2h-2zm-1 2h2v1h-2zm151 0h3v5h-3zm-151 1h3v5h-3zm152 4h1v1h-1zm-151 1h2v1h-2zm151 0h2v2h-2zm-152 1h3v3h-3zm151 1h3v5h-3zm-151 2h2v1h-2zm0 1h1v2h-1zm151 2h2v3h-2zm-149 2h1v4h-1zm150 1h1v1h-1zm-1 1h2v3h-2zm-149 2h2v2h-2zm148 1h3v1h-3zm-149 1h3v1h-3zm149 0h2v4h-2zm-149 1h1v1h-1zm2 0h1v1h-1zm-2 1h3v2h-3zm1 2h1v1h-1zm2 0h1v1h-1zm145 0h3v1h-3zm-147 1h3v1h-3zm147 0h2v1h-2zm-146 1h2v1h-2zm-1 1h4v1h-4zm1 1h3v3h-3zm1 3h3v1h-3zm0 1h1v1h-1zm144 2h1v1h-1zm-2 1h2v2h-2zm-1 2h2v2h-2zm-138 1h2v1h-2zm0 1h3v2h-3zm137 0h3v1h-3zm0 1h2v2h-2zm-137 1h4v1h-4zm1 1h2v1h-2zm135 0h2v1h-2zm-135 1h4v1h-4zm1 1h3v1h-3zm2 1h2v2h-2zm130 1h1v1h-1zm-130 1h3v2h-3zm129 0h2v2h-2zm-128 2h3v1h-3zm127 0h3v1h-3zm-127 1h2v1h-2zm127 0h2v1h-2zm-1 1h3v1h-3zm-124 1h1v1h-1zm2 0h1v1h-1zm121 0h3v1h-3zm-123 1h2v1h-2zm3 0h1v2h-1zm120 0h2v1h-2zm-122 1h1v1h-1zm121 0h3v1h-3zm-120 1h2v1h-2zm119 0h3v1h-3zm-119 1h3v1h-3zm118 0h3v1h-3zm-117 1h3v1h-3zm117 0h2v1h-2zm-116 1h3v1h-3zm116 0h1v1h-1zm-115 1h3v1h-3zm1 1h3v1h-3zm0 1h4v1h-4zm2 1h3v1h-3zm0 1h4v1h-4zm106 0h3v1h-3zm-105 1h4v1h-4zm104 0h3v1h-3zm-103 1h2v1h-2zm3 0h1v1h-1zm100 0h2v1h-2zm-102 1h3v1h-3zm1 1h2v1h-2zm1 1h4v1h-4zm2 1h4v1h-4zm1 1h4v1h-4zm90 0h1v1h-1zm-89 1h1v1h-1zm2 0h2v1h-2zm86 0h3v1h-3zm-87 1h5v1h-5zm85 0h4v1h-4zm-83 1h3v1h-3zm82 0h4v1h-4zm-81 1h2v1h-2zm80 0h3v1h-3zm-4 2h4v1h-4zm-70 1h4v1h-4zm68 0h5v1h-5zm-68 1h6v1h-6zm66 0h5v1h-5zm-64 1h6v1h-6zm64 0h3v1h-3zm-62 1h7v1h-7zm62 0h1v1h-1zm-59 1h7v1h-7zm52 0h2v1h-2zm-49 1h7v1h-7zm45 0h6v1h-6zm-43 1h2v1h-2zm3 0h1v1h-1zm2 0h4v1h-4zm34 0h5v1h-5zm6 0h2v1h-2zm-43 1h14v1h-14zm33 0h1v1h-1zm2 0h8v1h-8zm-31 1h2v1h-2zm3 0h12v1h-12zm16 0h16v1h-16zm-14 1h10v1h-10zm14 0h11v1h-11z"/>
<path fill="url(#p30)" d="M0 0m395 304h1v1h-1zm0 1h2v1h-2zm0 1h1v1h-1zm-80 127h1v1h-1z"/>
<ellipse cx="336.3" cy="355.0" rx="10.5" ry="11.2" fill="none" stroke="#5555ff" stroke-width="1"/>
<ellipse cx="336.3" cy="355.0" rx="13.0" ry="13.9" fill="none" stroke="#5555ff" stroke-width="1"/>
<ellipse cx="336.3" cy="355.0" rx="15.5" ry="16.5" fill="none" stroke="#5555ff" stroke-width="1"/>
<ellipse cx="336.3" cy="355.0" rx="18.0" ry="19.2" fill="none" stroke="#5555ff" stroke-width="1"/>
<ellipse cx="336.3" cy="355.0" rx="20.5" ry="21.9" fill="none" stroke="#5555ff" stroke-width="1"/>
<ellipse cx="336.3" cy="355.0" rx="22.5" ry="24.0" fill="none" stroke="#5555ff" stroke-width="1"/>
<ellipse cx="336.3" cy="355.0" rx="24.5" ry="26.1" fill="none" stroke="#5555ff" stroke-width="1"/>
<ellipse cx="336.3" cy="355.0" rx="29.0" ry="30.9" fill="none" stroke="#5555ff" stroke-width="1"/>
<ellipse cx="336.3" cy="355.0" rx="33.5" ry="35.7" fill="none" stroke="#5555ff" stroke-width="1"/>
<ellipse cx="336.3" cy="355.0" rx="38.0" ry="40.5" fill="none" stroke="#5555ff" stroke-width="1"/>
<ellipse cx="336.3" cy="355.0" rx="48.5" ry="51.7" fill="none" stroke="#5555ff" stroke-width="1"/>
<ellipse cx="336.3" cy="355.0" rx="57.0" ry="60.8" fill="none" stroke="#5555ff" stroke-width="1"/>
<ellipse cx="336.3" cy="355.0" rx="64.0" ry="68.2" fill="none" stroke="#5555ff" stroke-width="1"/>
<ellipse cx="336.3" cy="355.0" rx="71.0" ry="75.7" fill="none" stroke="#5555ff" stroke-width="1"/>
<path d="M344.8 355.0L407.3 355.0M350.2 356.9L360.6 358.4M344.5 357.3L404.9 374.6M349.2 360.7L358.9 365.0M343.7 359.5L397.8 392.8M347.4 364.1L355.7 370.9M342.3 361.4L386.5 408.5M344.8 366.8L351.2 375.7M340.6 362.8L371.8 420.5M341.7 368.8L345.7 379.1M338.5 363.8L354.7 428.1M338.1 369.8L339.5 380.9M336.3 364.1L336.3 430.7M334.5 369.8L333.1 380.9M334.1 363.8L317.9 428.1M330.9 368.8L326.9 379.1M332.1 362.8L300.8 420.5M327.8 366.8L321.4 375.7M330.3 361.4L286.1 408.5M325.2 364.1L316.9 370.9M328.9 359.5L274.8 392.8M323.4 360.7L313.7 365.0M328.1 357.3L267.7 374.6M322.4 356.9L312.0 358.4M327.8 355.0L265.3 355.0M322.4 353.1L312.0 351.6M328.1 352.7L267.7 335.4M323.4 349.3L313.7 345.0M328.9 350.5L274.8 317.2M325.2 345.9L316.9 339.1M330.3 348.6L286.1 301.5M327.8 343.2L321.4 334.3M332.1 347.2L300.8 289.5M330.9 341.2L326.9 330.9M334.1 346.2L317.9 281.9M334.5 340.2L333.1 329.1M336.3 345.9L336.3 279.3M338.1 340.2L339.5 329.1M338.5 346.2L354.7 281.9M341.7 341.2L345.7 330.9M340.6 347.2L371.8 289.5M344.8 343.2L351.2 334.3M342.3 348.6L386.5 301.5M347.4 345.9L355.7 339.1M343.7 350.5L397.8 317.2M349.2 349.3L358.9 345.0M344.5 352.7L404.9 335.4M350.2 353.1L360.6 351.6" fill="none" stroke="#5555ff" stroke-width="1"/>
</g>
<rect x="3" y="16" width="221" height="1" fill="#0000aa"/>
<rect x="3" y="461" width="221" height="1" fill="#0000aa"/>
<rect x="3" y="16" width="1" height="446" fill="#0000aa"/>
<rect x="223" y="16" width="1" height="446" fill="#0000aa"/>
<rect x="223" y="15" width="225" height="1" fill="#0000aa"/>
<rect x="223" y="257" width="225" height="1" fill="#0000aa"/>
<rect x="223" y="15" width="1" height="243" fill="#0000aa"/>
<rect x="447" y="15" width="1" height="243" fill="#0000aa"/>
<rect x="224" y="258" width="224" height="1" fill="#ffffff"/>
<rect x="224" y="461" width="224" height="1" fill="#ffffff"/>
<rect x="224" y="258" width="1" height="204" fill="#ffffff"/>
<rect x="447" y="258" width="1" height="204" fill="#ffffff"/>
<rect x="4" y="453" width="97" height="8" fill="#00aaaa"/>
<rect x="225" y="250" width="97" height="8" fill="#00aaaa"/>
<rect x="226" y="453" width="96" height="7" fill="#00aaaa"/>
<rect x="464" y="42" width="41" height="281" fill="#000000"/>
<rect x="465" y="43" width="39" height="8" fill="url(#p1)"/>
<rect x="465" y="52" width="39" height="9" fill="url(#p2)"/>
<rect x="465" y="62" width="39" height="8" fill="url(#p3)"/>
<rect x="465" y="71" width="39" height="8" fill="url(#p4)"/>
<rect x="465" y="80" width="39" height="9" fill="url(#p5)"/>
<rect x="465" y="90" width="39" height="8" fill="url(#p6)"/>
<rect x="465" y="99" width="39" height="8" fill="url(#p7)"/>
<rect x="465" y="108" width="39" height="9" fill="url(#p8)"/>
<rect x="465" y="118" width="39" height="8" fill="url(#p9)"/>
<rect x="465" y="127" width="39" height="8" fill="url(#p10)"/>
<rect x="465" y="136" width="39" height="9" fill="url(#p11)"/>
<rect x="465" y="146" width="39" height="8" fill="url(#p12)"/>
<rect x="465" y="155" width="39" height="8" fill="url(#p13)"/>
<rect x="465" y="164" width="39" height="9" fill="url(#p14)"/>
<rect x="465" y="174" width="39" height="8" fill="url(#p15)"/>
<rect x="465" y="183" width="39" height="8" fill="url(#p16)"/>
<rect x="465" y="192" width="39" height="9" fill="url(#p17)"/>
<rect x="465" y="202" width="39" height="8" fill="url(#p18)"/>
<rect x="465" y="211" width="39" height="8" fill="url(#p19)"/>
<rect x="465" y="220" width="39" height="9" fill="url(#p20)"/>
<rect x="465" y="230" width="39" height="8" fill="url(#p21)"/>
<rect x="465" y="239" width="39" height="8" fill="url(#p22)"/>
<rect x="465" y="248" width="39" height="9" fill="url(#p23)"/>
<rect x="465" y="258" width="39" height="8" fill="url(#p24)"/>
<rect x="465" y="267" width="39" height="8" fill="url(#p25)"/>
<rect x="465" y="276" width="39" height="9" fill="url(#p26)"/>
<rect x="465" y="286" width="39" height="8" fill="url(#p27)"/>
<rect x="465" y="295" width="39" height="8" fill="url(#p28)"/>
<rect x="465" y="304" width="39" height="9" fill="url(#p29)"/>
<rect x="465" y="314" width="39" height="8" fill="url(#p30)"/>
<rect x="448" y="337" width="192" height="13" fill="#aaaaaa"/>
<rect x="448" y="337" width="192" height="1" fill="#ffffff"/>
<rect x="448" y="337" width="1" height="13" fill="#ffffff"/>
<rect x="448" y="349" width="192" height="1" fill="#555555"/>
<rect x="639" y="337" width="1" height="13" fill="#555555"/>
<rect x="448" y="350" width="88" height="14" fill="#aaaaaa"/>
<rect x="448" y="350" width="88" height="1" fill="#ffffff"/>
<rect x="448" y="350" width="1" height="14" fill="#ffffff"/>
<rect x="448" y="363" width="88" height="1" fill="#555555"/>
<rect x="535" y="350" width="1" height="14" fill="#555555"/>
<rect x="536" y="350" width="104" height="14" fill="#aaaaaa"/>
<rect x="536" y="350" width="104" height="1" fill="#555555"/>
<rect x="536" y="350" width="1" height="14" fill="#555555"/>
<rect x="536" y="363" width="104" height="1" fill="#ffffff"/>
<rect x="639" y="350" width="1" height="14" fill="#ffffff"/>
<rect x="448" y="364" width="48" height="13" fill="#aaaaaa"/>
<rect x="448" y="364" width="48" height="1" fill="#ffffff"/>
<rect x="448" y="364" width="1" height="13" fill="#ffffff"/>
<rect x="448" y="376" width="48" height="1" fill="#555555"/>
<rect x="495" y="364" width="1" height="13" fill="#555555"/>
<rect x="496" y="364" width="56" height="13" fill="#aaaaaa"/>
<rect x="496" y="364" width="56" height="1" fill="#ffffff"/>
<rect x="496" y="364" width="1" height="13" fill="#ffffff"/>
<rect x="496" y="376" width="56" height="1" fill="#555555"/>
<rect x="551" y="364" width="1" height="13" fill="#555555"/>
<rect x="552" y="364" width="48" height="13" fill="#aaaaaa"/>
<rect x="552" y="364" width="48" height="1" fill="#ffffff"/>
<rect x="552" y="364" width="1" height="13" fill="#ffffff"/>
<rect x="552" y="376" width="48" height="1" fill="#555555"/>
<rect x="599" y="364" width="1" height="13" fill="#555555"/>
<rect x="600" y="364" width="40" height="13" fill="#aaaaaa"/>
<rect x="600" y="364" width="40" height="1" fill="#ffffff"/>
<rect x="600" y="364" width="1" height="13" fill="#ffffff"/>
<rect x="600" y="376" width="40" height="1" fill="#555555"/>
<rect x="639" y="364" width="1" height="13" fill="#555555"/>
<rect x="448" y="377" width="192" height="2" fill="#aaaaaa"/>
<rect x="448" y="379" width="192" height="83" fill="#aaaaaa"/>
<rect x="448" y="379" width="192" height="1" fill="#ffffff"/>
<rect x="448" y="379" width="1" height="83" fill="#ffffff"/>
<rect x="448" y="461" width="192" height="1" fill="#555555"/>
<rect x="639" y="379" width="1" height="83" fill="#555555"/>
<rect x="452" y="385" width="183" height="1" fill="#555555"/>
<rect x="452" y="453" width="183" height="1" fill="#555555"/>
<rect x="452" y="385" width="1" height="69" fill="#555555"/>
<rect x="634" y="385" width="1" height="69" fill="#555555"/>
<rect x="453" y="386" width="181" height="1" fill="#ffffff"/>
<rect x="453" y="386" width="1" height="67" fill="#ffffff"/>
<rect x="453" y="454" width="183" height="1" fill="#ffffff"/>
<rect x="635" y="385" width="1" height="70" fill="#ffffff"/>
<rect x="456" y="392" width="32" height="14" fill="#aaaaaa"/>
<rect x="456" y="392" width="32" height="1" fill="#555555"/>
<rect x="456" y="392" width="1" height="14" fill="#555555"/>
<rect x="456" y="405" width="32" height="1" fill="#ffffff"/>
<rect x="487" y="392" width="1" height="14" fill="#ffffff"/>
<rect x="456" y="406" width="32" height="14" fill="#aaaaaa"/>
<rect x="456" y="406" width="32" height="1" fill="#555555"/>
<rect x="456" y="406" width="1" height="14" fill="#555555"/>
<rect x="456" y="419" width="32" height="1" fill="#ffffff"/>
<rect x="487" y="406" width="1" height="14" fill="#ffffff"/>
<rect x="456" y="420" width="32" height="14" fill="#aaaaaa"/>
<rect x="456" y="420" width="32" height="1" fill="#555555"/>
<rect x="456" y="420" width="1" height="14" fill="#555555"/>
<rect x="456" y="433" width="32" height="1" fill="#ffffff"/>
<rect x="487" y="420" width="1" height="14" fill="#ffffff"/>
<rect x="456" y="434" width="32" height="14" fill="#aaaaaa"/>
<rect x="456" y="434" width="32" height="1" fill="#555555"/>
<rect x="456" y="434" width="1" height="14" fill="#555555"/>
<rect x="456" y="447" width="32" height="1" fill="#ffffff"/>
<rect x="487" y="434" width="1" height="14" fill="#ffffff"/>
<rect x="571" y="402" width="1" height="36" fill="#ffffff"/>
<rect x="571" y="402" width="34" height="1" fill="#ffffff"/>
</svg>
<div class="t" style="left:8px;top:1px;color:#aaaaaa;">Recipiente da 1000 mc</div>
<div class="t" style="left:456px;top:1px;color:#aaaaaa;">FILE:bin</div>
<div class="t" style="left:456px;top:15px;color:#ffffff;">Contour of σVM MP</div>
<div class="t" style="left:600px;top:15px;color:#0000aa;">W[ 3]</div>
<div class="t" style="left:456px;top:338px;color:#000000;">LINEAR STATIC</div>
<div class="t" style="left:456px;top:351px;color:#000000;">Load Case</div>
<div class="t" style="left:560px;top:351px;color:#555555;">1</div>
<div class="t" style="left:456px;top:365px;color:#000000;"><span style="color:#aa0000">V</span>iew</div>
<div class="t" style="left:504px;top:365px;color:#000000;"><span style="color:#aa0000">R</span>ange</div>
<div class="t" style="left:560px;top:365px;color:#000000;">t<span style="color:#aa0000">Y</span>pe</div>
<div class="t" style="left:608px;top:365px;color:#000000;"><span style="color:#aa0000">O</span>pt</div>
<div class="t" style="left:464px;top:393px;color:#555555;">RX</div>
<div class="t" style="left:504px;top:393px;color:#555555;">90.0</div>
<div class="t" style="left:464px;top:407px;color:#555555;">RY</div>
<div class="t" style="left:512px;top:407px;color:#555555;">0.0</div>
<div class="t" style="left:464px;top:421px;color:#555555;">RZ</div>
<div class="t" style="left:512px;top:421px;color:#555555;">0.0</div>
<div class="t" style="left:464px;top:435px;color:#555555;">DS</div>
<div class="t" style="left:496px;top:435px;color:#555555;">0.0E+00%</div>
<div class="q" style="left:492px;top:35px;color:#ffffff;">&gt;=</div>
<div class="q" style="left:517px;top:35px;color:#ffffff;">1.000E+07</div>
<div class="q" style="left:517px;top:49px;color:#ffffff;">9.670E+06</div>
<div class="q" style="left:517px;top:68px;color:#ffffff;">9.010E+06</div>
<div class="q" style="left:517px;top:87px;color:#ffffff;">8.350E+06</div>
<div class="q" style="left:517px;top:105px;color:#ffffff;">7.690E+06</div>
<div class="q" style="left:517px;top:124px;color:#ffffff;">7.030E+06</div>
<div class="q" style="left:517px;top:143px;color:#ffffff;">6.370E+06</div>
<div class="q" style="left:517px;top:161px;color:#ffffff;">5.710E+06</div>
<div class="q" style="left:517px;top:180px;color:#ffffff;">5.050E+06</div>
<div class="q" style="left:517px;top:199px;color:#ffffff;">4.390E+06</div>
<div class="q" style="left:517px;top:217px;color:#ffffff;">3.730E+06</div>
<div class="q" style="left:517px;top:236px;color:#ffffff;">3.070E+06</div>
<div class="q" style="left:517px;top:255px;color:#ffffff;">2.410E+06</div>
<div class="q" style="left:517px;top:273px;color:#ffffff;">1.750E+06</div>
<div class="q" style="left:517px;top:292px;color:#ffffff;">1.090E+06</div>
<div class="q" style="left:517px;top:311px;color:#ffffff;">4.300E+05</div>
<div class="q" style="left:492px;top:325px;color:#ffffff;">&lt;=</div>
<div class="q" style="left:517px;top:325px;color:#ffffff;">1.000E+05</div>
<div class="q" style="left:574px;top:400px;color:#ffffff;">Y</div>
<div class="q" style="left:607px;top:400px;color:#ffffff;">X</div>
<div class="q" style="left:574px;top:435px;color:#ffffff;">Z</div>
<div class="q v" style="left:5px;top:453px;color:#0000aa;"><b>[</b>1<b>]</b> LINEAR LC: 1</div>
<div class="q v" style="left:226px;top:250px;color:#0000aa;"><b>[</b>2<b>]</b> LINEAR LC: 1</div>
<div class="q v" style="left:227px;top:453px;color:#0000aa;height:6px"><b>[</b>3<b>]</b> LINEAR LC: 1</div>
</div>
</body></html>
